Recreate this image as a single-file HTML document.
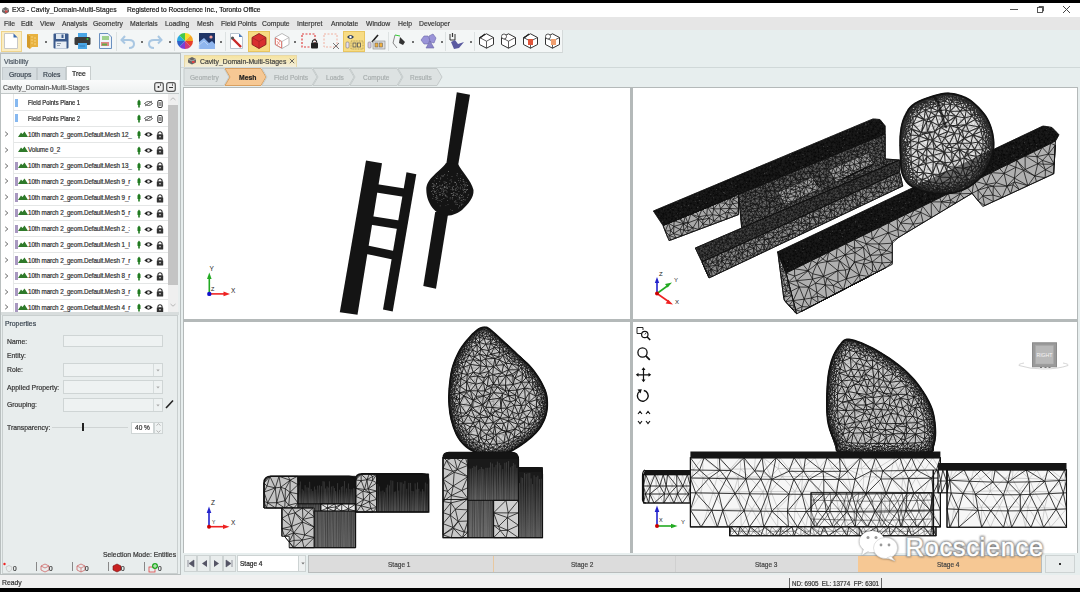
<!DOCTYPE html><html><head><meta charset="utf-8"><style>
*{box-sizing:border-box;margin:0;padding:0}
html,body{width:1080px;height:592px;overflow:hidden;background:#000;font-family:"Liberation Sans",sans-serif}
.a{position:absolute}
.t{position:absolute;white-space:pre;line-height:1;transform-origin:0 0;-webkit-text-stroke:0.2px currentColor}
svg{position:absolute;overflow:visible}
</style></head><body>
<div class="a" style="left:0px;top:0px;width:1080px;height:3px;background:#000"></div>
<div class="a" style="left:0px;top:3px;width:1080px;height:14px;background:#fff"></div>
<svg style="left:0.5px;top:5.5px" width="9" height="9" viewBox="0 0 9 9"><path d="M1 3L4.5 1 8 3 8 6 4.5 8 1 6Z" fill="#6a6a6a"/><path d="M1 3L4.5 5 8 3" stroke="#bbb" stroke-width="0.8" fill="none"/><rect x="4" y="4.5" width="2.5" height="2" fill="#d44"/></svg>
<div class="t" style="left:12px;top:7px;font-size:7.1px;color:#222;transform:scaleX(0.955);">EX3 - Cavity_Domain-Multi-Stages</div>
<div class="t" style="left:127px;top:7px;font-size:7.1px;color:#111;transform:scaleX(0.94);">Registered to Rocscience Inc., Toronto Office</div>
<div class="a" style="left:1010px;top:9px;width:8px;height:1px;background:#555"></div>
<svg style="left:1036px;top:5px" width="9" height="9" viewBox="0 0 9 9"><rect x="1.5" y="2.5" width="5" height="5" fill="none" stroke="#444" stroke-width="0.9"/><path d="M3 2.5V1.5H7.5V6H6.5" fill="none" stroke="#444" stroke-width="0.9"/></svg>
<svg style="left:1062px;top:5px" width="9" height="9" viewBox="0 0 9 9"><path d="M1 1L8 8M8 1L1 8" stroke="#444" stroke-width="1"/></svg>
<div class="a" style="left:0px;top:17px;width:1080px;height:13px;background:#e6e6e6"></div>
<div class="t" style="left:4px;top:20.5px;font-size:7.1px;color:#3a3a3a;transform:scaleX(0.96);">File</div>
<div class="t" style="left:21px;top:20.5px;font-size:7.1px;color:#3a3a3a;transform:scaleX(0.96);">Edit</div>
<div class="t" style="left:40px;top:20.5px;font-size:7.1px;color:#3a3a3a;transform:scaleX(0.96);">View</div>
<div class="t" style="left:62px;top:20.5px;font-size:7.1px;color:#3a3a3a;transform:scaleX(0.96);">Analysis</div>
<div class="t" style="left:93px;top:20.5px;font-size:7.1px;color:#3a3a3a;transform:scaleX(0.96);">Geometry</div>
<div class="t" style="left:130px;top:20.5px;font-size:7.1px;color:#3a3a3a;transform:scaleX(0.96);">Materials</div>
<div class="t" style="left:165px;top:20.5px;font-size:7.1px;color:#3a3a3a;transform:scaleX(0.96);">Loading</div>
<div class="t" style="left:197px;top:20.5px;font-size:7.1px;color:#3a3a3a;transform:scaleX(0.96);">Mesh</div>
<div class="t" style="left:221px;top:20.5px;font-size:7.1px;color:#3a3a3a;transform:scaleX(0.96);">Field Points</div>
<div class="t" style="left:262px;top:20.5px;font-size:7.1px;color:#3a3a3a;transform:scaleX(0.96);">Compute</div>
<div class="t" style="left:297px;top:20.5px;font-size:7.1px;color:#3a3a3a;transform:scaleX(0.96);">Interpret</div>
<div class="t" style="left:331px;top:20.5px;font-size:7.1px;color:#3a3a3a;transform:scaleX(0.96);">Annotate</div>
<div class="t" style="left:366px;top:20.5px;font-size:7.1px;color:#3a3a3a;transform:scaleX(0.96);">Window</div>
<div class="t" style="left:398px;top:20.5px;font-size:7.1px;color:#3a3a3a;transform:scaleX(0.96);">Help</div>
<div class="t" style="left:419px;top:20.5px;font-size:7.1px;color:#3a3a3a;transform:scaleX(0.96);">Developer</div>
<div class="a" style="left:0px;top:30px;width:1080px;height:37px;background:#e7eeee"></div>
<div class="a" style="left:0px;top:30px;width:563px;height:23px;background:#f3f6f6;border-right:1px solid #d5dada;border-bottom:1px solid #d0d6d6"></div>
<svg style="left:1072px;top:59px" width="5" height="4"><path d="M0.5 0.5H4L2.25 3Z" fill="#555"/></svg>
<div class="a" style="left:0px;top:66px;width:1080px;height:1px;background:#d8dede"></div>
<div class="a" style="left:0.5px;top:31px;width:21px;height:21px;background:#fbedc2;border:1px solid #efd48c"></div>
<div class="a" style="left:248px;top:31px;width:22px;height:21px;background:#f7dc84;border:1px solid #e8c560"></div>
<div class="a" style="left:343px;top:31px;width:22px;height:21px;background:#f7dc84;border:1px solid #e8c560"></div>
<svg style="left:4px;top:33px" width="14" height="16" viewBox="0 0 14 16"><path d="M0.5 0.5H9.5L13.5 4.5V15.5H0.5Z" fill="#fff" stroke="#c8c8c8"/><path d="M9.5 0.5L13.5 4.5H9.5Z" fill="#3d6cb0"/></svg>
<svg style="left:26px;top:33px" width="14" height="16" viewBox="0 0 14 16"><path d="M1 1H12V14H6L4 16V3Z" fill="#e8b240"/><path d="M1 1L4 3V16L1 14Z" fill="#d39a2a"/><g fill="#f7d88a"><circle cx="6" cy="4" r=".8"/><circle cx="9" cy="5" r=".8"/><circle cx="6" cy="7" r=".8"/><circle cx="9" cy="8" r=".8"/><circle cx="6" cy="10" r=".8"/><circle cx="9" cy="11" r=".8"/></g></svg>
<div class="a" style="left:45px;top:40.5px;width:2px;height:2px;background:#444;border-radius:1px"></div>
<svg style="left:53px;top:33px" width="16" height="16" viewBox="0 0 16 16"><rect x="0.5" y="0.5" width="15" height="15" rx="1" fill="#3b5a8c"/><rect x="3" y="1" width="9" height="5" fill="#dfe8f2"/><rect x="8.5" y="1.5" width="2" height="3.5" fill="#3b5a8c"/><rect x="2.5" y="8.5" width="11" height="7" fill="#e8eef5"/><path d="M4 10.5H8M4 12.5H7" stroke="#789" stroke-width=".8"/></svg>
<svg style="left:74px;top:33px" width="17" height="16" viewBox="0 0 17 16"><rect x="4" y="0" width="9" height="4" fill="#4aa6e6"/><rect x="0.5" y="4" width="16" height="8" rx="1.5" fill="#3a3a3a"/><circle cx="13.5" cy="6" r="1" fill="#3c3"/><rect x="4" y="10" width="9" height="6" fill="#4aa6e6"/><path d="M5.5 13H11" stroke="#2a70b0" stroke-width=".8"/></svg>
<svg style="left:97px;top:33px" width="16" height="16" viewBox="0 0 16 16"><path d="M2.5 0.5H11L14.5 4V15.5H2.5Z" fill="#eef4fa" stroke="#6a90c0"/><rect x="5" y="3" width="7" height="4" fill="#9ed08e"/><rect x="4" y="9" width="8" height="4" fill="#d88"/><rect x="5" y="10.5" width="5" height="2" fill="#6a4"/></svg>
<div class="a" style="left:116px;top:32px;width:1px;height:19px;background:#dde2e2"></div>
<svg style="left:120px;top:34px" width="16" height="15" viewBox="0 0 16 15"><path d="M5 2L1.5 6 5 9.5M2 6H9Q14 6 14 10Q14 14 9 14" fill="none" stroke="#a9c7e2" stroke-width="2"/></svg>
<div class="a" style="left:140.5px;top:40.5px;width:2px;height:2px;background:#444;border-radius:1px"></div>
<svg style="left:147px;top:34px" width="16" height="15" viewBox="0 0 16 15"><path d="M11 2L14.5 6 11 9.5M14 6H7Q2 6 2 10Q2 14 7 14" fill="none" stroke="#a9c7e2" stroke-width="2"/></svg>
<div class="a" style="left:168.5px;top:40.5px;width:2px;height:2px;background:#444;border-radius:1px"></div>
<div class="a" style="left:174px;top:32px;width:1px;height:19px;background:#dde2e2"></div>
<svg style="left:177px;top:33px" width="16" height="16" viewBox="0 0 16 16"><path d="M8 8L8.00 0.00A8 8 0 0 1 13.66 2.34Z" fill="#f9e02a"/><path d="M8 8L13.66 2.34A8 8 0 0 1 16.00 8.00Z" fill="#f5a623"/><path d="M8 8L16.00 8.00A8 8 0 0 1 13.66 13.66Z" fill="#e8402a"/><path d="M8 8L13.66 13.66A8 8 0 0 1 8.00 16.00Z" fill="#d23a7a"/><path d="M8 8L8.00 16.00A8 8 0 0 1 2.34 13.66Z" fill="#7b3fd6"/><path d="M8 8L2.34 13.66A8 8 0 0 1 0.00 8.00Z" fill="#2f5fc8"/><path d="M8 8L0.00 8.00A8 8 0 0 1 2.34 2.34Z" fill="#2aa8e0"/><path d="M8 8L2.34 2.34A8 8 0 0 1 8.00 0.00Z" fill="#45c84a"/></svg>
<svg style="left:199px;top:33px" width="16" height="16" viewBox="0 0 16 16"><rect width="16" height="16" fill="#1f3566"/><circle cx="12" cy="4" r="1.6" fill="#f4a0a0"/><path d="M0 16V9L5 5 10 10 13 8 16 11V16Z" fill="#8fb6ee"/><path d="M0 16V12L5 8 9 12" fill="none" stroke="#c8dcf8" stroke-width=".7"/></svg>
<div class="a" style="left:219.5px;top:40.5px;width:2px;height:2px;background:#444;border-radius:1px"></div>
<div class="a" style="left:225px;top:32px;width:1px;height:19px;background:#dde2e2"></div>
<svg style="left:229px;top:33px" width="15" height="16" viewBox="0 0 15 16"><path d="M1.5 0.5H10L13.5 4V15.5H1.5Z" fill="#fff" stroke="#b8c4d0"/><path d="M10 0.5L13.5 4H10Z" fill="#4a78b8"/><path d="M3 5L12 14" stroke="#c82828" stroke-width="2.4"/><circle cx="3.5" cy="5" r="1.6" fill="#555"/></svg>
<svg style="left:251px;top:33px" width="16" height="16" viewBox="0 0 16 16"><path d="M8 0.5L15 4.5V11.5L8 15.5 1 11.5V4.5Z" fill="#d83030" stroke="#7a1a1a" stroke-width=".8"/><path d="M1 4.5L8 8.5 15 4.5M8 8.5V15.5" stroke="#9a2020" stroke-width=".6" fill="none"/></svg>
<svg style="left:274px;top:33px" width="16" height="16" viewBox="0 0 16 16"><path d="M8 0.5L15 4.5V11.5L8 15.5 1 11.5V4.5Z" fill="#fff" stroke="#aaa" stroke-width=".8"/><path d="M1 4.5L8 8.5 15 4.5M8 8.5V15.5" stroke="#aaa" stroke-width=".7" fill="none"/><path d="M1.5 5V11.5L7.5 15V8.5Z" fill="none" stroke="#e06a60" stroke-width=".8"/><path d="M3 8L6 12M6 8L3 12" stroke="#e06a60" stroke-width=".6"/></svg>
<div class="a" style="left:294px;top:40.5px;width:2px;height:2px;background:#444;border-radius:1px"></div>
<svg style="left:301px;top:33px" width="18" height="16" viewBox="0 0 18 16"><rect x="1" y="1" width="13" height="13" fill="none" stroke="#e04040" stroke-width="1.2" stroke-dasharray="2 1.5"/><rect x="10" y="9.5" width="7" height="6" rx="1" fill="#222"/><path d="M11.5 9.5V8Q13.5 5.5 15.5 8V9.5" fill="none" stroke="#222" stroke-width="1.2"/></svg>
<svg style="left:323px;top:33px" width="17" height="16" viewBox="0 0 17 16"><rect x="1" y="1" width="13" height="13" fill="none" stroke="#f0b0a0" stroke-width="1" stroke-dasharray="2 1.5"/><path d="M10 10L16 16M16 10L10 16" stroke="#777" stroke-width="1"/></svg>
<svg style="left:345px;top:33px" width="19" height="17" viewBox="0 0 19 17"><path d="M2 4Q5.5 0 9 4Q5.5 8 2 4Z" fill="#2a3a5a"/><circle cx="5.5" cy="4" r="1.2" fill="#fff"/><rect x="1" y="9" width="3" height="6" rx="1" fill="#e8e0f0" stroke="#777" stroke-width=".6"/><rect x="6" y="8" width="12" height="8" fill="none" stroke="#8a7a40" stroke-width=".6" stroke-dasharray="1 .6"/><rect x="8" y="10" width="3" height="4" fill="none" stroke="#555" stroke-width=".8"/><rect x="12.5" y="10" width="3" height="4" fill="none" stroke="#555" stroke-width=".8"/></svg>
<svg style="left:367px;top:33px" width="18" height="17" viewBox="0 0 18 17"><path d="M5 9L11 2" stroke="#222" stroke-width="1.6"/><rect x="1" y="9" width="3" height="6" rx="1" fill="#d8c8e8" stroke="#888" stroke-width=".6"/><rect x="6" y="8" width="12" height="8" fill="#ddd" stroke="#888" stroke-width=".6"/><rect x="8" y="10" width="3" height="4" fill="#f0b040" stroke="#555" stroke-width=".5"/><rect x="12.5" y="10" width="3" height="4" fill="#f0b040" stroke="#555" stroke-width=".5"/></svg>
<div class="a" style="left:388px;top:32px;width:1px;height:19px;background:#dde2e2"></div>
<svg style="left:391px;top:33px" width="17" height="16" viewBox="0 0 17 16"><path d="M4 2L2 10 6 15" fill="none" stroke="#888" stroke-width="1"/><path d="M4 2L9 3" stroke="#3c3" stroke-width="1"/><path d="M9 4L14 9 12 12 8 10Z" fill="#333"/></svg>
<div class="a" style="left:412px;top:40.5px;width:2px;height:2px;background:#444;border-radius:1px"></div>
<svg style="left:420px;top:33px" width="17" height="16" viewBox="0 0 17 16"><path d="M1 7L4 3H8L10 7 8 11H4Z" fill="#9a94d8" stroke="#6a64a8" stroke-width=".6"/><path d="M9 3L13 1 16 5 14 10 10 9Z" fill="#9a94d8" stroke="#6a64a8" stroke-width=".6"/><path d="M10 8L14 15H6Z" fill="#8a84c8" stroke="#6a64a8" stroke-width=".6"/></svg>
<div class="a" style="left:440.5px;top:40.5px;width:2px;height:2px;background:#444;border-radius:1px"></div>
<div class="a" style="left:445px;top:32px;width:1px;height:19px;background:#dde2e2"></div>
<svg style="left:448px;top:33px" width="17" height="16" viewBox="0 0 17 16"><path d="M2 1V7H7V1" fill="none" stroke="#333" stroke-width="1"/><path d="M4.5 0V4" stroke="#333" stroke-width="1.2"/><path d="M3 9L7 7 10 11 16 9 11 15 6 16Z" fill="#5a5aa0"/></svg>
<div class="a" style="left:470px;top:40.5px;width:2px;height:2px;background:#444;border-radius:1px"></div>
<div class="a" style="left:474px;top:32px;width:1px;height:19px;background:#dde2e2"></div>
<svg style="left:478px;top:33px" width="17" height="16" viewBox="0 0 17 16"><path d="M8.5 0.8L15.5 4.5V11.5L8.5 15.2 1.5 11.5V4.5Z" fill="#fff" stroke="#333" stroke-width="1"/><path d="M1.5 4.5L8.5 8.2 15.5 4.5M8.5 8.2V15.2" stroke="#333" stroke-width=".8" fill="none"/><path d="M2 5L7 1" stroke="#222" stroke-width="1.5"/></svg>
<svg style="left:500px;top:33px" width="17" height="16" viewBox="0 0 17 16"><path d="M8.5 0.8L15.5 4.5V11.5L8.5 15.2 1.5 11.5V4.5Z" fill="#fff" stroke="#333" stroke-width="1"/><path d="M1.5 4.5L8.5 8.2 15.5 4.5M8.5 8.2V15.2" stroke="#333" stroke-width=".8" fill="none"/><circle cx="4" cy="3.5" r="2.5" fill="#fff" stroke="#333" stroke-width=".8"/></svg>
<svg style="left:522px;top:33px" width="17" height="16" viewBox="0 0 17 16"><path d="M8.5 0.8L15.5 4.5V11.5L8.5 15.2 1.5 11.5V4.5Z" fill="#fff" stroke="#333" stroke-width="1"/><path d="M1.5 4.5L8.5 8.2 15.5 4.5M8.5 8.2V15.2" stroke="#333" stroke-width=".8" fill="none"/><path d="M2 5L7 1" stroke="#222" stroke-width="1.5"/><rect x="6" y="6" width="5" height="6" fill="#e0553a"/></svg>
<svg style="left:544px;top:33px" width="17" height="16" viewBox="0 0 17 16"><path d="M8.5 0.8L15.5 4.5V11.5L8.5 15.2 1.5 11.5V4.5Z" fill="#fff" stroke="#333" stroke-width="1"/><path d="M1.5 4.5L8.5 8.2 15.5 4.5M8.5 8.2V15.2" stroke="#333" stroke-width=".8" fill="none"/><circle cx="4" cy="3.5" r="2.5" fill="#fff" stroke="#333" stroke-width=".8"/><rect x="7" y="6" width="5" height="6" fill="#f0a070"/></svg>
<div class="a" style="left:0px;top:53px;width:181px;height:522px;background:#e8eeee;border:1px solid #b9bfbf"></div>
<div class="t" style="left:4px;top:59.2px;font-size:7.1px;color:#4a5560;transform:scaleX(0.96);">Visibility</div>
<div class="a" style="left:2px;top:67px;width:35px;height:13px;background:#d5dcdf;border:1px solid #c5cccf;border-bottom:none"></div>
<div class="a" style="left:37px;top:67px;width:29px;height:13px;background:#d5dcdf;border:1px solid #c5cccf;border-bottom:none"></div>
<div class="a" style="left:66px;top:66px;width:25px;height:14px;background:#fff;border:1px solid #c8cece;border-bottom:none"></div>
<div class="t" style="left:9px;top:71.5px;font-size:7.1px;color:#3a4550;transform:scaleX(0.96);">Groups</div>
<div class="t" style="left:43px;top:71.5px;font-size:7.1px;color:#3a4550;transform:scaleX(0.96);">Roles</div>
<div class="t" style="left:72px;top:70.5px;font-size:7.1px;color:#222;transform:scaleX(0.96);">Tree</div>
<div class="a" style="left:1px;top:80px;width:178px;height:14px;background:linear-gradient(#fafbfb,#eef1f1);border-bottom:1px solid #c2c8c8"></div>
<div class="t" style="left:3px;top:84.5px;font-size:7.1px;color:#555;transform:scaleX(0.96);">Cavity_Domain-Multi-Stages</div>
<svg style="left:154px;top:82px" width="10" height="10" viewBox="0 0 10 10"><rect x=".7" y=".7" width="8.6" height="8.6" rx="2" fill="#eee" stroke="#555" stroke-width="1.2"/><circle cx="4.5" cy="5" r="1" fill="#222"/><path d="M6.5 1.5V4" stroke="#555" stroke-width=".8"/></svg>
<svg style="left:166px;top:82px" width="10" height="10" viewBox="0 0 10 10"><rect x=".7" y=".7" width="8.6" height="8.6" rx="2" fill="#eee" stroke="#555" stroke-width="1.2"/><path d="M3 5.5H7" stroke="#333" stroke-width="1"/><path d="M6.5 1.5V4" stroke="#555" stroke-width=".8"/></svg>
<div class="a" style="left:1px;top:94px;width:167px;height:218px;background:#fff"></div>
<div class="a" style="left:13px;top:94px;width:1px;height:218px;background:#e6e8e8"></div>
<div class="a" style="left:0;top:93.5px;width:181px;height:218.5px;overflow:hidden">
<div class="a" style="left:14px;top:16.50px;width:154px;height:1px;background:#e4e6e6"></div>
<div class="a" style="left:15px;top:5.00px;width:2.5px;height:8px;background:#86b8f0"></div>
<div class="t" style="left:28px;top:6.50px;font-size:6.3px;color:#2a2a2a;transform:scaleX(0.93)">Field Points Plane 1</div>
<svg style="left:137px;top:5.00px" width="4" height="9"><path d="M2 0.5L3.5 2.5V6H2.8V8.5H1.2V6H0.5V2.5Z" fill="#1f7a1f"/></svg>
<svg style="left:144px;top:6.00px" width="9" height="7"><path d="M0.5 3.5Q4.5 -0.5 8.5 3.5Q4.5 7.5 0.5 3.5Z" fill="none" stroke="#444" stroke-width=".9"/><path d="M1 6L8 1" stroke="#444" stroke-width=".8"/></svg>
<svg style="left:157px;top:5.00px" width="6" height="9"><rect x=".8" y="1.5" width="4.4" height="7" rx="1.2" fill="#fff" stroke="#333" stroke-width="1"/><path d="M2.3 3V7M3.7 3V7" stroke="#333" stroke-width=".6"/></svg>
<div class="a" style="left:14px;top:32.25px;width:154px;height:1px;background:#e4e6e6"></div>
<div class="a" style="left:15px;top:20.75px;width:2.5px;height:8px;background:#86b8f0"></div>
<div class="t" style="left:28px;top:22.25px;font-size:6.3px;color:#2a2a2a;transform:scaleX(0.93)">Field Points Plane 2</div>
<svg style="left:137px;top:20.75px" width="4" height="9"><path d="M2 0.5L3.5 2.5V6H2.8V8.5H1.2V6H0.5V2.5Z" fill="#1f7a1f"/></svg>
<svg style="left:144px;top:21.75px" width="9" height="7"><path d="M0.5 3.5Q4.5 -0.5 8.5 3.5Q4.5 7.5 0.5 3.5Z" fill="none" stroke="#444" stroke-width=".9"/><path d="M1 6L8 1" stroke="#444" stroke-width=".8"/></svg>
<svg style="left:157px;top:20.75px" width="6" height="9"><rect x=".8" y="1.5" width="4.4" height="7" rx="1.2" fill="#fff" stroke="#333" stroke-width="1"/><path d="M2.3 3V7M3.7 3V7" stroke="#333" stroke-width=".6"/></svg>
<div class="a" style="left:14px;top:48.00px;width:154px;height:1px;background:#e4e6e6"></div>
<svg style="left:4px;top:37.50px" width="5" height="6"><path d="M1.2 .8L3.8 3 1.2 5.2" fill="none" stroke="#555" stroke-width=".9"/></svg>
<svg style="left:18px;top:37.00px" width="10" height="6"><path d="M0 6L3 1.5 4.5 3 6.5 0.5 10 6Z" fill="#2f7a2a"/></svg>
<div class="t" style="left:28px;top:38.00px;font-size:6.3px;color:#333;letter-spacing:-0.1px">10th march 2_geom.Default.Mesh 12_</div>
<svg style="left:137px;top:36.50px" width="4" height="9"><path d="M2 0.5L3.5 2.5V6H2.8V8.5H1.2V6H0.5V2.5Z" fill="#1f7a1f"/></svg>
<svg style="left:144px;top:37.50px" width="9" height="7"><path d="M0.3 3.5Q4.5 -0.8 8.7 3.5Q4.5 7.8 0.3 3.5Z" fill="#222"/><circle cx="4.5" cy="3.5" r="1.3" fill="#eee"/></svg>
<svg style="left:156px;top:36.00px" width="8" height="10"><path d="M2 4.5V3Q4 0.5 6 3V4.5" fill="none" stroke="#333" stroke-width="1.2"/><rect x=".8" y="4.3" width="6.4" height="5.2" rx=".6" fill="#333"/><circle cx="4" cy="6.8" r=".8" fill="#eee"/></svg>
<div class="a" style="left:14px;top:63.75px;width:154px;height:1px;background:#e4e6e6"></div>
<svg style="left:4px;top:53.25px" width="5" height="6"><path d="M1.2 .8L3.8 3 1.2 5.2" fill="none" stroke="#555" stroke-width=".9"/></svg>
<svg style="left:18px;top:52.75px" width="10" height="6"><path d="M0 6L3 1.5 4.5 3 6.5 0.5 10 6Z" fill="#2f7a2a"/></svg>
<div class="t" style="left:28px;top:53.75px;font-size:6.3px;color:#333;letter-spacing:-0.1px">Volume 0_2</div>
<svg style="left:137px;top:52.25px" width="4" height="9"><path d="M2 0.5L3.5 2.5V6H2.8V8.5H1.2V6H0.5V2.5Z" fill="#1f7a1f"/></svg>
<svg style="left:144px;top:53.25px" width="9" height="7"><path d="M0.3 3.5Q4.5 -0.8 8.7 3.5Q4.5 7.8 0.3 3.5Z" fill="#222"/><circle cx="4.5" cy="3.5" r="1.3" fill="#eee"/></svg>
<svg style="left:156px;top:51.75px" width="8" height="10"><path d="M2 4.5V3Q4 0.5 6 3V4.5" fill="none" stroke="#333" stroke-width="1.2"/><rect x=".8" y="4.3" width="6.4" height="5.2" rx=".6" fill="#333"/><circle cx="4" cy="6.8" r=".8" fill="#eee"/></svg>
<div class="a" style="left:14px;top:79.50px;width:154px;height:1px;background:#e4e6e6"></div>
<svg style="left:4px;top:69.00px" width="5" height="6"><path d="M1.2 .8L3.8 3 1.2 5.2" fill="none" stroke="#555" stroke-width=".9"/></svg>
<div class="a" style="left:15px;top:68.00px;width:2.5px;height:8.5px;background:#a898c0"></div>
<svg style="left:18px;top:68.50px" width="10" height="6"><path d="M0 6L3 1.5 4.5 3 6.5 0.5 10 6Z" fill="#2f7a2a"/></svg>
<div class="t" style="left:28px;top:69.50px;font-size:6.3px;color:#333;letter-spacing:-0.1px">10th march 2_geom.Default.Mesh 13_</div>
<svg style="left:137px;top:68.00px" width="4" height="9"><path d="M2 0.5L3.5 2.5V6H2.8V8.5H1.2V6H0.5V2.5Z" fill="#1f7a1f"/></svg>
<svg style="left:144px;top:69.00px" width="9" height="7"><path d="M0.3 3.5Q4.5 -0.8 8.7 3.5Q4.5 7.8 0.3 3.5Z" fill="#222"/><circle cx="4.5" cy="3.5" r="1.3" fill="#eee"/></svg>
<svg style="left:156px;top:67.50px" width="8" height="10"><path d="M2 4.5V3Q4 0.5 6 3V4.5" fill="none" stroke="#333" stroke-width="1.2"/><rect x=".8" y="4.3" width="6.4" height="5.2" rx=".6" fill="#333"/><circle cx="4" cy="6.8" r=".8" fill="#eee"/></svg>
<div class="a" style="left:14px;top:95.25px;width:154px;height:1px;background:#e4e6e6"></div>
<svg style="left:4px;top:84.75px" width="5" height="6"><path d="M1.2 .8L3.8 3 1.2 5.2" fill="none" stroke="#555" stroke-width=".9"/></svg>
<div class="a" style="left:15px;top:83.75px;width:2.5px;height:8.5px;background:#a898c0"></div>
<svg style="left:18px;top:84.25px" width="10" height="6"><path d="M0 6L3 1.5 4.5 3 6.5 0.5 10 6Z" fill="#2f7a2a"/></svg>
<div class="t" style="left:28px;top:85.25px;font-size:6.3px;color:#333;letter-spacing:-0.1px">10th march 2_geom.Default.Mesh 9_r</div>
<svg style="left:137px;top:83.75px" width="4" height="9"><path d="M2 0.5L3.5 2.5V6H2.8V8.5H1.2V6H0.5V2.5Z" fill="#1f7a1f"/></svg>
<svg style="left:144px;top:84.75px" width="9" height="7"><path d="M0.3 3.5Q4.5 -0.8 8.7 3.5Q4.5 7.8 0.3 3.5Z" fill="#222"/><circle cx="4.5" cy="3.5" r="1.3" fill="#eee"/></svg>
<svg style="left:156px;top:83.25px" width="8" height="10"><path d="M2 4.5V3Q4 0.5 6 3V4.5" fill="none" stroke="#333" stroke-width="1.2"/><rect x=".8" y="4.3" width="6.4" height="5.2" rx=".6" fill="#333"/><circle cx="4" cy="6.8" r=".8" fill="#eee"/></svg>
<div class="a" style="left:14px;top:111.00px;width:154px;height:1px;background:#e4e6e6"></div>
<svg style="left:4px;top:100.50px" width="5" height="6"><path d="M1.2 .8L3.8 3 1.2 5.2" fill="none" stroke="#555" stroke-width=".9"/></svg>
<div class="a" style="left:15px;top:99.50px;width:2.5px;height:8.5px;background:#a898c0"></div>
<svg style="left:18px;top:100.00px" width="10" height="6"><path d="M0 6L3 1.5 4.5 3 6.5 0.5 10 6Z" fill="#2f7a2a"/></svg>
<div class="t" style="left:28px;top:101.00px;font-size:6.3px;color:#333;letter-spacing:-0.1px">10th march 2_geom.Default.Mesh 9_r</div>
<svg style="left:137px;top:99.50px" width="4" height="9"><path d="M2 0.5L3.5 2.5V6H2.8V8.5H1.2V6H0.5V2.5Z" fill="#1f7a1f"/></svg>
<svg style="left:144px;top:100.50px" width="9" height="7"><path d="M0.3 3.5Q4.5 -0.8 8.7 3.5Q4.5 7.8 0.3 3.5Z" fill="#222"/><circle cx="4.5" cy="3.5" r="1.3" fill="#eee"/></svg>
<svg style="left:156px;top:99.00px" width="8" height="10"><path d="M2 4.5V3Q4 0.5 6 3V4.5" fill="none" stroke="#333" stroke-width="1.2"/><rect x=".8" y="4.3" width="6.4" height="5.2" rx=".6" fill="#333"/><circle cx="4" cy="6.8" r=".8" fill="#eee"/></svg>
<div class="a" style="left:14px;top:126.75px;width:154px;height:1px;background:#e4e6e6"></div>
<svg style="left:4px;top:116.25px" width="5" height="6"><path d="M1.2 .8L3.8 3 1.2 5.2" fill="none" stroke="#555" stroke-width=".9"/></svg>
<div class="a" style="left:15px;top:115.25px;width:2.5px;height:8.5px;background:#a898c0"></div>
<svg style="left:18px;top:115.75px" width="10" height="6"><path d="M0 6L3 1.5 4.5 3 6.5 0.5 10 6Z" fill="#2f7a2a"/></svg>
<div class="t" style="left:28px;top:116.75px;font-size:6.3px;color:#333;letter-spacing:-0.1px">10th march 2_geom.Default.Mesh 5_r</div>
<svg style="left:137px;top:115.25px" width="4" height="9"><path d="M2 0.5L3.5 2.5V6H2.8V8.5H1.2V6H0.5V2.5Z" fill="#1f7a1f"/></svg>
<svg style="left:144px;top:116.25px" width="9" height="7"><path d="M0.3 3.5Q4.5 -0.8 8.7 3.5Q4.5 7.8 0.3 3.5Z" fill="#222"/><circle cx="4.5" cy="3.5" r="1.3" fill="#eee"/></svg>
<svg style="left:156px;top:114.75px" width="8" height="10"><path d="M2 4.5V3Q4 0.5 6 3V4.5" fill="none" stroke="#333" stroke-width="1.2"/><rect x=".8" y="4.3" width="6.4" height="5.2" rx=".6" fill="#333"/><circle cx="4" cy="6.8" r=".8" fill="#eee"/></svg>
<div class="a" style="left:14px;top:142.50px;width:154px;height:1px;background:#e4e6e6"></div>
<svg style="left:4px;top:132.00px" width="5" height="6"><path d="M1.2 .8L3.8 3 1.2 5.2" fill="none" stroke="#555" stroke-width=".9"/></svg>
<div class="a" style="left:15px;top:131.00px;width:2.5px;height:8.5px;background:#a898c0"></div>
<svg style="left:18px;top:131.50px" width="10" height="6"><path d="M0 6L3 1.5 4.5 3 6.5 0.5 10 6Z" fill="#2f7a2a"/></svg>
<div class="t" style="left:28px;top:132.50px;font-size:6.3px;color:#333;letter-spacing:-0.1px">10th march 2_geom.Default.Mesh 2_:</div>
<svg style="left:137px;top:131.00px" width="4" height="9"><path d="M2 0.5L3.5 2.5V6H2.8V8.5H1.2V6H0.5V2.5Z" fill="#1f7a1f"/></svg>
<svg style="left:144px;top:132.00px" width="9" height="7"><path d="M0.3 3.5Q4.5 -0.8 8.7 3.5Q4.5 7.8 0.3 3.5Z" fill="#222"/><circle cx="4.5" cy="3.5" r="1.3" fill="#eee"/></svg>
<svg style="left:156px;top:130.50px" width="8" height="10"><path d="M2 4.5V3Q4 0.5 6 3V4.5" fill="none" stroke="#333" stroke-width="1.2"/><rect x=".8" y="4.3" width="6.4" height="5.2" rx=".6" fill="#333"/><circle cx="4" cy="6.8" r=".8" fill="#eee"/></svg>
<div class="a" style="left:14px;top:158.25px;width:154px;height:1px;background:#e4e6e6"></div>
<svg style="left:4px;top:147.75px" width="5" height="6"><path d="M1.2 .8L3.8 3 1.2 5.2" fill="none" stroke="#555" stroke-width=".9"/></svg>
<div class="a" style="left:15px;top:146.75px;width:2.5px;height:8.5px;background:#a898c0"></div>
<svg style="left:18px;top:147.25px" width="10" height="6"><path d="M0 6L3 1.5 4.5 3 6.5 0.5 10 6Z" fill="#2f7a2a"/></svg>
<div class="t" style="left:28px;top:148.25px;font-size:6.3px;color:#333;letter-spacing:-0.1px">10th march 2_geom.Default.Mesh 1_I</div>
<svg style="left:137px;top:146.75px" width="4" height="9"><path d="M2 0.5L3.5 2.5V6H2.8V8.5H1.2V6H0.5V2.5Z" fill="#1f7a1f"/></svg>
<svg style="left:144px;top:147.75px" width="9" height="7"><path d="M0.3 3.5Q4.5 -0.8 8.7 3.5Q4.5 7.8 0.3 3.5Z" fill="#222"/><circle cx="4.5" cy="3.5" r="1.3" fill="#eee"/></svg>
<svg style="left:156px;top:146.25px" width="8" height="10"><path d="M2 4.5V3Q4 0.5 6 3V4.5" fill="none" stroke="#333" stroke-width="1.2"/><rect x=".8" y="4.3" width="6.4" height="5.2" rx=".6" fill="#333"/><circle cx="4" cy="6.8" r=".8" fill="#eee"/></svg>
<div class="a" style="left:14px;top:174.00px;width:154px;height:1px;background:#e4e6e6"></div>
<svg style="left:4px;top:163.50px" width="5" height="6"><path d="M1.2 .8L3.8 3 1.2 5.2" fill="none" stroke="#555" stroke-width=".9"/></svg>
<div class="a" style="left:15px;top:162.50px;width:2.5px;height:8.5px;background:#a898c0"></div>
<svg style="left:18px;top:163.00px" width="10" height="6"><path d="M0 6L3 1.5 4.5 3 6.5 0.5 10 6Z" fill="#2f7a2a"/></svg>
<div class="t" style="left:28px;top:164.00px;font-size:6.3px;color:#333;letter-spacing:-0.1px">10th march 2_geom.Default.Mesh 7_r</div>
<svg style="left:137px;top:162.50px" width="4" height="9"><path d="M2 0.5L3.5 2.5V6H2.8V8.5H1.2V6H0.5V2.5Z" fill="#1f7a1f"/></svg>
<svg style="left:144px;top:163.50px" width="9" height="7"><path d="M0.3 3.5Q4.5 -0.8 8.7 3.5Q4.5 7.8 0.3 3.5Z" fill="#222"/><circle cx="4.5" cy="3.5" r="1.3" fill="#eee"/></svg>
<svg style="left:156px;top:162.00px" width="8" height="10"><path d="M2 4.5V3Q4 0.5 6 3V4.5" fill="none" stroke="#333" stroke-width="1.2"/><rect x=".8" y="4.3" width="6.4" height="5.2" rx=".6" fill="#333"/><circle cx="4" cy="6.8" r=".8" fill="#eee"/></svg>
<div class="a" style="left:14px;top:189.75px;width:154px;height:1px;background:#e4e6e6"></div>
<svg style="left:4px;top:179.25px" width="5" height="6"><path d="M1.2 .8L3.8 3 1.2 5.2" fill="none" stroke="#555" stroke-width=".9"/></svg>
<div class="a" style="left:15px;top:178.25px;width:2.5px;height:8.5px;background:#a898c0"></div>
<svg style="left:18px;top:178.75px" width="10" height="6"><path d="M0 6L3 1.5 4.5 3 6.5 0.5 10 6Z" fill="#2f7a2a"/></svg>
<div class="t" style="left:28px;top:179.75px;font-size:6.3px;color:#333;letter-spacing:-0.1px">10th march 2_geom.Default.Mesh 8_r</div>
<svg style="left:137px;top:178.25px" width="4" height="9"><path d="M2 0.5L3.5 2.5V6H2.8V8.5H1.2V6H0.5V2.5Z" fill="#1f7a1f"/></svg>
<svg style="left:144px;top:179.25px" width="9" height="7"><path d="M0.3 3.5Q4.5 -0.8 8.7 3.5Q4.5 7.8 0.3 3.5Z" fill="#222"/><circle cx="4.5" cy="3.5" r="1.3" fill="#eee"/></svg>
<svg style="left:156px;top:177.75px" width="8" height="10"><path d="M2 4.5V3Q4 0.5 6 3V4.5" fill="none" stroke="#333" stroke-width="1.2"/><rect x=".8" y="4.3" width="6.4" height="5.2" rx=".6" fill="#333"/><circle cx="4" cy="6.8" r=".8" fill="#eee"/></svg>
<div class="a" style="left:14px;top:205.50px;width:154px;height:1px;background:#e4e6e6"></div>
<svg style="left:4px;top:195.00px" width="5" height="6"><path d="M1.2 .8L3.8 3 1.2 5.2" fill="none" stroke="#555" stroke-width=".9"/></svg>
<div class="a" style="left:15px;top:194.00px;width:2.5px;height:8.5px;background:#a898c0"></div>
<svg style="left:18px;top:194.50px" width="10" height="6"><path d="M0 6L3 1.5 4.5 3 6.5 0.5 10 6Z" fill="#2f7a2a"/></svg>
<div class="t" style="left:28px;top:195.50px;font-size:6.3px;color:#333;letter-spacing:-0.1px">10th march 2_geom.Default.Mesh 3_r</div>
<svg style="left:137px;top:194.00px" width="4" height="9"><path d="M2 0.5L3.5 2.5V6H2.8V8.5H1.2V6H0.5V2.5Z" fill="#1f7a1f"/></svg>
<svg style="left:144px;top:195.00px" width="9" height="7"><path d="M0.3 3.5Q4.5 -0.8 8.7 3.5Q4.5 7.8 0.3 3.5Z" fill="#222"/><circle cx="4.5" cy="3.5" r="1.3" fill="#eee"/></svg>
<svg style="left:156px;top:193.50px" width="8" height="10"><path d="M2 4.5V3Q4 0.5 6 3V4.5" fill="none" stroke="#333" stroke-width="1.2"/><rect x=".8" y="4.3" width="6.4" height="5.2" rx=".6" fill="#333"/><circle cx="4" cy="6.8" r=".8" fill="#eee"/></svg>
<div class="a" style="left:14px;top:221.25px;width:154px;height:1px;background:#e4e6e6"></div>
<svg style="left:4px;top:210.75px" width="5" height="6"><path d="M1.2 .8L3.8 3 1.2 5.2" fill="none" stroke="#555" stroke-width=".9"/></svg>
<div class="a" style="left:15px;top:209.75px;width:2.5px;height:8.5px;background:#a898c0"></div>
<svg style="left:18px;top:210.25px" width="10" height="6"><path d="M0 6L3 1.5 4.5 3 6.5 0.5 10 6Z" fill="#2f7a2a"/></svg>
<div class="t" style="left:28px;top:211.25px;font-size:6.3px;color:#333;letter-spacing:-0.1px">10th march 2_geom.Default.Mesh 4_r</div>
<svg style="left:137px;top:209.75px" width="4" height="9"><path d="M2 0.5L3.5 2.5V6H2.8V8.5H1.2V6H0.5V2.5Z" fill="#1f7a1f"/></svg>
<svg style="left:144px;top:210.75px" width="9" height="7"><path d="M0.3 3.5Q4.5 -0.8 8.7 3.5Q4.5 7.8 0.3 3.5Z" fill="#222"/><circle cx="4.5" cy="3.5" r="1.3" fill="#eee"/></svg>
<svg style="left:156px;top:209.25px" width="8" height="10"><path d="M2 4.5V3Q4 0.5 6 3V4.5" fill="none" stroke="#333" stroke-width="1.2"/><rect x=".8" y="4.3" width="6.4" height="5.2" rx=".6" fill="#333"/><circle cx="4" cy="6.8" r=".8" fill="#eee"/></svg>
</div>
<div class="a" style="left:168px;top:94px;width:10px;height:218px;background:#efefef"></div>
<div class="a" style="left:168px;top:105px;width:10px;height:180px;background:#c4c4c4"></div>
<svg style="left:170px;top:97px" width="6" height="4"><path d="M.5 3L3 .8 5.5 3" fill="none" stroke="#aaa" stroke-width=".8"/></svg>
<svg style="left:170px;top:303px" width="6" height="4"><path d="M.5 1L3 3.2 5.5 1" fill="none" stroke="#aaa" stroke-width=".8"/></svg>
<div class="a" style="left:1px;top:312px;width:178px;height:3px;background:#d8dddd"></div>
<div class="a" style="left:2px;top:315px;width:176px;height:259px;background:#e8eded;border:1px solid #c9cfcf"></div>
<div class="t" style="left:4.5px;top:320.5px;font-size:7.1px;color:#3a4550;transform:scaleX(0.96);">Properties</div>
<div class="t" style="left:7px;top:338.5px;font-size:7.1px;color:#333;transform:scaleX(0.96);">Name:</div>
<div class="a" style="left:62.5px;top:334.5px;width:100px;height:12px;background:#eef2f2;border:1px solid #cfd5d5"></div>
<div class="t" style="left:7px;top:352.5px;font-size:7.1px;color:#333;transform:scaleX(0.96);">Entity:</div>
<div class="t" style="left:7px;top:367px;font-size:7.1px;color:#333;transform:scaleX(0.96);">Role:</div>
<div class="a" style="left:62.5px;top:362.5px;width:100px;height:14px;background:#eef2f2;border:1px solid #cfd5d5"></div>
<div class="a" style="left:152.5px;top:363.5px;width:1px;height:12px;background:#d6dcdc"></div>
<svg style="left:155.5px;top:368.5px" width="4" height="3"><path d="M.3 .5H3.7L2 2.5Z" fill="#aaa"/></svg>
<div class="t" style="left:7px;top:385px;font-size:7.1px;color:#333;transform:scaleX(0.96);">Applied Property:</div>
<div class="a" style="left:62.5px;top:380px;width:100px;height:13.5px;background:#eef2f2;border:1px solid #cfd5d5"></div>
<div class="a" style="left:152.5px;top:381px;width:1px;height:11.5px;background:#d6dcdc"></div>
<svg style="left:155.5px;top:385.75px" width="4" height="3"><path d="M.3 .5H3.7L2 2.5Z" fill="#aaa"/></svg>
<div class="t" style="left:7px;top:402px;font-size:7.1px;color:#333;transform:scaleX(0.96);">Grouping:</div>
<div class="a" style="left:62.5px;top:397.5px;width:100px;height:14px;background:#eef2f2;border:1px solid #cfd5d5"></div>
<div class="a" style="left:152.5px;top:398.5px;width:1px;height:12px;background:#d6dcdc"></div>
<svg style="left:155.5px;top:403.5px" width="4" height="3"><path d="M.3 .5H3.7L2 2.5Z" fill="#aaa"/></svg>
<svg style="left:165px;top:399px" width="9" height="10" viewBox="0 0 9 10"><path d="M1 9L8 1.5" stroke="#222" stroke-width="1.6"/></svg>
<div class="t" style="left:7px;top:424.5px;font-size:7.1px;color:#333;transform:scaleX(0.96);">Transparency:</div>
<div class="a" style="left:52px;top:426.5px;width:76px;height:1px;background:#cfd4d4"></div>
<div class="a" style="left:81.5px;top:423px;width:2.5px;height:8px;background:#222"></div>
<div class="a" style="left:131px;top:421.5px;width:23px;height:12px;background:#fff;border:1px solid #cfd5d5"></div>
<div class="t" style="left:134.5px;top:425px;font-size:6.8px;color:#333;transform:scaleX(0.96);">40 %</div>
<div class="a" style="left:154px;top:421.5px;width:8.5px;height:12px;background:#eef2f2;border:1px solid #cfd5d5"></div>
<svg style="left:156px;top:423px" width="5" height="10"><path d="M.5 2.5L2.5 .7 4.5 2.5M.5 7.5L2.5 9.3 4.5 7.5" fill="none" stroke="#999" stroke-width=".7"/></svg>
<div class="t" style="left:103px;top:552px;font-size:7.1px;color:#333;transform:scaleX(0.96);">Selection Mode: Entities</div>
<svg style="left:3px;top:562px" width="11" height="11" viewBox="0 0 11 11"><circle cx="1.5" cy="2" r="1.2" fill="#e22"/><path d="M3 5Q6 2 9 5Q9 9 6 10Q3 9 3 5Z" fill="none" stroke="#bbb" stroke-width=".7"/></svg>
<div class="t" style="left:13px;top:566px;font-size:6.8px;color:#333;transform:scaleX(0.96);">0</div>
<svg style="left:39px;top:562px" width="11" height="11" viewBox="0 0 11 11"><path d="M2 4L6 2 10 4 10 8 6 10 2 8Z" fill="none" stroke="#c55" stroke-width=".7"/><path d="M2 4L6 6 10 4" stroke="#c55" stroke-width=".7" fill="none"/></svg>
<div class="t" style="left:49px;top:566px;font-size:6.8px;color:#333;transform:scaleX(0.96);">0</div>
<svg style="left:75px;top:562px" width="11" height="11" viewBox="0 0 11 11"><path d="M2 4L6 2 10 4 10 8 6 10 2 8Z" fill="none" stroke="#c66" stroke-width=".8"/><path d="M2 4L6 6 10 4M6 6V10" stroke="#c66" stroke-width=".7" fill="none"/></svg>
<div class="t" style="left:85px;top:566px;font-size:6.8px;color:#333;transform:scaleX(0.96);">0</div>
<svg style="left:111px;top:562px" width="11" height="11" viewBox="0 0 11 11"><path d="M2 4L6 2 10 4 10 8 6 10 2 8Z" fill="#c82020" stroke="#701010" stroke-width=".6"/></svg>
<div class="t" style="left:121px;top:566px;font-size:6.8px;color:#333;transform:scaleX(0.96);">0</div>
<svg style="left:148px;top:562px" width="11" height="11" viewBox="0 0 11 11"><rect x="1" y="5" width="6" height="5" fill="none" stroke="#d44" stroke-width=".8"/><circle cx="7" cy="4" r="3" fill="#2a2"/><path d="M5 4H9M7 2V6" stroke="#fff" stroke-width=".8"/></svg>
<div class="t" style="left:158px;top:566px;font-size:6.8px;color:#333;transform:scaleX(0.96);">0</div>
<div class="a" style="left:36px;top:562px;width:1px;height:9px;background:#888"></div>
<div class="a" style="left:72px;top:562px;width:1px;height:9px;background:#888"></div>
<div class="a" style="left:108px;top:562px;width:1px;height:9px;background:#888"></div>
<div class="a" style="left:144px;top:562px;width:1px;height:9px;background:#888"></div>
<div class="a" style="left:0px;top:575px;width:1080px;height:13px;background:#f0f0f0"></div>
<div class="t" style="left:2px;top:580px;font-size:7.1px;color:#333;transform:scaleX(0.96);">Ready</div>
<div class="a" style="left:789px;top:578px;width:1px;height:10px;background:#666"></div>
<div class="t" style="left:792px;top:581px;font-size:6.5px;color:#333;transform:scaleX(0.96);">ND: 6905  EL: 13774  FP: 6301</div>
<div class="a" style="left:881px;top:578px;width:1px;height:10px;background:#666"></div>
<div class="a" style="left:0px;top:588px;width:1080px;height:4px;background:#000"></div>
<div class="a" style="left:181px;top:53px;width:899px;height:522px;background:#e7eeee"></div>
<div class="a" style="left:184px;top:54.5px;width:113px;height:12px;background:linear-gradient(#f6e4a0,#f2eedd);border:1px solid #e8d8a8;border-bottom:none"></div>
<svg style="left:187px;top:56px" width="10" height="9" viewBox="0 0 10 9"><path d="M1 3L5 1 9 3V6.5L5 8.5 1 6.5Z" fill="#666"/><path d="M1 3L5 5 9 3" stroke="#ccc" stroke-width=".7" fill="none"/><rect x="5" y="5" width="2.6" height="2" fill="#d44"/></svg>
<div class="t" style="left:199.5px;top:58.5px;font-size:7.1px;color:#444;transform:scaleX(0.96);">Cavity_Domain-Multi-Stages</div>
<svg style="left:289px;top:57.5px" width="6" height="6" viewBox="0 0 6 6"><path d="M.8 .8L5.2 5.2M5.2 .8L.8 5.2" stroke="#555" stroke-width=".9"/></svg>
<div class="a" style="left:181px;top:66.5px;width:899px;height:1px;background:#d0d8d8"></div>
<svg style="left:0px;top:0px" width="1080" height="100" viewBox="0 0 1080 100"><path d="M184 68.5H224L229 77.0L224 85.5H184Z" fill="#dde2e2" stroke="#c5cbcb" stroke-width="1"/><path d="M225 68.5H261L266 77.0L261 85.5H225L230 77.0Z" fill="#f6c894" stroke="#d9a060" stroke-width="1"/><path d="M262 68.5H312L317 77.0L312 85.5H262L267 77.0Z" fill="#dde2e2" stroke="#c5cbcb" stroke-width="1"/><path d="M313 68.5H349L354 77.0L349 85.5H313L318 77.0Z" fill="#dde2e2" stroke="#c5cbcb" stroke-width="1"/><path d="M350 68.5H397L402 77.0L397 85.5H350L355 77.0Z" fill="#dde2e2" stroke="#c5cbcb" stroke-width="1"/><path d="M398 68.5H437L442 77.0L437 85.5H398L403 77.0Z" fill="#dde2e2" stroke="#c5cbcb" stroke-width="1"/></svg>
<div class="t" style="left:190.0px;top:74.5px;font-size:7.1px;color:#a8aeae;transform:scaleX(0.92);">Geometry</div>
<div class="t" style="left:238.5px;top:74.5px;font-size:7.1px;color:#222;transform:scaleX(0.96);"><b>Mesh</b></div>
<div class="t" style="left:274.0px;top:74.5px;font-size:7.1px;color:#a8aeae;transform:scaleX(0.92);">Field Points</div>
<div class="t" style="left:326.0px;top:74.5px;font-size:7.1px;color:#a8aeae;transform:scaleX(0.92);">Loads</div>
<div class="t" style="left:363.0px;top:74.5px;font-size:7.1px;color:#a8aeae;transform:scaleX(0.92);">Compute</div>
<div class="t" style="left:410.0px;top:74.5px;font-size:7.1px;color:#a8aeae;transform:scaleX(0.92);">Results</div>
<div class="a" style="left:183px;top:87px;width:895px;height:466px;background:#b4b9b9"></div>
<div class="a" style="left:184px;top:88px;width:445.5px;height:231px;background:#fff"></div>
<div class="a" style="left:632.5px;top:88px;width:444.5px;height:231px;background:#fff"></div>
<div class="a" style="left:184px;top:322px;width:445.5px;height:230.5px;background:#fff"></div>
<div class="a" style="left:632.5px;top:322px;width:444.5px;height:230.5px;background:#fff"></div>
<div class="a" style="left:184px;top:555px;width:12.5px;height:17px;background:#e9eded;border:1px solid #cdd3d3"></div>
<div class="a" style="left:197px;top:555px;width:12.5px;height:17px;background:#e9eded;border:1px solid #cdd3d3"></div>
<div class="a" style="left:210px;top:555px;width:12.5px;height:17px;background:#e9eded;border:1px solid #cdd3d3"></div>
<div class="a" style="left:223px;top:555px;width:12.5px;height:17px;background:#e9eded;border:1px solid #cdd3d3"></div>
<svg style="left:184px;top:555px" width="52" height="17" viewBox="0 0 52 17"><path d="M4 5V12M10 5L5 8.5 10 12Z" fill="#556" stroke="#556" stroke-width=".6"/><path d="M23 5L18 8.5 23 12Z" fill="#556"/><path d="M30 5L35 8.5 30 12Z" fill="#556"/><path d="M48 5V12M42 5L47 8.5 42 12Z" fill="#556" stroke="#556" stroke-width=".6"/></svg>
<div class="a" style="left:237px;top:555px;width:62px;height:17px;background:#fff;border:1px solid #cdd3d3"></div>
<div class="t" style="left:240px;top:561px;font-size:6.8px;color:#222;transform:scaleX(0.96);">Stage 4</div>
<div class="a" style="left:298px;top:555px;width:8px;height:17px;background:#eef1f1;border:1px solid #cdd3d3"></div>
<svg style="left:300.5px;top:562px" width="4" height="3"><path d="M.3 .5H3.7L2 2.5Z" fill="#777"/></svg>
<div class="a" style="left:308px;top:555px;width:734px;height:18px;background:#dcdcdc;border:1px solid #b8bcbc"></div>
<div class="a" style="left:858px;top:556px;width:183px;height:16px;background:#f6c894"></div>
<div class="a" style="left:492.5px;top:556px;width:1px;height:16px;background:#e8c8a0"></div>
<div class="a" style="left:675px;top:556px;width:1px;height:16px;background:#d0d0d0"></div>
<div class="t" style="left:388px;top:561.5px;font-size:6.8px;color:#444;transform:scaleX(0.96);">Stage 1</div>
<div class="t" style="left:571px;top:561.5px;font-size:6.8px;color:#444;transform:scaleX(0.96);">Stage 2</div>
<div class="t" style="left:755px;top:561.5px;font-size:6.8px;color:#444;transform:scaleX(0.96);">Stage 3</div>
<div class="t" style="left:937px;top:561.5px;font-size:6.8px;color:#444;transform:scaleX(0.96);">Stage 4</div>
<div class="a" style="left:1045px;top:555px;width:30px;height:18px;background:#e9eded;border:1px solid #cdd3d3"></div>
<div class="a" style="left:1059px;top:563px;width:2px;height:2px;background:#333"></div>
<svg style="left:0;top:0" width="1080" height="592" viewBox="0 0 1080 592"><polygon points="366,160.5 382,163.3 357.5,314.7 339.8,312.3" fill="#141414" stroke="none" stroke-width="0"/><polygon points="406.5,172.3 416.3,174.3 392.7,311.5 383,309.6" fill="#141414" stroke="none" stroke-width="0"/><polygon points="377.6,184.2 404.7,188.4 403.3,196.8 376.3,192.6" fill="#141414" stroke="none" stroke-width="0"/><polygon points="372.4,216.3 399.3,220.5 397.8,228.9 371.1,224.7" fill="#141414" stroke="none" stroke-width="0"/><polygon points="367.7,245.5 394,251 392.6,259.4 366.3,253.9" fill="#141414" stroke="none" stroke-width="0"/><polygon points="456.8,92.3 470,94.7 458,166 446,166" fill="#141414" stroke="none" stroke-width="0"/><polygon points="435.2,212 448.4,212 436,288.8 423.3,286" fill="#141414" stroke="none" stroke-width="0"/><path d="M446 163C440 172 426 178 426.3 190C426.5 204 436 214 444 215.5C452 216.5 458 213 462 210C468 204 474 198 473.5 190C471 180 462 172 458 164Z" fill="#141414"/><path d="M450.7 179.7h0.7v0.7h-0.7zM465.1 184.8h0.8v0.8h-0.8zM463.5 181.2h0.8v0.8h-0.8zM447.7 204.3h0.6v0.6h-0.6zM463.2 190.3h0.6v0.6h-0.6zM457.7 198.8h0.6v0.6h-0.6zM456.0 184.1h0.6v0.6h-0.6zM442.0 185.3h0.7v0.7h-0.7zM434.2 191.3h0.7v0.7h-0.7zM440.3 187.5h0.5v0.5h-0.5zM467.1 189.1h0.8v0.8h-0.8zM465.8 182.2h0.7v0.7h-0.7zM454.1 201.4h0.8v0.8h-0.8zM437.4 175.8h0.6v0.6h-0.6zM444.1 186.0h0.8v0.8h-0.8zM459.1 182.4h0.6v0.6h-0.6zM466.3 190.2h0.7v0.7h-0.7zM441.9 189.7h0.5v0.5h-0.5zM451.3 188.9h0.5v0.5h-0.5zM452.5 189.6h0.8v0.8h-0.8zM451.1 193.0h0.7v0.7h-0.7zM438.9 192.5h0.6v0.6h-0.6zM447.5 178.5h0.5v0.5h-0.5zM435.2 199.1h0.5v0.5h-0.5zM436.5 198.5h0.7v0.7h-0.7zM460.2 178.1h0.6v0.6h-0.6zM444.1 174.4h0.5v0.5h-0.5zM437.4 186.0h0.9v0.9h-0.9zM455.5 190.3h0.8v0.8h-0.8zM464.2 189.2h0.9v0.9h-0.9zM444.4 183.3h0.6v0.6h-0.6zM451.8 187.2h0.6v0.6h-0.6zM433.0 185.7h0.5v0.5h-0.5zM458.1 178.5h0.6v0.6h-0.6zM431.1 191.2h0.7v0.7h-0.7zM460.6 200.2h0.6v0.6h-0.6zM446.7 184.5h0.8v0.8h-0.8zM442.8 187.2h0.6v0.6h-0.6zM452.5 195.1h0.8v0.8h-0.8zM439.4 181.2h0.7v0.7h-0.7zM462.5 188.7h0.9v0.9h-0.9zM433.7 190.7h0.6v0.6h-0.6zM464.0 185.1h0.5v0.5h-0.5zM436.4 183.9h0.5v0.5h-0.5zM439.6 194.1h0.9v0.9h-0.9zM444.1 193.4h0.6v0.6h-0.6zM457.3 189.5h0.6v0.6h-0.6zM441.4 190.7h0.7v0.7h-0.7zM436.0 178.2h0.7v0.7h-0.7zM442.6 194.0h0.5v0.5h-0.5zM458.5 191.0h0.8v0.8h-0.8zM441.7 192.9h0.6v0.6h-0.6zM443.4 191.2h0.8v0.8h-0.8zM437.3 197.7h0.9v0.9h-0.9zM446.6 192.4h0.7v0.7h-0.7zM443.6 181.6h0.6v0.6h-0.6zM459.1 205.5h0.9v0.9h-0.9zM449.4 186.4h0.8v0.8h-0.8zM435.2 190.9h0.9v0.9h-0.9zM448.1 171.1h0.8v0.8h-0.8zM452.9 193.7h0.6v0.6h-0.6zM460.5 184.1h0.6v0.6h-0.6zM462.1 194.8h0.7v0.7h-0.7zM460.1 188.4h0.8v0.8h-0.8zM464.4 191.6h0.7v0.7h-0.7zM437.8 191.8h0.5v0.5h-0.5zM445.6 205.5h0.6v0.6h-0.6zM434.4 185.4h0.6v0.6h-0.6zM438.7 200.1h0.7v0.7h-0.7zM441.4 175.5h0.7v0.7h-0.7zM455.0 185.1h0.5v0.5h-0.5zM449.3 183.3h0.9v0.9h-0.9zM449.8 198.5h0.7v0.7h-0.7zM448.2 186.6h0.5v0.5h-0.5zM433.1 183.5h0.8v0.8h-0.8zM442.9 189.5h0.7v0.7h-0.7zM463.3 199.1h0.9v0.9h-0.9zM452.5 195.0h0.9v0.9h-0.9zM461.6 196.9h0.8v0.8h-0.8zM432.6 190.7h0.5v0.5h-0.5zM464.8 191.1h0.8v0.8h-0.8zM441.9 193.2h0.7v0.7h-0.7zM467.7 194.7h0.8v0.8h-0.8zM434.9 185.5h0.8v0.8h-0.8zM454.6 182.1h0.8v0.8h-0.8zM443.6 187.9h0.6v0.6h-0.6zM460.2 194.1h0.6v0.6h-0.6zM443.5 193.9h0.7v0.7h-0.7zM464.7 199.7h0.7v0.7h-0.7zM440.0 178.7h0.7v0.7h-0.7zM450.7 193.4h0.5v0.5h-0.5zM455.0 192.9h0.6v0.6h-0.6zM441.1 189.1h0.5v0.5h-0.5zM462.9 184.2h0.7v0.7h-0.7zM432.5 198.1h0.7v0.7h-0.7zM444.2 186.5h0.8v0.8h-0.8zM444.9 182.5h0.7v0.7h-0.7zM446.2 185.8h0.7v0.7h-0.7zM459.7 202.6h0.6v0.6h-0.6zM443.4 198.0h0.8v0.8h-0.8zM455.3 200.6h0.8v0.8h-0.8zM462.5 203.7h0.7v0.7h-0.7zM453.1 188.9h0.7v0.7h-0.7zM433.3 188.1h0.8v0.8h-0.8zM447.0 200.1h0.7v0.7h-0.7zM456.4 174.9h0.7v0.7h-0.7zM440.2 177.6h0.7v0.7h-0.7zM451.3 181.4h0.8v0.8h-0.8zM460.3 178.5h0.6v0.6h-0.6zM467.0 185.1h0.6v0.6h-0.6zM434.0 191.6h0.9v0.9h-0.9zM456.8 193.0h0.5v0.5h-0.5zM431.6 186.3h0.5v0.5h-0.5zM455.5 188.2h0.8v0.8h-0.8zM433.4 196.4h0.6v0.6h-0.6zM447.1 188.1h0.7v0.7h-0.7zM456.5 187.6h0.6v0.6h-0.6zM463.7 188.7h0.9v0.9h-0.9zM453.0 194.6h0.8v0.8h-0.8zM464.9 191.9h0.9v0.9h-0.9zM440.4 188.2h0.8v0.8h-0.8zM459.1 199.0h0.6v0.6h-0.6zM449.7 180.2h0.5v0.5h-0.5zM435.6 192.8h0.9v0.9h-0.9zM452.2 188.5h0.7v0.7h-0.7zM463.1 178.9h0.8v0.8h-0.8zM462.7 180.7h0.9v0.9h-0.9zM458.1 207.6h0.7v0.7h-0.7zM456.6 194.1h0.9v0.9h-0.9zM440.4 177.7h0.8v0.8h-0.8zM456.8 202.0h0.6v0.6h-0.6zM461.6 199.7h0.8v0.8h-0.8zM439.5 184.7h0.7v0.7h-0.7zM451.8 210.2h0.8v0.8h-0.8zM436.6 178.2h0.7v0.7h-0.7zM458.3 180.0h0.8v0.8h-0.8zM439.9 195.0h0.6v0.6h-0.6zM456.5 196.0h0.6v0.6h-0.6zM434.1 192.1h0.5v0.5h-0.5zM432.3 186.4h0.8v0.8h-0.8zM455.5 202.4h0.9v0.9h-0.9zM465.6 189.0h0.9v0.9h-0.9zM435.5 197.1h0.8v0.8h-0.8zM450.7 179.0h0.6v0.6h-0.6zM451.6 176.2h0.8v0.8h-0.8zM456.8 194.6h0.7v0.7h-0.7zM432.9 188.2h0.8v0.8h-0.8zM463.4 181.5h0.6v0.6h-0.6zM445.3 189.7h0.6v0.6h-0.6zM452.2 188.1h0.5v0.5h-0.5zM442.3 188.1h0.5v0.5h-0.5zM455.5 200.5h0.7v0.7h-0.7zM443.6 175.5h0.6v0.6h-0.6zM439.6 185.6h0.7v0.7h-0.7zM456.8 173.3h0.9v0.9h-0.9zM445.6 195.6h0.9v0.9h-0.9zM443.6 189.8h0.7v0.7h-0.7zM465.6 185.8h0.8v0.8h-0.8zM446.0 182.3h0.8v0.8h-0.8zM463.2 196.4h0.8v0.8h-0.8zM442.3 195.0h0.6v0.6h-0.6zM464.5 184.0h0.7v0.7h-0.7zM445.6 186.2h0.6v0.6h-0.6zM431.3 190.9h0.6v0.6h-0.6zM453.7 193.1h0.5v0.5h-0.5zM467.3 185.1h0.8v0.8h-0.8zM453.1 186.2h0.8v0.8h-0.8zM446.9 174.7h0.8v0.8h-0.8zM446.9 187.1h0.7v0.7h-0.7zM455.6 204.1h0.7v0.7h-0.7zM454.8 189.2h0.7v0.7h-0.7zM446.1 190.6h0.7v0.7h-0.7zM432.2 183.2h0.8v0.8h-0.8zM441.3 185.5h0.7v0.7h-0.7zM462.0 186.8h0.7v0.7h-0.7zM432.1 190.4h0.6v0.6h-0.6zM461.0 185.1h0.6v0.6h-0.6zM446.9 191.3h0.5v0.5h-0.5zM455.7 189.8h0.6v0.6h-0.6zM443.6 198.1h0.7v0.7h-0.7zM459.3 197.0h0.9v0.9h-0.9zM452.4 197.1h0.7v0.7h-0.7zM462.8 189.8h0.5v0.5h-0.5zM451.8 197.7h0.9v0.9h-0.9zM442.5 175.6h0.8v0.8h-0.8zM441.1 201.1h0.6v0.6h-0.6zM442.2 184.2h0.7v0.7h-0.7zM461.2 202.7h0.6v0.6h-0.6zM442.5 175.9h0.8v0.8h-0.8zM453.4 192.0h0.9v0.9h-0.9zM460.9 174.0h0.6v0.6h-0.6zM439.1 194.4h0.8v0.8h-0.8zM453.6 194.8h0.6v0.6h-0.6zM456.9 203.9h0.8v0.8h-0.8zM442.1 195.0h0.8v0.8h-0.8zM460.9 204.6h0.8v0.8h-0.8zM456.6 193.2h0.7v0.7h-0.7zM462.8 201.5h0.6v0.6h-0.6zM439.5 194.5h0.5v0.5h-0.5zM467.0 197.0h0.8v0.8h-0.8zM466.5 184.4h0.7v0.7h-0.7zM435.5 177.4h0.6v0.6h-0.6zM450.1 208.9h0.5v0.5h-0.5zM432.8 194.0h0.9v0.9h-0.9zM432.2 193.4h0.6v0.6h-0.6zM439.8 205.4h0.8v0.8h-0.8zM461.3 199.8h0.9v0.9h-0.9zM436.3 189.9h0.7v0.7h-0.7zM461.6 204.3h0.5v0.5h-0.5zM436.3 196.4h0.8v0.8h-0.8zM444.8 194.6h0.8v0.8h-0.8zM433.4 185.5h0.8v0.8h-0.8zM450.5 189.5h0.5v0.5h-0.5zM443.2 175.7h0.6v0.6h-0.6zM446.3 187.5h0.9v0.9h-0.9zM456.1 183.4h0.8v0.8h-0.8zM454.4 181.7h0.9v0.9h-0.9zM452.5 199.0h0.6v0.6h-0.6zM438.1 189.9h0.5v0.5h-0.5zM452.2 193.0h0.5v0.5h-0.5zM452.2 186.7h0.7v0.7h-0.7zM444.9 195.6h0.6v0.6h-0.6zM444.5 174.0h0.6v0.6h-0.6zM433.4 186.0h0.9v0.9h-0.9zM464.4 183.3h0.5v0.5h-0.5zM462.5 179.4h0.6v0.6h-0.6zM440.4 199.9h0.6v0.6h-0.6zM444.1 187.2h0.9v0.9h-0.9zM459.2 194.9h0.6v0.6h-0.6zM444.6 190.4h0.7v0.7h-0.7zM458.7 187.9h0.5v0.5h-0.5zM468.5 194.4h0.6v0.6h-0.6zM454.8 195.2h0.9v0.9h-0.9zM436.0 195.0h0.8v0.8h-0.8zM464.1 186.3h0.5v0.5h-0.5zM436.0 183.0h0.9v0.9h-0.9zM441.5 188.6h0.6v0.6h-0.6zM436.8 196.4h0.6v0.6h-0.6zM460.0 186.7h0.8v0.8h-0.8zM449.9 197.3h0.6v0.6h-0.6zM437.7 178.1h0.5v0.5h-0.5zM460.3 180.6h0.6v0.6h-0.6zM455.1 182.1h0.8v0.8h-0.8zM463.2 192.6h0.7v0.7h-0.7zM433.7 183.9h0.8v0.8h-0.8zM440.4 188.4h0.6v0.6h-0.6zM436.3 183.9h0.5v0.5h-0.5zM442.9 191.6h0.8v0.8h-0.8zM458.5 187.5h0.7v0.7h-0.7zM460.3 180.2h0.6v0.6h-0.6zM461.0 195.1h0.8v0.8h-0.8zM457.5 175.7h0.5v0.5h-0.5zM436.0 198.7h0.7v0.7h-0.7zM444.6 181.4h0.8v0.8h-0.8zM459.4 197.8h0.9v0.9h-0.9zM463.7 182.0h0.6v0.6h-0.6zM441.6 199.3h0.7v0.7h-0.7zM444.9 186.9h0.8v0.8h-0.8zM451.6 193.3h0.8v0.8h-0.8zM437.4 200.2h0.5v0.5h-0.5zM464.3 187.2h0.6v0.6h-0.6zM439.9 194.2h0.7v0.7h-0.7zM456.0 185.4h0.6v0.6h-0.6zM436.9 188.9h0.7v0.7h-0.7zM455.3 200.7h0.7v0.7h-0.7zM443.3 193.6h0.6v0.6h-0.6zM457.0 186.5h0.8v0.8h-0.8zM433.7 189.8h0.7v0.7h-0.7zM433.9 180.6h0.6v0.6h-0.6zM437.4 202.2h0.5v0.5h-0.5zM452.4 194.9h0.6v0.6h-0.6zM458.6 196.5h0.8v0.8h-0.8zM439.8 188.2h0.7v0.7h-0.7zM446.7 196.6h0.8v0.8h-0.8zM439.7 191.9h0.8v0.8h-0.8zM452.6 189.0h0.6v0.6h-0.6zM436.5 187.0h0.9v0.9h-0.9zM465.6 199.6h0.5v0.5h-0.5z" fill="#9a9a9a" opacity=".75"/><polygon points="653.4,211 873,118.9 880,119.5 885.2,126 885.2,134 663,225.5" fill="#1c1c1c" stroke="none" stroke-width="0"/><path d="M869.8 122l-1.9 1.5 1.2-3 .7 1.5 .6 2.2 3.7 1.1 2.5-2.4-1.4-3.8-3.1 .2-2.3 2.7 1.5 .6-.9 1.6-.4 3 1.6 3.5-2.8-1-.7 3.8 4.3 2.3-4.2 .1-4.2-1.7 3.2-2 1.6-2.5 3.1 2.6 1.1-3.4 2.9-2.1 2.2 3.8-5.1-1.7-1.4 1.8 .3 1.6 .5 3.5 1.5 .9-1.8 2.7 3-1.2 .9-3.2 2.1 1.9 .3-4.2 2.9 1.9 2.7-.1 1.2-2.4 0-3.2-.2-3.1-2-2.5-2-2.5 .7 2.8-3.9 1-1.2-1.7 1.8-3.5 2.6 1.4-1.5 1.4 2.2 1.4-1.6 4.8-.4 2.5 2.9-2.3-2.5-.2-4.2-1.6-2.5 0-3.4 .4-2.6-.8-3.5-2.3-1.2 3.1-3.1 1.1 2.9 2.7 0 3 .8 2.9 4.9-1 1.2 2.2-.2 2.5-3 1.2-2.6-1.9-.4 3.1-2.9 1.3 .9-3.4 2.4-1 3.8 .3 .1-1.5 .7-2.8 3.4 1.1 .5 2.4-2.7-1.3 2.2-1.1 .8-1.2 3.6-.8-2.1 1.7 1.2 1.5 3-1.3 2.9-1.2 .3-1.1 1.3-1.3 2.6-1.2-2.6-3.5 0 4.7-2.9-2.4-1.3 1.8-.3-2.1-2.1 3.6-3-5.3-3-1.7-1.2 2.5-4.3 .8-2 .5-2.8 2.3-4.1 2.2 3.1 1.3 1.9-1.6-.9-1.9-2.5-4.5 2.4-.5 .7-4.1 2.4 3-.2 3.8 1.5 3.2-.7 2.7-4.8 1.1-2.9-2.5-2.6 2.8-.7-3.5-3.8 .6-2.3 1.9-.2-1.6-3.7 1.2 .2-5.2-2.9 1.2-3 1.3-1.7 4.3-1.2-3.1 2.9-1.2 .9 3.9 2.6-1.2 1 .1 2.7 2.6-1.5-2.7-1.2 .1 1.5 3.8 2.2-1.1 5.1 2.1 1.5 .3-1.9 1.1 2.5 1.8-.6-2.9 3.9 1.2 2 2.2-3.4-.3 .5 1.5 2.9-1.2 3-1.2-.8-2.1-3.7-1.2-.5 2.3-1.4 1.9-1.9-.2-.6 2.9 3-1.2-2.4-1.7 3.3-1.7 4.2-1.1 1.7-1.3-2.7-2.9-1.4 1.1-4.1-.8-1.6 3.8 4.4-1.1-2.8-2.7-3.1 .1 0 3.4-.4 1.4-4.7-3.5 1.5 4.9 2.8 1.1-4.2 0 3.5 3.4-2.9 1.3-3.7-2.4 .7 3.6 3-1.2-.6-4.7-1.9-1.9-3.4 .9-.3-2.2-1.9 1.7-.5-2.6 .6-3.5-2.6 .4 0 4.1 2.5 1.6 2.2 .5 2.2 3.3-.7 1.2-1.6-2.1-2.8 0 2 2.6 .8-2.6 .1-2.4M871.3 122.6l2.8 2.7-.7 1.5-3-2.6-3 2.2 .5-2.9-1.7-1.7-2.3 2.3 4-.6 2.5 .7M871.3 122.6l3.9-3.5 3.2 .3 1.1 2.8-1.7 2.4 2.3 3.8-2 2.2 1.6 .3 1.6 3.7M871.3 122.6l.8-3.3-3 1.2-2.9 1.3-3 1.2 .7 1.1-3.6 .1-3 1.3 2.3 2.8 .1 5-3.6-1.6-1.7-2-1.7 2.2-.2-2.3-2.5 1.9 1.4-3.5 3-1.3-1.9 2.9 1.9 .1 2.8-.9-1.1 2.9-3.4 .2-2.7-.4-3.4-.1-.6 4.3-3.5-4 4.1-.3 1.9 4 1.4 3 2.4-3.6 .4-2.9 2.9 3.6 1.5 3.6 2.4 3.1-2.2 3.3M871.3 122.6l5.3 .3 2.9-.7M874.1 125.3l1.8 1.5 1.9-2.2-3.7 .7M881.7 123.6l3.3 2.2-2.4 2.8-.9-5 1.3-.3M862.7 127.2l1.8 3.3 2.7 1.7 .9 1.3 3.8-1.2 4.1 1.9 2.4-1.5 2.6 3 3-1.2-1.4-1.2M862.7 127.2l4.7-.8 1.4 3.3M867.4 126.4l-2.9 4.1-.5 3.7 4.1-.7 .1 2.4M873.4 126.8l-.4 2.1M882.6 128.6l2.6 .3M852.5 129.6l-1.1-1.6-2.9 1.2-3 1.2-3 1.3M854.4 129.7l0-3 2.9-1.2-.1 3.3-2.8-2.1M846.6 131.4l1.9-2.2 1.5 2.3 2.3 3.3 3.3 .7 .5-3.8M846.6 131.4l-1.1-1M850 131.5l-1.5 3.9-2.5 .3M859.7 133.3l2.8 .7-1.9 1.2 2.7 1.7 4.2 1.8 1.7 1.9 2.9-1.2M859.7 133.3l-1 3.5-.2 1.2 1 4.2M862.5 134l1.5 .2M876 134.2l-3.6 1.6M876 134.2l0 .8 2.4-2.3M840.1 136.9l-.8 5.6 3.7 1.3 3.3 .8 3.2-1.4-.4 2.5 2.3 2.2-3 1.2 .7-3.4 2.9-.7M840.1 136.9l2.5 3.9 1.2-1.2 2.4-2.3 3.7 1.1-5.1 1.3-1.8 4.1-1.2 4.2-2.3-.9-2.1-2.9-.7 2.9-2.7 2.3-2.4-3.1-.3 1.7-3.8 1.2 2-2.5-2.7-3.7 5.2-.4 1.3-.9-2.6-5.1-1.7 4.1-2.2 2.3-3.4 1.3-1.5-4-3 1.3-.8 1.5 3.4 1.8 1.9-.6 1.1 4.1 3 .8-.1-1.8-.6-4.4-2-3.9-2.9 1.2-.4 4.6-3.1 3.1-.1 0-2.9 4.4-1.3 4.1 1.4 .2 .5-.5 2.3-1.4 .3 2.8 3.2 2.5-.1-1.6 3.9-3 4.3-.5-.1-3.4-2.3-2.4-2.2 1.7-.8-2.5-2.2 .6-3.9-1-1.2-.8 1.1 .8-4.4 1.4-1.6-2.6 .7-2.7 2.9-1.3 .4 1 1.8-.7-.9 4.1 4.3-2.3 1 2.4 .9-3 4 3.1 2.1-.7 2.5-4.1-3-1.9-1.3-1.3 .1-1.5 2.9-1.3 3-1.2M840.1 136.9l-.5-4 1.5 4.1M840.1 136.9l-3.5-2.7M842.3 136.9l3.9 .4-1.4 2.4-1-.1M842.3 136.9l-2.7-4M858.7 136.8l4.6 .1 .3 3 3.9-1.2 1.9-.6M873.9 136.7l-2.3 .3M827.7 139.4l-2.9-.3 3-1.2 1.2 2.8 4.3 1 1.6 .9 1.8 4.5-.4 4-2.3-1.7-2.7-1.4-1.5 3.6-4.5-.7 .3 4.6-2.5-2-.8-4.5-3.8 3.1-.2-4.1M827.7 139.4l-.9 3.6M834.9 138.5l2 3.1 2.4 .9-1.8-4.4M834.9 138.5l-1.6 3.2M834.9 138.5l-4.2-1.9M849.9 138.4l1.5 3.7M857.1 139.1l-1.3 1.9M863.3 136.9l-2.1 4 2 2.1 3-1.2 1.2-1.6 1.8 .4M836.9 141.6l-2 1-2.9 0-.4 3.7 3.3-3.7M839.3 142.5l3.3-1.7 .4 3M816.3 143.8l-4 3-1.3 3.5 .6 1.4 2.3-2.3 0 3 .2 4.1-2-2.2-.9 4.7-3.6-2.8-1.5 .4-3.4 2.1-.7-3-2-2.9 1.2-3.8-3 1.3 1.8 2.5-.5 3.8-2.5 .2-1.8-3.3-.9 3.1-.8-2.1-4.2-.5-2.9 1.2-3 1.3-1.1 3.5 3.5 2.9 3.9-.3-1 1.8 1.4 .7 1.2 4.2-2.4-.5-3.4 3.9-1.5-2.5 3.5-3.4 1.2-2.4-2.9-1.5-1.7 3.9-1.8 2.6-5.4-1.8 2.2 4.5-3 .6-.7-3.9 1.5-1.2 .5-1.6 3-.6 .3-1.8 .4-3.2 1.2-.4-1.6 3.6-2.2 .9-1-5.6-2.9 1.3 .8 1.7-1.1 4.8-3.3-3 .6-2.3 3.8 .5 2 4.1 1.1-1.5 1.9 .9 3.7 1.4-3.4-3.2 5.1-.7 1.7 3.9 2.6-1.7-.4-2.5 3.8 1.8 2.2-4.4 2 2.2 2.6 .4 2.5-3.5-4.6 .2 2.1 3.3 5.8-1.4 3.4-.3 .4 2.2 3.2-3-.2 3.7 2.9-1.2-.9-2.7 1.9 .4 1.8-2.7 3.1 .9 3 .4 1.2-2.1 1.8 .9-2.1-2.2 .3 1.3-4.2 1.7-.6-3.9 4.5 .9 3.4-1.9 .9 1.4 3.7 .2-3 1.3-2.9 1.2-3 1.2-2.9 1.2-3 1.2-.2-3.7 2.5-3-2.6-2.5-3.1 .3-1.5-3 3.3-2.2-.9-3.4-3.3 .3-3 1.2-1.6 3.9-1.3-2.7 2.9-1.2 2.3 1.5 4.9 .4M818.1 143.1l-2.2-.3 3-1.2 2.6 3.3M823.4 144.3l1.4-5.2M846.3 144.6l-1.4 1.1-3.1 2.3M806.4 147.9l1.5 3.4-3.1 .4 1.6-3.8-2.3-.1-2.9 1.2 1.6 1.2 2 1.5 .3 2.2 1 2.7-4.1-.9-2.5 .9-1.6-2.7-.9 2.9-1.3 3.2-2.8 .5-3-3.5 4.4-.4 2.7 .2 1.2 2.5 4.5-.6-3.2-2.1-1.3 2.7-.5 2.9-4.2 2.2 3.2 3.6 1.4 1.9-3 1.2-.8-1.2 2.4-1.9 .3-1.1 .7-4.7 1.4 4.8 4.2-1.4 .7 1.8-3 1.3-2.9 1.2 1-2.9 1.9 1.7 2.3-3.1 1.9-1.3 2.8-2.2-1.9-.9-.9 3.1 .7 .6 4 .1-3 1.2-2.9 1.2 1.9-2.5 1 1.3M806.4 147.9l.7-1.4-3 1.3-1.3 2.4-2.8 2.6-3-.8 .9 1.9-2.7-.4-1.7 1-1.2-1.8 3-1.2 2.9-1.2-1.2 1.7-1.8 1.5 .1-2 1.7 .5M806.4 147.9l2 1.3 2.6 1.1 2.9-.9M812.3 146.8l-3.9 2.4-.5 2.1 3.7 .4 2.3 .7 1.5 0 .6 3.8-1.9 .3-1 3.6-3.6 .8-1.9-4.7-1.5 5 0-4.6-3.3 2.5-.1-.4M818.4 148l.1 4.1 4.6 1.4 2.2-2.6-3-1.9 .2-1.7 2 1.1 2.9-1M818.4 148l4.1-.7M829.5 146.7l2.1-.4 5.1 .8M829.5 146.7l1.8 1.3 1.4 3.5 3.9 2.5-.3-2.9 2.4-1.4 2.4-.5-1.6 3.6-.8-3.1M811 150.3l-3.1 1-2.8 2.6-3.1 1.8M834 149.4l-1.3 2.1 .9 3.7 3-1.2 2.9-1.2-3.2-1.7-3.6 .4-2.8 3.5-2.2 2.7M841.1 149.2l1.4 2.4-3 1.2M800 152.8l4.8-1.1-.7-3.9M800 152.8l-2.1 1.1M800 152.8l5.1 1.1 2.5 2.3 4.5-1.9-.5-2.6M807.9 151.3l4.2 3 1.8-1.9M807.9 151.3l-.3 4.9M815.4 152.4l2.9 2.4 2.8-.2 2-1.1M818.5 152.1l-.2 2.7M825.3 150.9l3.7 2.7 .8-2 2.9-.1M793.5 154.5l-3.6 2.5-.9 3.7 .7 1.9 3.1 2.2 1.5 5.1-2.2 2.4-2.9 1.2 .4-2.9 1.7-1.3 .8 3-2.5-1.7-.7-1.8-4.9 1.4-.4-1.2-1.3 .4-3.2 2.7 4.9-1.9-1.7-.8-1.9-4-3.5 2.2-2.6-.9 3.1-.7M795.2 153.5l-2.9-.8-3 1.3-1.7 2.5-1.8 1.9-3.5 1.6-1.8-2.3 2.9-1.2 2.4 1.9 3.2 2.3-3.5 .3 .3-2.6 .6-3.2 1.2 1.3 2.3 .5-.6-3M816 156.2l2.6 1.4-3.1-.9 1.3 3.6-1 2.3 3-1.3-2-1M829.9 155l.7 1.5M787.6 156.5l1.4 4.2 3.9-.2 1.4-3.9 1.4 3.4 2.5-.7M811.2 159l2.9-2.5 .8 3.4 .6-3.2M811.2 159l1.9 1.1 2.7 2.5M811.2 159l-1.7 1.9-1.5 1.2 1.9 2.9 0-1.9-1.9-1-2.1 2.8-2.6 .7-3-3 4.9 1.7M781.1 160.4l-.6-2.7-3 1.2 3.6 1.5-2.6 4.1-3.1-2.6-4.4 1.8-2.1 1.9 3.8 2.2-.4 3.1-1.4-.2-1.4 4.1 .4 1.4-3.1-.3-.2-.6-.6-4-.8-2.5 3.1 .9 1.2 5.1 2.8 1 .8-1.7 3-1.4-3.8-1.8 3.1-2.1-1.1-2.1-1.6 1.1-4.4 1.9 .6-4.1-3.2-1.7-.7 1.9 1.2 1.3 2.7-1.5-.2-2.9 2.3 1 1.7 4.1 2.7 1 3.7 3.3-1.1 1.6 2.3 1.9 2.9 .4-2.9 1.2-3 1.2 2.2-2.6-1.5-2.1-1.4 2 .7 2.7-3 1.2 1.6-4.5 2.1-1.4-1.9-1-.2 2.4-2.8-1-2.2-3.4-2.6-1-2.1-2.6-1 1.7-2.2 4 3-1.5 3.5 3.5 3.6-.7-.8-3.2M782.3 160l3.2 1 .3 1.9 3.2-2.2M792.9 160.5l.6 3.9 3.5 2.5 2.1 .1 1.2-4.4M792.9 160.5l-3.2 2.1M802.8 159.1l3.3 2.1M813.1 160.1l1.8-.2M775.4 161.9l2.1-3M793.5 164.4l-.7 .4-1.5 4.5 3 .6M809.9 163.1l3 .7-3 1.2M765 165.8l.2 3-3.2 .2-.9 4.3-1.5-.6-2.5 1.2 2.3 2.7 4.2-.8 3.2 .1 .8 3.9-3.5 0 2.7-3.9 2.7-1.1-2.9 .5-3 .5-3.7 3.8-.2 2.4 2.2-1.6 1.7 1.4-1.1 2.7-2.8-2.5-3.1-.3 2.1 2.5-3.4-.5-2.9-2.1-2.7-.6-4 1-3.1 2.5 2.4-4.2-.9-1.5 4-1.6-4.4 .1-1.6-3.5-1.1 2.7-1.9-1.4-1.3 1.7-1.6-.5-1.5 3.2 3.1-2.7 1.3 3.2-1.7 1.3-2.7-1.8-1.5-2-3 1.3 3 2.5 2.8 2.7-2.1 1.8-3.1-1.6-3.3-3-.2-1.2-3 1.3-2.9 1.2 0 3.6-3-2.4-1.8 4.4-3.3 .3-.8-2.2-2.9 1.2-3 1.3-3 1.2 .8 1.6 2.5 3.4 1.4-2.8 1 .3-2.4 2.5-3.4-1.1-3.9 .2 2.9 2.6-.5 4-2.1-1.9 2 1.9 .1 0 4.6-2.2-2-1.7-2.6 3.9 2.6 2.8 1.7 2.1 .9-2.1 1.6-3.9 3.7-1.5-1.7-1.8-2.2-.6-1.7-.7-2.3 1.8-1.1-2.9 .9-2.3-3.7-.3 2.9-1.3M765 165.8l-3 3.2-2.2-2.6-3 1.2-2.4 4 3.4 1-1-5-2.9 1.3-3 1.2-2.9 1.2 .3 4.1 2.7 2.6-2.9-.8-3.1 3.1-5.9-.3 1.9-3.5 3.1 2.3-.4-1.5 .7-2.9 3.9 1 3.7-.4 2.4-3.4 2.7 2.3 0 3.1-1.7-1.2-1-4.2-.5-2.7M765 165.8l-2.3-.7 3-1.2 .5 3.2M784.1 166.8l3.4 0 1.4 2 1.2-3.7 2.7-.3 3.9 3.2-1.6 3.1-3 1.2M784.1 166.8l-.5 2.2 3.9-2.2M799.1 167l-2.4 1M762 169l-5.2-1.4 2.8 5.1-1.8-.1-.7 1.3 3.1 1.5 .9-2.1 1.9-.5 3.6 2.5M762 169l.7-3.9-2.9 1.3M762 169l1 3.8 .6 3-1.7 4.6-2-.8-2.8-2.6-1.2 3.2-4.9-2.2 2.1 3 2.8-.8 4-.6-.5-3 .8-1.2-.6-2.7 2.4-3.7M768.3 169.7l-2.3 1.6M772.7 167.8l-1.8 2.9M754.4 171.6l-3.5-1.5 1.1 4.9 3.4 .8 .5 4.4 .7 1.5 3.3-2.1M779.1 172.1l4.1 3.9 3-1.2 3-1.3-3.7-.8 4.1-2.1M779.1 172.1l1.2 3.5 0 1.6-.8-1.4-2.9-.1-2.3 3.9-2-3.8-2.4 .4-2.3 3.6 .8 2.3 3-1.2 2.9-1.3-3.9-1 1.9-2.8 3.6-.7 .7 .6M784 170.2l-.8 5.8 2.3-3.3 .7 2.1M744.4 174.4l3.7 2.8 1.6 3.8-2.1 4.3-1-1.9-1.9 3.6 3.3 1-.4-2.7 1.1 .5 4.4-.1 3.8 0-1.6-2-2.2 2-.7-4.1-3.7 4.2 1-4.8 1.3-3 1.4 3.6 .7-.6 3.5 .7-1.3 2-2.2-2.7M744.4 174.4l.6-1.8-2.9 1.2-3 1.3-2.9 1.2-3 1.2 0 3.8 4.2 0-1.4 2.7 1.1 2.4 3.2-2.3 2.3 .4-2.1 1.1-3.4 .8-3.2-.6-1.5 2.2 1.3 2.6-4-.1 .3 2.5 3.7-2.4 2.5-2.1 1.6 3.2 3-4.3 2 3.2 1.9-3.6 0 4.9-1.9-1.3-1.6 .7-3.4 .4-1.8 .7-.2 3.1-2.9 1.2-3.4 .3 .4 1-3 1.2 2.6-2.2-3-1.3 3.5-2.7 .8 1.5 2.1 2.2-3 1.3M744.4 174.4l-2.3-.6M748.3 175.4l-.2 1.8M748.3 175.4l-3.3-2.8 3-1.3 4 3.7-1 3 4.4-2.2 1.7-1.9M760.2 175.4l3.4 .4 .5 4-2.2 .6M761.1 173.3l2.5 2.5M780.3 175.6l-.8 .2M737.8 176.8l3.2-.3 2.7 .8M757.1 177l2.3-.4M769.9 176.2l.5 2.4-2.8 1.2 3.8 1.1-1-2.3M729.5 180.6l-2 .6-3.2 2.1-2.9-.8-3 1.2-.1 5.3 3.2 2.2-3.9-1.1 .2 3.3 2.9 2.3 .7 3.3-2.7 1.6 2.3 1 .4-2.6-1.5-.6-2.1-3.1-2.8-.1-2.5 2.8 2.7 1.5 2.8 3.3-2.9 1.3-1.9-2.1 2-2.5 4.7-1.1 .8-2.7 2.2-2.1 1.1-3.5-2.5 1.1 1.4 2.4 2.4 .1-1.3-3.6 3 .2 .3-2.9 3.5-3.2-5.6-.1 .5 2.7-4.3-.7 3.8-2 2.1 3.3-1.7 .9-3.4 1.1-3.9-.4-1.7-.9-2.7 3.2-2.6-1.1 2.1 3.4 .5-2.3 2.7 3.4 1.2-1.3-3.9-2.1-.6-2.9-2.6 .5-2.4 3.2 3-1.9-2 2.2 4.1 1.2 3.2 1.1 1.2 .6 0-1.9 3.7-2.2 .7-1.8-.8-3.3-3.1 2.9-.7 1.1-1-2-1.1-3.1 2.9-1.3M729.5 180.6l.7-1.8-2.9 1.2 2.2 .6 3.7 .7 1.5-1.8 4.4 .5 5-1.2M729.5 180.6l1.3 3.6 1.6 3.8-5.1-.6-1.6-.6-.1 1.5-1.6 1.8-1.8-.7 3.5-2.6M737.4 181.3l.5 1.7 2.4 1.1 4.7-3.8 4.7 .7-3.1 2.4-4 1.1 2.1 2.5 3 3.6 2.9-1.2 3-1.2 3-1.2 2.9-1.2 3-1.3-3.8-.3 1-2.2 3.9-.2 1.9 1.5 2.9-1.2M739.1 180l1.2 4.1 .2 1.5 .3 1.8-3.3 0 3-1.8M739.1 180l-1.2 3-1.9 1M745 180.3l.7 1.7 .9 1.4M764.1 179.8l-.5 2M764.1 179.8l1.4 3.5-3 1.2M767.6 179.8l-2.1 3.5M724.3 183.3l.9 .8 2.3-2.9-3.2 .1 0 2-2.9 2.8M733.2 181.3l.7 4.5 2.3 2.7-.2 3.9 2.8 1.9-1-2.6-.3-4.3-1.3 1.1-3.8-.5-2.7 2.5-2.7-.2 3 2.7-4.7 .7 1.7-3.4-1.4-2M733.2 181.3l-2.4 2.9M737.9 183l-.8 3.4 .4 1M737.1 186.4l-.9 2.1M742.6 184.5l-1.8 2.9 3.9-.4 2.9-1.7M748.7 185.8l-.7 2.2 2.6 1.4 2.5-3.7 .5 2.5M748.7 185.8l1.9 3.6M753.1 185.7l3.5 1.3 .3-1.3 1.8-1.5 .8 1.6-2.6-.1M710.7 188.9l-1.1-1.5M710.7 188.9l.6 1.3 2-1.8 2.2-3.4-3 1.2-1.8 2.7-4.1-.2 1.7 3.4-3.9-.6 2.2-2.8M727.3 187.4l2.4 3.1M740.8 187.4l.4 3.9 .5 1.8 1.1-2.5M748 188l-.3 2.6-3 1.3-3 1.2-2.9 1.2 2.4-3M713.9 191.3l3.7-1.2M721.5 191.2l-.8 4.5-2.9-.4-2.6 4.2 3.5 1.1-.7 2.2 3-1.2 3-1.2-2.6-1.4 3.8-3.6 1.7 3.8-.4-3.5 4.3-1.2 2.9-3.9 2.3 1.8-5.2 2.1-1.3 2.5M699.6 194l-.3 3.8-2.1 2.3-4.1 0 2.4 1.6 1.7-1.6 2.7-1.4-2.2 4.1 4.7 2.2 .8 3.9 3-1.2-3.8-2.7 3.9 .5 2.9 1 2.9-1.2-.2-3.1-3.1-2.7-2.2-1.1 .6 5 3.1 1-1.1 2.1-3 1.2 .1-2.2M699.6 194l-4.8-.4-.8 4.1-2.2-2.8-2.9 1.2-3 1.3 3.5 1.3-3.1 2.9 .3 2.8-4.6-1.6-2-3-3 1.3 .7 2.7 .8 4.9 2.9-3.5 1.8 2.5-.6-2.2 3 2 1-3.1 2.6 4 1.7-4.9 2.2-3.4-.1 2.9 1.2 2 2.1 3.1 4 2.1-3 1.2-3 1.2-2.9 1.2-3 1.2-2.3-2-.3 1.5-2.7-.7-1.3 1 .7 2.7 2.9-1.2 3-1.3-2.6-.5-.4 1.8-3-1.1 .7-1.4 3-.8-2.7-2.8-3.4 1.3-1.5-2.8 4.7-1 2.4-.2 3.6 .9 2.4 0 1.9 3.1 3.8-.1-1-3.3 2.6-1.7 1.4 3.8 .4-3.1 .1-1.3-1.9 .6-1.2-3.6-2.2-1.1-2.5 1.3-2.1 .5 .7 4.9 2.6-3.4 1.3-3.3M699.6 194l1.1-2.8-3 1.2-2.9 1.2 4.5 4.2-5.3-.1-.9 2.4-3.7-1.4-3.2 .1-3.2-.2 2.9-1.2 .3 1.4 .1 2.8-4.3 1.2 1-4.2 3.3 3 1.7 1.1 1.4-4 2.4-3.8 3-1.3M699.6 194l-1.9-1.6M703.5 193.8l-1 2.8-3.2 1.2 .6 .9 2.6-2.1 2.1 .1M703.5 193.8l-2.8-2.6M706.9 194.9l-.3 3.5-2 5-2.7-2.8-4.2 2.2-.5-2.7-3.2-2.4-4.6 1-.5-2.6M709.3 192.4l-.7 3.2 .2 3.9 2-3.3-1.5-3.8M713.4 193.6l1.6 1.6 .2 4.3-.1 4.6-3 1.2 1.1-3.3-1.3 .2 .6-4.2 .7 4M713.4 193.6l-2.6 2.6 4.2-1 1.6-.5M722.9 193.6l2.3 1.8-1.2 5 2.9-1.2M725.3 193.7l-.1 1.7 1.3 .3-1.2-2M730.8 194.5l5 1 3-1.2M708.6 195.6l-2 2.8M720.7 195.7l4.5-.3M689.4 198.7l1.5 4.8-2.9-.8-1.4 1.7-4 1.1-.6-2.7-.6 2.4-3.7-1.4-4.3 1.4 1.9 1.6-3.4 .6-1.8-1.6 .4 2.7 1.4-1.1 1.5-2.2-2.3-1.6-1 2.2-1.9-1-.3 5-2.4 3.3 .9 1.7 2.5 2.7 3.1-1.1 0 2.6 1.6 2.1-3 1.3-2.9 1.2-1.2-5 2.6 3.3 2.9-2.9 1.3-2.4-1.3-.2 .3-3 4.3-.1 1.4 .8-.7 .7 2.2 3.9 3-1.2-.1-2.3-.6-.4-2.3 3.9-2.9 1.2-3 1.2 2.2-2.6 1.5-3.7-4 1.8 2.5 1.9 .8 1.4M719.9 198.4l-1.2 2.2M682 202.8l-4.3 1-3.6-1.5-3 1.3-2.9 1.2-3.1 2.7-2.8 1.2 0-1.4 2.8 .2 .1-1.5 3-1.2M697.7 202.8l-.5 2.8 1.7 .8 1.8 .7 1.7-2.1-.5-4.4M697.7 202.8l-3.5 2.2-3.3-1.5-4.3 .9M697.7 202.8l3.1 3 1.6-.8 2.2-1.6 2.6 0 2 3.1M707.2 203.4l4.7-1.2-1.6 2.2 1.8 .9M670.1 205.8l-2.2 4-2.8-2.3-.3 2.4-2.5-1.2 0 .5-3-.7-2.9 1.3 2.2 2.2-.6 4 3.1 2.2-.6 3.5 3.6 .9 .6 2.2-2.5-.4-1.7-2.7-1.8-2.7-.7-3-1.1 .3 1.8 2.7 2.4-.8 2.1 0 0-2.3 3.3 2.7-3.3-.4-2.7 3.5M670.1 205.8l3.3-.6 .7-2.9 2.9-1.2M677.7 203.8l-2.4 3 3.2 1.9-.1 1.9-5.3-.6-2.9 2.2-4.7 .9-.7-3.2-2.5-.7 1.1 4.9-2.3 2 2.1-.2 3.2-1.1 3.8-2.6-2.3-2.4 2.6-1.3 2.6 1.5 3.5 3.3-3.3 3.3-1-3.2 .8-3.4-1.2-2.6M677.7 203.8l2.3-4 3-1.2M681.4 205.2l1.2 .3M694.2 205l3 .6-.9 2.5-4.7 .3-2.1 1.7-1.1 4.9-.6-4.9-2.2-2.6-2.2 2.7-.3 3.6 2.3 2.5M662.3 208.7l-3-.2-.1 2.4-2.8-1.1-.4 1.3-2.6-.1 1.8 2.7 2.8 2.3 3.1 .1-2.5-4.1-2.6-.9-.8 2.6 3.4-1.7 .6-1.1 3.1-1.7M670.5 208.5l-.3 .9 0 2.8-1.3 5.3 3.1 1.5 3.8-.5 3.7 .2-1.5-4.6 2-2.6 3.2-3.8 .2 2.5 4.4-.1 1.4-1.7 .3 1.7 1.9 3.7 2.1-2.3 .8 1.1M675.3 206.8l-2.2 3.2-2.9-.6-2.3 .4-3.1 .1-1.4 4.2 3 .7 .1 3.8 2.4-1.1 .2 4.4-1.4 1.7-3 1.2M675.3 206.8l3.1 3.8-1.8 2.7 .7 1.5M696.3 208.1l-2.8 3.4-4-1.4-1.7 0-1.7 2.9M700.7 207.1l2.5 1.8-2.9 1.3M659.2 210.9l4.2 3.2-4.8-2.1M678.4 210.6l1.6 .9 1.8 3.3-3.8-.7 .4-3.5M680 211.5l3.1 2.3M663.4 214.1l2.1-1M663.4 214.1l-.2 1.8M670.2 212.2l2.1 1.2M670.2 212.2l1.8 4.2M661.1 216.1l0 2.1M661.1 216.1l2.1 2.1 .9 4.4 3.6 1M666.5 218.6l-2.4 4-1.9 1.8M672 219l-1.4 3.4-1.5-.5M653.4 211l3-1.2M659.3 208.5l3-1.2 2.9-1.3M765.7 163.9l3-1.2 2.9-1.3 3-1.2M860.3 124.2l2.9-1.2M656.9 216.3l-1.7-2.6" fill="none" stroke="#000" stroke-width="0.5" stroke-opacity="0.6"/><polygon points="653.4,211 873,118.9 880,119.5 885.2,126 885.2,134 663,225.5" fill="none" stroke="#111" stroke-width="0.8"/><path d="M804.5 155.9h0.7v0.7h-0.7zM703.4 193.4h0.7v0.7h-0.7zM880.6 124.0h0.7v0.7h-0.7zM863.8 135.5h0.7v0.7h-0.7zM764.0 173.2h0.7v0.7h-0.7zM794.1 162.1h0.7v0.7h-0.7zM737.4 192.4h0.7v0.7h-0.7zM724.7 193.0h0.7v0.7h-0.7zM658.7 215.9h0.7v0.7h-0.7zM764.5 182.1h0.7v0.7h-0.7zM677.4 217.9h0.7v0.7h-0.7zM844.3 143.9h0.7v0.7h-0.7zM705.9 202.3h0.7v0.7h-0.7zM672.5 208.4h0.7v0.7h-0.7zM762.6 180.0h0.7v0.7h-0.7zM840.5 136.1h0.7v0.7h-0.7zM785.1 174.1h0.7v0.7h-0.7zM662.0 220.9h0.7v0.7h-0.7zM795.9 155.4h0.7v0.7h-0.7zM800.4 166.9h0.7v0.7h-0.7zM802.4 166.2h0.7v0.7h-0.7zM867.8 123.2h0.7v0.7h-0.7zM723.2 192.3h0.7v0.7h-0.7zM870.6 126.8h0.7v0.7h-0.7zM663.5 208.7h0.7v0.7h-0.7zM790.3 154.2h0.7v0.7h-0.7zM677.4 204.5h0.7v0.7h-0.7zM731.0 182.8h0.7v0.7h-0.7zM730.4 194.8h0.7v0.7h-0.7zM802.7 154.0h0.7v0.7h-0.7zM878.8 136.1h0.7v0.7h-0.7zM787.7 169.5h0.7v0.7h-0.7zM716.3 189.1h0.7v0.7h-0.7zM880.6 132.8h0.7v0.7h-0.7zM702.6 205.2h0.7v0.7h-0.7zM816.6 158.7h0.7v0.7h-0.7zM827.5 150.0h0.7v0.7h-0.7zM831.9 152.3h0.7v0.7h-0.7zM701.3 200.4h0.7v0.7h-0.7zM866.9 129.9h0.7v0.7h-0.7zM713.0 197.6h0.7v0.7h-0.7zM771.6 178.4h0.7v0.7h-0.7zM865.1 124.5h0.7v0.7h-0.7zM779.8 171.6h0.7v0.7h-0.7zM737.7 179.4h0.7v0.7h-0.7zM788.2 157.3h0.7v0.7h-0.7zM699.2 200.0h0.7v0.7h-0.7zM725.6 187.4h0.7v0.7h-0.7zM826.9 146.2h0.7v0.7h-0.7zM865.8 124.6h0.7v0.7h-0.7zM710.3 194.4h0.7v0.7h-0.7zM697.0 207.0h0.7v0.7h-0.7zM766.4 172.5h0.7v0.7h-0.7zM860.4 124.4h0.7v0.7h-0.7zM675.7 215.8h0.7v0.7h-0.7zM694.9 201.2h0.7v0.7h-0.7zM719.9 186.7h0.7v0.7h-0.7zM680.9 206.6h0.7v0.7h-0.7zM770.0 166.3h0.7v0.7h-0.7zM741.6 190.8h0.7v0.7h-0.7zM833.6 152.9h0.7v0.7h-0.7zM857.2 132.4h0.7v0.7h-0.7zM821.9 156.3h0.7v0.7h-0.7zM823.3 146.2h0.7v0.7h-0.7zM842.0 147.1h0.7v0.7h-0.7zM847.4 133.5h0.7v0.7h-0.7zM683.8 204.8h0.7v0.7h-0.7zM732.2 186.7h0.7v0.7h-0.7zM762.0 184.3h0.7v0.7h-0.7zM734.9 194.8h0.7v0.7h-0.7zM858.5 129.4h0.7v0.7h-0.7zM826.4 157.5h0.7v0.7h-0.7zM854.8 128.8h0.7v0.7h-0.7zM697.5 192.9h0.7v0.7h-0.7zM746.2 181.9h0.7v0.7h-0.7zM677.4 201.2h0.7v0.7h-0.7zM724.2 192.5h0.7v0.7h-0.7zM697.8 206.5h0.7v0.7h-0.7zM843.2 138.3h0.7v0.7h-0.7zM702.7 209.0h0.7v0.7h-0.7zM735.6 185.3h0.7v0.7h-0.7zM697.4 196.3h0.7v0.7h-0.7zM848.3 130.5h0.7v0.7h-0.7zM838.5 152.8h0.7v0.7h-0.7zM688.1 205.1h0.7v0.7h-0.7zM680.4 212.4h0.7v0.7h-0.7zM864.9 122.9h0.7v0.7h-0.7zM782.6 159.7h0.7v0.7h-0.7zM669.9 209.4h0.7v0.7h-0.7zM677.3 213.5h0.7v0.7h-0.7z" fill="#888" opacity="0.6"/><polygon points="663,225.5 738.6,194.4 738.6,214.6 669,240.7" fill="#a8a8a8" stroke="none" stroke-width="0"/><path d="M733.1 199.4l2.3-3.7 3.2 1.2 0 6-5.5-3.5-3.3-1.4-16.7 6.9 5.6-2.3 5.5-2.3 1.3 3-4.9 5.5 4.9 3.9 4.1-4.3-9 .4-1 7 1.7 5.3 5.7-2.1 1.2-6.5 8 1 2 1.2 .4-5.7 0-6.1-6.1 .8-2.9 4.7-4.1-5.1 4.5 1.8-.2-7.1-5.6 2.3-11.1 4.6-50.1 20.6 72.4-29.8-22.3 9.2-39 16-.2 5.5 6.2 3-6.6 4.2 2.7 4.4-6.7-2.4-2.1 1.1 3.2 3.4-1.1-4.5 1.3-4.9-2.2-7.5-3.4 7.9-2.2-5.6 5.6-2.3 5.3 3.2 9.5-2.7 4.5-.8 5.1 4.9 .2 3.8 5.6-2.1 4.1-5.6-4.5-4.9-10.5 3.9-4.1-.8 1.5-5.8 5.5-2.3 7.9 2.8 8-1.4-3.9 4.2-4.4-.6-5.4 8.8-5.9-1.3 1.2 4.1-.8 3.2 5.7-2.2-4.9-1 4.7-2.8 5.8 1.7 5.6-2.1 5.7-2.1-1-7.2 4.7 2.8 1.9 2.3 5.6-2.1-7.5-.2-1.2-6.2-5.9 .7 .8-8.2 6.2 1.7 5-6.3 1.9 6.2-6.9 .1 5.9 6.9 7.4 3.2 5.6-2.2 5.6-2.1M733.1 199.4l5.5-2.5M733.1 199.4l-.6 4.3-2.5 1.4-.4 3.3 9 .6-2.4 4.5-6.6-5.1-1.4 4.1 4.4 4.3 3.6-3.3M725.5 203.3l-6.8-.7M725.5 203.3l4.3-5.3 2.7 5.7 6.1 5.3M713.7 208.9l-.6-4-22.3 9.1-2.9 8.9-.8 3.6-3.3 3.5-1.9 5.9 5.6-2.1-3.7-3.8-.4-6.3-3.7-5.1 33.4-13.7-11.1 4.6 5.5-2.3 5.1 7.5 1.1-5.8M728.2 212.5l-2.7 .2-5.9 3.1-7-1.1-3.5 3.4-6.3 1.5-4.1-2.8 3.3-7.3 4.7 5.9 2.4 2.7-6.2 5.8 7.2 1.4 5.6-2.1M698.7 216.8l-2.3-5-5.6 2.2 7.6 5 .4 10.5M698.7 216.8l-.3 2.2M719.6 215.8l-5.8 5.1-3.7 4.4M725.5 212.7l1.5 6.3M683.8 222.1l-.4 1.6 3.7 2.8M683.8 222.1l-4.1-3.5-5.6 2.3 9.3 2.8-3.3 5.7 3.7 .6 4.5 .6M687.9 222.9l-2.6-6.6 27.8-11.4-44.5 18.3 5.5-2.3M702.8 219.6l.1 4.3 1.5 3.5M673.9 226.4l-.4 7.2 8.4 2.3-1.8-6.5M673.9 226.4l-3.1 4.3-5.6 .4 2.2 5.6M670.8 230.7l2.7 2.9-4 2-4.3-4.5M679.7 218.6l5.6-2.3M696.4 211.8l5.6-2.3M696.4 211.8l16.7-6.9-5.6 2.3M729.8 198l5.6-2.3M681.9 235.9l-5.7 2.1-5.6 2.1" fill="none" stroke="#111" stroke-width="0.85" stroke-opacity="0.9"/><polygon points="663,225.5 738.6,194.4 738.6,214.6 669,240.7" fill="none" stroke="#111" stroke-width="0.9"/><polygon points="738.6,194.4 885.2,134 885.2,159 899.4,160 741.7,228" fill="#626262" stroke="none" stroke-width="0"/><path d="M878 138.3l-2.9-.1-3.3 1.3 5.2 3.9 1.5-2.3-3.4-2.9 3.3-1.4 3.4-1.4 3.3-1.4 .1 3.5 0 3.6 0 3.6-1.8-3.1-2.2-3.6 .4 4.7-3.1-1.6-.5-2.8 .4-1.5 2.8 1.2-3.2 .3M881.2 138l.6-2.6 3.4 2.1-4 .5-2.7 3.1M883.4 141.6l-1.8 1.1-3.2 3-3.8 1.7-.5 3-5.5-2 2.6 4.8 2.9-2.8 3.5-1 .1 2.1 4.2-.8 1-4.2 0 3.9 .4 1 1.9 4.1-5.3-1-3.9 2.8 0-3.9-1.9-3 3.6 1.1-1.7 1.9-4.8-.2 2.4 3-3.8-.9-3.4 .1 2-3.8 .2-3.2 .3-4.5-.5-3 3.9 2.9 4.7-.4-4 2.9 1.6 1.1 2.4-4 1.4 2.3 4.5 .8 2.3 1.8 0 3.6-1.9-.5-1.4-.7-4.3-1.3 .8-3.7M883.4 141.6l1.8-.5M883.4 141.6l1.8-4.1M865.3 144.4l-.8 .6 2.8 1.8-2-2.4 3.6-.5-1.6 2.9 1.3 1.6-3.5 1.3-.6-4.7 .6-2.7 3.3-1.4 3.4-1.4 .5 4.3 .7 2.5-4.1-2.4 3.4-.1M865.3 144.4l-.2-2.1 3.8 1.6M877 143.4l-1.9-5.2M877 143.4l4.6-.7 1.3 3.8 2.3-1.8 0 3.6-2.3 2.1-1 .3-2 3.8 3.8 3.1-.5 5.4-2.5-.1-4.6-2.4 2.7 4.9 .5 3.3-3.6-3.1 .3 4.5-3.3 1.4-4 .1-2.6 2.8-1.1-2.8-1.1 1.4-1.3-2.6 .5-1.6 1.9 2.8-2.4-1.2-4.2 4.7 5.5-2.1-1.1 2.8-3.3 1.4-3.3 1.4-2.3-.8 2.4-.8 2.1-1.9 4.4 .7 3.3-1.4 3.3-1.5 3.3-1.4-1.9-5.1 3.6-3.9-4.9 1.9 1.8-2.9-3.8-1.4 2 4.3-2.9-3.3-2.1 3.9-3.8 3.2-4.1-1.5-1.7-2 3.4-1.7-2.7-1.3-1.5-2-2.7 3-2.5-1.7-4.9 .8-1.6-1.7-1.5 .2-.3-3.5-5.4 .8 .9 5.3-1.2 4.2 2 2.7 1 2.8-1.4-2.6-2.6 3 1.7 3.9 4.2-.8-1.9 5.3 4-.3 1-2.8 5.1 .9 1.6 2.3 3.3-1.4-4.3-2.7 4.5-2.7-1.4-3.4 2.1-.5 2.8-4.1-.8 5.4-2-1.3-.7 3.9 1.2 1.3 1.5-3.9 4.9-3.9 1.9 2.2-6.8 1.7-2.7 2.6 .8 3.1-5.3-.4-1.1-.5-4.6 1.4 1.9 3.8-2.9-1-2.2 4.7-1.8-4.4-3.5 1.2-.7 4.2-.7 1.8-3.3 1.4-3.3 1.5-3.3 1.4-3.3 1.4-3.3 1.4-.6-3.3-.4-3.6-4.5 3.1-3.7 4 5.9 1.3-3.3 1.4-2.6-2.7 1.2-3.3 2.5-.7 2.2 5.3 2.7-4.8 3.9 1.9-2-3.1-2.2-2.7 4.7-3.1 2.1 5.4-2.6 3.5M881.6 142.7l3.6 2M860.4 147.8l-5.3-1.4 1.9 4.1-2.9 .7-2.3-3.4-3.3 1.3-1.3 3.2-2.1-1.8-3.3 1.4-1.2 4.9-2.1-3.5-3.4 3.2 .1 1.1-3.4-1.6-3.3 1.4 4.5 2.3-1.2-3.7 3.3-1.4 3.4-1.3 3.3-1.4 2.6 4.1 4 .2 3.4-1.8 5.3 1.7-5.3 1.6-2.9 3.3 .4 4.8 .6 2.5 1.8 3 1.3-3.8 3.6-.8 1.8-3-.1-.7 .2-2.6-1.4-4.3-3 3.6-2.3-2-3.4-1.5-2.9 2.1-3.1 1.8-1.8-3.3-5.5-.3 0-1.9M860.4 147.8l1.4-4.1-3.4 1.3 2 2.8-3.4 2.7-.1 .8 1.4-.1 3.5 2 1.6-4-5.1 2-.6 3.6-5.9-.4-.9-2.1-.2-1.9 1.1-2.6 3.3-1.4-1 4.8 2.8 .1 .8 3.5 4.1-1.6 3.3-3.5 3.3 1.9-2.6 2.3-.7-4.2-1.7-.5-3-1.4-2.1 3.4-1.3-.7M860.4 147.8l4.1-2.8-2.7-1.3 3.3-1.4M864.5 145l-1.1 4.2M867.3 146.8l-2.2 2.9M873 146.3l-4.4 2.1M873 146.3l1.1 4.1M874.6 147.4l3 2 5.3-2.9M850.7 150.4l-2.2-1.3-3.4 1.4-.7 5.5 2.8-3.7 3.7 0 3.2-1.1-2.3 3.2 0 3.3-.4 5 1.6 4.8-3.1 .8-4.3 2.5-2-1.6-.8-1.1-.5-5.2-4 .7 4.5 4.5-.5 3.3 3.5 2.2 1.7 3.3 .5 2.3 4.9 .9 1-2.3 .4-1.8 2 1-.1 1.6-3.3 1.5M850.7 150.4l-3.5 1.9 1.2 3.9 2.5-3.9M850.7 150.4l3.4 .8 3.6 3.6 2 4.9-1.4 3.3 1.8 1.8 2.1-3 4.4-.7-1.4-2.1-1-1.7-4.5 2.4 2.1-6.5 4 .7-1.6 3.4-2.4-4.1M882.9 150.4l2.3 1.5 0 3.6-1.5 2.1 1.6 1.4-.1-3.5M865.8 153.9l.6 1.5-1.2 3.6 2.3 1.1-.9 1M868.4 151.6l2.8 1.6-1.4 2.1 1.6 4.2 3.5-.7 1.2 1.7-.1-3.2-2.4-1.1-2.2 3.3-3.9 .6-1.1-4.7-2.2 1.9-2 4.5-2.5-2.1-2.6-3.6 .6-1.3M868.4 151.6l1.4 3.7-2.3 4.8M876 153.4l-2.4 2.8 1.3 2.6-.5 3.7 4.4 2.9 1.9-2.5 3 1.4 2.4 .2 .9-2.9 2.3 2.8 1.1-3.5-3.4 .7 1.9-2.3-3.6-.3 1.7 2.6-3.8 1.4 .5 1.3 2.3 1.5 3.3-1.4 3.3-1.5 3.3-1.4-3.4-2 3.6 .3-.2 1.7 3.3-1.4-3.1-.3M876 153.4l3.9 1.1 .7 3.5-4.5 2.5-1.7 2-3.1-1 .1-2 3 3 1.3 3.1-4.9 .8 5.2 3.7 3.3-1.4 3.3-1.5-1.9-4.3-.1-4.9 2.6 5 2.9 1.5-.1 1.3-3.4 1.4 1.1-2.9M877.7 151.5l2.2 3 3.4-3.1M835.1 156.5l-3.3-.5M840.6 156.8l3.8-.8 1.1 2.3-1.5 3.5-1.7 1.1 1.9 2.8-1.4 2.4-5.9 1.7-.5-4-1.5 1.3-4-2.3 .3 5.3-2.3-2.6-1.9 1-2.2 0 1.6 1.8-3.6 3.2-3.4 2.2 .4 1.3 3.4 4 .5 3.4-3.4 1-2.5 5.8 4.6-.4 .7 2.1 1.6-3.6-.3-1.2 3.4 .8 1.2-1.2 4 .9 3.4-1.4 3.3-1.4 3.3-1.5 1.8-2.2 1.5 .8 1.7-3.7 .6-1.8-.7-2.8-2.1-1-5 1.3-1 1.2 2.1 5 1.1 3.2 3.3-1.4 3.3-1.4M844.4 156l-2 4.1-.1 2.8-1.4-2.6-5.7-2.7-2.2 2.1-.4 1.6-1.7 3.5-2 2.7-3-3-1.1 4-3.2-3.1-2.4 3.6-.6-5.4-1.9 5 .5 3.4-4.6-.8-.9-4.6 1.6 .9-1.5-3.3-.1 2.4-3.2-1 .8 1.4-.8 4.3-3.3-4.3 3.3-1.4 3.3-1.4 3.4-1.3-1.9 4.6-.7 3.7 4.1-2.6-1.5-5.7 3.3-1.4 3.3-1.4 3.2 .1 2.4-1-.4 3.5 1.5 2.1-2.6-.3-4.3 .9-3-1.8-.1-2.1M848.4 156.2l.5 4.8-3.6 4.5-1.1 .2-.6 3.5 1.7-3.7 .3 5.3 6.1 .5-3.8 3.3-.4 2.3M876 157.3l4.6 .7 3.1-.4M876 157.3l-1.1 1.5M825 160.2l.2-1.5 2.2 .5 1.5 1.6-.4-3.4-1.1 1.8M825 160.2l2 2.5-1.1 1.8 1.1 4 2.5 3.8-3.5 2.4-.2 3.2-.4 2.8-2.2 .3-2.2 .2-3.7 .3 .3 2.5 2.7 1.4 2.1-1.8 1.3 .8 3.4-1.8 2.3-.3-2.4-5.6-1.2 1.2-6-.9 1.2 4.2-1.7-4.3-5.5 .5 1-1.5 4.5 1 .1-1.2-4.6 .2-1.4-2.2-3.1-.5-1.9 5.4-5.3-.1 .9 1.5 4.4-1.4-.2 2.1 .1 3.1-4-1.3-4.3 4.3-.8 4.9 .4 4.8-4.1 1.1 3.3 1.2 .8-2.3 4.7-.1 3-.5-.7 4.1 3.3-1.4M825 160.2l-1.3 2.8-1.9-2.9 3.4-1.4 3.3-1.3M833 159.7l-4.1 1.1-.4 4 2.4 0 5.2-1.9-3.5-1.6-3.7-.5-1.9 1.9-3.3 .3-2.1 2.4M833 159.7l3.1 3.2 4.8-2.6-2.6 3.3-2.2-.7 .3 2.9 6.4 2.3M845.5 158.3l3.4 2.7M854.1 159.7l4.4 .7 1.2-.7M858.5 160.4l-2.9 1.3-4.2 1-2.1 3.1 3.7 1.7 1.9-2.8-3.5-2M865.2 159l-3 2.8-3.9 1.2M823.7 163l-5.1 .6-3.4-.7M823.7 163l2.2 1.5M828.9 160.8l2 4M844 161.8l1.3 3.7 4.6 2.8M844 161.8l.2 3.9M855.6 161.7l-.7 3 3.5-1 1.7 1.1 .6 3.4 2.4 .6 3.1-.9 2.5 3.7 .5-3-3-.7-1.2 3.7 3.7 0 .7 1.3M862.2 161.8l2.3 3.2 1.7 2.9 3.3-3.5-5 .6-1.4 3.8M883.2 163l2.1-4M890.4 160.9l-1.5-1.6 3.6 .2-2.1 1.4 2.2 2-.1-3.4M811.7 166.6l-2.4 .4 3.3 4.2 .8 2.5 .4 3.7 3.5 4.1-4.8-1.3-2.1-1 1 3.2 3.4 .2 .8 5.9-3.3-1-3.2 3-.6 2.1-4.3-.5 2.7-2.1 2.4-2.4 3-.1 3.2 1.3 2.3 2.4-1.9 1.2-4.9-.5 1.3-4.4-.9-5.1-3.1 1.4 1 3.8-3.5-.8-5.8 0 1.1 5.7-1.9-.8-3.7-.7-.1-5-4.4-1.9 .1-2.4 4.3 4.3-5.1 1.6 .7-3.5-.5-.3-6 1.5-3.3 3.3-1.6-3.7 3.7-2.4-.7-3.6-4.1-1-3.3 1.4-3.3 1.4-.1 2.4-2.6 4-4-3.7-3.3 1.4-2 2.4-1.3-1-3.4 1.3 .3 3.6-3.6-2.2-1.2 3.7 4.8-.5-.1 3.5-.9 3.4 2.3 5-2.2 .4 3.4 .9 3.6 1.8 .9-5.1-3.2 2.1 2.3 3 5.2-.9 2.7-3.4 3.7-2.2-4.2 .9-.4-1.7-2.1 .5-.3-3 3.1-5.4-2.4-.2-.4-1.2 3.7-.2 2.7-4.4 .2-2.3 2.1-4.3 2 .7 2.4 4.9-1.1 2.1-3.4 .7-.6 2.6 4-3.3 1.2 4.2-4.9 .7 0 5.2-3.5 .7 .3-3 3.2-2.9 2.5 4.6 3.8-2.9 .1 1.5 2.5 4.6 4.8 1.7 2.6 2.3-1 3.4-3.3 1.5-1.6-1.1-1.7 2.5-2.4-2.2-1 3.6-3.3 1.4-.6-1.4-2.7 2.9-3.3 1.4-.9-3.2-4.1 4.2-1.6 1.8 3.3-1.4 2.4-4.6-4.3-1.7-2.6 2-5.2-2.3-2 .7-4 .5-2.7 3.6-3.2-.7-.5-3.4-4.5 1.1 .3 3.6 1.4-.5 3.3-.8 2.4-3.5-1.4-3.4 .2-1.3 4-.4 3.2-2.3 3.1 .3 1.2 1.3-.2 3.4-3.2-4.3-2.6 4.1-2.5 1.8 1-4.3-4.2 1.7-2.9-2.8-2.2 2.1 1.6 1.8-2.9-.1-.3-3.5-.3-3.6-.4-3.6 3.6 3.2 .9 3.7 3.1 1.5-1.6-4.2 3.6-2.9-3.2-.5-2-3.1-1.4-2.7-3.3 1.4 4.7 1.3-4.4 2.3-.3-3.6M818.6 163.6l3.2-3.5M828.5 164.8l.4 2.7M836.4 165.8l1.9-2.2M845.3 165.5l4 .3M860.1 164.8l-3.5 1.9M860.1 164.8l4.4 .2M869.5 164.4l1.3 2-1.6 2.2 .3-4.2M875.7 165.6l3.1-.2 3.8 1.8M886.1 164.5l3.2-.1M809.3 167l-4.1 0-3.3 1.3-1.5 3.4-1.6 2.1-3.3 .3-3.3 1.2 1.9 1-3.9-.3-5-.8-3.3 1.4 .7 2.3 1.1 .5-.4 3.1 1.2 2.8 3.4 1.3 1.5 3.3 3.7 2.2 .5 3.3-4.2-1.6-1.1 3-1.3 1 1.5 3.6-2-3.2 .8-3.4-5-.1-1.2-1.1 4.8-3.8-.7-3.2-4 2-1.5 2.6-2.4 5.3-2.4 2.5 2 3-3.2-.7-.5-.7-4.6-.8-2.4-2.5-2.4-.9-1.4-2.6-2.5 3.1-.4-3.5-4-1.3 0-1 5.9-.5-1.9 2.8 2.9 .4-1-3.2 4 1.1-2.3-3.3-3.2-1.2-4.7 .3-3.3 1.4-3.3 1.4-.6 3.3-2.5 .6-3.6-1.2 3.4-1.3 2.7 1.9 2.6 1.3-2.1 4.4 2.1 1.6 1.2-3.6-3.3 2-2.7-2.1 4.8-2.3 4.8 .7-3.6 1.7 2.7 1.7-3.9 1.9-5.7 1.3 .4-3.4-2.8 2.4-2.9 4 1.6 1.8-1.3 1.7 .4 3.6 1.7 3.1-1.1 4.1 1.6 3.5 3.5-.3 1.1 3 1.1-2.7-2.2-.3-2.2 4.4-1.3-4.1 2.2-4.1 4.2 .3 3.7-2.1-.1 3.7-2.1 3.5 3.3-1.5 3.3-1.4-1.7-4-2.7-.3 1-1.9-5.1 .1 .4 3.9-2.9 3.5-1.3-3.8 .6-4.3M813.3 167.5l3.4 1.1 2.5 .4-2 3-3.8 1.7-2.9-1.4-2-1-2.3 2-4.8 1.3-.2 2.1-1.1 2.9 3-1.1-1.7-3.9 2.5-2.4 2.3 1.1 2.2 5.3 2 .6-.1-6 3.5 4.2-1.3 2.8 2.3 2.4-2.5 4.9-4-3.7-2.5 3-1.5-4.3-3.1-.2-2.6 4.1-3.2-.4-3.9 3.1-1.2-1.5-.9 2.3-3.5-.1-4.7-1.2-2.7-1.6-5.4-3.4-1.3-.5 1.1 2.8 2.2 1.8-2-4.1 6.5 1.3 4.9 .4 3.2-5.5-4.4 2.7-3.8-2.4-2.3-.1-4.1 3.6-1.2-2.9-3.3 1.4 .6 5-3.3 1.3-.7-5 3.4-1.3 3.2 1M819.2 169l.6 1.9 3 2.6-3 3.5-.5-.1-2 4.6-2.5 1.1 2.8 1.4-2 4.5-.1 .3M819.2 169l5.6-.5-2 5 3 4.4 3.6 4.4 4-3.6-6.4-2 4.8-2.5-2.3-1.9 1.7-2.2 .6 4.1 1.6 4.5 2.2-1.8-.4 3.1-1.8-1.3-1.2 5.1-4.2 3.1-3.6 1.2-4.1-2.7 .7-4.2-3.4 2.8M824.8 168.5l-5 2.4-.4 4.8-2.2-3.7-2.4 3.9M827 168.5l-.6 1.8 3.1 2-2.5 4.4-1-2-3.2-1.2M827 168.5l4.2 1.6 5.3-.1-1.6-2.9-3.7 3 2.7 2.9 3.7 1.2 2.2 1.9 3.1 2.2-2.1-3.4-3.2-.7-2 2.7 2.3 4.5-1.5 5.8-2.7-.4-1.5-3-3.2 3.9 .7 2.3-1.9-1.1-1.4 2.6-1.7-2.2-2.3 1.5 2-2.7-.7-3.7 4.3 2.5-.2 2-3.1 .4M836.9 169.8l-.4 .2M836.9 169.8l5.4 1.6-4.4 1.2-4 .4-2.1 1.2 3.8 2.7M843.6 169.2l-1.3 2.2-1.5 3.5-2.9-2.3-.3 1.6M853 167.5l.8 3.3M869.2 168.6l3.5 2.9M800.4 171.7l3.5 .5 4.6-.9 1.8 1.9-4.1 .1-3.1 5.2-1.9-1.8-2.4-2.9-3.1 5.2-.2 .6 1.9 3.9 1.2 2.9-3.1 4.6-4-1.9-2.1 .8 0 3.9 3.7-1.7 4.1 .6-1.7 4.9-1.9-2.2-1.3 3.3 3.6 2.3 4.1 1.9 3.3-1.5 3.3-1.4-2.3-3.6-3.2-3.9-1.5 4 1.4 1.8 2.3 3.1 1-5-.1-4.3 3.1 3.8M800.4 171.7l1 2.9-2.6-.8-.3-4.1-3.3 1.4-3.3 1.4-1.7 3.5 .9 5.7-3.4-1.9-2.5-4.6 3.3-1.4 3.4-1.3 .3 2.8-2 .7-1.7-2.2M800.4 171.7l-1.9-2 3.4-1.4 2 3.9 1.3-5.2M808.5 171.3l4.1-.1-2.1 1.1-.2 .9M817.2 172l2.6-1.1M826.4 170.3l-.4 4.4M842.3 171.4l3.3-.6 2.3 3.8 5.2 .1M845.6 170.8l.2 2.8-2.9 4.7M855.8 172.1l2.6 3 1.1 2.1-3.2-.2M795.5 174.1l.2 4.9 4.4 .6 3.9 .4 .3 2.5 3.9-1.8 3.2 1.7 1.1-2.2M795.5 174.1l-1.4 2.2 1.6 2.7 3 1.9-3.2-1.3-4.4 2.1 3-5.4 1.4 3.3M795.5 174.1l-3.6-1.6M795.5 174.1l-.3-3 3.6 2.7M854.3 176l4.1-.9M863.9 173l2.2 1.4M782.6 178.9l2.6-.2-3.3-2.1-3.4 1.3-1.3 2.1M782.6 178.9l-3.1 1.2 .1 4.8M785.2 178.7l2.5 1.1 2.8 4-2.6 2.8-2 3.2-3.6 4.9 1.4 5 .6 3.9-3.1 .5-2.7-5.7-1.6 3.6-.3 2.7-2.9-3.4 .5 5.2-4.7-3.7 1.1 4.3 3.6-.6 2.4-1.8 4.6-.6-2.2 2-3.6 2.2-1.2-1.8M785.2 178.7l-1.9 3.8M785.2 178.7l-1.5 .7M785.2 178.7l0-3.5M790.2 176l-2.5 3.8M795.7 179l5.5-2.3M810.4 179.2l3.4-1.8M810.4 179.2l-2.2 1.5-4.2-.7-2.8 2.3-1.1-2.7-1.4 1.3-1.3 2.6-2 2.5M825.8 177.9l-2.6 3.1-.8 2.6-1.4-2.4M833.4 178.7l1 3.9 2 4.6M779.5 180.1l-1-2.2M791.1 181.7l-.6 2.1M791.1 181.7l6.3 1.8 3.8-1.2-1.2 4.5-1.4-.4 .6 5.3-2 1-3.6 2.7-5.3 1.4 4 1.9 3.2-1.1 .4 3.4-.7 .7-4.1 2 2.3 2 3.3-1.4-1.5-2.6-1.8 4-3.3 1.4-3.7-1.1-1.2 1.5-4.1 .3-2.1-1.7-2 4.3-.2 2.4-3.3 1.5-4.2-1.8 6.1-4.2 1.2-3.6 2.4 1.4M798.7 180.9l2.5 1.4M825.4 180.7l4 1.6-1.4 4.6-.9-4.3-1.7-1.9-1.7 3.7M829.4 182.3l2.8 1.5 2.2-1.2 .8-2.6 2.7 1.4M844.8 182.1l3.2-2.9M763.7 185.4l-1.8-.6-3.3 1.4M763.7 185.4l2.2 3-.5 3.3 1.5 0-.7 5.6-.8-5.6-3 2.1M763.7 185.4l-.6 3-1.7 2.2-1.5-3.4-4.4 3.9-4.8 1.5-2.1-2.3-3.3 1.4 .2 2.5 .3 3-2.5-1.5 2.2-1.5M763.7 185.4l1.5-2M784.5 185.3l.7 1.3 2.7 0 3.1-2.5M763.1 188.4l-1.2-3.6M763.1 188.4l2.8 0 .6 2.1 2.8 1.4 2.3 2.9-1.4-4.5-.9 1.6M769.2 187.1l3.7-1.2 1.6 4.4-4.3 0 4.6 1.6-.3-1.6 5.2 .9 1.4 2.4 .1-5M769.2 187.1l1 3.2M769.2 187.1l-2.7 3.4-1.1 1.2-1.6 4.7-2.7 1.7-1.2 1 0-2.2-5.4 2.1 5.4 .1-3.1 4.9 2.5 .1-1.3 1.2 .9 2.8 2.7-1 3.2 1.6 2.3-.8-.3-1.7-.3-5.9-5.4-2.2-1.2-1.2-4.5-1.3 4.1-2.2-4-2.3M787.9 186.6l2.4 1M800 186.8l4.3 4.6 1.5-4.6 1.1 3.2-2.6 1.4-3.2 1.1 3.1-.4 .1-.7M809.3 187.6l-.2 2.9-2.2-.5 1.6 2.6M828 186.9l1 .8 4.7-.9M785.9 189.8l3.5 4-2.1 1 1 2 .2 4.6-4.2 2.2 2.1 2.4 2.1-4.6 3.8-2.7 2.9 3M785.9 189.8l1.4 5-.3 3-.5 .4-2.8 1.5-5.2-1.3 2.7-3.3 1.1-.4 4.2 3.5M791.5 189.1l1.6 3 2.4-1.1 1.7 1.7 2.4 3.8M809.1 190.5l1.9 1.4M748 193.6l-2.2 3.6-.5 1.6M748 193.6l2.7-1-.1 2.3 1.2 2.4M750.7 192.6l4.7 3M771.6 194.8l-5.4 2.5 5.1 .5 1.9 2.8 1.7-1.6 3.6-.6-1.2-1.9-2.5 .6 .1 1.9-1.2 2.3-4.2 1.5 0 4.6-2.7-1.2-4.3-4.2 4-1.7-2.7-3.9-3.9 .5M771.6 194.8l3.2 2.3M743.3 195.7l-.8 5.5 2.4 1 6 1.1-4.4 3.1M771.3 197.8l-2.7 2M771.3 197.8l3.6 1.2M777.3 196.5l3.9-1.4M804.3 196.4l-3.3 1.9-1 4.6-3.3 1.4-.8-3.3 2.9-2.2 1.2 4.1M750.6 200.9l3.1 2.8-2.8-.4-.4 2.7 4.1-1.6-.9-.7 .8-4.7M750.6 200.9l.3 2.4M759.9 199.1l2.6 2.9-1.4-3.9M759.9 199.1l-.6 5M766.5 200.3l3 2.5-.5-1.3-2.5-1.2M783.7 199.7l-2.5 4.4 .8 .3-.9 3.4 .1-3.7-4.3-2.1M792.3 198.7l-1.2 5-4.7 2.3 .4 2.6-3.3 1.4-3.4 1.4-3.1-1-.8 1-.8-3.1-1.9 6M798.8 198.8l2.2-.5M742.5 201.2l-3.2 .4M744.9 202.2l-1.5 2.7-.6 3.9 3.5-1.1-1.5 3.5 2.9-.1 1.8-.8 1.7 1.4-3.5-.6 .8 4.2-3.8 3.6-2.7-3.5 2.8-4.2-2-2.4-2.5 3.5M784.3 203.6l-2.3 .8 3.2 3.1-.9-3.9M743.4 204.9l-3.8 .3M750.5 206l1.5 2.5 5.8 .2-2.6 2.5-1.6 4 2.9-.6 3.4 2.9 .7-1.8-4.1-1.1 .7-4.1 .6-1.8 1.1-.6 3.5 4.7-.8-5.7 3.4 3.7-.2-2.1 2-2.5M770.6 207.1l-1.1 .3-.2 5.1-2.2-4.6-2.1 2.9 .2 5.9-4.6-1 3 2.8-3.7-1 .4 2.5 3.3-1.5M770.6 207.1l-1.3 5.4M770.6 207.1l4.8 1.2 1.6 2.1 4.1-2.6M746.3 207.7l3.2 2.6M752 208.5l3.2 2.7 1.3 3.4-1.2 2.8-1.7-2.2-2.4-3.5 .8-3.2M758.9 208.1l-1.7 2.4 3.4 5.2 1.8-2.9 2.8 3.9 1.7 .4 3.3-1.4M767.1 207.9l2.4-.5M748.5 215.3l4.1 1.8-3.3 2.8 3.2 .9 1.2 2M744.7 218.9l-3.8 .6-.3-3.6M748.9 219.2l.4 .7-1.1 3.1 2.2 1.3-3.3 1.4-3.3 1.4-2.2-.4 .9-3.7-1.3 .1 .4 3.6M755.3 217.4l4.6 .1-2.9 3.9 3.3-1.4M755.3 217.4l-2.8 3.4 4.5 .6M746 222.7l3.3-2.8 1.1 4.4M855.1 146.4l3.3-1.4M816.5 195.7l-3.3 1.5M741.2 223.1l-.3-3.6" fill="none" stroke="#111" stroke-width="0.85" stroke-opacity="0.9"/><polygon points="738.6,194.4 885.2,134 885.2,159 899.4,160 741.7,228" fill="none" stroke="#111" stroke-width="0.9"/><polygon points="778,192 812,177 820,189 785,205" fill="#a0a0a0" stroke="none" stroke-width="0"/><path d="M803.9 182.9l3.3-3.8 .7 6.6 4.5 3.4-3.5 5-3.4-6.9-3.1 1.8-3.5-1.8 5.1-.7 1.5 .7-1.6 6.6-1.5-4.8-1.8 2.4-4.6 .6 2.1 4.8 2.5 1.1 4.1-1.9-.8-2.2-3.3-2.4-5-1.9 .1-3.4-1-1.5-4.2 1.9-4.2 1.8-1.9 4.9 1 3.9-3.1 2.9-2.1-4-2.2-4 4.2-1.8 2.2 3-4.2 2.8 5.2 1.1 2.2 .6-.8-4.2 4.4-4.2 4.5-3.2 3.2 1.1 0-4.4 5.1 3.7-1.6 2.5M803.9 182.9l-.9-1.9-4.1 1.8-4.2 1.8M803.9 182.9l4 2.8-2.4 1.5 6.9 1.9 .7-4.7 1-4.2-2.9 1.5 .2-4.4-4.2 1.8 4 2.6 1.9 2.7-5.2 1.3 3.3-4M803.9 182.9l-5-.1-3.2 3.3-5.2 .4 .7 2.8 4.8 2.7-6.2 1.9-2.2 3.8 4.7 4 4.1-1.9-.8-3.6-8 1.5-1.4 3.4-3.9-1.1 2.2 4 3.7-.4 4.1-1.9-6.1-.6-1.7 2.9M803.9 182.9l.1 3.6 3.9-.8M813.1 184.4l3.6-.4 .5 6.3-4.2 1.9-.6-3.1 4.3-5.1-2.6-3.8 5.1 7.6-2.5-3.8M791.2 189.3l-1.4 4.6-3-.4-2.4-.3M791.2 189.3l4.4 .2 .4 2.5-.4 4.2 2.5 .6 2.5-5.4 0 6.5 3.3-4.1 5 .3 4.1-1.9M791.2 189.3l-4.9-1-4.1 1.9-2 5.8M795.6 189.5l3.3-2.3 1.7 4.2M812.4 189.1l4.8 1.2 2-2.5M786.8 193.5l-1.4 3.6 .8 4 2 2.5M786.8 193.5l-.5-5.2M789.8 193.9l5.8 2.3-3.3 5.5M798.1 196.8l-1.7 3 4.2-1.9M803 181l4.2-1.9M811.4 177.3l2.7 2.9M808.9 194.1l-4.2 1.9" fill="none" stroke="#111" stroke-width="0.85" stroke-opacity="0.9"/><polygon points="829,170 868,153 874,164 836,182" fill="#a0a0a0" stroke="none" stroke-width="0"/><path d="M861.6 157.6l-2.9-.5 4.2-1.9 4.1 3 2.8-1.9 .2 4.7 2-.7-2.2-4-2.6-2.9-.2 4.8-1.7 3.7 2.9 2.6 1.2 1.7-25.1 11.8 29.3-13.8-5.4 .3-3 3.6-20.9 9.9 12.6-5.9 4.2-2-.8-2.4-3.2 1.8-2.7-5.2-4.2-3.5-4.2 1.8 3.5 3.2 3.6 5.2-.4 3.1-4.2 2-4.2 1.9-4.1 2-.4-3.3 .8-3.6-5.1-.1 5.5-2.5-3.5-4.2-4.3 1.9 2.3 4.8 4.3 3.7-6.1 1.3 2.3 4 4.2-2-6.5-2-2.4-4 1.9-5.8-4.2 1.8 2.3 4 4.2-1 2-6.7 4.2-1.8 4.3-1.9-2.1 2.7 4.8 4.1-5.6 2.7 4.3 .4 3.2-2-1.1-4.7-5.6-.5-.8 6.8-2.1-1.6 2.9-5.2-2.2-.8-.7 6-.4 2.6 2.5-1-.7 3.3 5-2.9 1.1 3.6-6.1-.7-2.6 1.3 4.5 1.3 8.4-3.9-5.3-1.6 1.3-3.1 1.9 1.1 2.5 .5 3.8 1.1 .2-2.6-4 1.5 1.3-6.7 0-5.4 5.1 4.4 1.3-.3 4.4 5.1 .1-6.2-4.5 1.1-.5 4.7-.8-4.4 1.7-2.6 .4-3.1 1.3-2.4 4.3-1.8M861.6 157.6l5.4 .6 3 2.8 3.6 3.2-33.4 15.8M861.6 157.6l3.7 4.3-4.1-1.2-2.5-3.6-4.3 1.8-4.2 1.9-.7 5-.8 3.6M861.2 160.7l-.4 2.3M865.3 161.9l4.7-.9-1.8 3.5M849.5 165.8l4.9-1.5 5.9 3.4 4.9 .4 4.2-1.9 4.2-2-1.6-3.9M854.4 164.3l5.1-1-.8-6.2M850.6 170.5l2.1 3.6 4.2-2M857.1 169.5l4 .6-16.8 7.9-1.9-2.6-1.8-2.3M835.5 173l-1.8 5M865.2 168.1l-4.1 2" fill="none" stroke="#111" stroke-width="0.85" stroke-opacity="0.9"/><polygon points="695.3,248 899.7,160.2 899.7,172 702,262" fill="#4a4a4a" stroke="none" stroke-width="0"/><path d="M893.5 165.6l2 2.1 1.1-3 3.1 .9 0 2.8-1-1.7-2.1-2-3.1 .9-1.7-2-2.6 1.1 .9 3.1-3.5-2-2.6 1.1 .5 3 3.7-.2 1.9-1.9 1.7-4.2 2.5-1.1 2.6-1.1 2.6-1.1 .2 2.5 0 2.8-1 1.1-3.2 1 2.2 3.3 2 .2-1.9 1.7-3.6-1.1-2.3-1 3.4-.2 .2-2.9 4.2 .7 0 2.8M893.5 165.6l.8-3.1 2.3 2.2 .3-3.3 2.8 1.4-3.1 1.9M893.5 165.6l-3.4 2.2 1.8 3-.1-2.5 3.5 2.3 2.5 2.3-2.5 1.1-1.1-2.2-1.5 3.4-1.7-2.4 .7-.1 1 2.5 2.6-1.2M893.5 165.6l-1.7 2.7-1.7-.5M891.8 168.3l3.7-.6M881 169.6l.4 2.7-1.6 3 .9 1.7 1.8 2.8-2.6 1.2-2.6-1.4-1.9 .3-3.4 1.4-.6-.2-3-1.2-2 .4-3.1-4.5-.4 4.1 2.4 1.3-2.4 1.6-.6 .5 1.6 2.5 3.2 1 2.6-1.1-.6-2-2.5-2 .5 2-4.2-.9-2.8-.8 .4 2.4-1.8 .5-2.8 2.4 3.5 3-2.5 1.2-2.6 1.2-2.6 1.1-.9-1.2-.5 .8-1.1 1.6-2-2 .5-.9 2.6 1.3 1.4 .4 .7-1.9-.2-2.6-4.2 0-3.6 .2 1.7 2.9-3.2 1.7-.8-2.3-2.7 .4 2 1 .7-1.4 4 .6 1.6-2.4-3.3-.5 .1-3.9 2.4-.4 2.1 .5 0-1 2.6 .4 2.3-2.9-.9-1.9-2.6 1.1 3.5 .8-3.9 .4 1.6 2.5-.5 2.7 1.1 1.5 3.4-.6 .3-1.4-2-3.1 2.5-2.7 2.3 3.4 1.4 1.5-.7 3.9-3.8-1.6-2.5-2.6-1.5-1 2.3-.9-.8 1.9-.9 3.2-1.4 3.3-3.1-2.6 0 2.1-1.6 .3-.7 3.1 1.2 .7 .6-3.2-1.1-.6M881 169.6l.4-1.5-2.6 1.1-1.3 3.4 .5 2.7 1.8 1.5-2.5 2.8 0 2.6-1.9-2.3-.6 3.4-2.6 1.2-3.1-.8 2.3-2.6 .3-2.5-3.3 1.3 3-2.4-.6-2.8-3 1.2 .7-2.3 1 .5 1.3 .6 2.9 1.3 0-4.6-2.6 1.1 2.6 3.5-2 2.6-.3-1.1-3.6-1.6-1.4 4.4-3.5-.4 0 2.9 1 3-2.1 1 2.7 1.2-2.5 1.2-1.9-2.8-4.2 .9-2.8-1.2-2 1.7-3.1 1.5-.3 .7M881 169.6l.9 .7 3.2 2.3 0 1.9 1.3-1 1.3 1 .1 2-.2 1-2.6 1.2-1.1-2.4 .1-2.3-4.2 1.3-1.8 0-2.1 1.1-.4-2.3-1.8-2.7 2 .6 1.8 .6-1.3-2.3-.5 1.7-.2 2.1 2.5 1.2M881 169.6l-2.2-.4 2.6 3.1 2.6 1.7 1.1 .5-1.2 1.8 3.7 1.2 2.5-1.2 2.6-1.1M881.9 170.3l-.5 2-3.9 .3-2 1.5-1.8 1.9-2.3 1.5M881.9 170.3l-.5-2.2 3.1 1.8 .6 2.7 1.3 .9 1.8-3.8-3.1 2.9-3.7-.3M881.9 170.3l2.6-.4 2.1-4.1 1.6 3.9-.5 4.8-2.6 0 2.7 2 2.3-.2 .9-3.5-2.8-3.1 3.7 1.1-.9 2-3.3 1.7 2.4 1.8M891.9 170.8l-.2 1.9 2.5-.9 1.1-1.2 2.4 .4 2-2.6M897.7 171l.1 1.9M877.5 172.6l2.3 2.7 0 1.5 .4 2.6-.3 1.6-2.6 1.2-2.5 1.1-2.8-2-.3-2.7 3.7 1.3-1.7-3.9 2.2 .4 1.4 3.2 2.9-.2 .5-2.4-.9-.2-3.9-.4-.5 3.5M885.1 172.6l-1.1 1.4M869.5 174.1l1.6-1.6-.3 2.2M869.5 174.1l-1.7 1.8 .6 4 .7 3.8-2 0-3.2 2.1 .6 2.2 2.6-1.2 0-3.1 2.6 2 2.5-1.2-.2-3.2M879.8 175.3l4.1 1-1.4 3.5 2.5-1.1M867.8 175.9l-1.9-1.2 2.6-1.1 2.6-1.1M867.8 175.9l-4.5-.1-2.6 1.1 2.2 3-2.8 2.1-3.7-.5-2.5 .7 1.7-3 2.5-1.2 2.2 1.4-.2 2.6-3.3-1.7-.4 1.2-.8-2.3 1.2 1.1 3.5-.9 2.6 .5M880.7 177l3.2-.7 3.9 .2M856.8 180.3l1.3-2.3 2.6-1.1-.4 2.5M866.4 180.3l-1.1 .9 1.8 2.5M866.4 180.3l.2 1.4-1.3-.5M868.4 179.9l-1.8 1.8M880.2 179.4l2.3 .4M850 182.6l-2.2-.1 1.2 2.2-2.1 .5 1.1 4.1-3.5-3.7-1.9-.9 .5 2-2.7 3.5-2-1.2-3.5-1-2.6 1.2-.1 4.3-2.2-1-.3-2.2 2.6-1.1-2.3 3.3-1.2-.4-1 2.4-.7-3.1-2.6 1.1-2.4 3.5-3.2 1.6 .5-2.9 2.6-1.1 2.5-1.1-.1 5 1.8 1.8 .1 1.8 2.2-1.4-2.3-.4-3.1 .9-1.2 .4-1.6-.4-4.2 1.8 1.8-4 2.4 2.2-1.4-2.6-2.1-1.8-2.2 2.9-3-.7 2.6-1.1 2.6-1.1 2.6-1.1 2.7 1.3-.1-2.4M850 182.6l.4-1.2-2.6 1.1-2.6 1.1-2.6 1.1-2.5 1.1 .3 4.4-1 2-.5 1.3-1.5-2.4-3.3 0 .1 4.1 3.2-4.1 2 1.1M850 182.6l-1 2.1M853.9 182.2l0 2 4.8 .7 1.4-2.9 2.2 1.3-.5 3.5 .2 2.4-2.6 1.1M871.4 181.1l.8 3.4M846.9 185.2l.9-2.7M846.9 185.2l-1.7-1.6-.7 2-1.4 1.1-3-.9-2.6 1.1 .9 2.1 .4-1.6 1.6 2.8-3 .9-2.5-3.1-.8 3.1-1.9 2.4-3.2 .2-1.4 2.2 4.2 .7 2.4-1.4-.9 2.2-2 2.2 0 1.2 3-1.5-3 .3-2.8 .1-.9-3.8-3.1-3.4 3.3 2-.2 1.4-1.4 3.4M851.6 185.1l-2.6 .6-1 3.6 2.8 3.3-3.1-.5M860.5 184.4l1.3 2.4-1.7-.4 .4-2 1.8-1.1M838.8 187.4l1.3-1.6M838.8 187.4l-1.3-.5-2.6 1.1M843.1 186.7l1.3 2.8-2.3 2.3-1.7-1.6 4-.7M849 185.7l2.1 2.1M838.4 189l-1 2.1M852.2 189.3l2.1 3.4-1.9-.8-1.6 .7M855.6 188.7l-1.3 4M855.6 188.7l1.3 2.8M828.8 192.1l.2 1.6 2.8 2.9 .4-3.1 2 1.7 1.3 2.2 4.5-.2 1.6-.6-.1 1.9-1.5-.3-4.5-.8 3.4-3.9-4.7 1.7M828.8 192.1l.9-1.8-2.6 1.1 1.7 .7M830 192.5l-1 1.2-1.2 .8M834.1 191.1l-1.8-1.9M838.9 193.5l2.5-.3 .2 3.4 2.5 .7-1.2-3.2-1.3 2.5-2.7-3.1 1.1 3.7 0 1-1.1 1.5-2.5 1.1-2.6 1.2 .5-2.7 2.1 1.5-1.6-.4-.5-1.1-1-1.9-1.5-.8-3.3 3.1 2.8 1.1-2.5 1.6 2.5 .8-2.6 1.1-2.6 1.2-2.5 1.2-2.6 1.1-2.5 1.2-.7-1.1-.4-1-1.7 1.3-2.4-3.3 2.2 .7 .2 2.6 .2 2-2.6 1.1-2.5 1.2-2.6 1.1-2.5 1.2-1.4-2.5 3.5 0 .4 1.3M841.4 193.2l1.5 .9 2.5 1.4-1.3 1.8 2.5-1.1 2.6-1.2 2.5-1.2M847.2 193l-1.8 2.5M847.2 193l3.1 .4M818.9 197.6l-1 .4-3.3 .7 1.5 3.3-1.9-.2-2.2-2-.8 .3-1.2 .3-1-1.3 2.2 1-.4 1-.8-.7-3.6-.1 .8 2.4 2.8-2.3 .5 2.7 3.7-1.3 .4-3.1-.4-1.8M822.1 196l2.3 1.5 3.2-1.6M822.1 196l1 4.2 2.6 4.1-1.3 .7-1.3-4.8-2.8 0-.2 1.6-1.2 3.3-1.5 1.8-1.9-1.3 1-.8-3.2 .1 .9-3.1 2.3 3 .8-.3 2.8-2.7 1.8-1.2 2.5 4.4-.8 1.7-2.3-2.3-1.2-2.6-4 .2 1.2 2.5 1.6 .6 2.1 2.7-3.2 .1 1.1-2.8 2.4-.7-.3 3.4M822.1 196l-1.8 4.2M824.4 197.5l-1.3 2.7 3.2 .9 2.5 1.3-.3-2.7M831.8 196.6l-.5 3M833.3 197.4l2.2 0-1.2 1.9M835.5 197.4l.9 3.4M835.5 197.4l3.4 2.3 2.6-1.2-1.5-1.3M811.2 200.1l.4-2.1-2.6 1.1-2.6 1.2-2.5 1.1-1.1 1.8-1.5-.7-2.6 2.4-2.6-.2 .7 2.8 2.8 1.2 1.4-1.7 1.2 2.9-2.6-1.2 .3 2.5 3.6 .9-.4 3.9-3.3 .1 1.2-2.5-1-.1-.2 2.6-1.3-1.2-.5 3.4-2.6 1.2-2.5 1.1-1.3-1.7 2.7-.5-2.4-2.5-1.5-1.5-2.3 0-1.2 .6-3.1-1.5 .3 3.3-3.8-2.3-2.7 .8 .4-2.8 2.3 2 3.5-1-.6-3.3-2 2.2-.6-1 2.6-1.2 2.6-1.1 2.6-1.1-1.5 1.9 0 5.1-.4 3.4 2.2-1.9-1.8-1.5-2.8 1.8-3.1 .7-.9-2-2.5-.2 1 3.9 2.4-1.7 .6 3-.5 3.2 1.5 1.6 2.6-1.2-4.1-.4-1.1 2.8-2.5 1.1 .1-2.5 .7-2.7-.3-2.6 .6-.6 1.5-3.7 4 1.3-2.5 3.7-3.3 1.9 2.8 1.3-3.5 1.4 2.4 1.4 2.6-1.2M812 199.8l-1.2 1.3-.3 2-3.3-.4 1.3 2.9 2.1 .8 1.9 3-3.1-1.5 1.2-1.5-.1-3.3-2 2.5-2.6 .4-.7 1.5-1-1.2-3.2 .7 1.8-3.8 .7 1.4 .4-3.2-2.6 1.1-2.6 1.1 0 1.3 .9 3.8-2 1.4-.8-2.6-3.3-1.7-1.1 4.1-1.5-1.3 .6 1.6 .9-.3 3.1-.8-1.5 2.4-.1 .8 2.3 .6-1.3 2-1-2.6-2 3.6-.3 3-2.9-2.4-.6-2.1 1-4 1.8-1.8 0-1.7-2.5 1.1 2.5 .6M812 199.8l2.6-1.1M812 199.8l-.4-1.8M817.9 198l-1.1-2.2M810.8 201.1l3.4 .7M816.1 202l.4 2.8 .9 2.1-.1-2.4M821.9 200.6l-.6 3.8 3.1 .6 1.7 .5-.4-1.2 3 0 .1-1.9-3.1 1.9 .6-3.2M831.3 200.8l0 2.4 2.5-1.2 1-1.6M831.3 200.8l2.5 1.2M798.7 204.9l2.3 2.1 2.5-2.4 2.4 1.4 3.5 1.9-1.7 2.8 .1 1.6-1.6-2.5-1-2.3-.3 2.5 1.3-.2-1.9 2.5-.8-.2-1.3-2.2-2.3 1.3 .1 2.3-1.5 1.4-3.1 2.6-3.5-1.6 3-1 .5 2.6-1.1 .9-1.4 2.2-2.6 1.2-1.4-1.1-2.5 .4 1.3 1.9 2.6-1.2 1.3-2.9-2.7 1.8-1.2 2.3-2.5 1.1-.6-3.9-3 .3-3-1.3-2.3-2.6 1.3 3-2.6 .2-2 2.5-.9 2.5-2.3-1.3-.3 1.8 2.6-.5-.5 2.4 3.3 1.6 2.6-1.2-1.8-.3-4.1-.1-1.8 3.9-1.7-2.9-2.8 1.1-2.3-1.2 1 2.8 1.3-1.6 .2 .2-1.5 1.4-1.4 .9 .4-3.7-2 3.5 1.1 3 .5-2.8-1.6-.2-3.8-1.7 3-.8 .8 2.5-2.1 1.4-2.2 1.9 2.9 .9-.7-2.8 3.2 1.6 2.6-1.1 1.2-1.7-1.9-.9 .7 2.6 2.5-1.2 2.6-1.2 2.6-1.1 2.5-1.2 .8-1.5 1.9-2.2-.8-2.5-1.8-2.8-2.6 .5 1.5-1.4-2.7-2.2-.9 1.4-4.5 2.1-2.7-.2-3.2 .2 3.1 3.3-2.4 .5 1.5 1.6 2.3-1.5 2.8-1.9-1.4 3.9-1.4-2-1.4-.6-.9 2.1-3.4-.4-2.1-.7-1.8-2-2.6 1.1 .4 2.4-3-1.3-1.6 1.8 .6 1.7 1-3.5-2.6 1.1-2.6 1.1-2.6 1.1-2.6 1.1-1.2 1.8-.8 1.2-2.6 .8-.5-1.6-2.6 1.2-2.6 1.1-2.6 1.1-2.6 1.1 1.8 4.2-3.3-1 1.5-3.2 3.3 2.8 1.7-.2 .9 .8-3.2 1.4 .6-2-.7-3.9 1.6 1.8 1-2.9 .7 .6-1.7 2.3 .8 1.9-2.3 2.2-.9-.6-2.8 2.9 1.6 .9 1.7-1.8 2.2 .1 1.4-2.9 2.3 4-3.8 .7-3.8-.1-.7 2.5-.9-3.4-.5-3.9-.6 .7-2.3 2.4 .6 2.4 .8 .3-2 3 1.2-3.3-4 0 2.3-3-2.2-2.4 0 3.3 2.2-.9 .4-3.5 1.2 1.6 1.3-2.7 .5 2.8-1.8-.1-1.6 1.9 1.1 .6-3.4 2.4 .1-2.1-2.6-2.2-.4 1.3-1.9 2.5-2.6 1.6-2.6-.3-2.2 1.7-3.2-1.2-2.3 2.2-1.7 2.5-1.2-2.5 2.6-1.1 .3 1.1 1.1 1.2-1.6 3.9 1.9 .4 2.7 1.3-.7-4.1 2.1-3.7-4.4 2.2 1.2-3.4 2.6-1.1 2.8 .6-.3-1.7 2.9 2-.3-3.2-2.6 1.2-2.5 1.1 .6 2.3 2-.6 .2-1.1M798.7 204.9l-1.9 2.6-1.3 1.6 .7 3.8 2.3 2-3.6 0M803.5 204.6l.7 1.7-2 3.6 3-2.4 4.2 .4 1.4 4.6 1.7-3.1 3.2-1.2 2.1-.3-1.9 2.3 2.6-1.2M803.5 204.6l3.7-1.9-1.3 3.3-1.7 .3M807.2 202.7l-3.3-1.3M810.5 203.1l2.8 1.8-2.7 1.5M813.3 204.9l-.8 4.5 3.4 .8M801 207l.3-4.5M808.5 205.6l.9 2.3-3.2 1.9 1.5 .9 3.1 1.8-3-.2-2.1 2.5-2.6 1.2-2.6 1.1-2.5 1.2 1.8-2.2 .7 1M792.4 209.9l1.6 1.6 2.2 1.4 1.4-2.8-2.1-1-2-3.3-2.6 1.1 1.5 3M802.2 209.9l2.7 .1-.6 2.3-1.2 3.7-2.1-2.4 2.5-1.5 1.4-2.1M812.5 209.4l.8 1.9M786.9 209.9l-1.1-.8M786.9 209.9l-3.1 3.6-2.6-1.1-.9 2.1-.2 1M786.9 209.9l1.2 4.5M786.9 209.9l2.2 .5 2.4-.2-1.1 4.2-1.3-4-.7-2.4M786.9 209.9l-3.7 .3M791.5 210.2l2.4 2.1-3.5 2.1-1.7 2.1 .2 4.2-2.4-2.3-.8 .1 .7 2.6 .1-2.7-2.4-1.6 1.6 1.7-1.1 1.7-.5-3.4M791.5 210.2l2.5 1.3M797.6 210.1l2.3 1.1-3.7 1.7 3.8 .6M799.9 211.2l1.1 2.4M781.2 212.4l-3.2 .1-2.6 1.1 2.2 1.7-1.3 1.3-3.5-1.9-1.6 2-.9-.9 2.5-1.1 1.1 4.2 2.4-2.3-1.3 3.2-1.1-.9-3.6-.8 0-2.3-2.6 1.1-2.6 1.1-2.6 1.1-2.6 1.1-2.6 1.2-.7 3.1-.3 4.4-.7 1.6 1.3 2.4 .3-3 1.7 3.1-2-.1-1.8 1 .5-3.4-2.3 .3-3.1-.4 2.3 3.3-.4 2.3-2.4 3.2 2.2 .1-2.6 1.2 .4-1.3 .4-4-2.7 2.2-1.8 1.4-1.2 1.5 2.4 1.3-2.6 1.2-2.6 1.2-2.5 1.1 .1-1 2.4-.1-2-.8 3-2.3-1.7-2-1.3-3.2-.5-3.8-1.1-1-1.3-.7-2.6 1.1 3.1 .8 1.9-.2 3.2-.9 3.1-1.4 .6 2.1-2.9 .7-.8-1.4-3.1-1.9-2.5 1.1 .5 1.9-1.1 3.9 1.5 2 2-2.3 3.5-3.3 1.7 1.6 1.4 1.7-1.5-.9-2.1 2.5-1.7 1.6-2 1.4-2.1-1.1 .8-1.2-2.3 .7-4.8 0 3.3 2.1 1.9 2.3-3.8 .1 .5 2.5 3.3-2.6 1.8-.7 2.1 .8-.4 .9-2.7 2.2-2.5 1.1-2.6 1.2-1.6-.4 1.1-1 1.5-1.5 2.5 .2 .8-2.8 .8 3.2 2.6-1.2M776.3 216.6l-.9-3-2.6 1.1M788.7 216.5l3.2-.6M770.3 218.1l2.1 2.2-2.7 1.6-2.5 .3 2.6 1.3-.1-1.6 3.3 .4 3.8 .3 1.5-.2 .3-3.2-1 .4-.8 3-1.3 2.7-2.5-3-.6-2M770.3 218.1l-2.6-1.2-1.9 3.3-.7-2.2-2 2-.1 3.5 2.8-3.3 1.4 2 2.3 3.1 2.1 1.9-3.5 1-.9 4.1-1.7-2.8 .4 2.3 1.3 .5M770.3 218.1l-.6 3.8-3.9-1.7-1.4 3.9 .2 1.6-1.6 2.4 2.8-2-1.2-.4-2.5-.1 .9 2.5-2.8 1-1.5-3.9-1.4-3.8-2.5 1.1-2.2 3.5-.5 2.3 1.2-.9 3.3-2.9-4 1.5 .7 1.4 3 1.5 2.4-3.7 1.9-1.2-.7-3.8M777.6 219.6l.4 .2-1.2 2.8M794.3 218.4l1.1 1.1 0-2 2.6 .8M763.1 220l-.6-.9M781.6 220.5l3.6 3.6 1.2-3-1.8-.9M760.6 224l-3.3-2.6M769.8 223.5l3.2-1.2M748 226.5l-1.7 1.2 .7-1.9 1 .7M762.1 225.6l-1.9 3.5-3.9-.2 .9 1-1.6 .6-2.3-3.1 0 3.4-1.2-2.5-3.5-.1-2.6 3.5-1.2 2.3-.1 .8-1.6-2.4-2 3.8-.2 2.7-3.3-.9 1.3 2.3 3.7 .6 0-3.6 3 1.5 1.2 2.8 1.2-1.7-2.4-1.1 .6-3.1 3.2-1.7-3.4-2.3 4.2-1.3-1.6-2.2-2.3-.5-1.9-.8 1 2.7-3.6-1.6 .5 3M765.8 226.1l2.3 2.1 1.4-2.9-3.7 .8-.5 3.2M772.1 224.8l3.4 .5 .2 2M775.5 225.3l-3.9 1.9 .8 2.8M775.5 225.3l2.1-.2M746.3 227.7l-.9 1.9 3.2-1.4M752.1 228.3l-2.5-3.6 2.6-1.1M752.1 228.3l-1.9 2.1-.8 3.6 3.1-.3 .8-2.9 1.8 3.1-.7 4.2 2.3-3.2-1.6-1-2.6-.2-2.4 1.5 2 .8 2.3 2.1-2.5 1.2 .2-3.3 3-2.1M768.1 228.2l-2.6 1.3M745.4 229.6l-2.3 2.8-4-.5 .1-2.8M746 231.7l.2 4-3.6 1.6 1.8 3-1.8 .6-1 3.1M734.6 232.9l-3.1-.4 2.7 2.9 .4-2.5 1.5 3.1-1.9-.6 1.1 3.3-1.5 2.1 3-1.6-1.5-.5 .8-2.7 3.5-.3-2.4-3.6M749.4 234l.7 1.2-3.9 .5 1.2 1.7 2.3 1.8-1.7 .7 1.3 .6-2.5 1.1M756.9 232.9l-.2 2 .3 2.1 2.6-1.2 2.5-1.2M762.6 231.8l2.1 1.7M727.9 236.5l-.9 2.1-1.5 1.4 .5 2 2.1 1.9 2.5 2.4 1.3-3.1-1.4-4.5-1.8-.3M727.9 236.5l2.6 2.2 3.7-3.3-4.6-1.2 1.9-1.7M729.6 234.2l.9 4.5-.9 .5M739.6 235.7l1.5 .5 3.6-1.4M741.1 236.2l1.5 1.1M722.2 239l-1.1-2.1-2.5 1.1-2.6 1.1-2.6 1.1-.4 1.2 0 .1 3 .9-1.8 3-3.1-1.4-.3-2.7 2.2 .1M747.4 237.4l.6 2.5M719.8 239.6l-.5 2.5 3.4 .8-2.8 1.6M721.6 239.7l1.1 3.2 3.3-.9 .4-1.4 1.8 1.5 3.7 1.1 1.9-2.4M736.8 239.2l.7 3.2 1.7 1.7-3.5-1 1.1-3.9M738.9 240.3l-1.4 2.1M738.9 240.3l.7 2.9M742.6 240.9l1.6 1.9 .2-2.5M713 241.5l1.2 3.9 1.7-.9 2.8 3.3-3.6 2.3 3 .9 3.1 2.3 2.5-1.2-.5-.8-2 2-3.2-1.8 .1-.5 2.6-1.8 2.9 .5-2-1.5-.9-3.4 2.9 1.5 4.5-2.4-2.4 4.8 3.1 1.1-2.5 1.1-.6-2.2-2.1-2.4 0 3.4 2.7 1.2-2.6 1.2-.1-2.4-.4 1.6-2.5-2.1 .5 4.1-2.6 1.1-2.6 1.2-1.3-2.7 3.9 1.5-.6-2.9-3.3 1.4-3.6-.3 3.1-3.7 .9 1.2-.4 2.8-1.7 1.6-1.5 1.1 2 1.2-2.6 1.1 .6-2.3-4.3-.8-2-2-.3 .5 .4 2.1 2.1 2.2-1.6 2.7-3.4 .3-1 .1-1.2-2.5 2.2 2.4 .8 .8 2.6-1.1 2.6-1.2 2.5-1.2-3.5-.3-.2-2.8 1.1-4.7-3.6-.9-1-2.2M713 241.5l-2.2-.2-2.6 1.1 2.9 1.6 .7 4.1 2.4-2.7 .9 1.1-3.3 1.6-.7 4.5-.6 .7-3.3 1.5 2.3-4.1 0-3.3 1.6-3.4M722.7 242.9l-2 1.9M728.2 242.1l-.1 1.8 1.7 4.3-1 1.6 2.6-1.2-.5-1.4 3.1 .2-1.6-1.7-1.8 .6-.8 1.9-4.1 .5-2.1 1M708.5 245.6l-2.8 .8 3.8 1-1-1.8M715.9 244.5l-.8 2 3.6 1.3 2.9 .4 2-1.9M730.6 246.3l.3 .9M734.9 245.9l1.6 .4M734.9 245.9l-.9 1.5M698.2 248l-2.9 0M705.7 246.4l2.6 3.7-3.1 2.7-3.6-2.1 3.3 2.6-2.6 1.5 3 .6 1.9-.6-2.3-1.5M705.7 246.4l-1 2.8 .5 3.6M709.5 247.4l-1.2 2.7 1.2 .6 2.3-2.6 2.4 .8 .9-2.4 0 3.6-4 2.5 1.9 1.9 .5 2.3 2.5-1.2-3-1.1-2.5-1.2-1-2.6 1.6 1.9M709.5 247.4l2.3 .7M718.7 247.8l2 1.4 .9-1M718.7 247.8l-.6 3.2M699.3 249.2l-2.8 1.3 1.2 2.6 1.2 2.5 .7-2.1 1.6 2.6 1.6 .5 3 3.7-.5-4.9-2.5 1.2-.4 4M699.3 249.2l.3 4.3 2-2.8 3.1-1.5M699.3 249.2l2.3 1.5M715.1 250.1l2.9 1.4M710.5 253.3l1 2.3-4.1 2 1 1.5M702.3 254.8l-1.1 1.3-2.3-.5 1.3 2.6 1-2.1M702.3 254.8l.5 1.8-2.6 1.6M697.9 246.9l2.6-1.1M710.8 241.3l2.6-1.1M721.1 236.9l2.6-1.1M778 212.5l2.6-1.1M793.5 205.8l2.6-1.1 2.6-1.1M853 180.3l2.6-1.1M863.3 175.8l2.6-1.1M873.7 171.4l2.5-1.1 2.6-1.1M881.4 168.1l2.6-1.2M886.6 165.8l2.6-1.1M844.1 197.3l-2.6 1.2M757 237l-2.6 1.1M703.2 261.4l-1.8-.7" fill="none" stroke="#0a0a0a" stroke-width="0.6" stroke-opacity="0.85"/><polygon points="695.3,248 899.7,160.2 899.7,172 702,262" fill="none" stroke="#111" stroke-width="0.9"/><polygon points="702,262 899.7,172 902.8,186 709,278" fill="#8a8a8a" stroke="none" stroke-width="0"/><path d="M895.9 175.9l1.1 5.2-5.5 1.6 2.3-2.9-3.9-3.4-3.8 1.8 1 3.1 1.3 5.7 2.7 .4 3.7-1.5 4 2 3.8-1.8-3.8-.1 0 1.9-3.8 1.8-3.8 1.8-2.6-2.1-4.9-1.1-2.9-.1-5-.3-4.8 .5-4.1-1.5-3.8 1.8 2.9 3.6 .7-3.9-3.6 .3-3.8 1.7-3.6 4.8-.5 4.1 2.7 1.3-2.2-5.4-3.2 .9-.1 3.9-4.3 1-3.1-.5 .8 3.5-1.5 5.4 5.8-3.5-2-4.9-2.5-1.9-.6 1.4-2 3.8-3.2 0-5.9 .1 1.4 4-4.8 1.2 3.7 .8 .5 6-2.9 1-3 .1-1.7 .5-.6 4.2 3.8-1.8-3.2-2.4-4.2 3.8-4.5 1.4-4.8-6.2-.4-5.6 5.8-.3-1.9-1.5-3.9 1.8 6.3 4.4-5.9 1.2-1.2-.3 .2 .8-3.1 .9-3.9-3.5-3.9 1.7-.3 6.6 3.1-2.3 1.4 2.9-3.7 2.7 4 3.1 3.8-1.1 1.2 1 .3-3-1.9-3.1 6.9 .9 1.9-1.1 .5 2.7-3.9 1.8-3.5-1.2 5-2.2-1.5 3.4-3.8 1.8-3.8 1.8-3.1-.4-.7 2.2-3.8 1.8-5-1.5-1.8 .2-4.2 2.4-7 1.3-3-2.5-1.6 3.9-2.1-3.8 2.8-2.9 4.9-2.4 2.4 .7 2-2.6-.8-4.1 3.8-1.8 3.8-1.7 1.8 1.7 2.1-3.5-3.9 1.8-3.1 3.3 1.8 2.2-1.3 3.5-6.2 1.2-2.9 1.8-.5 5.2-4.6 1.4-3.8-1.6 1 4.8 5-.8-2.4 4.6-5.5-1-1.6-2.5-1.1-2.8-4.1 0-.4 5.5 4.4-1.1 .1-4.4-.6-.6-1-6.5-3.8 1.8-3.9 1.7-3.8 1.8 3.1 2.8 3.1-3.4-3.5 1 1.1-2.2 2.4 1.2 1.5-2.9 .2 2.7 4.6 2-3.5 .6-2.1 4.9-6.7 .3 1.1 6.7 .9 3.5-3.8 1.8 .2-2.9-1.5 .5 1.3 2.4-2.8-1.1-3.9 .7 .1-5.6-2.6-.7 3.7-2.9 1.4-3 2.1 1.6 2.8-2.9-3-3.4-1.9 4.7-2-3 3.9-1.7 3.8-1.7 2.7 .4 .4 2.4-2.9 4.2 4.6 5.2 1.2 3.2-2.2-1.7-1.6 3.5-3.6-1.1 2.7-2.4-3.1-3.2-1.8-2.5 3.8-1-2 3.5-1.1 6.1-5.3-3.6 1.1-3.6 3.5-1.4M895.9 175.9l1.7-2.9 1.1 4.6 1.1 4.9 2.1-.4-.9-4.1-1.2 4.5-2.8-1.4 1.7-3.5-2.8-1.7-2.1-1.2-3.9 1.7 .8 4.2 .8 2.1 3.3 3.2 4 .1-1.8-4.9-3.2-1.3 2.1-3.9M890.7 180.6l-3.6 .7-2 1.1 3.3 4.6 .2 2.4 2.5-2 .1 4.1-3.8 1.8-4.7-.6-4.2-.4-1.9-.9 2.4 .2 3.7 1.1-2.9 4.2 3.8-1.8-.9-2.4-1.9-4.5-1.8 3.4-.5 .7-5 3.4-2.6-3.6 1.9 1-1.8-4.7-.1 3.7-4.9 6.5 6.1 2 3.9-1.9-2.5-3-7.5 2.9-3.5-2.2-1.4 .2 4 3.9-5.1 2.1 .7 3.4-1.2-.9-2.6 2.7-3.8 1.8-3.8 1.8-3.8 1.8-3.8 1.8-3.8 1.8-3.2-.4-.6 2.2-3.8 1.8-1.5-2.9 2.1-6.7-2.6-2.4-3.6-2.3-.2 5.6-3.9 .5 .3-4.3 3.6 3.8 3.8-3.3 2.2 1.2 1.4-5.3-3.6 4.1 .3-4 3.8-1.8 3.8-1.7 3.9-1.8 3.8-1.7-2.9 4-1.2 2.9 .7 3.5-5.2 .6 2.6 5.1-3.2 2.9-3.8-5.6 3.3-.4 1.1-2 4.5-4.1-3.6-3.4-2.3 3.5-2-.1 .5-1.7 1.5 1.8M890.7 180.6l3.1-.8 0-5.1 3.8-1.7 2.5 .9 .9 4.1-2.3-.4 1.4-3.7M890.7 180.6l-4.6-2.4-1 4.2-1.4 5.9 4.7-1.3 3.1-4.3-.4 4.7 3.9 2.3-.2-3.8 2.2-4.8M877.8 184.5l2-1.3 5.3-.8-2.8-2.5-2.5 3.3 1 5-1.8-2.7-3.2 2.4-3 5.2 .7 2.6-1.4 4.9-3.8 1.8-3.8 1.8-4.5-1.6-2.1-2-.7 5.2-4.8-5.8-4.7-4.3-2.1 3.4-1.7-1.7 3.8-1.7 3.9-1.8 .9 2.2-4.8-.4 .4 5.3-2.3 3-2.8 .3 1.3 5.1-3.8-1.6 1.2 7.2-3.8-1.5-3.7-3.1M877.8 184.5l.6-2.8-3.8 1.7-3.2 2.9 4.4 1.6-1.2-4.5-3.8 1.8-3.9 1.7-.2 1.5 4.3 0 .4-2.1-.6-1.1M877.8 184.5l1.2 1 .8-2.3 3.9 5.1-1 4.4M877.8 184.5l-2 3.4 3.2 3.7M877.8 184.5l-3.2-1.1M879.8 183.2l-1.4-1.5 3.9-1.8 3.8-1.7M887.1 181.3l4.4 1.4M899.8 182.5l-1 3.5M899.8 182.5l2.8 3.6-.7-4M871.4 186.3l-4.5 .6M875.8 187.9l.8 3.5-3.8 1.7M866.7 188.4l4.2 3.7-4.9 .2-3.5 3.2 3.5 3.1 2.3 3.8-3.2-1.9-.6 3.7-3.8 1.8-3.8 1.8-3.6-.6-.2 2.4-2.5-.6-.5-3.1-4.3-1.9M876.6 191.4l-3.1 4.3 6.3 1.2-3.8 1.8M883.7 188.3l3.7 5-3.8 1.8M888.6 189.4l-1.2 3.9M855.7 195.2l5.4 1.4-1.1 6-.5 2.5-2.3 .7-3.9 1.4-3.2-1.3 2.3-5.9 2.8-.7 2 6.5-.3 2M855.7 195.2l-.3-3 3.9-1.8 3.2 5.1 .6-6.8M855.7 195.2l-4.1-1.3 3.8-1.7M862.5 195.5l0 .9 2.6 4.1 .9-1.9 0-6.3M862.5 195.5l-1.4 1.1-3.2 4M878.5 192.3l1.3 4.6M852.5 196.1l2.7 3.2M861.1 196.6l-1.8-6.2M841 201.4l-.9-2.3M841 201.4l-4.8-.5M841 201.4l4-.9-1.1-3.1M841 201.4l2 2.9-2.5 3.5-2.6 5.7 0 3.3-3.8 1.8-2.3-1.2-.9-6.6-6.4 .9 2 4.7 .6 1.6-6.5 .5 2.4-3.2-3.5 .5-.5-4.7 1.6 1.1 2.4 3.1 3.5 1.1 2.3 1.1M852.4 200l.9 7.2-2.7 1.8-6.3 .4 1.2 3.8M860 202.6l-2.8 3.2M831.9 204.3l-3.3 .1-3.9 1.7-3.8 1.8-3.8 1.7M831.9 204.3l3.4 4.1M830.5 209.6l.4 1.2-4.4 5.6M844.3 209.4l5 2 1.3-2.4M844.3 209.4l-2.6 5.6M819 211.1l1.9-3.2M820.6 212.2l-1.1 3.6 1.1 2.7 2.3 3.3-.2 2.2 3.8-1.8-3.6-.4M824.5 211.7l-1.5 3.6 4.1 2.7M805.4 216.4l4.1 2 .1 5-.1 3.3 2-.2-1.5 2-.5-1.8-2.9-1.8-4.4 1.6-4-1.7 .8 5.4 3.3 2.1-2.5 2.6-3.8 1.8-3.8 1.8-3.4-2.5-.4 4.3 3.8-1.8 .8-4.9-.2-3-1.4-1.5-2.5 6-.1 .9-1.8 2.7-5.2-1.4 1 2.9 1.8 1.9 2.4-3.4 1.4 1.6-3.8 1.8-3.8 1.8-1.4-2.8-2.2-2.4-2.8 3.2-4.5 .3 3.5-5.1 1.7-2.2-1.9-1.9 4.7-1 .8-4.9 4.8-.2-.7 2.7-4.1-2.5-3.8 1.7 3 3.2 4.4 .1 6.6 3 3.9-4.5 2 2.8 4.2-3.2-6.2 .4-.1-5 3.1-3.8 2.4 3 .3-1.9-2.7-1.1-4.9 1.6-.7-1.6M805.4 216.4l-.9 4.5 5-2.5 2.9-1.7 .8-5.3-3.8 1.7 .1 5.3M805.4 216.4l.2-1.5 3.8-1.8 3 3.6M805.4 216.4l-3.7 .2-3.8 1.7 .6 4.6 2.9 .3 4.5 .6 3.7-.4-3 1.5-.4 4.7 1.2 1.7-3.8 1.8-1.3-.8 2-1.4-2.1-4.4-3.2 3.7 .8 4.7M813.6 217l2.9 7.3-3.9-6.8-3 5.9-5.1-2.5-2.8-4.3M813.6 217l5 .7-.2 5.5 4.3 .8-3.8 1.9-2.4-1.6M813.6 217l-1 .5M819.5 215.8l-.9 1.9 2 .8-2.2 4.7M831.8 217.4l-1.5 3M790.9 223.4l-3.7 4.3-3.7-.8 1.7 3.4 3.7 4.8 4.1-1.5 3 3.1-1.2-3.3M790.9 223.4l-4.5 .2-2.9 3.3-1-1.6-3.8 1.8M801.4 223.2l.8 3.3M801.4 223.2l-3.5-4.9M801.4 223.2l-3.2 1.6-5.5 .8 6.3 4.6 5.3 .7 1.9-1.3 3.3-2.9M805.9 223.8l.7 1.1M787.2 227.7l5.5-2.1M787.2 227.7l4.2 1.4M777.9 232l.9 2.8-3.7 .1M782.8 229.6l-.5 2.5-3.5 2.7M810 228.5l-2.6 2.8M773.2 233l1.7-4.2-3.9 1.8-3.8 1.7 6.2 4.8-4.6 2.3M773.2 233l.2 4.1-5.2 1.7M773.2 233l-2.2-2.4M773.2 233l-6-.7-3.6 4.5-1.7 .2 2.8 2.4 4 4.4-1.9 5.1-2.5 .7 1.3 1.6 1.2-2.3 2.6 .4-.7-5.5 1.2-1.6M788.9 235.1l-7.1 2.2-2.4 3.8 3.4-.9-2 3.7-3.8 1.8-3.8 1.8-3.8 1.8-3.8 1.9-3.9 1.8 2.6-3.4-1.7-5.3 1.7 .6 2.5 4M763.6 236.8l1.1 2.6-5.9 1 3.8 3.9-2.1 5.5-1 1.5-2.5 0 3.5-1.5 3.8-.2 0-4.7M787 238.7l-4.2 1.5M754.9 242.7l-4.9 1.3-5.8-1.2-1.9 6.6-3.3 .8-2.9 .1 .4-4-3.8 1.7-1.2 4.8-2.7-3 3.9-1.8 3.4 2.3-4.6 2.5 2.8 3.9-4.7 .5-2.6 2 3.3 4.2-5.5 .4-2.9-2.7 5.1-1.9 4.3 1.4 3-3.9 1.9 0 2.9 1.3 3.6 4 3.8-1.8 3.8-1.8-2.9-2.2-.9 4-3.3-1.8-2.2-3.3-2.5-2.1 .6 5 1.9-2.9 1.2-2.1 1 5.4-.5 3.6-3.8 1.8-3.8 1.8-2.8-1-2-1.2-2.8 5.8 3.8-1.8-1-4 1-2.8 1 4-1 2.8 3.8-1.8 1.6-5.7-.5-3.2 2.3-3.7 3.7 0-3.2-2.8 1.4-5.7 3.8-1.7 3.8-1.8M754.9 242.7l.8-5.1M754.9 242.7l3.9-2.3M754.9 242.7l1 1.9M774.4 241.9l2.6 3.8M774.4 241.9l-2.9 2.8-2.1 4.6M768.7 243.8l2.8 .9 1.7 2.8M739 250.2l-2.5-3.9 3.9-1.8 1.9 4.9 2.6 .5-.7-7.1 4.4 4.2 5.3 1.1 .4 5.6M739 250.2l-.5 2.8-2.4-2.7-1.8 6.4 2.4 3.2-5.4 .7-1.7-3.4-1.2-5.4 3.1 1-1.9 4.4-4.9-.8 3.7-4.6 .4-2-3.8 1.7-3.8 1.8-3.9 1.7-3.8 1.8-1.3 5.8 4.1-3 2 1.4-1.1 .9 1.1 4.1-1 5.5-1.5-6.4-4.8 3.9-1.7 6-.9-3.5 2.6-2.5 1.3 7.5 3.8-1.9 3.8-1.8-2.6-1.3-6.3-2.5 5.1 5.6 1.2-3.1 5-4.8-.8-5.4 .4-.2 .3-4-.7 4.2-3.2 4.7 0-5-1-6 4.9 2.1-1-3.8 3.5 3.1 .3-4.9 3.4 .3M742.3 249.4l-.1 3.6 2.7-3.1M753.9 248.1l-6.4 2.5 3.8 4.9 1.5-1.3M738.5 253l-4.2 3.7M742.2 253l5.2 3.2-4.2 2.2-4.1-.4-.2 5.8-2.2-3.9 2.4-1.9M742.2 253l5.3-2.4M722.2 257.1l2.5-.7 2.3 2.8-2.2 4.6-2.5 2.9 1.4 4.3 3.8-1.8-5.2-2.5-4-.7-2.5-.9-3.6-2.5-2.5-4.1-3.9 1.8 2 4.5-1.5 1.5-2.6-.4 1.7 3.8 1.7 3.9-5.1-11.6 6.8 15.4 3.5-.9-3-1.5-2.2-1.4-3.4-7.7 1.5-3.8 2.6 2.7 4.4-2.2-2.8 3.8-3.1-.1-.9 3.4 3 1.8-1.3 2.1 1.7 3.8 .5-2.4M722.2 257.1l-3.9 3.9 3.2 .3 3.3 2.5 2.7 5.4M724.7 256.4l-2.8 4.7M751.3 255.5l-1 2.9 3.8-1.8M716.3 259.6l-2.8-2.8-3.8 1.7-1.9 6.3 1.6 1.6 6.4-1.3 1.4-3.2-5 .7M716.3 259.6l.9 2.3M716.3 259.6l1-4.6M736.7 259.9l-4.4 4.7M705.2 262.1l.6-1.8-3.8 1.7 1.7 3.9M705.2 262.1l1.1 4.2M705.2 262.1l-3.2-.1M709.4 266.4l1.6 2.6M709.4 266.4l-1 5.1M709.4 266.4l-4 3.3M722.3 266.7l-2.4 6.1 3.8-1.8M782.5 225.3l3.9-1.7M761.7 253l-3.8 1.8" fill="none" stroke="#111" stroke-width="0.85" stroke-opacity="0.9"/><polygon points="702,262 899.7,172 902.8,186 709,278" fill="none" stroke="#111" stroke-width="0.9"/><polygon points="777.8,251.8 1043,126 1052,127.5 1059,134.8 1055.5,141 786,273" fill="#1c1c1c" stroke="none" stroke-width="0"/><path d="M1041.3 127.9l-2.3 3.2-2.8-1.9 .1 3 2.2 2 3.6-.1 1.5 2.3 1-1.2-2.5-1.1-3.1-3 .1-3.3 2.2 .1 1.8 3.3 2.2-1.1 5.1-.6 2.6 1.9-3 .7 .4-2.6 1-2.1-3.1-.5-3.2 3-2 1.3-1 2.9-2.7 4.3 4.2-2 2.2 1.9 3.4-3.9-.3 3.8-3.1 .1-1.4 2.5 1.6 3 1.6-4.4 4.4 1.5 2.8-1.8-.7-2.4-1.9-1.6 3.3-.2 2.8-.9-2.3-2.3-3-.3 .8-2-2.4-2-6.3-1.1-3.1 .2-.7 1.4 3.8-1.6 3.2 .6-3 3.2-.7 5.1 4.6-.8 3 .7 .8-3.7 2.5 3.5-1.4 1.8 3.8 0-2.4-1.8 .5-3.2-2.2-2.3-3.4 .1-2.1-2.6M1041.3 127.9l3.8 2 .2 .2 3.9 4.3 .8-2.3 2.2 3-3.3 3.1-1.3 1.2 3.7 3.7 2.9-1.5 .6-2.5 3.1-2.4-1.5 2.8-2.2 2.1-2.2-.7-3.1-2.7 5.2-1.5-2.1 4.2-.7 2.2-2.9 1.4-2.9 1.4-.1-1.1-1-2.4-3.7 3.4 1.9 1.5 2.8-2.5 3-.3-.8-5.1-1.8-1.1-3.9 1.2-2.5-1.1 .3 2.7 .3 1.5-4.1 .7-1.8-2.6-.3-4.7-2.4-1.2 .2 2-4.1-.2 0-3.2-2.9 1.3-2.9 1.4-2.9 1.4-2.9 1.4-2.9 1.3 .2 3.2 3.3-.6 2.4 1.3-2.8 1.2-4.5-1 1.6-.9 2.9 1.9-4.1 3.5-.4-4.5-2.1 .5-2.3-1.8-.8 2.5 3.1-.7 2.5 4 3.7 .7 1.1 .8 1-1.4 4.3-1.6 1.7 2.1 3.4-2.1 2 2.5-2.9 2.2-2.5-2.6 1.5-3.5 3.2-2.9-2.4-2.4 1.4-4-4.4 .6-4 1.5 4.5 .8-.2 3.5-3.7 .1 2.4 4.2 1 3.4-4.8 .7 .6 2.5-4.7-.7 2.6 3.9-4.9 .5 1.4 1.8 3.5-2.3 1.6-.4 1.1 1.9 2.9-1.4-4-.5 .5-2.8 2.1 .2 1.4 3.1 2.2-2.2 1.7-1.1 0-1.9-3.2-1.3 .7-1.3 .2-3.6-.6-2.8 5.1 0 1 .4 4.1-2.8 .2-4.6 4.5 1.6 1.1 .8-.9-4.2 .5-3.1-2.7 1.1-.4 1.7-1.7-1.9 2-2.8 2.9-1.4 2.9-1.3M1045.1 129.9l0-3.6M1034.2 132l-.9-1.4-2.9 1.4 1 2.8 2.8-2.8-.4 4-2.2 .8-3.3 2.4-.8-2.6-3.9 2.9-.5-2.3-1.4-1.1-2.6 2.6-2.6 4.1-2.6-1.5 1.1-.5 1.5 2-.6-3.9 3.2-.2 .6 4.4-3.2-.3-.4 2.5 1.7 3.6 .5 2.5-4.1 1.8 1.5-3.7 .4-4.2M1034.2 132l2.1 .2M1034.2 132l-3.8 0-2.9 1.4 3.9 1.4-3.9 1.8-2.9-1.9-1.5 2.5M1039 131.1l4.1 .1 1.5 4 1.2 3.1M1045.3 130.1l4.7 2M1035.9 133.9l-2.1 2.1M1035.9 133.9l2.4 3.7-4.2 3.1-.5-.1-5.3-1.4 .2 3.8 1.3 3-.3-2.6 5-1.1 1.4 1 3.8-2.2-5.6-.4 .4 1.6 .5 3 .9-2 1.8 3-.8 3.8-2.9 1.4-2.9 1.5-2.9 1.4-2.9 1.4-.7-.8 1.7-3 1.9 2.4 1-4.6 .5-.6 4.6-2.3-1.1 3.9-3.5-1.6 1.4 3.8-1.9-3.2M1035.9 133.9l2.6 .3-.2 3.4 1.4 3.5 2.2-1.6 1.7-3.1M1031.6 136.8l2 3.8 .9 1.7-2.4 3.3-2.3 .4-2.6 1.3 1.3-4.3M1013.9 141.3l-.7 2.1-2.6-.2-.5-1.6 2.9-1.4 .9 1.1M1015 140.8l.9-1.9M1015 140.8l-2-.6-2.4 3-3.4-.2-2.9 1.4-.2 2.5 2.7 4.4-4.7-.4-.7-5.1 2.9-1.4 2.1 1.1-2.3 1.4 4.6 .3 1.6 5.1-3.5-1 1.9-4.1-2.3-1.7M1019.1 138.7l-.3-1.2M1023.6 139.5l2.5 1.1 2.2-1.4 1.2 4.2 2.6 2.2 2.9-.3 2.7 1 3-.5-1.8 1.9-2 2.4 2.9-1.4-.9-1-1.2-1.4-3.4 .6 2.6 3.2-3.7 .7 .8 .7M1023.6 139.5l-3.9 3.6-.8 1-1.1 4.8 5.3 1.8 1.5 4.3-3.6-.9-2.7-2.7-1.5-1.1-2.6 2.9-1.6-.9-2.3 0-1.2 2.1-2.3-3.1-2.9 3.5-1.8-3.9-.2 3.2-3-3.6-1.2-1.6-2.1-.4 .4 1.5-2.8 1.6-.5-1.7-3 1.4 .6 2.1 2.9-1.8-3.5-.3-2.9 1.3 .5 3.3-2.9 2.8 3.8 .1-.9-2.9-3.4-1.9 .5 4.7-.7 4.4 .8 1.9 5.4 .5 .4-4.7 3.1-1.6-3.2-4 3.2 1.3 2.6 .3-1.9-3.5 1.9-3.3 2.9 .5 3.2 .4-3.6-3.8-2.9 1.4-2.9 1.4 3.3 .1 2.5 5.1-4.4-1.8-.9-1.7-.2 2.4-2.7-.6-.1 1.8-2 3.6 5.2 .4 0-2.7 2.6 1.5-2.6 1.2 .7 3.3 1.9-1.5-.2 3.2 1.9 .9 1.8-3.4 3.2 .9 2.4 3.1 2.9-1.4 2.9-1.5-.4-2.7 3.3 1.3 2.9-1.4 2.8-1.4-2.7-1.5-.1 2.9-3.4-.6 .5 2-2.9 1.4M1026.1 140.6l-2.7 2.4 1.9 2.9-1.3-.1-1.9 1.5 1.3-4.3M1041.9 139.5l2.5 1.3 3.2-1.4M1041.9 139.5l2.5 2.9 1.6 1.4 2.4 .7M1041.9 139.5l-1.9 3.1 4.4-.2 0-1.6M1054.8 139.1l1.6 .4M1010.6 143.2l1 1.1M1010.6 143.2l-1.1 1.6-.8 2.4 3.3 1.6 .6 3.5-2.1 2.6-.2-2.6 1.7-3.5M1040 142.6l.7 3.2 4.7-1 .6-1M1040 142.6l-2.3 3.7M1018.9 144.1l3.2 3.2M1025.3 145.9l1.9 1.4 2.5 1.9 .1-3.2M1032.1 145.6l2.2 1.3 .7-1.6M1032.1 145.6l-2.4 3.6M1040.7 145.8l-.9 2.9 2.8-1.4 2.9-1.4M997.7 148.9l.8-1.8 2.9-1.3 2.7 1.1-2 4M997.7 148.9l-1.7 1.1M1015.7 149.5l2.1-.6M1015.7 149.5l-3.1 2.8M1027.2 147.3l-.9 4.7M998.9 150.5l-.4-3.4M998.9 150.5l-.4 4.6 3.4-1 2 .7 5.2-.4 1.4 .5 3.7-1.7-2.3 4.4-4-.6 .4 2.2-.3 5.1 2.5-4.2 1.4-2.5-3.3-1.6-4.7-1.2-.6 2.3 1.3 1.3-2.8 .7-.6-3.5 2.7-.8 4 2.2 .7-1 1.9-1.1 1.4 2.7-3.6 1.6 2.2 .9 2.8-.7M1023.1 150.7l-2.1 3.4-2.6 2.6M1033.2 150.8l-2.1 2.2M990.3 153.4l-3 2.5 2.9-.7 2.8-1.2 1.1-.7-.7 3.2-.4-2.5M990.3 153.4l-3.5-.8-2.9 1.4-1.9 4.1-3.2 1.6-2.2 1.5-1.9 1.1-2.4-2.8 2.9-1.4 3.6 1.6 2 3.1 2.9 .3-1.7-5-3.9-1.3 2.9-1.4 1 2.7 2.4 .6 3 3.6 .8-3.5 2.1 2-2.9 1.5-2.9 2.7-.1 2-3.1-2.6 3.2 .6 2.1 3.7 5.1 1.6 .3-3.5-2.1-1.3 2.5-1.8 1.7-1.2-3.8-1.7 2.1 2.9 3.4 .5 3.7-2.5 1.8 2.5-2 2 2.9 .9-2.9 1.4 0-2.3-1.6-1.1-1.2 4.8-3.4-2.4 .5 3.8 2.9-1.4 2.8-1.4-1.6-3.4 3.6-.9 3.8 1.5 .4-4.1-3.7-2.5-2.3 2.6-3.5-.7-2.6-1.8M998.5 155.1l-2.5 1.7 3.7 2.1-3.7-.9 0 3 3.7-2.1 2.1 .2 1.5-2-2.1-1.5-2.7-.5 1.2 3.8-.2 2.8M1001.9 154.1l-.7 1.5-1.5 3.3M1003.9 154.8l.7 3.6 3.7 .8-2.8 2.4 2.5 2.7M1009.1 154.4l-.5 1.6M1018.9 153.9l-2.1 3.2M1026.3 153.9l-1 1.9-2.9 1.4M1026.3 153.9l1.9 .5M996 156.8l0 1.2M1007.9 157l-3.3 1.4 .9 3.2-2.8 1-.9-3.5M978.8 159.7l-.7-2.9-2.9 1.3-.5 4.2-4.3 1.3-3.4 .3 .9 4.4-3.6-2.4-2.1 1.6 1.5 1.3 .6-2.9 2 3.9 2.2 .7 .9 4-3.5 0 1.1-1.8-3.3-1.6 1 2.9-1.9 .2 .9-3.1-2.1-2.1 .6-1.5-3.5 1.5-.3 1.8 .1 2.7-2.9-.7-2.8 .2-2.6 3.1-1.1-5.6-2.9 1.4 4 4.2-1.8 .7-3.7-2.6-.5 .5-.3 4.1-3.4 1.3-.8-1.8 .7-3.6 1.2 2.5-1.1 2.9-3 1.9-.5-4.5 2.7 .8-2.2-2.2-.5 1.4-2.5 4.3-2 1-3 4.2 .5 .9 6-1.5 .6-.6 .7-2-2.8-2-2.9 .6-4.3 .4 2.2 1.7 0 2.5-3.7-1.8 3.7-.7 2.1-2.1 .1-3.6-2.9 1.4-2.9 1.4-2.9 1.3-.7 2.2-.8 .7 3.4 1.6 .3 3.9-2.4-.6-.7 5.7-1.5 1.7 1.5 2.9 4.3-1.8 1 1 1.6 1.6-1.8 2-2.9 1.5-2-2-.9 3.4-1.7-4.4-1.2 5.8 2.9-1.4 2.9-1.4 1.2-2.5 1.7 1 2.9-1.4 2.9-1.4 1.8-2.8-2.8 1.8 0-1.5-2.9 .7-.1 2.6 3-1.8-2.9-.8-1.7 1-1.9 2.6 .9-3.6 1.3-3.3 .2-2.4-2.7-2.2 2.5 4.6 .9-.5-.7-1.9 3.4-1.5 3.5 .7 2.4-.9 .3-2.1-1.5-3.3-3.5-3.6-2.5 5.1 .8 1.1-3.2-.2-1.8-3.6 1.5-2.4 1.5-2.6 2.8 2.2 .9 .4 4.1 3 2.2-1.6 4.1-3.3 5.3-.4 1.7-1.4 1.6 .7 3.9-1.4-1.4 3.6-2.1-.1-.4-2.1-3.3 .7-4.3-1.7-1 2.1-2.4-.8-1.7 4.1 1.8 2.8 2.1-1.8 4-1 3.6-.7-3 2.3-2.1 1.4 1.5-3 .6 1.6 2 1.8 1-4.1 4.1 3.9-1.2 3.7-1.6-2.3-1.3 3.7 2.9-1.4 2.9-1.4 2.8-1.4-1.2-1.5-1.5-4.4-.8-4 3.6 1.3 2.8-1.1 3-2.8 2.6 3.8-1.2 0 1.4 4.5 .4-4 2.5 2.5 1.4-2.9 2-2.4-.3-1.3 2.5 .1 3 2.3-2.8 1.4-.2-3.7-1-5 3.4 3.2 .4-3.5 4.5-.3 3.6 .5-2.5 3.2 .4 1.4 2.9-1.4 2.9-1.5 1-2.4-1.4 1.1 .4 1.3 2.9-1.4-1.9-1 1.4-2.8 2.7-3.3-1.7-1.7M982 158.1l-1.2 4.7-4.4 1.2 4.1-.1-.4 2.7 1.2-2.2-.8-.5 .3-1.1-4.2-1.6-1.4-3.1M974.7 162.3l1.7 1.7-1.8 4.7-.8-4.3-1.6 4 2.4 .3 4-.9 1.5-1.2 4.3 .4 2.2 1.7 3.3-3.2 1.8 4.8M974.7 162.3l-.9 2.1-3.4-.8-1-2.7-2.9 1.4 .5 1.6-3.4-.2 .7 2.2-3.6-.9 1.5 2.5M976.6 161.2l-.2 2.8 3.7 2.6 3.3 3.9-1.5 1.5-3-1.2-3.8 .3-.5-2.4-.4 2.9-.9 2.8-.7-1.1-3.2 1.2-2.4-1.8-.7-2.9-2.6-1-2.1 .2-2.9 0-.9-2.6-2.9 1.4-2.9 1.4 1 1.6-3.9-.3 3.7 2.5 .7 4.3 2.1-4.5 2.8-2 4.4 3.4-4.3-.7-.6 1.4-2.3-2.1-.7-5-1.9 3-.2 2.2M980.8 162.8l.5 1.6 2.4-1.3 3.7-.8 2.5 3.2M1002.7 162.6l-1.4 1.6 .9 2.9 2.9-1.4M964.3 165.9l2.7-2 2.4-3 2.9-1.4-1.9 4.1-2.5 4.7 4.3 .1-1.8-4.8M973.8 164.4l2.6-.4 2.2 3.8 .3 3-4.3-2.1M992.4 163.7l-.4 3.1 1.1 .7 4.6-2.4M992.4 163.7l.7 3.8M958.7 169l-3.8-1.2 3.5 3 3.2-1.8M958.7 169l2-4 2.9-1.3 2.9-1.4M963.7 168.8l0 2.3 2.6-1.3 1.6-1.5 .6 2.2 3.7-2.1 2 3.2 1.9 4.5 2.4-1.8 .6 4.1 2.9-1.4 2.5-2.8-1.1-3.7 1-3.5M972.2 168.4l.4 4.9-4.1-2.8-1.5 2.2-2.3 1.3 .1 1.8-2-1.6-3 .7-.8 4.8 2.4 .8 .4-1.9 1.9 3.5 .9 1.5-3.4-.5-1.5-.3-.9 3.9-1.1 .1 2-4 1.7-2.3 2.3 1.6 2.5-2.5 1.8 .5 3.9-.4-4.5-.1 .6 .5M980.1 166.6l-1.2 4.2M986.6 168.7l-3.2 1.8M986.6 168.7l3.7 2.7-3.3-.4 .8 3.2-3.3 0-2.6-2.2-3.4 2.3 3.5 2.7-.1-5M986.6 168.7l.4 2.3M953 170.8l2.6 2M958.4 170.8l5.3 .3M974.2 171.6l.9-.5M974.2 171.6l-1.6 1.7M990.3 171.4l-2.5 2.8M944.7 174.2l1.3 4-1.8-3.5-.9-1.4 1.4 .9 1.5-2.3-2.9 1.4-2.9 1.4 3.8 0-2.6 2.5 2.3 1.6 2.1-.6 2.4-1.4 1.5 2.3 3.6-1.8 4.4-2.4 1.9 0 2 3.7 1-4.4M958.5 173.5l1.3 1.4M964.7 174l1.2 .5 1.5 5.1 2-5.1 3.9-.1 2.8 1.7-2.2 1.2-.5 3.9 2.9-1.4-2.4-2.5M973.3 174.4l.3 1.6-4.2-1.5 2.5 5.2 1.5 1.5-2.9 1.4-2.9 1.5-3-.5 .1 1.9-3.5-2.4-2.4 3.6 3 .2-.6-3.8 .2-2.6M941.6 177.2l-1.9 1.1-2.2 3.7-.2 1.8 1.5 .4-1.3-2.2-3-.2-2.8-3 2.9-1.4 2.9-1.3 2.9-1.4M948.4 176.8l-2.2-4.9M948.4 176.8l-.2 3.7-1.5 3.7-3.8-3.3-.2 4.3-3.9-1M950.2 176.1l3.3 1.2-2 2.5 2.5 2.2 2.2 .4 2.8-2.7 .7 3.1-3.5-.4-1 .6-.8 4.4 1.7 2.3 1.6-2.9-3.3 .6-3.4-4.6 .9-.9M950.2 176.1l-.3 3M953.5 177.3l1.9 1.1 2.5-3.5 1.1 4.8M964.8 175.8l1.1-1.3M964.8 175.8l1.4 3.8-4.4-1M973.6 176l-1.7 3.7M937 177.5l-2.4-.1-.1 4.4 2.1 4 4 1.2-1.4 1.6 2.3 4.7 3.9-1.4 0-2 3.9-2.3-4.1-.4 .2 2.7-2.6 0-2.2-2.9 4.6 .2-2.4 2.7-3.6-1.3-2 3.2 4.3 1.5 3.7 .6 .2-2 2 2 1.4-3.5 1.5 2.1-2.9 1.4-2.2 0-.7 1.5-2.9 1.4-2.9 1.4-3.7-3.2-.2-2.3-.4-3.6-3.1 2.9 1.5 2.3 2-1.6M946 178.2l2.2 2.3 2.8 2.3-.7 .7 1.3 5.3-2.8 1.6-3.4 1.5-2.6-2-1.3 3.4-1.1 3-5.4-1.3 2.2-3.2-2.8-2.7 1.6-2.7 3.2 2.2-1.7 1.1-3.1-.6-3.6-.1 .5 3-2.7 3.4 4.2-1.1 2.2 .7-.2 3.2 1.1 1.4 2.8-1.4-3.9 0-2-3.9-.8 4.2-3.4-3.1 .5 3.8-1.4-3.3-5.6 .5 0 4.6-.6 .7-2.1-3.6-2.7-.8 .5 3.5-4.3-2 2.1 3.1-3.6-.9-4.6-1 .4-1.5 4.2 2.5-.4 2.7 1.8 1.8-2.2 .7-2 .6-.4-2.1-2.6 3.6-.4-4.3 1.6-4-2.7 2.1-2-3.6 1.6-2.3 1.9-5 1.4 5.5-3.3-.5-2.5 .4-1.5-2.6-.7 3.3-.8 3.1-4 .3-.3-4-2.9 1.4 1.5 3.8 1.7-1.2 3.1 2.3 3.1-1.1 3.7 .2 1.1 1.9 3 .7-.2 3.1 1.9 4.5-2.7 .2-.2 1.2-3.2-2.9 3.4 1.7 .8-4.7 4.8 3.1 2.9-1.4-1.5-.4-1.4 1.8-2.9 1.4-2.9 1.4-2.9 1.4-2.5 .1-1.7-2.4-2.7 1.3-2.3-2.3 1.3-1.3 1 1.5 2.7 .8 .4 3-3.1-1.7 0-2.1 2.6-3.4 3.8-3.5-2.3-1.2-.9-2-2.2-1.5-4.3-3.7 2.9-1.4 2.2 2 3.1 1.2-.9-1.9 1.4-4-2.9 1.4-2.9 1.3M951.5 179.8l-.5 3 3-.8 1.2 1 2.5 3.8M966.2 179.6l-1.6 4M927.3 182.8l-1.4-1.2-.1 3.6-2.8-2.3-2.9 1.4-2.9 1.4-1.2 2.4 2.8-.7 1.9 1.4 .8-3-1.4-1.5-1.3 3.1-2.8 1.8 1.7 4-2.9-1.9 1.7 2.9 2.5 .8-1.3-1.8-1.2 1-3.4 2.1-.9-5.1-1.6 3.2 1.1-3.4-3.2-1.2 .8 2.9 2.4-1.7-.3-2.6-2.9 1.4-2.9 1.4-3 1.4 1.1 3.6 3.5 2.3-5.1 0-1.7 3.4-1.9 2.5-1.2-1.4 .9-2.6 3.9-1.9 4.7 1.5 1.4 4.7 3.2-3.7-1.4-3.8 .6-2.8-1.3-1.7-2.3 4 3.6-2.3 2.5 1.9 1.7-5-.7-2.8 1.9-.4 0 1.1-1.9-.7-1.9 2.7 2.6 .1 1.2-2.1 4.7-.4 4.2-1.4-2.6-2.3-2.2-.8M948.2 180.5l2.1 3M963.7 182.1l-2.5 1M922.3 185.1l3.5 .1-.9 2.2-2.1 3.3-2.1-1.9-3 4.4 3.9-2.1-2.6 3.9-2.3 2.3-.2-3.1M929.5 184.5l3-1.7M942.7 185.2l2.5 2M951 182.8l4.2 .2M916 188.1l-1.7-1 2.9-1.4 1.6 1.7 2.7-1.6M924.9 187.4l2.7 1.4 1.9-1.8M930 187.9l-2.4 .9 .3 4.7M930 187.9l4.4 1.2M936.6 185.8l2.6 2.8M949.3 187.6l2.3 1.2 2.8-1.4M949.3 187.6l-.5 2.8-3.4-.5M958.8 186.7l.1 1.6 2.9-1.4 2.9-1.4 2.9-1.4M911.7 191l2.4-2.5 .2-1.4-2.9 1.3 2.7 .1M911.7 191l.5 .2M920.7 188.8l.9 2.3 .5 5.3 3.1-5.1 2.4-2.5 3.7 3.2M922.8 190.7l-1.2 .4M909.3 192.7l-3.7-1.5M937.2 191.8l3.2 4.5 1.2 .5-.1-3.5 3 2.1 2.9-1.5M901.2 196.6l-2.2 .7-5.1-.6M907 196.7l3 .5 3.1-.9-.2 2.5-2.9-1.6-2.8 1.3-.2-1.8M913.1 196.3l3.6 1-3.8 1.5-1.5 2.2M919 195l3.1 1.4 4.3 2.8 2.7 0M919 195l.4 3.1 .3 4.2 1.8-.6-.9-3.6-1.6-3.1M940.4 196.3l-1.7 1.9M919.4 198.1l1.2 0M919.4 198.1l-2.2 2.7-2.2 1.1-4 1.8-2.8 1 2.4 1.5-2.6 1.6-2.4 .5-2-3.2-3.8 1.2-3.3-1 3.3 3.3 0-2.3-1.3-1.9 2.8-.5 2.8-1.8-.5 3-2.4 4.8 2.6 .9 .3 4.3-2.9 1.5-2.9 1.4-2.8 1.4-4-.5 1.4-3.2-3.8 1.6-.4-1.8-2.5-2.2-.4-2.2-3.5-3-1-2-1.9-2.5-2.9 1.4 1.1 5.1 3.3-.8 .4-3.2 1-3.9 2.9-1.4 0 3.8 .9 .4-.9-4.2 4.7 3.6-1.8-4.9 4.4 2.4-2.6 2.5 1.9 3.4 2.3-.7-2.2-1.4-.1 2.1-4-2.4-1.8 3.7-3.7-1 2.9-3.5-2.9-2.4-2.9 1.4M932 198.5l2.8-.3M892.5 201.9l.2 1.9 1.5-3.1-3.2-2.6-2.9 1.4-2.9 1.3 2.6 4.6 .9 4.5 4 .9 .2 4.9 2 1.3 .6 2.4-2.9 1.4-2.9 1.4-2.1-.7-.8 2.1-3.1-1.3 .2 2.7-3.2-.5-3.4-2.1-2.3-.1 1 2.6-4.2-1.2-.2 2.7 0 2.1-3-.5 1.3 2.1 2.5 .6-2.9 1.4-3.1-2.1 3.5 .1-.4 2-2.9 1.4-.2-3.5 0-4.7 5.2 1.1 3.1 .2 1.3-1.7 1.3-2.5 3.9-.3-.5 2.4-4.7 .4 2.1 3 2.9-1.4-.3-2-2.6 3.4-3.4-1.3-2.9-2.9-4.2-.7 3.3-2 1.6-.2-2.7-3.2-1.8 2.3-3.6-.3-1.5-2.3 1.3-2.3 3.6-1.4 1.7-1.3-1.7-3.2 3.3 .7-.4-2.1 2.9 1.3-2.5 .8-1.6 2.5-2.4-.1-2.2-1.7-2.9 1.4 1.8 .9 3.3-.6 .7 1.4 3.4 1 .3-3 3.4 2.8 .7-.7 1.8-1.4 1.5 3.5 3.2-3.9 4.1 1.4 3.3-.4-.8-3-2.7-.8-.8-4.5-3.9 1.5-4.8-1.1-2.9 4 0-2.6-2.9 1.3-2.9 1.4-.7 3.1-2.9 2.8-2.1 .3-.1-3.4-2.9 1.3-2.9 1.4 4.4 3.5-2.5 3.4-3.8 .1-2 .3 2.7 4.9 1.7-.1 4.6-2.1 3.8-.2 1.3 .9-1.3 4.6-2.7 .2-3.4 .9-1.8 2.4-.8 3.4-1.3 2.4-2.9-.7 3-1.9-2.1-1.3 1.3-2.6-.6-4-2.9 1.5-1.9-1.6 1-2.2 2.3-4.5-1.4 .3-3.8 2.2 1-3-4 .2 .5-1.5 2.9-1.4 .6 2.7 2.8 .8 .5-2.4 2.9 1.8-.6-3.7-.4-1.9-2.3 2.4 2.7-.5 1.5-.6 2.9 4.2 4.1-2.1-1.6-1.3-1.5-4.9 3 2.1-1.5 2.8-5.4-.8 1-2.7-2.9 1.4-2.9 1.4-2.9 1.3 3.5-.3-.6-1M915 201.9l-.3 2.4 1.1 3.1-3-1.9 1.9-1.2 2.5-3.5 2.5 1.5 2.6 1-.2-2.3 3.4 1.8 3.5-1 1.1 .6 1.9-2.4 1 1 2.9-1.4M921.5 201.7l.8 1.6 3.2-.5M889.9 204.4l2.8-.6 4.6-.8-.8 2.3-.3 5.2-2.1-3.4-1.4 3.7-.9-3-3.1 2.1-2.9 1.2 .2-2 .1-4.1 1.7 .4 2.1-1 2 1.3 .8-1.9 1.4 3.3 2.4-1.8 2-.9M892.7 203.8l3.8 1.5M901.3 203.9l-1.5 2.4M905.2 204l-1.6 1.1M911 203.7l3.7 .6 5-2-3.9 5.1-1.6 1.7-3.6-2.9 2.2 4.7M911 203.7l-.4 2.5M881.3 206.1l-3.7 4-2.6 .8 2.4 1.4 .2-2.2-4-1.1 1.4 1.9 .6 2.8 3.3 2.1 4.5-.5 2.8-2M908.6 206.8l-.6 1M912.8 205.5l1.4 3.6M915.8 207.4l-.1 2.1 2.8-1.4-2.7-.7M871.1 209.8l.4 1.8-2 .7 1.7 2.3 3.7-.2 4 1.4-4.4 .4 3.9 2.2-2.4 2.2-1 1.7-3.2 1.4-.9-2.7-2.9-1.1-2.4-3.7-1.2 3.4-1.7 2.6 3.3-.3 1.6 1.1-2.5 1.4-2.4-2.2-3.9 .4 2.5 2 .5 3.8 3.3 1.5 1.3 .1-1.5 .5-2.5-.4-3.5-.2-2.2-3.2 2.1-4.1-2.2 .1-2.3-1.1 .9-4.3-1.9-1.3M873.6 209l-2.1 2.6 3.5-.7-.1 3.5-.4 1.8-2 4.6-1-4.2-1.7 1-2-4-2.2 2.6-1.4-1.2-.4-2.2 1.1-2.3 2.9-1.4M880.9 209.3l1.4-1.2-.2 3.8 1.3 3.4 5.3 .2 4.2 .2-3.4-2.8-.8 2.6-5.1 3.2 1.1 1.4 3.9-1 1.1 3.1 1.8-3.3 3.4-1.9 3.4 1-1.1-3.9-4.3 1.6 2-3.9-2.2-1 3.5-.3 3.6-1.9 1.4 1.3 4.4-1.6 1.6 4.2M880.9 209.3l-3.5 3 4.7-.4 3.7-.8 3.7 1.8 3.2-2.1M880.9 209.3l1.2 2.6M899.8 208.6l.1 4.2 3.9-2-2.2 4.4-.4 1.4-.9-.8 1.3-.6M901.2 209.9l-1.3 2.9M905.6 208.3l-1.8 2.5M863.8 212.8l-1.7 2.5 .8 2 2.7-1.1 4.2 1.4 1.4-3 3.3 1.6 1.5 4.4-3.5 .2 2.5 1.5M894.9 211.8l2.3 .2M871.2 214.6l.3 2 3-.4M878.9 215.8l-.5 2.6 2 1.5 3.2-1.2 5 .4-1 2.4-2.9-1.4-3.5 2 2.4-3.4-.2-3.4-3 2.6 0 2 .8 2.2 2.5 .2 3.9-.8M878.9 215.8l1.5 2.1-2 .5-1.1 4-1.3-1.8M897.2 214.1l-2.3 2.9M900.3 215.8l-2 2.2M851 218.4l.4 1.4 .9 2.1M853.7 217.9l-2.3 1.9-3.9-1.1M860.6 218.1l2.3-.8-.7 2.1 2.2 .2 1.6 2.3 2-2-.4 3.1 4 3.4-3 1.6-2.2 2M869.8 217.6l1.1 3.4M880.4 217.9l3.2 .8 5.5-1.4-.5 1.8 2.9-.2 1.1 1.9M889.1 217.3l2.4 1.6M844.1 221.6l1.4 4.4-4.6-.4 1.2 3.5-1.9-.8-.6-2.4-.8-3 1 1 2.7-.8 1.6-1.5 3 2.8 .1 .9 2.8 1.1 3.8 2.3 1.2-1.9 1.6 1.1 2.3 2 2.9-1.5-5.1-1.7-.1 1.2-2.2 4.8 .8 3.9 2-3.2-2.8-.7 4.6-1.7 1.3 2 3.4 1.9-2.9 1.5-.5-3.4 2.1-2.9 1.3 4.8 1.2-4.4 1.7 3-2.9 1.4M844.1 221.6l-2.4-.1-1.9 2.4 1.1 1.7-.7 2.7 1.8 2-3.6-1.1-4 .3-1.4-3.9-2.9 1.4-2.9 1.4-2.9 1.4 3.7-.3 2.1-.2 4.3 .2-1.9 2.9 1.6 1.5-2.7-.2-1.5-1.1-1.2 2.6 3.4 .3-3 1.8 .5 1.7 3.2 .4-.7-3.9-2.5 3.5-2 0-3.2-2 4.7 .3-1.5 1.7 2 2.3 .2 3.3 2.1-1.1 3 1.4-.5-3.5 2.1 3.5 1.5-3.1 1.1 3.6 3.9-3.9 1.4 1.3-.9 2 2.9-1.4 2.9-1.4-2.7-1.6-3.2-1.7-.2-3.5 3.5-1.6-.4-1.7-3.1 3.3 2.2 1 1.2 4.2-.2 3-2-.6 2.2-2.4 1.9-1.2 3.7 1.4 2.9-1.4 2.8-1.4 2.9-1.4-3.6-3 .7 4.4-1.5-1-1.2-.2-3.4 0-3.3 2.6 .8 2.8 2.9-1.4 0-2.1-3.7 .7-1.1-3.7 1.7-1.9 1.8-3.4-2.6 1.2-3.1-3.3-3.2 2.2-1.3 3.7-3.7-.5-.7-1.1 1.1 0 3.3 1.6 2.5 1.2-1.2-4.9 .1-1.2 3.1-1 .3-2.1-3.4 3.1M848.1 221.4l-3.5-1.3-2.9 1.4 .8 1.6-1.6 2.5-1.3 .3-1.2 3.3 1.8-.9M848.1 221.4l3.3-1.6M854.3 221.6l.7 5.2-5-.4-2.9-2-1.6 1.6 1.7-.7-2 2.8 3.8 .5-1.8-3.3M858.1 221.5l.7 1.1 3.4-3.2 .5 2.8-1.4 2.4M858.1 221.5l-1.5 1.2 .1 4M872.5 220.8l-.7 2.9M880.4 219.9l-3.1 2.5M884.7 220.1l-1 2.2-3 2.2M839.8 223.9l-.2 2-3.7-1.6-2.9 1.3-2.9 3.7 2.4 3.1-1.1 1.3-2.7 1.5-2-3 3.2 .4 2.6-.2 3.8 0-1.9-2.9 1.5-5.2 2.9-1.4 2.9-1.4M842.5 223.1l3 2.9M850.9 222.2l-.9 4.2 .9 3.8 3.5 2.5-5.3 .9-2.4 0 1.6-2.2 .8 2.2 4 1.7-1.3 1.3 .4 1.9M856.6 222.7l-1.6 4.1M866 221.9l-.9 2.5-3.3 4 4.6-3.1 2.2 2.7M867.6 223l-1.2 2.3M874.7 226.6l-3.1 1.9 3.7 .8-.6-2.7M828 229.5l-.8-1.1M828 229.5l-1.3 2.7-3.5 2.7-1-1.7-.8-2.1-3 1.4-2.9 1.4-2.9 1.4-2.9 1.4-2.9 1.3-2.9 1.4-2.9 1.4-2.9 1.4-2.9 1.3-2.9 1.4 3.5 1.7 2.6-.8 3.3 .5 1.6-4.3 1.8 4.3 2.5-1 4.6-1.5 1.7 2.2 3.4 3.4-2 1.9-3.5-3.8-1.3 3.6-2 .4-.9-4.4-2.4 2.6-2.3 .1-3.5-1 2.3-2.5-.7-5.5 2.3 1.2 .6-2.6 2.3 .3 2.1-1 3.3 .5 1.5-1.2 .5 1.8 4.4-1.5-2.4-.5-2 2-2.8 1.8-3.7-.1 1.2-2.8-1.5-.7-.6 1.7-2.9 2.3 3.8-.5-2 4.8-.3 3 2.8-2.2 3.2 .2 1 .2 .4-3.7 1.6-1.2 .1 3.4 1.4 5.3-1.2 .9-2.3-4.7 2.1-1.5 3.6 .8-.2 2.6 .8-.7 4 2.1-4.8-1.4 0 4.7-.5 1.9 3.6 .1-3.1-2-2-2.8M828 229.5l2.1-2.5 0 2.3-.2 3.3-1.9-3.1M838.4 229.2l-1 3.2-.4 1.1-.2 2-4 3.9 3.7 .6 3.2-1.5 3.3 3 .4-2.8-2.1-1.1-1.6 .9-1.1-.5-2.1 2 .3-4.5-4.7 0-.7-1.8M838.4 229.2l-2.5-4.9M838.4 229.2l-2.1 3.2-2.2 1.5 2.9-.4M845.2 228.1l1.1 3.8 2-.5 .7-2.8M853.8 228.7l2.8-.8M858.9 229.9l-4.5 2.8M858.9 229.9l.1 1.1M861.8 228.4l.6 1.7M865.1 229.9l-.2 .6M871.6 228.5l-1.7 1.6M871.6 228.5l.8 2.2 2.9-1.4 2.8-1.4M826.7 232.2l-4.5 1 .2 4.3 .7 2 4.5-.5-.4 3.4-.4 2.6 3-.4-2.6-2.2-3.9 3.2-.9-4.5 4.8 1.3-4.1-2.9-.7 1.6-1.5-.5-2.7-2.7-.2 .4 2.9 2.3-.9 2.9 1.1 1.4-2.9-.4-2.2-1.1-2.4-3.6-2-.6-.8 2.4-2.5-2.9 1.4-2 3.4 1.3-.5-2.7 3 2.5 2.6 .1 4-4.7-3.8-.7-.2 5.4-2.7-4 .1 3.9-2.5 .2M826.7 232.2l-2.4-2.4-2.1 3.4M826.7 232.2l-2.3 4.8-1.2-2.1-.8 2.6-1.5 3.1-4.9 2.8 2-5.1M837.4 232.4l4.6-2.1 4.3 1.6M828.7 235.2l-4.3 1.8-2 .5-4.2 .4M828.7 235.2l.4 2.1M834.1 233.9l2.7 1.6 3.9-1.5 .6 3.6 1.9-2.4M834.1 233.9l-2 1.6M840.7 234l-2.1 4-1.8-2.5M846.7 233.6l-1.3 2.6-2 2.5M846.7 233.6l.7 1.9 4.4 1.1-2.7-3M857.2 233.4l3.1-.4M824.4 237l-1.3 2.5-2.2 1.1M838.6 238l2.7-.4 1.7 3.9 .5 3.3-4.4 .6-1.4 2.3-2.9 1.4 .9-2-4 1.6-2.6 3.2 2.9-1.4 2.8-1.4-3.1-.4 3.2-3.8 1.6 0 2.6 .5 1.5 .8 2.9-1.4M845.4 236.2l3.1 3M845.4 236.2l2-.7M855.2 236.6l-.1 2.6M806.2 239.7l.9 1.8 .5 3.8 0 1.8-2.5-.8-3.4 0 3.1 3-1.9 .5-.8 3.3 4.2-1 2.2-.6-3.3-1.8 1.1 2.4 3.6 1.4 4.9 1.8-.2 3.7 2.2-3 .7 1.6-2.9 1.4-2.8 1.4-2.9 1.4-2.9 1.4-3.5 0 2.3-2.5-.7-2.5-2.7-.6-3 2.8-2.9 2 1.5 1.1 2.5-1.5-1.1-1.6-4-1.8-1.8 2.3-.7 4.8-1 .7 3.5 2.5-2.5-3.2 2.3-1.3 1.3-2-2.9-1.5-4.6 1.2-.1 3.8 .2 .1-.1-3.9 2.6-2.8-.5-3.2-1.4 3.3-5.2-1.7-1.2 0-1.7-2.9-1.6 0 1.1 3 .5-3 2-3.1 1-2.7-2.9 1.4-.1 4.4 2.6-1.3 3.5-.4 3.9 1.2 2.8-3.3-4.3 0 1.1-2.3-.8-2.4-2.9 1.4 .6 1.6-.4 3.8-.8 3.2-2.4 1.4-.3-4.2-.9 4.2 1.3 3.6-2.3-.5 1.1 3 1.7-.7-.5-1.8 1 1.4-.5 .4 2 3.3 1.5 2.9-1.7 3.5-1.1-3 2.8-.5 1.1 2.4 2.9-1.4-.7-3.9-2.9-4.3-4.4-.8-.1-3.6M811.6 239.2l-1.9-2.5M813.6 239.8l.2 2.8-3-1 1.4 2.2-1.4 3.5-2.3 4.2 1.4 2 .6-2.4 3.6 1.1 3.2 1.9 3.1 .6 0 1.4 2.9-1.4 2.9-1.4-2.9-3.5 4.4 1.5-1.2-4.4 2.2 1-1 3.4-1.5 2-3.6-.8 .7-2.7-.9-2.3-.3 3.3 1.2-1 3.2-2.9 .3-1.9-3.5 .6-2.2-.7-3 3.8-.6-1.9 .7-2.3 1.8-1-4-.1 1.5 3.4 3.6-1.9 1.3 2.6-4.3 1.2M829.6 239l0 2.3 2.3 2.2 .9-4.1-3.2 1.9-2.4 1.1M832.8 239.4l1.6 2 2.1-1.4 1.5 1.8 5-.3 3.6-1.1M839.7 238.5l-1.7 3.3-3.6-.4-2.5 2.1-.2 5.2-1.9-4.1-1.1 3.3 .4 4-1.4-.6M810.8 241.6l-3.2 3.7 3.2 2-.3 3.8M813.8 242.6l2.2 .8-2.1 2.6M820 243.5l2.4-2.4-1.3 3.8M798.4 245.8l-.3-3.6 3.6 4.1 1.2 3.5-2.4 2.3-4.1 2.1-1.4-3.1 3.8-.1 .6-2.2-3.6-2.2-.6-3.1 3.2 2.3 1 3 1.1 3.3 1.6 1-1.1 2.8 .4 1.7-3.9-1.2-1.1-2.2 2.4-3.2-4-2.8-1.4 2.8 1.7 3-1.1 2 2.4-1.8-1.3-.2-.1-2.9-.2-2.9-2.5-3.3-2.1 3.8 4.6-.5 1-1.6M823.3 245.6l3.2 1.3-4.1 .6 .9-1.9M826.8 245l1.9 2.9 3 .8 .3 1.8M834.9 244.9l.8 2.2 .8-2.2 1.2 2.8-2-.6M790.2 248.7l-3.1 .6 2 1.7-2.4 2.1-4.1-1.4-1.9-1.3-2.9 1.4 1.2 3M790.2 248.7l3.2 2.3-.2 4.4-3.1 .7-3.4-3-3.1-4.1 2.9-1.3M794.8 248.2l4.6 .6M804.8 249.3l.4 .4M782.6 251.7l.6 1.8 2.7 2.8 2.8 3.1 1.9-.1 2.6-3.9-2.6-1.1-1.5-3.3M787.1 249.3l-3.5-.3M787.1 249.3l2.3-3 2.9-1.4M793.4 251l1.6 .1M798.8 251l1.7 1.1-3 4.3-3.1 2.2-1.2-3.2 1.9-1.4M802.9 249.8l3.4 2.3-.6 5.5-.9 3.1 1.2 2.5-2.9 1.4-3.4-.1 .5 1.5 2.9-1.4-.6-1.4-3-1.2 .2 2.5-2.4 2.9-.3-3.9 2.7 1 2.8-1.3-1.1-5.6-1.9 4.4M822.1 250.8l-1.7 3.9 2.9 0-.7-2.2-2.2 2.2M822.1 250.8l-4.8 3.3-2.5 1.2-2.2 2.1-3.3-1.8 2.5 4.8-3.8 .3-3.2 0 1.9-3.1-1 0-3.6-4.5 2 5.1 1.6-.6M822.1 250.8l.5 1.7M780.6 254.8l-2.8-3M790.6 254.3l-.5 1.8-4.2 .2M800.5 252.1l.5 3.8-3.5 .5 .9 4-1.4 3.1-2.8 .9 .2 4.5 2.9-1.5-3.1-3-1.6-3.5-2-1.6 3.8-.7-.4-2.6-.8-.6M806.3 252.1l.4 5.5 2.6-2-3-3.5M809.9 253.5l4.2-1.3 .7 3.1 2 .7M809.9 253.5l2.7 3.9-.8 3M809.9 253.5l-.6 2.1-1.3 5.1-2 2.5M782.3 257.7l-2.2 .1 1.2 3 1-3.1M794 256l3.5 .4M801 255.9l3.1 2.3M812.6 257.4l2 1.6M788.7 259.4l-5.1 1.9-1.2 2.5 1.2 3 .5-3.7M788.7 259.4l-.7 2.7-3.4 .6 3.3 3.2-1.8 .5-1.5-3.7M794.4 258.6l1.1 3.8M801.4 257.6l3.4 3.1M806.7 257.6l1.3 3.1 .9 1.1M788 262.1l3.9 3.6M786.1 266.4l-2.5 .4 1.2 3 1.3-3.4 2-.4-.5 3.3 3.3-2.9-2.8-.4M787.6 269.3l4 1 2.8-1.4M821.4 231.1l2.9-1.3M873.6 206.4l2.9-1.4M949.1 170.5l2.9-1.3M957.8 166.4l2.9-1.4M981 155.4l2.9-1.4M1007.2 143l2.9-1.4M1033.3 130.6l2.9-1.4M1058.3 134l-.4 2.7M984.9 175.6l-2.9 1.4M889.7 222.2l-2.9 1.4-2.9 1.4-2.9 1.5M840.6 246.2l-2.9 1.5M829.1 251.9l-2.9 1.4M820.4 256.1l-2.9 1.5M800.2 266l-2.9 1.4M788.7 271.7l-2.8 1.1" fill="none" stroke="#000" stroke-width="0.5" stroke-opacity="0.6"/><polygon points="777.8,251.8 1043,126 1052,127.5 1059,134.8 1055.5,141 786,273" fill="none" stroke="#111" stroke-width="0.8"/><path d="M1037.1 149.9h0.7v0.7h-0.7zM1036.2 147.5h0.7v0.7h-0.7zM925.3 198.6h0.7v0.7h-0.7zM1006.6 164.8h0.7v0.7h-0.7zM876.0 219.2h0.7v0.7h-0.7zM964.2 167.6h0.7v0.7h-0.7zM967.8 169.4h0.7v0.7h-0.7zM801.2 260.9h0.7v0.7h-0.7zM886.6 206.5h0.7v0.7h-0.7zM912.5 192.7h0.7v0.7h-0.7zM870.8 213.1h0.7v0.7h-0.7zM955.8 174.1h0.7v0.7h-0.7zM945.6 181.2h0.7v0.7h-0.7zM985.4 165.1h0.7v0.7h-0.7zM909.3 202.4h0.7v0.7h-0.7zM795.4 250.1h0.7v0.7h-0.7zM849.1 229.4h0.7v0.7h-0.7zM1024.1 142.0h0.7v0.7h-0.7zM863.8 213.3h0.7v0.7h-0.7zM858.0 225.7h0.7v0.7h-0.7zM927.8 181.4h0.7v0.7h-0.7zM979.7 162.7h0.7v0.7h-0.7zM1050.5 140.7h0.7v0.7h-0.7zM825.8 251.4h0.7v0.7h-0.7zM820.3 251.3h0.7v0.7h-0.7zM918.0 207.7h0.7v0.7h-0.7zM998.1 157.7h0.7v0.7h-0.7zM931.8 183.4h0.7v0.7h-0.7zM1049.4 127.3h0.7v0.7h-0.7zM904.9 208.6h0.7v0.7h-0.7zM794.0 266.9h0.7v0.7h-0.7zM1012.8 154.8h0.7v0.7h-0.7zM1027.4 148.2h0.7v0.7h-0.7zM900.8 208.4h0.7v0.7h-0.7zM787.1 261.0h0.7v0.7h-0.7zM941.3 177.5h0.7v0.7h-0.7zM924.0 194.4h0.7v0.7h-0.7zM834.7 248.6h0.7v0.7h-0.7zM985.6 155.8h0.7v0.7h-0.7zM986.6 153.8h0.7v0.7h-0.7zM1052.6 129.8h0.7v0.7h-0.7zM846.9 242.8h0.7v0.7h-0.7zM843.9 229.7h0.7v0.7h-0.7zM853.1 216.5h0.7v0.7h-0.7zM856.7 221.6h0.7v0.7h-0.7zM1045.8 129.1h0.7v0.7h-0.7zM905.3 203.0h0.7v0.7h-0.7zM1013.7 141.1h0.7v0.7h-0.7zM891.6 211.4h0.7v0.7h-0.7zM931.4 200.1h0.7v0.7h-0.7zM956.8 167.6h0.7v0.7h-0.7zM870.6 223.9h0.7v0.7h-0.7zM802.4 250.9h0.7v0.7h-0.7zM842.3 236.3h0.7v0.7h-0.7zM1013.0 147.1h0.7v0.7h-0.7zM816.8 237.5h0.7v0.7h-0.7zM819.0 237.7h0.7v0.7h-0.7zM958.7 166.4h0.7v0.7h-0.7zM901.8 196.8h0.7v0.7h-0.7zM890.9 218.1h0.7v0.7h-0.7zM965.4 178.9h0.7v0.7h-0.7zM860.7 226.6h0.7v0.7h-0.7zM802.7 242.2h0.7v0.7h-0.7zM1005.1 162.2h0.7v0.7h-0.7zM1011.3 156.6h0.7v0.7h-0.7zM836.4 225.3h0.7v0.7h-0.7zM891.8 207.3h0.7v0.7h-0.7zM841.7 233.0h0.7v0.7h-0.7zM925.1 192.9h0.7v0.7h-0.7zM944.4 191.6h0.7v0.7h-0.7zM854.8 221.1h0.7v0.7h-0.7zM855.0 221.7h0.7v0.7h-0.7zM859.7 225.4h0.7v0.7h-0.7zM856.3 237.0h0.7v0.7h-0.7zM945.1 180.4h0.7v0.7h-0.7zM1015.6 158.2h0.7v0.7h-0.7zM803.0 248.0h0.7v0.7h-0.7zM871.4 208.2h0.7v0.7h-0.7zM963.7 176.3h0.7v0.7h-0.7zM951.9 189.5h0.7v0.7h-0.7zM839.9 230.3h0.7v0.7h-0.7zM882.3 214.8h0.7v0.7h-0.7zM902.5 207.2h0.7v0.7h-0.7zM926.1 188.4h0.7v0.7h-0.7zM1021.3 154.0h0.7v0.7h-0.7zM937.9 192.7h0.7v0.7h-0.7zM895.5 208.7h0.7v0.7h-0.7zM1018.6 146.7h0.7v0.7h-0.7zM848.1 241.4h0.7v0.7h-0.7zM899.7 197.6h0.7v0.7h-0.7zM914.9 197.1h0.7v0.7h-0.7zM787.0 267.2h0.7v0.7h-0.7zM1022.7 136.9h0.7v0.7h-0.7zM1036.2 144.0h0.7v0.7h-0.7zM1030.7 144.4h0.7v0.7h-0.7zM878.7 204.2h0.7v0.7h-0.7zM820.6 238.0h0.7v0.7h-0.7zM801.5 265.3h0.7v0.7h-0.7zM829.5 247.5h0.7v0.7h-0.7zM891.1 209.2h0.7v0.7h-0.7zM794.4 263.4h0.7v0.7h-0.7zM810.2 260.0h0.7v0.7h-0.7zM910.7 211.9h0.7v0.7h-0.7zM832.0 231.1h0.7v0.7h-0.7zM993.7 166.0h0.7v0.7h-0.7zM983.5 172.7h0.7v0.7h-0.7zM899.4 201.0h0.7v0.7h-0.7zM991.1 170.7h0.7v0.7h-0.7zM955.2 182.5h0.7v0.7h-0.7zM830.1 233.5h0.7v0.7h-0.7z" fill="#888" opacity="0.6"/><polygon points="786,273 1055.5,141 1053.7,173.8 982.8,206.5 972,193.3 892.3,241.2 892.3,264.3 796.6,313.9" fill="#b0b0b0" stroke="none" stroke-width="0"/><path d="M1037 156.7l.8 7 4.7-3.3 11.7 3.8-.5 9.5-8.5 4-8.7 4-8.6 4-4.4-15.4-9.1 7.8 1.4-10.8 7.7 3 11.3 5.7 10.6-6.3-7.6-6 5.4 .5 2.2 5.5-.2 8-10.4-1.7-9.6-6.4 12.6-5.9-3 12.3-6.9 9.7-13.4-3.8-1.4 2.9-2.5 8.9 8.7-4-4.8-7.8-7.5 4.3-2.9-12.7 3.9-9.3 7.8 3.1 .8-7.2 8.5-4.2 8.6-4.2 3.3 5-11.9-.8 .1 13.7-1.7 .7-6.9-10.2 8.6 9.5M1037 156.7l11.4-2.6 2.3-10.8-8.5 4.2-8.5 4.2M1037 156.7l5.2-9.2 6.2 6.6 5.8 10.1 1.1-19-1.6 28.5-8.3-4 8.8-5.5 .5-9.5 .6-9.5-4.6-1.9M1037 156.7l5.5 3.7 5.9-6.3 6.3 .6M1042.5 160.4l.7 3.8 11 0M1048.4 154.1l6.9-8.9M1015.8 167.3l-11.7 6.2-4.6-5.1-8.5 4.2-8.6 4.2-8.5 4.2-8.6 4.2-8.5 4.1 3.4 4.5-9.9 6.3 5.5 2.9-5.4-.2-2.7 5.1-8.2 4.9-8.1 4.9-10.7-5.4 1.9-6.2 8.8 11.6-.2-15.8-8.6 4.2-8.5 4.2-4 7.1 3.1 6.7-12.5-1 4.9-8.7 4.5 3-9.4 5.7-3.7-4.5 .8 11-9.7 3.2 4.2 10.4 6.5-5.9 8.1-4.9 6.3-8.3 1.9 3.4 8.1-4.9 8.2-4.9M1037.8 163.7l-12.7-7.8M1004.1 173.5l-13.1-.9-4.7 11.9 7 1.7 8.7 11.5-8.7 3.9-8.6 4-2-9.7-4.6 4.9-6-7.4 1.8-12.4 4.2 9.2 4.6 5.7 10.3-.8-4.7-8.1 5-.8 3-3.5 10.7 3.5-5 11.5 8.6-4-3.6-7.5-13.7 0-.3 8.9 .3 6.5-10.6-5.7 5.6-8.9-10.2 3.2-6 3.2-11.9 .4 5.1-8.6 6.8 8.2-8.1 4.7-3.8-4.3-4.4 9.2-8.1 4.9-6.4-6 9-1.8 .1 2.7-9.1-.9-1.8 10.9-8.3-10.9 10.1 0 7-8.4-8.6 4.2-8.5 4.2M1004.1 173.5l-7.8 9.2-10 1.8-3.9-7.7M1004.1 173.5l10.3 4.6-7.4 8.1 6.1-1.4 6.2 4.9 8.6-4-13.5-7.6 .1 3.8M1034.8 176l1.7 5.7M986.3 184.5l-12.4-3.5M986.3 184.5l2 2.5M986.3 184.5l-8.2 5.7 0 10.6 6.6 4.8M996.3 182.7l-5.3-10.1M960.2 193.8l-11.9-.3 8.5-4.2M941.3 201.9l-1.6-4.2M950.3 200.1l-2-6.6M993 195.1l9 2.6M910.1 217.4l10.6-5.1-6.6-2-8.5 4.1-8.6 4.2-8.5 4.2-8.6 4.2-8.5 4.2-8.5 4.2-8.6 4.1 12 4.3 3.9 11.6 2 6.5 9.1-7.2-2.3-5.3-8.8 6-5.2 3.7-10.5 2.9-4.7 6.7 .2-.1 9.4 6.5-13.1 3.8-8.3 3.3-11.1-3.9-3.3-2 3.3-14.7-9.9 1.9-4.3 10.3-4.6-3-13.4 5.3-8.7-3.1 2.4 9.2 8.2-1.5 12.1 6.5 6.8-4 8.1-6.9-11 2.8-16 1.6 2.7 6.3-10.9-4.8 2.4 9.2 2.4 9.2 2.3 9.2 5.8 1.7 .8-4.9 7.6 .5-5.5-7.9 7.3-1.2 5.4-5.4 9.7 5.7 42.2-21.8-5.3-12.4 9.1 7.1-3.8 5.3-33.7 17.5-1.9-8.6-8-.5-9.7-1.7-2.9-4.1-4.5-8.3 8.9-7.3 3.2-7.2-8.6 4.2-8.5 4.1-8.6 4.2 13.6 2-5-6.2M920.7 212.3l-7.5 11.8 10-1.5-2.5-10.3M900.7 223.1l-2.9 6.5 1 7.7-10.7-4.5 .4-10 9.3 6.8 9.1 2.8 8.2-4.9M900.7 223.1l6.2 9.3M888.1 232.8l-8.2-5.8-7.5 11.9-9.5-3.5 3.4 8.4 12.6 .2 7.9 6.7-5.5 4 .7 8.2-4.7 9.2 8.4-4.4-3.7-4.8 10.3-.7 0-9.5 0-9.5-5.5 7.5 5.5 2-11 2-11.1 .7-6.8-8.2-8.7 .8 .4 4.7 9.9 6.4-1.6-11.9-8.3 5.5-10 2.2-9 3.1 3.4 2.7-12.6 .9 1.8-9.5-8.5 4.2 2.6 2.8 4.1 2.5 9.2-3.6 1.1-10.1 7.9 7 .7-11.2 5.3 6 3.6-1.7-.4-8.5 9.1 7.7 2.9-3.4 12.7 5.6-.1-5.4 13.4-.8M888.1 232.8l-9.2 11.2-6.5-5.1-6.1 4.9M888.1 232.8l-15.7 6.1-1-7.7M851.1 249.7l4 3-.6 9.3 4.9 13.1-7.4 10.1 8.4-4.4 8.4-4.3 16.9-8.8 6.6-5.5-11-7.5M851.1 249.7l-6 5.2 9.4 7.1 9 2.1 8.7-2.2 9.8 1M854.7 248l-8.9-4.3-8.6 4.2-8.5 4.2-5.9 7-5.8 4.4-5.4-3-3.5 10.3-11.5 9.9-1.9-4.6-6.3 6.1M879 249.4l7.8 1.3M836.1 258l-7.4-5.9M845.1 254.9l4.7 13.8-10.3-8 5.9 9.3 .9 8.9 3.7-10.3 4.5-6.6M845.1 254.9l-5.6 5.8-1.7 9.9 .2 11.6-4.8 3.2 10.3 4.2-8.4 4.4-8.5 4.3-9.1-2-6 1.7-1.8 9.1-8.4 4.4 67.5-35-25.3 13.1 8.5-4.4 16.8-8.7-59.1 30.6 8.5-4.4-6.7-4.7-2.8-10.8-9.4-.2 4.9 12.2-11 1.4 8.9 6-6.6 3.2M865 259.1l7.2 2.8 .4 9.3 4.7 .9-8.5 4.4-50.6 26.2 8.4-4.4-1.4-13.4-1.6-8.6-10.9-2.5-.1 5.3-3.9 8.1 8.2 5.4 8.3-7.7 9.9 9.1M865 259.1l-1.5 5-4.1 11 1 5.7M817 263.5l6.6 12.8 14.2-5.7-10.9 7.7 6.3 7.1M826.9 261.6l10.9 9 7.6-.6 4.4-1.3-3.5 10.2-2.8 10.7-5.5-7.4M872.2 261.9l5.1 10.2M794.7 276.1l-.2-7.3-8.5 4.2M837.8 270.6l8.5 8.3 5.7 6.3M859.4 275.1l9.4 1.4M815.5 283.2l1.4 9.4 .6 3.7 .7 6.4M826.9 278.3l-1.7 6.6M799.3 287l-8.5 4.4M799.3 287l-6.1 13.6M808.7 287.2l-4.5 12-2.1 7.4M845.8 243.7l8.5-4.2M999.5 168.4l8.5-4.2 8.6-4.1M964 198.1l-8.2 4.9M885.7 267.7l-84.4 43.8" fill="none" stroke="#111" stroke-width="0.85" stroke-opacity="0.9"/><polygon points="786,273 1055.5,141 1053.7,173.8 982.8,206.5 972,193.3 892.3,241.2 892.3,264.3 796.6,313.9" fill="none" stroke="#111" stroke-width="0.9"/><polygon points="777.8,251.8 786,273 796.6,313.9 784,300" fill="#aaa" stroke="none" stroke-width="0"/><path d="M782.1 269l-1.7 3 2.9-.6 1.8-.6-5.5-14.3-1.8-4.7 .6 5 .7 5.1 .6 5 1.8-5.6-1.9-4.8-.5 5.4 2.4-.6 1.8 4.7-1.2 3-2.4-2.1 .7 5.1 .6 5 1.6-.9 4.1-.5-3.2 4.3-1.8 2.2 .6 5 4.1 3.9-1.6-5.3-2.5 1.4 .7 5.1 .6 5 1.9 4.5 3.5 3.8 4.1-5.2 1.2 4.9 1.3 4.9-3.2-.9-3.4-3.7 5.3-.3-1.9 4 3.4 3.8-.2-2.9M782.1 269l1.2 2.4-.7 4.7 .9 3.8 4.5 .7 1.2 4.9 1.3 4.9 1.3 4.9-2.8-2.3 1.5-2.6-3-4.8 .5-5-1.3-5-1.6-4.8-7.3-19M782.1 269l3 1.8-1.8-4.8-3.6 .9M783.3 271.4l3.4 4.2M782.6 276.1l-2.2-4.1M783.5 279.9l1.3 5.8-3.1-3.6-.7-5.1 2.5 2.9M784.8 285.7l2.7-.1-1.1 5.4-3.4 1.2M784.8 285.7l3.2-5.1M787.5 285.6l1.7-.1M786.4 291l2.6 2-5.4 4.2 8.2-1.9 1.3 5-7.6 1.4 10.3 11.3-6.8-7.5M786.4 291l4.1-.6M786.4 291l-2.8 6.2M779.6 256.5l3.7 9.5M779.6 256.5l-1.2 .3M791.8 295.3l-6.3 6.4" fill="none" stroke="#111" stroke-width="0.85" stroke-opacity="0.9"/><polygon points="777.8,251.8 786,273 796.6,313.9 784,300" fill="none" stroke="#111" stroke-width="0.9"/><polygon points="941.9,94 945.3,93.5 948.2,93.4 950.9,93.6 953.4,94 955.9,94.5 958.4,95.2 960.9,95.9 963.4,96.8 965.7,97.8 968.1,99.1 970.4,100.6 972.8,102.4 975.3,104.6 977.9,107.1 980.5,109.8 983,112.8 985.3,115.8 987.2,118.9 988.8,122.1 990.2,125.5 991.3,129.1 992.3,132.6 992.9,136.1 993.4,139.5 993.6,142.7 993.6,145.8 993.4,148.9 992.9,151.9 992.2,154.9 991.3,158 990.2,161.2 988.8,164.4 987.2,167.7 985.3,170.9 983.3,173.9 981,176.7 978.5,179.3 975.7,181.9 972.7,184.3 969.4,186.5 966,188.4 962.5,190 958.7,191.3 954.7,192.3 950.5,193 946.2,193.5 941.9,193.7 937.7,193.6 933.4,193.2 928.9,192.4 924.4,191.3 920.2,190 916.3,188.6 913,187 910.4,185.3 908.2,183.5 906.4,181.5 905,179.4 903.8,177.1 902.7,174.6 901.9,171.9 901.3,169 901,165.9 900.8,162.7 900.7,159.4 900.6,156 900.4,152.4 900.3,148.5 900.2,144.6 900.2,140.6 900.3,136.9 900.6,133.4 901,130.3 901.4,127.3 902,124.6 902.7,121.9 903.6,119.4 904.7,116.9 905.9,114.4 907.1,112.1 908.4,109.8 910.1,107.6 912.3,105.5 915,103.5 918.6,101.6 923.1,99.6 928.1,97.8 933.1,96.2 937.8,94.9" fill="#c8c8c8" fill-opacity="0.5"/><path d="M941.9 94l-2.2 .5 1.1 .7 2.1 .7-1.9 1.8-3.6 .9-1.6 2.3-1.2 2.7 2.6 2.4 2.2-3.7 5.8-1.2 2.4-2.5-1.8-3.1 2.5-.1 2.3 .1 2.2-.7-2.2-.4-2.4-.1 .1 1.1 .7 1.4 2.9 4.5 .2-4.1-3.1-.4-1.4 1.8-3.1 .3-4.3 .8-.8 2.6 4.6 2 1.2-3.2-.7-2.2 0-1.8 3.1 1.5 3.2 5.6-6.8 .1-6.8 1.7-5.9 1.8-6 2.3-1.3 9.4-2.7 13 2.2 1.4 4.9 5.5-9.3-3.5 4.4-2 6.1-.8 2.9 7.2 5.6-4.8 6.6 2.3-3 5.3 2.7 9.2 .8 10.4 2.1 3.9 4.7-4.7 2.7-7.8-3-2 7.4-2.8-7.4-1.9-2.4-3.5 5.1-10.4 3.1 9.7 4.2-.3-2.6 6.4 5.2 8.2 3.2-2.9 4.8 7 3.9-5.2-8.7-1.8 .9-5.3 6.2 .2 3.7-7.4 4.8 2.2-.5-6.2 3.5 4.7-.5-5 3.6-3-2.2-1.5-2.8-1.7-1.9-5.6 3.7 3.6-1.4-3.9 1.7-.7-1.8-3.8 .1 4.5-2.3 .3-1.9-3.8 2.4-4 .1 3.6 1.6-.6 2.7 2.4 1.2-.2-.1-2.3-1-1.9-.8 .3-1.1-1.7-.4-2.4 1.2 1.9 .3 2.2-1.9-1 1.3 2.3 .6-1.3 1 2 .8-.4 .9 2-.8 .3-.9-1.9-.3 2.1-.9 1.4 3.1 1.1 .6 1.9-.6 1.8 1.2 .1-.7 1.5 1.4 1.1 .3 1.6-1 .3 .7-1.9-2.7-.3-1.6 1.1-1.4 4.5 2.4 .4 1.2-3.4-.6-2.6-2.6-2.6 1.4-1.5 2.6-.1-1.5-1.2-1.1 1.3-2.8-2.4-1.7-3.9-2.5 .4-3.2-4.6 3 .1 2.6 .5-1.6-2.2 1.7-1.9-1.5-.2 .4-1.2 1.9 .9-1.4-1.7-1.4-1.7-.7 .6-.8-2.2-1.1 1.8 .1-1.5-.6-1.9-.5 .7-1.7-.1 .3-1.2 1.9 .6 1.6 1.6-1 .3-1.5 2-2.3 3.6-.3-3.7-4.3-.9 2-1.3-.7-3 2.7 .5-1.7-1.5 .4-1.1 1.9 .5 1.6 1.5 1.6 1.5M941.9 94l-1.1 1.2-1.4 .3-1.8-.5-.8 1.1-1.3-.5-.9 1.2-1.3-.6-2.1 .6 1.8 .4-1 2.9-.6-1.2-.6-1-2 .7-1.8 .6 .3 2.6 3.7 .5-1.9-2.7 1.7-1.7 2.2-.7 .3-1 2.2-.6 2.1-.6 2.1-.5-.3 1 .8 .9-3.1 .8-2.4 .7-.1-1.1 2.5 .4 2.3-1.7-2.6 .6-2.2 .7-1.6 .4-1.6 1.7-2.3 .7 2.9 .5 3.1-.9 2.3-.6 2 3.7-4.8 1.3-3.3 4.2-5-1.3-1 3.6-6.6 3.8-1.5-2.7 4.7-2.9 3.4 1.8 5.6 2.3 4.8 3.1-4.5 6.1-3.8 10.4 7.4-.4 5.7-4.2 9.7-1.9 4.2 8 3.8-5.6 2 6.1-2.7 9.2 6.5-4.7 7 4.7 1.8-8.3 6.6-8 1.7 4.7 1.5 6.5-4.3 4-5.5-7.2-4-3.2-6.7-1.1 4-6-9.1 1 7.9-7.6-4.8-7-4.2-5.6 4.7-1.6 4-.7 .4-1.8-3.2-1.4 3.4 0 2.3 1.2-2.5 .2 3.1 1.8 1.1-2.2 .2-1-1.9-1.1-.8 .6-1.2-1.6-.3 2.1-.5-1.5-2.9 1.5 .6-2.5-1-1.3-2.1-.6-.5 .8-.3 2.5 3-.5-2-.7-.7-1.3-2.2 .5 1.9 2 1-1.2 1.1-.8 .8-.7 2.1 .8 2 .9-.8 .6-1.2-1.5-1.1 .5 2.3 1M941.9 94l1 1.9 .8-1.2 .4-1 1.1 .7-1.5 .3 2.1 .8 .5-2 1.9 .8 .3-.9 2.1 1 .1-.9 2.2 .4 1.3 1.2 2.1 .5 .9-.7-2.2-.6-.8 .8-.4 1-1-1.3-.7 2.4 3.1 .7 1.1-2.3-1.3-1.3-2.1-.4-2.3 .5-2.3 1M941.9 94l2.2-.3 2.2-.2-1.1 .9 .6 1.1 3.2 1.3 1.6-1.3 1.5 1.7 1.7-1.1 1.4 1.8-2.1 1.3-1.2 2.1 4.7-1.2 .8 2.6-1.5 2.7 6.9 2.8 3.4 2.4-6.1 .4-4.1 5.3-7.9 5.2 .1-6.4-2.3-5.3-1.1 6.7-6.6-5.6 7.7-1.1 4.1 1.6 6 4.9-5.8 9.2-2.1-4-7.6 5.9 7.4 4.2 2.3-6.1 8 2.4 3.9 2.7 1.9 7.9-2.3 4.4 9.3 .3 3.6 6.3 1.6 6.9 1.8 6 3.2-7.4 1.4-5.2 2.5 2.6 1.5 3.2-3.1 1.9 3.7 1.7 1-2.9 1-3.4-2.6 2.7 1.6 .7 2.7-.1-1.6 1.4 1.1 .4 .3 1.8 .7-2.1-.5-1.5-.7-1.6 1.2-.3-.4-3-1.1-1.9 2.5 .2-.3 1.8 .9-.1-.4 2.1-.6 2.2-.6-1.3-2.2-1.4 1.8-1.6 1.1 .1 .5 2-1.6-2.1-3.4 .3-1.6-4.6 2.3-.3 3.1 1.7 1 1.2 1-.5-.4 2.2-.6-1.7-1.4 1.7M941.9 94l1.8 .7 .8 2.4-1.6-1.2-2.7 .5 .6-1.2M946.3 93.5l2.2-.1 2.2 .1M952.9 93.9l-.1 .9 1.4 .3M957.2 94.9l-.6 1.9 0 3.3-1.4-2.2 1.4-1.1-.3-1.2-2.5 .5M957.2 94.9l1.6 1.4 1.8 .5 .9 1.5 .3 1.6 2.8 3.2 1.8 3.8 2.1-1.3 2.8 0 1-1 2.1 .4 .2-1-1.7-1.5-2.3-.6 .6-.7-1.8-1.3-1.9 1.2 .6 2-1.7 3.8 3.6 3 1.9 6.1 3.1 3.6 4.4 7.3-10.6 4.8-2.7-7.1 8.9-5 5.4 2.6-1 4.7-13.3-2.3-1.2-6.6 7-2-5.7-5.4 .2-3.7-3.6 1.3 1.8-5.1 3.5 0 .4 2.5 1.4-2.9-.7-1.8-1.7 .2-.8-1.7-1.5 .5-.2 1.4M957.2 94.9l2.1 .6 1.3 1.3 1.8 .6-.9 .9M965.5 97.8l2 1 0 2.3M971.2 101.2l1.7 1.3-.2 1-2.8-.8 1.4 2.9-1.3 4.3-1.5-4.3M971.2 101.2l-2-.3 1.4 1-.7 .8 2.4 1.9M976.2 105.5l-.3 .9 1.4 1.3 1.1 1.2M976.2 105.5l-1.8-.5-.4 1.1 1.9 .3-1.5-1.4-1.7-1.5-2.1-1.6M979.4 108.6l1.5 1.6M982.3 111.9l-2.1-1.1-.5 1.2 2.1 .7 1.1 1.4 .4 2.5-.5 1.6 1.8 .3 .8-.7 .8-.5 1.1 1.9 .2 2.3-1.6-.7-1.4 .4 .1-2.7-1.3-1.9 2.1 1.2-1.2-2 .8-.4-1.3-1.8 .5 2.2-1.3-1.7 .8-.5M982.3 111.9l-.5 .8-1.6-1.9-1.9-.4-1.4 .5 .6 3.4-.3 3.3-2.6-3.1 2.9-.2 3.7 1.7-2.1-2.6 2.3 .5-.2 2.1-1 1.7-2.7-3.4 1.6-.9 .6-1.4-2.8-1.1-2.6-.1 1.3-3.2 1.3 3.3 2.2 2.5M989.2 123.1l.8 2.1 .8 2.1 .6 2.1-.8 .5 1.4 1.6-.7 1 1.2 1.2-.9 .4 .4 1.8 .9 0 .3 2.2-1.2-2.2 .3 2.5-1.2-1.3 .9-1.2-1.4-1.5 .5 2.7-1.9-2.3 1.4-.4-2-2.2 1.3-.8 2.1 .1-.6-2.1-1.4-1.4 .8-.7-1.4-1.2-1-2.7 1.6 1.8-.6 .9-.9 .7-2.2-1.8 1.1 3.1 2 1.7-.8 2.4M992 131.5l.5 2.2 .4 2.2-1.3-1.8M993.2 138.1l.3 2.1-1.2-1.8-2.4 .7 .3 3.8-1.8 0-.1 3.8-2.2-3.9 2.3 .1 1.5-3.8 1.5 .8-1.2 3 0 2.2-1.8-2.2-.4-4.7 1.9 .9 1.2-2-3.1 1.1-1.9 4.6-.1 4.2 3.9 2.4-2.3 2.2-1 4 .6 3.6-2.1 .6-3.7 2.6 0 4.8 2.2-4 .5 3 2.5-1.9 1.5-.5-.7-1.3-.8 1.8 .3 1.8 1.2-.2 .9-2-.9-.1 .7-1.7 .7-1.9 1.2-.4-2-.5-1.5-.1-1.2 3.2-2.4 .8-2.2-.8-3.4 0-2.2 3.8-4.5 .1-7-8.8-1.3 10.8-2.6-8.8-8.4 2.4 2.7 5.3 5.8 7.8 .9 3.9 4-2.4 4.4 3.4-1.8 3.4-2.1-.8 1-3.3 2.9 .7 3-5.5 3.5-.4 0 2.7 2-.1 0-2 2.3-.6 0 1.7 1.6-.5 0-1.4 .3-2.2 1.3 0 0-2 2-1.4-.7-.9-1.3 2.3 2.2 .2-1.2 1.8-1.2 1.9-1.1-1.9 1.3-2-1.6-.2-3 1.2 1.7 .8-.3 2.6-1.4-3.4-2.9 3.4-.5-2.8-3.9-.2-3.9-1.6-2.6 7.1 6.5-5.5-.6-4.7 1-4.7 5.7 .8 .9 4.6 .3 3.6 2.2-3.4 2.7-1 2.8-.1-1.8 1.2 2 .5 1-1.9-1.5-1.6-.6-1.9-.9-2.6-1.5 3.4 3 1.1M993.2 138.1l-.9 .3-.9 1.5 1.2 .9-2.4 2.1 1.4 .2 2-.6-1-1.7-1 2.3 1.1 2.4 .8 1.4-.9 0 .1-1.4-1.1 .5 0-2.9 1.1 .4 .9 1.2-.9 .8 0-2 .9-1-.1-2.3-.9 .6M993.5 140.2l-2.1-.3M993.6 142.5l0 2.2-.1 2.2-.1 2.2-.8-2.2-1.2 1.5 2 .7M992.6 153.4l-1.2 .9-.5 1.9 1.1-.6-.6 2.1-1 .3-1.7 1.3 .8 .9 .4 1.6-.9 2.1-.2-1.8 1.1-.3 .8-2M988.1 165.9l0-2.1M987.1 167.8l-1.1 2-.2-1.6 1.3-.4-.2-1.7M986 169.8l-1.4 .6 .2 1.2-1 0 .8-1.2-.8-.8 .3-3.4 1 1.1M983.6 173.5l-1.4 .3-1.3-2.4 1.6 .2-.3-2.2-.8-2.2 2.4 2.4M983.6 173.5l-1.4 1.7-1.4 1.7-1.4 .2-1.1-.5-1.6 1.6-2.6 2.4-1.1-.9 .4-2.8-3.6 3 .6 1.8-1 2.4 1.5 .3 .8-1.9 .9 1.8 1.8-1.4-.3-2.3 .9 .7 1.4-1.3 .3-1.8 1 .6 .6-2.2 2.3-.9 .2 1.2-1.5 1.6-1.6 1.5-1.6 1.5-1.1-.2-.6 1.6 1.7-1.4 .3-1.5-2.3 .6-2.4 1.9 1.4 .3 1-2.2M983.6 173.5l.2-1.9M982.2 175.2l-1.6-1.2 1.6-.2M979.3 178.5l-1-1.9M979.3 178.5l.1-1.4 1.2-1.4-2.3-1.1-2-.6-2.9 2.9 2.9-.2 .4 1.5-3.7 1.5-1.3 2.8-1.3-.8 .5 2.7 1.7-.1 .5-1.5 1.3 .1M979.3 178.5l-1.6 .3-1.3 1.2 1.3 0 0-1.2M972.6 184.3l-1.8 1.3-1.7 0-.1 1.2-1.4-.3 .2-1.4-2.3 1.3-2.1 2.2-.4 1.2-1.9-.3 .8-1.4-.5-1.3-.3-1.9-2.7-1.4-5.1 1.4 4.4 1.2 3.7 .7 4.1-.4-.4-1.4 2.7 .1 .2-1.8 1.4 .8-.3 1.5-1.3-.5-1.9-2.6-.8 2.5-4-.1 1.8-3.3 2.2 3.4-3.7 1.8-2.1 2.2-.1 1.2-2.3 .6-.2 1-2-.4-2.1 .3 2.4-1.5 1.6-.4 1.3-1.8 1.4 1 1.8 .5-1.9 .7 1.8 .3 2-.7-1.1-1.7 1.5 .5 2.5-1.2-.4-1 2.1 .1 1.5-.9M970.8 185.6l-1.8 1.2-2 1-1.9 1-2.1 1M970.8 185.6l-1.4-1.5-1.6 1M970.8 185.6l.1-1.2M967 187.8l-1.1-.4 1.7-.9-.6 1.3M965.1 188.8l.8-1.4M965.1 188.8l-1.7-.2-2-1.8-3.5 1.2-3.7 .9-.5-1.7-2.3 2.2-2.6 1.8-1.5-1.2 1.2-2 4.8-3.1 .4 2.3 4.2 .8-.2-1.9-4 1.1-5.2 .8 2.9 1.4-.2 1.5-.4 1.2-2 .2-2.4-.8-1.8 1.2 1.9-.1 1.5 .7 .8-1 0-1.1 2 .9 1.8-.4 1.6-2.8 2.4 .9 .3 1-2.2 .6-.1 .9 2.1-.5 2.2-.6-2-.4-1.9-.6-.3 1.2M961 190.5l.1-1M961 190.5l-2.1 .7 .3-1-2.6-.4 2.7-.8 2.6-.9M954.6 192.3l-2.2 .4-1.6-.6-.6 1-1.4-.8-2.3 .3-.7 .9-1.2-.8-.7-1.1-2.1 1.2-.4 .9-2.2-.1-2.2-.1-2.1-1.1-.1 .9-2.2-.3-.1-2 1.4-1.2 3.3-1.5-.8 1.7 1.7 1.6 1.5 1.1-1.8 0-.8 .8-2.2-.2-1.6-1.1 1.7-.9-1-1.5-1.2-4.4-3.5-3.8 3.4-7.7-8.9-1.2-5.3-6.6 5.3-4-1-7.9 4.2 2.2 6.4 5.4 2.9 1.8 8 .6-4.5 10.3 7.1-3.3-7.1 5.8 11.6 .5 6.3-.9-4.5-6.6 1.6-2.8 5.7-7.7-1.3-10.2 6.9 3.9-1.7 4.3 8 4.1 3.5 4.6 0 5 3.4-.6-.9 4-2 2.1M954.6 192.3l-2-.6-1.2-2.3 2.8-.5 .8 1.3M952.4 192.7l.2-1-1.4-.8-2.4 .3-.3-3.2-3.3 .4-2.1 1.8 .8 1.4-.3 2-2.2 .1-1.8-1 2.2 .1 1.8 .8 1-.9M952.4 192.7l-2.2 .4-2.2 .2-2.2 .2-2.2 .1M939.2 193.6l.4-.9 .8-1 2.7-1.5-.7-4 4.7-.3-4.8-2.7-2.6-6.2-7.1-3.1 3.3 9-3.2 2.5 5.1 .7 2.6 2.4-.3 1.8-2.9-2 3.2 .2 2.7 1.7-1.3 2.6-1.4-1.1-.3-1.4-2 1.3-.9-3.3 .6-2.2 4.6 .1-.1-3-4.5 2.9-1.9-3.2 3.8-5.9 0-2.5-3.5-10.9 4-2.6 4.2-8.7-11.5 3.2-6 .9-.3-8 1.8-9 1.2-6.3-2.2-1.1-6.1 .5-8.2-8.4 10.9-4.6-5.3-5.6-2 2.5-4.3-3.2-2 3.7-1.6 3.6 1.8 1.6 2.5 2-4 3.1-.7 3.8 3.4-2-.8 6.1-3.2 2-.1 5.4-2.3 .3 2.3 3 3.1 1.8-5.2 2.8-1.9-3.3 1.7-1.3 .2 4.6 .2 4.7-3.2 1.7 1.5 1.5 .1 2.6-1.4-.3 0 1.9 3.3 1.9 .4 3.8-1.9-.3 .7 3.5 2.4 1.6 2-1 2.2-3.3 5.3 3.6-.2 4.8-.6 3.2-3.9 0-4.3-2.2-.8 1.3-1.3 0-1.7-1.2 .5-.8 1.2 2 1.3 1.9 1.5 1.7 2.1 .3 2.6 .1 1.1-1.5 2 3.1 2.3-1 3.4-4.4 6.8 2-7.1 1.1 1 2.8-3.7 .6-1.1 1.1-1.6-2.2-1.3 .9-1 .8 1.2 1.6-2-1 .8-.6-2.3-1.3 1.5 1.9-1.9-1.1-1.8-1.2-1.7-1.5-1.5-1.6-1.2-1.8 1.9 1.2 .8 2.2 .7-.5 1.8 1.5 2.3 .2 .6-1.3-2.7-2-2.4-.5-.3-2.8 .9-2.1-3 1.1-2-1.6-.7 .7 1.5 1.2-.8-1.9-.9-2.2 1.7 1.3 1.4-.3-.2 2.8-1.2-2.5 .4-3.2-1.5 .1-.4-2.4 1.2-1.2-.2-3.1-1.4 .6-1.2-.9 0-1.3-.9 .1-.5-11.1 .4 8.9 1 2.1-.1-2.5-.1-1.9 1-2 1.3-2.3-1.4-.5-1.2-2.1-.1-2.5-.9 .6 1 1.9-.9 .3 .1 2.3 .9-.2 .1 1.3 2.4-1.1 1.9 .6 2.1-2.7 2.9-4.8 6.1 2.6-5.8 5.8-3.2-3.6-2.3-2-1.9-.4-1.4-.8 .1 2.8-1.1-.1 .1 2.4-1-2.1-.1-2.2 0-2.2-.1-2.2 0-2.2 .9 1.2 0-1.9-.9 .7 0-2.2 .9-.9 0 2.4-.9-1.5 .1-2.2 0-2.2 1-.4-.8-1.8 1-.6-.8-1.6 .3-2.2 1.8 1.3 1.4 .6-2.7 1.9 1 1.2-2-.6 .2-2.2 1-.4-.7-1.8 .3-2.2 .4-2.2 .6-2.1 1.1-1-.5-1.2 .7-2 1.2-.5 .5 1.7 .7-1.7 1.2 .7 1.5-3.2 1.7 .4-1.5-4-.3-1.6 1.6-.5 .7 1.4 1.2-1.7 .3 2.7 3.3-3.8-2-2.5 1.9 .4 .9-2.3-1.6-1.4-.6 1.5-1.4 1-1.5 .2 .1 1.2-1.6 .3-.1 1.7-1.3 .1-1.1 1.9 1.2-.2-.1-1.7 1.7 1.2 1.4-1.9-1.7-1.1 1.5-1.5 1.7-1.5 1.8-1.2 2-1.1 1.8 0 2-.8-1.9-.2 2-.9 1.9 .2 .2-1 1.6 .3-1.8 .7-2 .9-.1 1.2 0 1.5 1.3 3.9-3.5-2.7 .5-1.9-2.1-.1 1.9-1.1 1.9 .4 2.4 2.5 1.3-2.6 1.6-2-1.4-.7 .5-1.1 .9 1.8-2.4 .9-2.9 1.2-1.7 .8 1.7 .7 2.4 1-1.1 2.9-3.6-.6 .1-2.1-2.8 1.7 .1 2.1-3.6 1.1-.5-1.6-.1-1.4 2.2-.6 .6-1.8 2.2-.1 .3-1.4-1.9 0M939.2 193.6l-1.4-.9-2.9-.3 0-1.1 1.5-1.3-2.5-.2-2.6-2.3-3-3-6.2-1.8 .3-3.1 1.3-6.9-6.7 4.4-3.4-3.9-4.5 2.8-1.4-3-1.2-4.8-1.2 3.2-1.9-2.3-1.4-2.2 .3 2.4 .4 2.4 1.1-.2-.6 1.8-.5-1.6-.8 .4 .7 2.1 .8 2 1 2 1.1 1.9 .6-.7 0-2.3 1.3 2.3 1.1 1.5-1.1 .4-.7 .6M932.6 193l-2.2-.4-2.1-.4-2.2-.5 .2-.9-1.9-.5 2.1-.6 2.3 1.7 2.2 .4-.6 .8-1.6-1.2 .5-1 3.2 .6 2.4 .3 3.2 .3 2.3 .1M932.6 193l-1.6-1.2 1.5-.8-1.2-3.5-2.2 1.4-1.5-2.2-1 1.6-2.2 .9-2.3 .5 1.9 1.5 2.1 .5-1.7-1.4 0-1.1-1.4-1.9 .1-1.8 4.5 1.2 3.7 .8-2 2.9-2.8-.7 .1-1.4 2.5 .6-2.6 .8-2.1-.5M932.6 193l.6-.8-.7-1.2M928.3 192.2l-2-1.4 2.5 .6-.5 .8M924 191.2l-2.1-.7-2.1-.6-2.1-.8-2.1-.8 .3-.9 1.8 1.7 .8-.7 1.3 1.5 .6-.8 1.5 1.4 .2-.8-1.7-.6-1-3 3.6 1.2-1.5 1-2.1-2.2-2.7-1.1-3.1-1.6 1.8 2.5-2.4-1.2-2-1.4-.3 1.2 1 1.7 .4-.8-1.4-.9-.8 .5-1-2-.4-2.1M924 191.2l.4-.9-2.3-.6 .9-2.4 3.6 1-3.5-2.8-4.1-1.5 3.1-1.3M917.7 189.1l.6-1.9 2.1 1.9 1.1-.8 .6 1.4M902.6 174.2l1.5 1.3 .8-.9M902.6 174.2l.6-.9 2.1-1.9 1 2.9 1.4-1.3 1.1-4.9-.5-5.5-.1-4.3-4.1 0 1.7-3.2 2.4 3.2 3.1 4 7.1 3.8-1.2 6.2 6.5 .4 2.2-9.1 7.4-1.8 6.9-.8 4 3.2 2.6 7 4.5 6.3 1.8-7.5-5.8-3.4-.5 4.6 6.3-1.2 7.4 5 4.9 1.5-2.4-8.2-2.5 6.7-2.9 1.6-2.9 4.9-1.4 3.4-3.6-2.4-2.6 3.4-1.9 2.5 2.1 1.6-.9 1.5-2.5 .1 1.3-3.2 1.2 3.1 2.4-.3M901.9 172.1l-.4-2.2 1.2 1.8 .7-2.6-1.1 .2-1.1-1.6 .8-.8-1-1.4 2-.1-1 1.5 2.6 1 1.5-3.5-1.9-3.5-1.4 1.6-1.1-1.8-1-1.8-.2-4.4 .1 2.2 2 .1-1.1-1.2 1-1.6-1.1 .3M901.9 172.1l1.3 1.2M901.5 169.9l-.3-2.2-.2-2.2 .8-1-.9-1.2-.1-2.2-.1-2.2-.1-2.2 .9-1.1-1-1.1 .3 6.6 .9-.4 1.1-.1-1.2-1.8 2.5-.5-1.3 2.3M901.5 169.9l.8-.6M901 165.5l-.1-2.2M900.7 158.9l.9-.1-1-2.1M900.3 147.8l.9-.7-1-1.5 2 .2-1.1-1.2 1.1-.8 1.4-.5-1.4 2.5-1 1.3 1.1 2.1-1.1 .2 0-2.3 2.5 0 0 2.9-1.3 2 .1 2M900.3 147.8l.9 1.6 1.2 2.6 3.2-1.6-1.7 4.1-1.5-2.5M900.2 145.6l.9-1M900.3 139l.9-.8-.9-1.4 .2-2.2M900.3 139l.8 1.3 1.1-.3 .1-2.4 1.3 3.3 4.1 1.6 0 3.3 3-5.1-2.9-3.6-1.8-4.7-.5 4.5-1.7-.5-1.5 1.2 3.2-.7 2.3 .2M901 130.2l1-.6-.7-1.6 1-.6 .9 1.3 1.4 .2-.9-2.4-.9-1.5 1.6-1.5 1.5-.4-.7 2.8 3.9 1.3 2.7 1.8 1.3-4.9 3.6-7.7 .5-5.2-4.8 2 .7 3.6-2.5 5.3-3.2 2.4-1.5-1.4 1.3-3.4-1.9 1-1.3 .2-1.1 .6-.6 2.2 2.1-.2-.4-2.6-.6 1.8 1 .8 .9-2.8 .6 2.4 2.9-2.6-1.4 4 1.7 2.7-2.7 1.8-.4 3.4 2.4-1.4 2.6 4.1-.3 5.6-3 1.8-2.2-5.6-1.9 4 1.8 1.9 0 3-3.2 0 1.5 1.3-1.4 2.1M901.3 128l1.9 .7-1.2 .9 .8 1.9 1.8-2.6 .6-3 2.2-1.4M901.7 125.8l1.1-.8-.5-1.3M901.7 125.8l2 .7-1.4 .9-.6-1.6M903.6 119.5l.4 1.4 .8-1.9 1.2 0-.2-2.3 1.8-1.2-1.2-2.1 0 2.1 1.2 0 1.3-2.6 1.3-2.1-.4-1.3 1.8-.6 2.1-2-.8-.8-1.4 1.4M903.6 119.5l.9-2.1 .9-2 1-2 1-1.9 .1 1.8 1.4-.4-.2 3.6-2.7 2.5-1.5-1.6 .3 1.6M904.5 117.4l1.3-.7 .6-1.2-1-.1 .4 1.3 2.9-.2 .1 4-1.6-.8M906.4 113.4l1.1-.1 .1 2.2 1.1 1M907.4 111.5l1.5 1.4 3.5 .3-1.5-1-2 .7M908.5 109.6l1.4-1.8M913.1 104.8l-.2 1.3M913.1 104.8l1.2 .3 1.3 2.2 2.7 .4-1.1 3.5-1.5-1.8 2.6-1.7M916.9 102.5l-.1 1.1 1.6 2 2.2-1.2M916.9 102.5l1.9-1-.1 1 .2 1.2M920.8 100.6l-.1 1.1 2.8 0 1-1.6M920.8 100.6l2.1-.8 2.1-.8 2-.8 2.1-.7-.3 1.1-1.8-.4 0 1-1.1 1.6 1.4 1-3 1 2 3.7 1.2-2.9 2.1 1.7 1.7 2.5-.4 4.6 7.3-1.5 5.8-6.6 1.9 5.5 4.9-5.6-.8 7.2-1.8 3.7-3.4 1.4-6 9.2 1.7 1.7-2.4 8.1 9.8-3.9-3.2 6.2 4.6 6.1-7.6-.8 4.8 4.2-2.1 5 7.6 9.6-6.8 .8-1 1.5 3.1 2.4 7.4 .6 8.3 1.1 5 1.1 3.3-3.1-8.3 2M925 99l2 .2 2.1 .4-.3-1M929.1 97.5l1.7 .4 .4-1.1-2.1 .7M936.8 96.1l.3 1.1 .3 1.4 2.8 1.1 5 1.4 5.6 3.1 1.1-2.9 5.5 1.4 3.2 1.1-.4-2.6 1.6-1.3-3.3-1.1 1.7 2.4 4.4 1.9M933 97.2l1.7 .7 .4 1.3 .7 1.7 3.6 1.4M922.7 100.8l.8 .9 .8 1.1 3.2 .8-.2-1.8 1.8-2.2M902.8 125l2.4 .9-1.5 .6-.5 2.2-.4 2.8-1.1 .5-.2 2 1.3-2.5M901.3 136.4l1 1.2-1.1 .6 .1-1.8 1.2-1.2 1.7-3.1 1.8 .3 5 2.7 8.1 .8-7.3-6.9 9.5 3.5 5.1-10.9 2-2.9 7.3-3.2 3.1 10.2-4 5.9-3.6-10 7.6 4.1 9.3-4.2-3.3-5-9.1-1 2.5-4.6-6.9-3.1M901.2 138.2l1 1.8 1.4 .9 0 2.4 1.8-.5M901.2 138.2l-.1 2.1M901.1 142.7l1.1 1.1 0 2M901.1 142.7l2.5 .6 1.8 2.5 2.3 0-2.1 4.6M901.1 142.7l1.1-2.7M901.1 142.7l2.5-1.8M901.8 163.2l1-.7 1.6 2.3 1.7-.4-.1-4.2 2.3 2.4 3-.3-2.5 5.8 .9 3.9 3.9 1.2-1.1 3.8-4.3 1.1 2.7 3.3 1.6-1.1 1.1 3.1M901.8 164.5l1-2M901.8 164.5l2.6 .3M904.9 177.4l1.2-.3 2.1 1M907.4 181.3l0-1.9M908.9 183l2-1.6 .1 1.9M912.1 185.4l.9-.7 1.4 2 1.5 .7 .8-2.4-.3-4.7 6-.7-5.4-2.5-4.5-.1 3.9 3.3-1.7 1.6-2.2-1.6 0-3.3-3.4-1-2.8-1.7M915.9 187.4l-.5-1.5M915.9 187.4l2.4-.2 .2 1.2 1.9 .7M926.3 190.8l.2-1.1M931 191.8l-1.7-1.4-.2-1.5M933.2 192.2l1.7 .2 3.2-.8-.3 1.1M946.5 192.6l-.1-1.1M988.8 162.1l-1.4 .4-.2-3.3 2.1-1.6-.6 1.7 .1 2.8-1.6-2.9M990.4 158l.5-1.8M992.6 146.9l-1-.9-1.4-.9-1.9 1.6 1.6 2.7 1.5-1 .2-2.4-3.3 .7M990.6 129.9l-.6-1.9M989.4 126.1l-2.2-2.5-1.3-2.8M984.2 115.8l-.9 .8-2.1-.6M977.3 107.7l-.4 3.2M950.6 94.4l0 1.1M948.2 94.3l-2.4 1.2-1.3 1.6-3.5 .6 3.5 1.2M940.2 96.4l.8 1.3-.8 2M940.2 96.4l-2.8 2.2-2.7-.7-2.7 2.2 2.6 3.5-3.6-1.3 1-2.2 3.8 .8M920.6 102.9l3.7-.1M916.5 105l1.9 .6M911.6 108.9l4.1 .5M910.2 110.8l1.9-.3M904.4 123.5l.8 2.4 1.2 3.1-1.8-.1-.4 3.2-.4 4.3 2.2-4-1.4-3.5M902.5 135.2l-.2 2.4M902.5 135.2l1.3 1.2M903 165.4l1.6 2.5M976.7 178.2l-3.3-1.3-.6-2.5-.9-3.4 3.9-4.8 3.1 .8-3.1 4.2-3 3.2-7.4 2.1 1.5 2.7 1.1 4.1 2.4-1.6 2.6-2-3.2 .2M987.4 162.5l-1.4-.1M989.3 157.6l-1.1-1.3 2-1.7-1-1.7-1.6-1.3-2.5 .8-3.9 2.6 .2 7.4 2.1-4.9-2.3-2.5-6.6-5.5-7.1 5.1-1.5-1.4 2.4-3.9-6.7-6.4M991.6 143.1l-1.4 2M989.9 131.4l-.5-1.6-3.4-.2 1 3.7M981.4 113.9l-1.7-1.9-1.4-1.6M975.6 107.6l-1.6-1.5-2 2.5 2.3 2.2-.4-2.8-1.9 .6M975.6 107.6l-1.7 .4 .1-1.9M969.9 102.7l-1.8 .4M904.1 158.3l1.9 1.9-1.8 .7M919.4 186.1l-.4-2.1-2.6-3.7M940.1 190.3l3-.1M980.9 171.4l1.3-2M984.5 121.2l-1.7-3M958.5 98.8l-1.9 1.3-3.5-.9-1-2M931 102.3l-1.4 3 5-1.7M931 102.3l-3.5 1.3M923 105.4l3.3 1.1-4.4 1.8-3.2 5.6M910.4 116.9l2.7-.1 3.6-.4 7.3 3.1 2.4 2.1 1 10.4-3.9 1.9M910.4 116.9l.2 5.2-1.5 5.1M906.4 129l2 2M905.8 155.1l5.3 .9-.3-8.4 7.6-5.2-1.5 7.8 2.4 7.7 4.4 4.2 2.2 1.5-7.5 2.5-6.5 2.6-.6-6.4 8-4.4-8.2-1.9 .2 6.3M906 160.2l2.2-1.9 2.9-2.3M906.1 164.4l2.7 3.7 3.1 .6 1.7 4.5 3.6-.9M906.1 164.4l2.2-1.8M906.5 168.2l2.3-.1M909.1 176l.6-4M923.1 185.5l5.2-1 4.4 .9 4.5 2.9M927.6 186.7l.7-2.2 .9-2.9-1.5-4 4.9-3.7-6.7-10.3 1-7.2-3.2 5.7M931.3 187.5l1.4-2.1M940.4 188.5l2-2.3 2.8 2.2M948.5 188l-1.4-2.1M948.5 188l1.2-5.5 1.6-5 3.4 4 3.7 2-.8-6.9 3.8 2.3 5.5 .3-4 2.4-1.5-2.7-3 4.6 4.5-1.9 3 .9M957.7 186.1l.7-2.6M957.7 186.1l3.4-1.2M981.4 167.2l-2.5-.2 2.5-4.6M985.1 159.8l-1.6-2.3 1.6-5.1 .9-5.4-2.9-2.7 3-1.5M986 129.6l-1.8 2-3.1 0 1.2-5.6 .6-4.2M980.2 117.7l.2 4.5M974.3 110.8l-2.4 5.2-5.8 8.6-7.9 3.3-1.2-2.3-1-9.3-7.8-1.2M960.2 101.2l-2.8 1.5M960.2 101.2l-3.6-1.1M947.6 98.6l4.3 2.7 4 4.1-5.1-1.2M929.6 105.3l-3.3 1.2M913.1 116.8l0 7.3M986 147l-3.4 2.8-4.3-7.7-7.3 1.1-2.6 6.1-9.3 0-4.4 4.8 5.7 5.4 3.9-2M985.6 137.8l-3 .3-9.8-3.2-8.8 3.6-3.8-4.5-5.8-.5-9.7 4.3M985.6 137.8l-1.4-6.2-1.6 6.5M982.3 126l-2.9 .9M977.2 117.6l-2.2 2-.4-5.1-2.7 1.5M970 109.9l-3.8 .7-1.3 7.4-8.9-1.7M960.6 103.8l2.2 4.4-2.7 2.8-10.1 .4 5.9-6M937.2 106l1 4.9M925.3 110.1l3.1 8.6-4.4 .8M910.7 140.7l7.7 1.7 8.2 6 5.9-8.1 3.9 6.8 5.3-4-9.2-2.8 1.7 8.9-1.3 6.3-6.3-7.1-3.9 5.8-5.8-4 9.7-1.8 7.6 .8 2.2-2.1 8 5.2 7.3-.2-5.2-4.8 2.8-3.4 8.2-.7-5.8 4.2 0 4.7 .3 9.8M910.7 140.7l8.4-4.8-.7 6.5 10-3 4.1 .9 2.3-8.7-5.2 1.5M910.7 140.7l.1 6.9M922.4 179.6l5.3-2-4-4.9M929.2 181.6l6.7 1.3 6.4 .3 9-5.7M942.3 183.2l7.4-.7 5-1M981.2 155l-5 1.4M982.6 149.8l-8-.3M982.6 149.8l.5-5.5M981.1 131.6l-8.3 3.3M930.9 112.4l-2.5 6.3 2.8 2.9-4.8 0M950.2 125.5l6.8 .1M921.3 132.5l-2.2 3.4M934.8 131.6l3.3 3.9 3.6 7.6M947.9 131.6l6.5 1.9M962.1 130.6l-1.9 3.4M968.8 131.7l-4.8 6.8M957.5 143.2l1.6 6.1M934.2 149.2l10.2 3.1M946.5 147.3l5.2 .1M922.7 154.2l-3.4 3.7-.9 8.2M932.9 155.5l.4 6.3-.7 12.1 3.6-10.3M932.9 155.5l7.3 5.5 5 1.7M932.6 173.9l7.1 .6" fill="none" stroke="#111" stroke-width="1.05" stroke-opacity=".9"/><path d="M950.2 95.4l3.1 5.4 .5-6.8-3.6 1.4-4.4 1.6 2.1-3.6-6 .6 3.9 3-5.6 3.5-4.1-5.1-5.8 1.7-3.5 3.4-2.1-1.4-5.6 2.3-.1 7.4 8.3-2 4.9 4.5 4 1.5-3.2 7.3-3.8-2.7 7-4.6 5.1-1.1-1.5-1-3.6 2.1 1.6-7.9-8.7 .3 3.7-4.9 7.4 .2 1.5 1.5 7.9 .7-3.8-5.7-4.1 5-3.9 2.9 2.4-4.4 1.7-6.5-5.8 1.4-3.3 4.9-2.5-3.2-5.6 2M950.2 95.4l-2.3-2 5.9 .6 5.8 1.6 5.6 2 5.2 3-2.5 10 7.2-6.2-4.7-3.8-6 3.4 3.5 6.6-4.1-3.9-6.7 4.4-4.3 4.9-.3 5.8-3 6.7 .4 6.3-5.3 4.6 .6 5.4 6.5 6.3-9.5-2.3-5.5 1.9-2.7 6 4.8 5.5 .6-7.7 3.9 8.5-4.5-.8-5.7-1.5-5.4 0 .3 2.4 8.5 2.6-3.4-5 .9-4 5.4-2.2 10.9 2.4 1.4-5.8 7.5 1.9-4.1-5.3 5.4-.4 7.1-1.9-.1 5 8.6 3.2 3.7-5.6 3.1 6.8-6.8-1.2-.1 6.7-5.6-.7 1.3 4.9-5.3-.5-5.3-6.2-3.3 5.9-3.5 6.6 6.8 3.6 1.7 4.7 1.5 10.6 5.3-2.8-4.6-8.6 6-3.2 6.1 0-6.4 5 3.8 3.3-4.9 3.5-6.8-7.8 2.2-.8-3.2-7.1 8-.3-3.4-6.4 4-4.4-3.3-3.6 4.4 1.4-4-7 8.1-2.2 2.5-2.8 1.7 2.6 4.4-2.3-3.9-6.5-3.8 1-7 2.4 1.8-6.6-4.7-3.8 9.4-2.7-2.2-2.8-6.1-9 7.9 4 4.2 .9-6 4.1-7.1 .1 1-9.1-.1-1.2 .3-5.9 6.8-.8 4.6-1.2-1.3 2.8-2.4 10.3 7.6-4.1 3.5 .4-1 2 3.6 3.4 2 5.6 1.4 5.9-6.1-6.6-3.6 4.9 9.7 1.7 .8 5.9-4.9 2.5-4.7-5 7.1-1.1 2.5 3.6 0 6-9.3 2.1 5 8.6-.3 6.6-4.5-.6-7.8 1.5-4.9-.5 4.3-4.2 2.1 2.5 4.8-8 6.3 2.7 1.9 1 1.6-5.8-8.5-3.8 0-3.2-.3-7.4-3.6 .9-2.2 6.2 6.1 .3 4.4-2.4 2.4-6.1 1.7-2.3M950.2 95.4l-.6 7.3 3.7-1.9-.6 5.5-2.5 .3 2.6 9.4 4.1 3.5 2.7-4.5 8.3-4.4 3.2 1.4 6.9-.6-3.3-1.6-3.6 2.2 4.5 9.7-1.8 5-7.2 5.5-.4 6.9 3.3 3.5-1.9 2.8-6.8 3.1-5.7-.8-3.4 3.4 .9 5.9 8.5 .8-7.7 2.1-3.1-3 2.3 .1 6.6-4 1.6-4.5 6.7 1.9-.4 5.6-7.9-3 1.9 4.8-5.8 4.3-2.3 3.5-.1 3.4-8.3 2.6 1.6-7.6-4.7 .3-5 1.4 4.3 7.3-4.6 2.1-3.7-1.3-4.4-4.6-4.2-2.7-1.9-7.6-3.9 4.9-4.8 2.7 4.4-3.7-8-5.6-.2-7.4-7-3.6 .8 5.9-3-3.7-.1-6 2.6-2.7 2-5.7 3.8-4.8 0 8 4.7-2.3 2.3-.4 3.5 4.5 4.6 10 2.8-2.6 3.8-2.2-1 3.2 1.7 .1 2.7-2.7 7.1-6.2-6.7 1.2-5.2-1.8 .5-6.7 2.6 1.4 2.1 7.1 3.5-5.6 6.1-6.9-1.4-4.4-2.7-3.6-6.6 .8-4.2 5.6 5.5 1.2 3.3 7.3 3.2 4.4 3.8 .8-2.2 6.3-8.7-.9 3 5.9-4.9 5.7-6.1-1.3-2-6.1-8 1.9 .5-4-6.7 2.9 6.2 1.1 2.8 3.2-8.8 3.1-5.2 .3 5.9 3.7 7.3 1.6 .8-8.7 3.5 4.8 5.7 1.8-2-5.6-7.2-1 5.2-5.1 5.6-1.6 2.5 9-.8-8.9 5.7 3.2 5.7-5-.2 3.1-2.8 5.7-2.7-3.8M926.8 100.5l2.3 4.7 3.1 6.1-4.5 .6-8.7-3.1-5.1-4.5 1.6 9.3 8 8.1 1.9-7.3 3.8 3 3-6.1 5.6-6.4 7 1.8 2.8 8.9-3.9 4.1 4.5 4.8-5.9-1.6-8 4 7 0 1-4 1.4-3.2 4.7-2 4.4-1.7-5.2-.4-6.3-3.9 3.5-5-5 4-2-5.8-5-4.6-6 .2-7.7 .9-2 3.1-3.2-.2-4.4 4 .3 6.6 3 4.9 2.7-6.2-6-5.3-3.1 5.1-2.5 5.4 5.7-.7 2.9 4.5-7.6 .6-2.9 1.3 1.9-5.7 1 4.4 3.7 6-3.8 2.2-2.8-6.9 6.6 4.7 3.9-6.6 0 5.7 6.2 3.6 7.3 .2-1.7-7.5 4.5 1.1-2.8 6.4 2.9 5.9 1.4 6.2 3.4 .6 .4-5-3.8 4.4 .7 3.3M926.8 100.5l.5 6.3-8.2-5.4-5.2 2.9M953.3 100.8l7.4 .4 3.7 2.8 .8-6.4-4.5 3.6-1.7 3.9 4.8 1.6 .6-2.7-5.4 1.1-1.9 6 2.5 3.9 1 5.2-3 5.9-3.9 7.6 2.6 5.9 6-5 1.2-5.7-4.8 2.7-1.1-5.5-8.1 2.4-5.6 7.8-6.3-2.1-5.3-2.3-2.9-.6-.6-5.6-5.3-4 .8 2.9-5.6 7.3-3.1 2.6-1.4 4.2-.8 3.6-4.8-5.1-5.8 2.5 1.3 5.3 5.4 4.8 3.9-7.5-9.3 2.7 4.5-7.8 5.6 1.5 4.9 .3 6.9-6.9 3.4-.8 4.9-4.4 5.3-7.6 4.1 .4-2.4-8-1.7 7.6-3.4-6.5M953.3 100.8l5.7 4.3-6.3 1.2-3.1-3.6 .6 3.9-2.6 9 .8 2.1 4.1 4.1-4.3 2.7 1.3 4-5.8-1.2 4.5-2.8 .2-6.8M953.3 100.8l6.3-5.2 1.1 5.6M917.1 104.5l1.9 4.3 6.4 5.6-9.9-.8-5.7 1.3-.2 3.2 3.2 1.7 4.2 7.1-4.5 1.4 .8 6.6 .9 3.8M929.1 105.2l-1.8 1.6 .4 5.1 1.5 5.5-5.7 4.3-6.5 5.2 1.7 5 .4 7.1 7.4 7.4 2.8 1-3.6 7.7-3.7 3.8-4.3 3.9 .4 1 5.8 2.7-2 4.7 .5 6.9 2 2 8.1-6.3 .9 7.7-2.6 6.8 4.2 5 .2-6.8 4-6.9 2.2 7.8-.4 6.3 5.9-.3-5.5-6 5.2-5.6 3.2 3.2 3.2 1.1 4.7 1 6.6 2.1-5.6 2.1-5.8 1.3 .1-6.5-1.3-7.6-5.1 3.3-1.4-5.1-6 2.9 .2-3.8 5.8 .9-4.4-3.7 3.8-1.4 7.1 6.9 2.7-1.1-.1-7.1 7.5 .4-.7 3.2-2.2 5.1-1.2 8.1-4.8 5.5-6 .8 2.9-8.4 1.9-6.5 1.2-9.5-6.7-5 4.1-7.1-7 6.1 2.9 1 6.8 1.6 4.8-1.9-2.5-1.6-1.9-2.2-.8-2.9M941.7 102l3.1 4.7 5.4-.1M949.6 102.7l-4.8 4M952.7 106.3l.1 9.7 6.8-1 8 1.5-7 3.7 2.9 8.7 3.2-2.1-.4 3-2.8-.9 3.1 3.3-4.3 2.4 3.9 4.5 5.1-3.1 5.2 4.2 1.6 5.2-8.6-2.8 6.1 5.6-8-2.8-6.6-3-7.4 3.1-.9-7.4 1-4.4-3.8 1.1 2.8 3.3-8.1 1.3-.7-3.1-.2-9-2.4-.4-3.7 7.3-5.6-1.5-3.1 5.3-9.8 1-2.9 7.9 7.5 2.1M952.7 106.3l4.4 4.8M919 108.8l-3.5 4.8M963.8 106.7l-4.2 8.3M974.7 109.8l.4-5.4 4.2 4.2 4 4.5-.1 4.5 2.5 2.4-2.6 6.5 6.2-3.1-2.7 4.9 4.7 .7M909.8 114.9l-3.4-1.5 3.2 4.7-4.7 5.1M925.4 114.4l2.3-2.5M967.6 116.5l3.5-4.5-3.4 5.7-7.1 2.5 6.1 6.6M978 111.4l5.3 1.7 3.4 4.9 2.6 5.4M978 111.4l5.2 6.2-3.4 5 3.3 3.9 3.5 1.8-4.8 3.5-5.8-2.3 2.9 7.4 5 1.4-.9-5.1-1.2-1.4 1.3-5.3-7.1 3-4.7 6.5 7.6 .9 1.4 2.3M912.8 119.8l10.7 1.9M912.8 119.8l-.3 2.8 4.5 4.3 7.3-2.3M929.2 117.4l-.4 8.3M933 120.1l1.3 6.8-2 5-.3 .8M956.9 119.5l.7 6.6 5.9 2.8M956.9 119.5l3.7 .7M956.9 119.5l-4.4 2.3 5.1 4.3M985.7 120l-5.9 2.6-3.8 6.9M973.8 126.7l-7.5 3.1 .3 2.4M904.8 131.4l-3.8-1-.6 6 4.4-2.4 3.8 3.2M904.8 131.4l0 2.6-3.8-3.6 1-5.9M908.6 129.2l4.7 5.7M908.6 129.2l3.9-.9 3.1 6.2M949.5 128.5l4.2 5.2 5-2.1-2.4 8-3.6-1.5-7.5 6.7-3 4 8.1 8.1M958.7 131.6l3.6 3-1.3 7.8-5.9 5.3-1.5-2.2-8.4-.7-2.8 .9-1.6-7.1 3.1-2.3 6-1.5M981.8 131.8l-2.9 5.1-2.4 3.3M978.9 136.9l4.1-3.7 8 4M902.8 139.7l-2.4-3.3-.2 6 2.3 3.8 1.6-1.2-3.9-2.6M919.1 139l-5.7 3.3 2.8 4.6M928.9 138l-2.4 8.4M956.3 139.6l-2.7 5.9-1.9 5.6M956.3 139.6l4.7 2.8-.5 4.9 .3 1.2M961 142.4l5.2-3.3 1.4 6.3M902.5 146.2l-2.2 2.2 .2 6 .3 6 .2 5.9 7.7-1.6-4.2-7.2-4-3.1 2.8-2.3 6.4 5.1 6-6.3M988.6 143.3l4.9 3.5-.8 5.9-3.5 4.8-4.8 6-1.5-8.7 1.3-5.9-4.4-.9-4.2 .2 .5 5.4-4.6 3.8 4.5 2.9 .6 4.7 4.2 6.9-3.7 2.7 1.8 4.3-8.2 .7-5.7-1.8 4.8-7.4 1.2 4.2-.3 5-1.1 6.8M988.6 143.3l-4.4 5.6M903.3 152.1l1.2 5.4-3.7 2.9 7.9 4.3 4.1 3.4 2.6 10.1 5.2 3.3 5.8 5.7-1.9 2.2-1.2 1.5 5.8 1.5-4.6-3-6.9-.4 5.7 1.9M903.3 152.1l6.2-2.3M967.5 150.4l-8.3 2.6M909.7 157.2l.7 4 2.9 5.3 8.6 4.7-6.5 7-.5 2.3-6.2-.1-1.2 2.4 5.7 1-1 2.7 5.4 2.5 .8-4.5 8 2.7 7-5.7 1.8 5-4.4 1.8-4.4-1.1 2.7 5.2 5.9 .9 6 .4M931.8 156.4l1.3 4.3-5.1 2.4 .1 6.1-5.7 8.9-1.8 3.4 3.8-1.4 9 1.4 2.8-6.4 3.2 .7 1.4-2.8 .7-8.7-2.7-2.1-2.3 3.5-4.3 6 4 3.4 3 4.5 7.4 2.2M931.8 156.4l2.2 .3M931.8 156.4l-4.1 4.3M967.1 156l-.7 8-4.6 6.7-4-7 8.6 .3M967.1 156l-6 1.8M971.5 157.4l-1.1 2.2M982.9 154.8l-6.9 5.5M910.4 161.2l-1.7 3.5 4.6 1.8-.5 1.6-2.6 5.8-1.9-1.6-7.3-6 1 6 6.3 0-4.1 5.5 3.3 5 4.7 3.7 6.2-2 2.2-3-5.7-1 3.5 4 6.1 4.9M922 158.9l6 4.2-4.1 3.4M943.3 163l-1.8 1.3 3.1 7.3 .6 5.1 6.5 1.8 2.6-8.2-1.4-1.3M953.4 159.9l-.4 5.7 1.3 4.7M953.4 159.9l-7.2 4.1M978.1 162.8l6.3 .7 1.8 5.9 2.7-5.3 2.2-5.6M978.1 162.8l-1.5 2.2-1.6 8.4 5.8-1.5 2.1 2.5-4 4.5-4.4 4M908.7 164.7l-.4 7.6 4.5-4.2 9.1 3.1-3.8-7.4M936.5 165.7l-.3 9.4M936.5 165.7l-8.4 3.5-6.2 2M971.7 164.5l-1.9 5.9 6.8-5.4M984.4 163.5l-3.6 8.4 5.4-2.5-3.3 5-5.8 .2-2.1-1.2-4 1.2M928.1 169.2l4.1 2.5 .3 2.1-10.1 4.3-7 .1-6.7 2.2 4.5 3.4 1.7-3.3M969.8 170.4l5.2 3M910.2 173.9l-1.5 6.5-4.5-2.6 6-3.9 5.2 4.3M954.4 177.4l6.7-3.5 3.9 3.9M954.4 177.4l-1.4 8.7 5.9-7.1 3.9-.4-5.1 8.5 1 4.2M954.4 177.4l4.5 1.6M924.4 180.1l2 7.1M933.4 181.5l5.8-1.9M913.2 183.8l5.2 .7M930.8 188.3l-1.7 4.1M935.2 186.5l6.2 .9 8.4-2.4 3.1 7.6M941.4 187.4l-6.4 5.9M904.2 177.8l-2.2-5.5" fill="none" stroke="#555" stroke-width=".45" stroke-opacity=".5"/><polygon points="941.9,94 945.3,93.5 948.2,93.4 950.9,93.6 953.4,94 955.9,94.5 958.4,95.2 960.9,95.9 963.4,96.8 965.7,97.8 968.1,99.1 970.4,100.6 972.8,102.4 975.3,104.6 977.9,107.1 980.5,109.8 983,112.8 985.3,115.8 987.2,118.9 988.8,122.1 990.2,125.5 991.3,129.1 992.3,132.6 992.9,136.1 993.4,139.5 993.6,142.7 993.6,145.8 993.4,148.9 992.9,151.9 992.2,154.9 991.3,158 990.2,161.2 988.8,164.4 987.2,167.7 985.3,170.9 983.3,173.9 981,176.7 978.5,179.3 975.7,181.9 972.7,184.3 969.4,186.5 966,188.4 962.5,190 958.7,191.3 954.7,192.3 950.5,193 946.2,193.5 941.9,193.7 937.7,193.6 933.4,193.2 928.9,192.4 924.4,191.3 920.2,190 916.3,188.6 913,187 910.4,185.3 908.2,183.5 906.4,181.5 905,179.4 903.8,177.1 902.7,174.6 901.9,171.9 901.3,169 901,165.9 900.8,162.7 900.7,159.4 900.6,156 900.4,152.4 900.3,148.5 900.2,144.6 900.2,140.6 900.3,136.9 900.6,133.4 901,130.3 901.4,127.3 902,124.6 902.7,121.9 903.6,119.4 904.7,116.9 905.9,114.4 907.1,112.1 908.4,109.8 910.1,107.6 912.3,105.5 915,103.5 918.6,101.6 923.1,99.6 928.1,97.8 933.1,96.2 937.8,94.9" fill="none" stroke="#111" stroke-width="1.8"/><path d="M934 97Q938 100 941 112Q943 121 946 127" fill="none" stroke="#111" stroke-width="2.6" stroke-linecap="round" opacity=".75"/><polygon points="484.5,327.4 485.5,327.4 486.3,327.3 487.1,327.6 488.2,328.2 490,329.5 492.6,331.6 495.7,334.5 499.2,337.7 502.8,341 506,344 509,346.7 511.9,349.4 514.7,352 517.4,354.6 520,357 522.5,359.3 524.8,361.4 527.1,363.5 529.3,365.6 531.4,368 533.5,370.6 535.6,373.4 537.5,376.3 539.4,379.2 541,382 542.5,384.8 543.8,387.5 545,390.3 545.9,393.1 546.6,396 547,399.1 547.2,402.4 547.2,405.6 547,408.9 546.5,412 545.8,415 544.9,417.9 543.8,420.7 542.4,423.4 541,426 539.4,428.4 537.6,430.7 535.7,432.8 533.6,434.9 531.4,437 528.9,439.1 526.2,441.3 523.4,443.3 520.7,445.3 518,447 515.5,448.5 513.1,449.9 510.8,451.1 508.4,452.1 506,453 503.5,453.7 501,454.2 498.5,454.5 496,454.7 493.4,454.8 490.7,454.8 488,454.7 485.3,454.5 482.6,454.1 480,453.5 477.5,452.8 475,451.9 472.6,450.8 470.2,449.5 468,448 465.8,446.2 463.7,444.3 461.7,442.1 459.7,439.7 458,437 456.4,434 455,430.7 453.6,427.2 452.5,423.6 451.5,420 450.7,416.3 450,412.5 449.6,408.7 449.2,404.8 449,401 448.9,397.2 449.1,393.3 449.3,389.4 449.6,385.6 450,382 450.4,378.6 450.9,375.4 451.4,372.3 452.1,369.2 453,366 454.1,362.7 455.4,359.4 456.9,356.1 458.4,352.9 460,350 461.7,347.3 463.5,344.7 465.3,342.4 467.2,340.1 469,338 470.8,336 472.7,334 474.6,332.3 476.4,330.7 478,329.5 479.5,328.6 480.8,328 482.1,327.6 483.3,327.4" fill="#cccccc" fill-opacity="1"/><path d="M484.5 327.4l.5 2 1.1-1.2 2 1 2 1.5 1.2 1 2 1.8 .8 2.2 0 1.9 1.3-.7 .9-.7 .7-.6-1.6-1.5-.5 .9 1.4 1.2 2.3 .9 1.6 1.5 8.1 7.5-3.3-3 1.7 1.5 1.6 1.5-.7 .6-1.9-.3 .8 2.7 2.3 2.1-1-2.9 2.1-.7-2.3-.9-1.1 2.4-.6 1.9-2.4 .9-1.5-4.5 .1-2.4 1.7-.4 2.5 .9-.6 .9-1.9 .2-1.7-1.6-.7-2.6-1.5 3 2.2-.4 1.2-2.3-1.9-.3-2.2-.1-2.9-.2 1.1-3.3-1.4 .5 .3 2.8-5.9 1.7-4.5 .6-5 4.8-1.6-6.8 .6-4.8-.6-2.5 2.8 .7 .7-3 4 .8-.1 2.9 3.1-.4-1.8-3.8 1.1-1 1.9 1.6-1.2 3.2 3.3 3.1-1.4-3.7 2.4 .2 .8-.7-1.6-1.5-1.2-2.3-.8 .5-2.2-.4-1.5-1.1 .5-1-1.4-1.7-.6 .7-.1 2.7 1.6-.7 .4 2.1-1.2 1.3-.8-2.7-1-1.5-3 .3-.2 1.6 1 1.5-3.7 .1-2.3 .1-2-1-.4 1.7 2.4-.7-.1 2-1.9-.2 .8 3.8 3.7 3.8 4.9-4 2.5-1.9-4.6-.7-2.2 1.8 4.3 .8-2.1-2.6 4.7-2.2 3 2.5 1 4 2.3-.9-2.7 4.6-1.7 6.8 5.5-3.2 5.4 5-.9 4.6 4.1-1.7 3.3 8-6.5-3.4-.9-2.9-3.8 1.5 1.1 6.9 5.8 7.5-4.1 4.1 8.3-1.4 2.5-5.8-4.8-5.1-7.7 .7-2.6 1.3-7.8-7.8 9.3-.4-1.5 8.2-.7 8 .8 9.6-2.1 2.9-4.2-1-3.7-3.8-7.8 1.8-9-2.5 .6-7.1-5.4-1.2-1.7-5.2 3.5-.9-1.7-4.1 1.7-3.9 5.4-4.1-3-.7 2.8-4.4 .2 5.1-3.1 6.1 7.1-1.7 7.8 1.4-.2 4.9-.9 7.7-6.6-1.3-3.6 4.7 8-1 2.2-2.4 4.4 4.2 4.5-2 4-1.1-3.9-3.3-2.1-4.6-6.9 6.8 9-2.2-4.6 6.4-.7 4.6 5.2-6.6-1.5 10.4 6.3-1.9 5.8 .8 6.3 5.9-.1-5.7-6.2-.2-1.7 1.9 5.2 6.5-.9 5.9-1.8-1.3 .9 10.2-5.8 2.8-3-3.7-3.4-7.7 11.3-1.6-7.9 9.3-6.3 0-3.3-2.3 4.5-6.6 3.3-4.7-1.6 5.9-1.7-1.2-3.8-2.6 1.5-5 5.6 2.9 1-6.6 2.2 5.4 4-5.6 8 4-2.8 2.5-2.7 4.6-6.5-5.5-3.2 1.2-7.1 2.1-5.6-5-2-6.7 1.9-8.2 5.9 6.4-5.8 8.5-7.3-.2-3.9-.1-6.4-4.3-2.7-2.6-2.5 1.8-.3 3.3-1.9 .7-1.2-2.1 .2-2.9 1.4 0-1.6 2.9 3.4-1.9 1.9 4 2.8 3.5-3.1 3.1 0 3.1 3.2 4.8 4.3-8.2-4.4-2.8 6.9-2.4-.1 2.1 4-2 2.8 9.6-.6 7.3-1.6-2.1 .2 3.7 1.4-1.6 7.1 6.4 2.9-8.9 1.8 4.5 1.5-2.2 4.4 6.7-2.1 3.2-7.5 .2-1.4 3-4.2 5.7-1.9-2.9-2.8 3.6-3.9 3.6 2 3.4-2.7 1.4 .7-4.8-5.5-5 2.4-2.2-5.3 .9 1.4 3.8-.7 3-1.3-3.3-1.3 .7 2.6 2.6-3.1-.7 1.9 1.4-1 .6-.9-2-1.1-.5-.8-2.1-.7-2.1 .4-1.6-.7-2.5-.5-2.2 .7-1.8-.4-1.6 .9-3.4 1.5-1.9-.4-4.2 2.2-.4 2.9-2-2.2 7.5-.7-5.5-1.8 4.6-1.9-.9-2.3 1.4 .9-1.7-1.2-.7-.7 1.9-.3-2.2-.2-2.2 2.1 .9-1.2-1.3 2.6 .7 1.5-3.3 .3 3.2-1.8 .1-1.6-2.8 1.3-1-2.6-1 .2 2.1-.9 .2-.2-2.2 .9-2.1 1.1-1.6 0 2.5 1.4-1.6 1.8-1.2 0-4 2.6-4.3-2.2-.7-3.1-1.4-1-1.4-.7-1.7 1.1-2.1-.9-.1-.2 2.2-.3 2.2 .8 1.7 .9 2.6-1.1 .3 1 1.6-2 .3 .1-2.2 .2-2.2 .7 2.5-.1 1.4-.9 .5 1.9 2.1 1.5-2.4 2.1-3.9-.4 5 5.4-.8 6.8-.3-2.4 3.1 7 9.7-4.9 7.7-5.3-.3-2.6 2.8 3.3 1.1-.7-3.9-3.3-1.4-1.8 3.5-3.1 .9-1.2-.8-.9-.1-.4-2.2 .7-1.7 .2 1.9-.9-.2-.3-2.2 1.9-1.2-.3-2.3 1.4-.6 .3 3.2-1.4-.3M484.5 327.4l1.6 .8 1.5 2M484.5 327.4l2.2 .1 1.9 1 1.8 1.3-.3 .9 2 .5 1.6 1.5-.4 .8-2.3-.6-3-.6-2-1.4-3.2 1.9 2.2-3.4-1.5-1.1-1.2-.7-.2 1-.1 1.1-2.2 1-1.5-1.4 1.9-1-.1 1 1.9 .4 1.5-1.4-1.4 .3-2 .7-.3 1.4 2 .6-2.7 1.6 .2 2.2-2.6-.1-1.1 3.6-1.8-.8-.7-1.2 1.7-1.8 2-1.8-.4-1.1-1.6 .1-1.6 1.6 .1 1.2-.2 1.8-1.4-1.5-1.5 1.6 .9 .3 2.7 .8-2.7 .9 .8 1.2 .5 2.1-3.1 .8-1.9 .1-.6 3-1.5-.3-1 1.4 .4 1.9-1.7 2.8-2 3.6-.1-2.7 2.1-.9 1.7 .5 0-3.3 1.9 .4 .2-3.4-.9-2.9 1.1-1.3-1.2 0-1.3 1.7-1.4 1.8 0 1.6 1.6 2.1-2.8-.2 1.2-1.9 1.2 .2 2.5-1.1 2.6-.3 1.9 1.2 1.4 3.2 1.5 7 5.5-2.9-2.4-1.7-3.1 4.6-5.1-1.8 4 4.4 1.1-2.6 6.7 4 4.7-2.1 1.3-2.9 4.1-1.8 7.7 2.8M484.5 327.4l-2.2 .2-2.1 .7 1.9 .3M484.5 327.4l-1 .9M488.6 328.5l-.5 .7 1 2.1 1-.6M490.4 329.8l1.7 1.4M490.4 329.8l-2.3-.6M493.7 332.7l1.7 1.4-2.1-.6-1.6 2-.7-2.6 .3-1.2M497 335.6l-2.1-.6 .5 1.9-1.3-1.2M497 335.6l1.6 1.5 12.9 12-1.6 1.2 2.1 1.9-.7-2.1 .2-1 1.6 1.5 13 11.9 1.6 1.5-2-.6 .6 2.1-1.1 .9 1.7 1.7-.6-2.6 2 2.1 .9-.7 0-1.3-2.2-.9 .7-.7 1.5 1.6 1.5 1.6 1.4 1.7-1.7-.7 1.2 1.5 1.2 1.5 .7-.6-1.4-1.7-.5 .8 .4 2.3-1.5-2-2.6 2-1.9 6.1-.9-5.9-2.2 2.1-4.4-4.5-6.6 4.4 1 1.8 5.6-6.2-3.7 8.3 6.9 4.1-8.6 2.3 3.9 5.6 4.7-7.9 2.8 5.9 4.4-5.9 3.4-4.3 4 2.8-.7 2.3 1.8-.4 1.6 2.8 2.3 1.6-3.8-.6-2.5 .2 2.2 4.6 1.4 3.7 2.2-.8 2.5 2.6 1-1.9 .5-2.3 .6-.9-.7-2.1-1.5-1.2-.7-1.4-.9-1.8 .2-1.5-2 .3 .3-1.7-.6-1.1 1.3 .5-1.1-1.9-1.4 1.6-1-1.7 1-.5 .2-1.3-1.3-.4 1.1 1.7 0 2.2-2-.6-2.5-3.8 1.4-.6-1.5-2.1 .1 2.7-1.5 1-1.6-2.3-.8-4.1 2.4 3.2 1.5 2.2 3.5 2.7-.1-2.2 .2-1.4-1.4-.4 1.2 1.8-2-1.1-.5-2.6 1.3 1.9 .1-1.4-1.3-1.8-2.8-.4 1.7 2.2-1.4 .5 0 3.2 .2 4.4-3.6-.1 .2-4.9 1.6-1.7-2.8-3.6 2-.5 2.1 .5 .3 2.7-1.6 .9M498.6 337.1l27.5 25.4-2.3-.8-1.4-1.3-2.5-.7-.4-1.9 1.7 .3-.1 1.2 1.3 1.1-3.2 .5 3.6 1.4-4 .6-5.1-1.5 1.1-2.2 1.6-2.8 1.1 2.9 2.4 .4-.7 1.2-1.7-1.6 1.3 3.6 2.6 2.4 3.8 1.1 .3 2.8-4.2-.9 3.8 3.9 2.8-.2-2.4-2.8-.4 3M498.6 337.1l11.3 10.5-1.6-1.5-2-.6-2.1-1.9 .8-.5-3.2-3 1.6 1.5-1.9-.5-2-.4-.1-1.6-1.2-1.1-1.9-1.8 1.1 2.6 2 .3 .8-.5 9.7 9 1.6 1.5-1.8-.5-1.9-.3 2.1 2-.2-1.7 .2-1M498.6 337.1l-.4 .9-.8 .8 2.1 1.9 .7-2.1 1.6 1.5 6.5 6M500.2 338.6l-2-.6M501.8 340.1l-.3 1-.1 1.3 2-.8-.1 1.1 1.7 .4 1.3 2.4 .4-.9M501.8 340.1l-2.3 .6 1.9 1.7M503.4 341.6l1.6 1.5M511.5 349.1l14.6 13.4-.4 .9 1.3 1.3-.7 .8-1.5-1.4-2-1.8 1-.6 1 2.4-1.9 .1 2.3 2.2-3.9 1.9-3.1-2.8-6.3-1.7 1.8-2.4-5.2-.7-2.6-6.6 2.4-.9 2 5 1.8-1.5 .2-2.3 2.2 2.1 .3 2.7-4.5-1 3.4 3.2 4.5 4.1 .3 4.3-6.6-6-5.8-.5 2.4-2.6 1.8-2.5-4.4-4.1-2.4-2.2 .3-5.3 2.7 2.5-3 2.8-4-3.7 2.5-.8-2.1-2-.7-3.1-3.5 2.4-1.5 2.7-3.8-3.6 5.3 .9 3.8 3.5 .1 4.2 3.9-.5-.7 3.4-3.2 4.6-3.6 5.5M513.1 350.6l1.7 1.5 1.6 1.5-.2 1 1.1 1.1 2.3 .9-1.2 1.6-2-1.8-1.9 .1 1.7-1.9 1.8 .5-.7 .6 1.1 2.5 1.5 1.5 1.3-1.6-1.6-1.5-1.6-1.5-1.6-1.5-1.8-.4 .2-1.1-2-.6 .3-.9-1.8-.5 1.5 1.4 1 2.5-1.8-1.8-3.2-1-2.9-.2 2.4 2.2 4 1.2 1.5-.4 2.4 .6-1.6-1.4-1.8-1.7-.8 .7-3.7 1 3.8 3.5 2.7 2.5 2.7 .1-3.8 2.1M514.8 352.1l9.6 9-1.6-1.5-1.6-1.5-3.2-3 6.4 6 1.7 1.4-11.3-10.4M516.4 353.6l8 7.5-.6 .6 1.9 1.7-.9 .7 .4 2.3M519.6 356.6l-.1 1.2-1.1 .4-.9 1.1M521.2 358.1l3.2 3-2-.7 .4-.8-1.7-.3-1.2 .4M529.2 365.6l-.9 2 2.2 2.4-3.6-1.9 1 3.9 1.2 5.3-3.1 .8 2.9 4.1-7.2 0 4.3-4.1-3.1-3.8-1.6-6-2.8 1.5-10 0-2.4-6.5-2.4 1.4-4.1-4.8-4.7-1.4-8-2.5-6-6.8-1.2 4.9 7.2 1.9 1.8-5.4-2.8-6.2-1.7-6 6.6 1.7-.4 3.7M529.2 365.6l-2.9-.1M530.7 367.2l-1.5-.3 1.2 1.3-2.1-.6-1.4 .5-1.4 1.1M530.7 367.2l-.3 1 .1 1.8 1.1-.3 1.9 .9 1.3 1.8-.1 1.3 1.4 .5 1.3 1.8 1.1 1.8 1.2 1.9-1.4-.6M534.8 372.4l-2-1.2-.8 .8M534.8 372.4l-1.1 1.8 1-.5M539.7 379.7l-.2 1.4-1.2 .2 1.8 .9 1.7 1.4 1 1.9-.3 1.4-.5 1.5 1.2 2.8-.9 1.7-3.3-3.3 2.3-2.6-.4 2.3 2.3 1.9 1.5-1.7-.5 1.4 1.2 .7 .7 2.1-1.8 1.1 1.5 2.2 1.1 1-.3-2.1-1.2-1 .7-1.2-1.3-1.2-2.5 .4-1.5 1.2 .9 4.7-5.2 .9 0 7.8 5.3 .5 1.6 1.7 .3-3.4 1.5-.3 1.1-2.7 .9 1.3-.9 1.7 .8 .5-.9 .8-1.3 1.4-.3 2.4 2-.2 .3-2.2 .2-2.2 .1-2.2 0-2.2-.1-2.2-2 .2 .1 2.2 2-.2-.9 .9-1.1-.7 1.1-1.5 .8-.9-1-1.2 .8-1 .2 2.2M540.8 381.6l1 2M540.8 381.6l-.7 .6-2.7 .4 .1 3.8 1.5 3.2 1.8 4.5-3.6-2.9-1.4 4.8-7 6.3 3.2 7.3 1.6 8.1 3.9-1.4-2.5 5 1.4 2.2-2.5 3.5-3 3.2 1 1.6-1.9 1.8 .4 3-1.3 1.2-.7-.9-1.3 2.6 .8 .5-1.9 .3 .1 1.1-1.6-1.4 1.5-1.1 1.1 .6-1.1 .8-1.5-.3-.9 2.1-1 1.8-.6-.7-1.6 1.2-2.7 .4 2.4-1.6-2-2.5-5.3 .7 1.4-4.4 6.3-.8 .7-4.3-6-2.9 2.4-4.7 .5 1.9 6.2-4.1-6.7 2.2 1.9-4.7 7.4-3.1-2.6 5.6 4.5 2.6 3.8 .2-3.2 3.7 1.5 1.6-3.6 3.5 2.7-.1 2.7-.6 1.7 1.1-.3-.9-1.4-.2-.7 2.2-1-.6 1.7-1.6 2-2.1 1.3 1.6-1.6 1.6-1.6 1.6-1.6 1.5-.8-.6 1.6-1.4 .8 .5M542.8 385.5l-1.2-.4-1.8-1.2-.8 1.5 2.6-.3-.3 1.9 .7 1.4 1.2-.1 .6-.8 .9 2M542.8 385.5l1 2-1.3-.6-1.2 .1M546.1 393.7l.5 2.2-.8 1.1-2.5-.3-1.6 2.1 .3 3.9-2.4-1.4 .1 3.5-3.2 2.7-7.7-5.2-3.4-3.2-4 6.5-6.9-.4-4.1-3.4 5.5-1.8-1.4 5.2 3.9 9.1-4.5 4.1-4.8-.9-8.9 .8 2.2-5.2-1.4-4.8-8.8-.9-1.9 6.7 2.1 .9 7.8 3.3 8.2 2.6 .7-3.4-2.4-9.4 5.6 3.7 2.2-6.6-7.8 2.9-5.7 .2 .9-8.9 6.7-3.7-.1-5.1-3-5.3 .5-9.7 5.9-1.4-3.4-4.4 3.4-6-3.4-3.1-5.7-5.4 3.1-1.2 0-3.1M547.2 402.4l-.9-1.3-1.2-.7 1-1.4-1.3-1.3 1-.7-.4-2.1-1.1-.1-2-1.9-1.4-3.6 1.1-.9M547.2 404.6l-2 1.4 1 1.6 .1-1.3-1.1-.3-1.4-2.8 2.5 .1M546.9 409l-2 0-1.5 .7-2.3 2.5 3.1 1.1 1.2-.5 1.2-1.6-.4 2.1-.5 2.2-.9-.5-1.6 1.6 1 .4-.8 2.1 1.6-1.5 .7-2.1-1.5 1.5 .8 .6-.8 2-.9 2-1.4 .9-.7-1.1-2.4 1.6 1.4-2.8-1.2-1.6 1-2.6 1.9 .2-2.9 2.4 3 1.1-1.8 .5 1 1.2 1.4-.5 .7 .7-1 2-1 1.9-1.2 1.9-1.6 .7 .3 1.1-1.9 .9-1.1 1.3-1.1-.5 2.2-.8-.1-1.6 2 .7-1.4 1.7-1.6 .5 .2 1.1 1.4-1.6-.5-.8-2.9-.5 2.8-1.1 1.2-1.6 1.8-.7 .9-1.6-.7-.9-3 2.1 2.8 .4 .2-2.5 2.3-.1-.4-1.1-1.9 1.2 1.2-2.3 .8-1.7 1.4-.6-.8 1.8-.7 1.6M546.9 409l-.7-1.4-2.5-1.3-4-1.5-3.2-5.1 3.1 1.6 2.1-2.5-3.1-3.9-2.8 1.1-2.8-6.6-.5-7.1 2.5 4.3 .6-3.6 1.9 3.4-.3 4.8-4.2-1.8-8.5-1.3 .9 11 .9 5.6 2.5-2.4 7.7-2.6 2.1-4.8M546.9 409l-1 .9-1-.9-1.2-2.7 .1-3.1 1.4-.6M546.6 411.2l-.7-1.3-1.3 1.5-3.5 .8 .7-4.2 1.9-1.7-1.7-3.6 1.6-3.7 1.2-1.3-1.5-1 .3 2.3 1.5 1.4-3.1 2.3-2.3 2.1 2.1 3.2-2.9 3.8-3.3 .8 1.9 3.7 1.5 2.3-4 2.7-6.2 3.4-3.9 4-3.7 3.2 3.8 .7-.1-3.9 4.5-.1 4.5-1.6-1.3-2.1 2.4-3.6 3.8 1.7-1.8 2.8-.2 2.7 1.7-.4-.5-1.2 2.1 .5-1.3 1.8M546.2 413.3l-1.4 1.7-.6 2M546.2 413.3l-.8-.5-.8-1.4-1.2-1.7M544.2 419.6l-.8-.5-.2-2.5-1.3-.4 .7-2.2-2.6 2 1.1-3.8-2.2-.4-2.4-4.3-4.5 2.1 3.6 3-2 5.1-4.8 7-1.9-8.2 6.7 1.2 1.4 3.6M544.2 419.6l-1.6 1.3-.6-1.2 1.2-3.1-.6-2.6-1.5-1.8M542.3 423.6l-1.6 1 .6 .9-1.5 .7 .3 1.2M536 432.5l-1.9 .7 .6-2.3-.7-1.3-3.1 .6-.9 3.4-2.7 2.5-1.3 2.8 2.4-2-1.1-.8 0-2.4-2.3-1.1-.7 3.6-2.4 1.8-.1 2.3 1.9-1.4 2.3 0 0 1.4M534.4 434.1l-2.4 1.1-.8 2-1.6 1.4 .8-2-2 .3 1.6-3.3 1 1-.6 2M529.6 438.6l-.5-.8-1.2 2.2-1.8 1.4-1.7 1.3 .1-2.7-2.7 .3-4.2-2-3.4-1.3-3.2-4.6-5.3-.6-3.8-1.8-5.9 4.6-2.7 3.5-6.9 2.1-5.8-2.2 5.9-3.6 2.9-4.3-4.3-6.4 8.2-1.2-3.9 7.6 3.8 3.6 1.5-7.4 1.3 8.3 .9 9.5 .1 5.3-4-2.1-2.9-3 6.8-.2 2.2 2.8 4.9-4.3 .1 3.1 2.7 1.5-1.5 2.4 1.6 2.1 1.7-.6-1.4-.7-.4-3.2 3.5-1.7 1.9 2.6-2.5 1.3-2.5 1-.3 1.3-2.8-.2-1.9 .4-2.2 1.5-1.3-.9-2.1 .1-.5 1.2 1.5-.1 1.1 .8 1.3-1.1 .9 .8 2.1-.4 2.2-.6-1-.6-.1-1.1 1.2-1.9-2.9 .8-3.6 .6-3.1 .3-3.1 .1-3.5-.1 .7 2.6 .1 .9-2.2-.1 2.1-.8 1.6-1.1 .7 2 2.2 0 2.2-.1 2.2-.2 2.2-.3 1.2-1.2 .1-1.1 2 .7-1.2 1.2-.9-.8-2.1 .4-1.2-2.4 3.5-2.4 1.8-2.9-5 1.2-.3 4.1-.1 1.5-1.1 1.2-1-1.1-.9-1.3-1.5 1.5-.1 1.1-2.7-1.1 1.2-1.4 1.6 1.4-2.8 0-.2 1.1-1.3 .9 2.2 0 2-.9 .2 .9 1.8-1 .4 .9 1.1-1M529.6 438.6l-1.7 1.4M524.4 442.7l-1.8 1.2-1.8 1.3-.4-.8-1.7 1.1-2 1.2 1-1.9 1 .7 2.1-.3-1.9 1.2-2.2 .3-1.4-.4-1.7-2.7 1.8 1 2.9-1.9 1.8 .5 .3 1.2 2.2-.5M524.4 442.7l-.8-.6-1.6 1.1-1.9 0 2-1.4-.3-1.5-3.7 .4-.5-2.4 4.3-.3 1.8 .9 .8 1.1M518.9 446.4l-.2-.9M518.9 446.4l-1.8 1.2-1.9 1.1-1.9 1.1-2 1-.3-.8-1.7 1.7-2 .8-2.1 .7 1.7-1.5 .4 .8 1.3-1.4 1.1-1.7 1.3 .6 1.2-1.9 2.8-.3 .2 .9M517.1 447.6l-2.1 .2-1.7 2-1-.5-.1-1.2 .2-1.7 2.9-.1-.3 1.5-2.6-1.4-2.1-.9-1.4 2.7 .8 1.2-.4 2.3-.7-.6M517.1 447.6l-.4-.9-1.3-2.1 2.3 .2 .6-2.1-.2-2-2.7 3.9-.1 1.7M513.3 449.8l-1.1-1.7-3.3 .1-2.1-1 1.6-3.3-4.4-1.3-8-8 9.7-2.8 2.7 8.7 2.6-8.1 4.2-3.4-6.8-8.1-1.6 10.3-3.1-7.8-1.8 6.6-6.4-6.6-.8 2.9-1.4-3.8 2.2 .9 8.2 0 4.7-2.5 9.2 3.4-3.7-5.9-1.6-6.6-3.2 5.7-6.7-4.4 4.3-5-4.8-8.7 8.5 2.4-1.8-6.1-3-4.7 2.9-.4 6.7 4.4 3.1 1.8 3.1 8.8-3 8.7-6.1-2.5M511.3 450.8l-2 .9M511.3 450.8l1-1.5-1.3 .7M505.2 453.2l-1.1-1.7-1.7-1.1-.1-1.8-3.2-1.7-2.1 2.5 1.8 1.6 3.4 .9 .2-1.5M498.7 454.5l0-2M492.1 454.8l-.9-.9-1.4 0-1.4-1.2-.9 1.1-2 .7-2.2-.3 1.9-.7 .5-1 2.9-3-.2-2.3-4.4-3.6-5.2-1.6-2.4 2.3 1 2.9 2.2 .7 .7 3.6-.2 1.1 2.6-.6-1.5 1.8 2.1 .4-.7-1 .1-1.2-.5-1.5 2.1 .4 1.4 1.6 1.8 1.3-2.3-.3-.9-2.6 .7-1.7-1-5.6 6.1 .7-3.7-4.1 .1-5.8-5.6-4.4-1.6-9.5-6.1 2.8-5-8.1-6.7 1.6-2.3 3-1.1 4.4-2.5 2.6-1.6-1.4-.2 2.3 .9-.2-.7-2.1 2-2-.8-2.9-1.3 .7-1.6-1.9-.4 2.1-.6-2.1 .5-1.9-.9-.3-.4-2.1 .5-2 .4 2.1-.5 2 1.7-1.2 1.7 .9-1.3 .7 2.2 3-2.9-1.2-1 0-.4-2.2M487.7 454.7l-2.2-.2-.3-1-2.6-.3-1.4 .6-2.2-.6-2.1-.6-2-.8 1.5-1.6 .4 1.3-1.9 .3 0-2.2-2.7 0-1.3 .3-1.8-1.2 .9-1.8 .5 1.7-1.4 .1-1.8-1.3-.5-1.5 .4-1.1 1.5 2.6 1.3-.5-.5-2-2.3-.1 2-2.5 .4-2.7 3.9-.6-5-5.1 9.9 2-4.9 3.1-.5 3.3-3.8 0-2.7-2.6 3.1-.1-3.8-4.3-2.4-4.2 3.1-.6-3.1-7.2 7 3.6-1.9 7 1.1 5.7 3.4 2.7 5.8-.3 2.5 4.1 .9 4.4-1.9 1-1.5 .7-.9-2.9 2.4 2.2 2.4 .5 1.6-1.1M487.7 454.7l-.2-.9 2.3 .1M481.2 453.8l-1.1-1.2-1.3-.4-2-.7 .1 1.1 1.9-.4 .2 1 1.1-.6M474.9 451.8l-.8-1.3-1.2 .4-.7-1.3-1.7-1 1.8-.2 1.2-3 2 3-3.2 0-.1 1.2 1.9 .9 .8-.9 .6-1.2 1.9-1.2 3.9-1.1 2.7-2.5 2.4-3.4M474.9 451.8l-2-.9-2-1-.4-1.3 .9-2.4 .9 2.2 2.6 1.2 1.5 .6-.9-1.8 .9-4.1 4.9 1.8-1.7 1.8 2.6 2.6 2.8-1.3 3.4-2 4.6 .1 3.9-3.2 7.1-1.5 1.7-10.8 1.1-.6 4.2 1.2M469.1 448.7l-.4-1.3-1.9-1.5-1.6-1.5 2 .4-1.1-2.9-2.4-.5-1.9-.5 2.2-1.4-2.9 .4-1.5-.4 1.4 1.8 .8-.4 .6 2 1.3-1.5 .2 1.8 1.3-.2 0 1.4-1.3-1.2-1.5-.3-1.4-1.6 .1-1.4 .3-1.4 .3-2.1-2 1.5-1.3-.2 1.4-1.6 1.6-3.7-2.6-1.4-1.2 .7 .9 2-1.2 2.1 0-2 1.2-.1 0 2.4 1.3 0 3.1-1.1 .5-3.9-2.4-5.6-2.9-1.3-2.1-.8-2.1-2.2 .7 2.5 1.4-.3 3.2-3.6-1-4.1-2.5-.7 .9 4.1 1.6-3.4-.7-4.2-2.5-.9M467.3 447.4l-1.7-1.4-1.6-1.5 1.2-.1 .4 1.6 1.2-.1M467.3 447.4l1.4 0 .8-2.5-.3-2.6-3.1-.4-.9 1.1-1.5-1.6 .3-1.9-2.6-1-1.7-.6-.1 1.6-1.2-1.8-1.1-1.9-1-2 .3-1.5 .7 1.5-1 0-.9-2 1.2 .5M464 444.5l-.1-1.3M464 444.5l-1.6-1.6M459.6 439.5l1.8-1M458.4 437.7l.1-1.6-1.2-.3M455.4 431.8l.3-1.5 .5-1.9-1.6 1.4 .1-2.3 1.5 .9-.6-1.6 1.9 .9 2 .3 1.5-2.5M455.4 431.8l-.8-2M453.1 425.6l-.6-2.1 .3-2 1.1-.3-.4 2.8 1.1-.3-.6 1.7-.5-1.4-1-.5-.6-2.1 .9 .1M453.1 425.6l.9-.2M449.8 410.6l1 .5 1.3 1.9 .5 2.9-.8 1.5 1.2 .1M449.5 408.4l1 .3 .9-1.6 1.7 2.6 1.5-3.3M449.5 408.4l1.9-1.3M449.3 406.2l-.1-2.2 1 1.8-.9 .4M449 401.8l0-2.2 .9 .1 1.1 .9 1.5 2.1-.1-3.7-1.4-.9 1.4-1.6-1.4-1.4 .1-2.4 .1-1.9 1.5-1.3-2.4-1.3 .2-2.2 1.2-1.5 .4-2.8-1-1.6 2.5 .7-.5 3.7-1-2.8-1.2 .5-.3 2.3-.1 1.5-1 .5-.1 2.1 .9-.4 1.2-.8M449 401.8l.9-.1 1.3 2-1.1 .1-1.1-2M449 399.6l-.1-2.2 .9-.4-.8-1.8 .9 .5 1.1-.6-2 .1-.1 2.2 1 2.3 0 2 1.1-1.1M448.9 397.4l2.1 .7-1.2-1.1 1.2-1.9 3.2-1.3 2.3 2.3 3 3.7 .2 4.2-5.4-.8 2.2-4-2.3-1.4 2.3-1.7M449 395.2l.1-2.2M449.2 390.8l.9 .3M449.2 390.8l.8 1.7 1.1 .2 1.4 0-1.3-1.9-1.8-2.2M449.8 384.3l.8 .2 1.1 0-.8-2.3 .2-2.1-.6-2.4 .3-2.2 1-.2 2.6-.5-1.7 2 1.2 1.4-1.5 .9 1.2 1.7 1.9-.7 .5-4.2 1.9 3.6 3.1-.6-3.6 4.8 .5-4.2-2.4 .6-1.6-1.9 .5-3.4-2.3-1.2 .5-2.4-.9 0 1.3-1.8-.9-.4 .6-2.1 .3 2.5-.4 1.8 .7 1.8 2-2.6 1.7 .9 .9-3.5 2.3 .4-1.3-3.4-1.8-.2-.8-2 1.8-.8 1.4-3.3-.9-1.4 2.4-1.8-1.1-.8 1-1.9-1.3-1.9 1.1-.1 2.3 1.1-.5 4.7 1.2 2.9 2.3 2-2.3 6-4.8-2.5 3.1-1.6-1-3.6-1.5-1.1-1.9 1 .5 2.3 2.9-2.2 2.7-.3 2.4-4.8-3.6 1.9-3 2.1 1.5-3.2 1.5 1.1-1.5 3.2M450 382.1l.3-2.2 .2-2.2 1.9 1.4-.9-1.8 .3-2-.6-1.9 .9 .2-.3 1.7 .9 1.5-1.2 .5-1 .4M450 382.1l1.1-2 1.3-1 .3-2.3M450.3 379.9l.8 .2M450.8 375.5l.4-2.1 .5-2.2 .4 2.4 1.2-.6 3.7-1.7 1.6 3.3-2.6 1.3-1.6-1.1 2.6-3.5 4.9 2.1-3.3 1.2-4.2 .2-1.1-1.8 .6-2.7 .8-2.9-2-.5 1.1-.6-.4-1.5 1.6-1.7 .7-2.1 1-2.3-1 0 0 2.3 1.9-1.5 1-2.4-2-.5 1-1.9 1.2-.4-1 1.9-1.2 .4 .1 2.1 .9 .8M450.8 375.5l.7 1.8M451.7 371.2l.4-2.2M452.7 366.9l.7-2.1 .7-2.1 .8-2 .8 .3 .6 1.6-1.3 .5-.7 2-.5 1.2 1.6-1.3 1.7-.4-.9 2.8 1.7 .4-.8-3.2 1-2.8 .8 3-1 3-2.6 2.6 .9-3-.8-2.4-.4-1.9-.9-.4M453.4 364.8l.9 .3 1.1-.1 .9-2.4M454.9 360.7l.1 2.4M454.9 360.7l.8-2 .9-2.1M457.6 354.7l1-2 .2 1.6 1.1 .2-2.1 1.7-.2-1.5M458.6 352.7l1-2-.2 2.3 .5 1.5-1.3 2.6-.8-.9M458.6 352.7l.8 .3 1.5-.4-.2-2 0-1.8-1.1 1.9M460.7 348.8l1.6 1.3 .7 1.6M460.7 348.8l1.2-.1 0-1.7 1.2-1.8 1.2 1.8 2.3 2.3 2.3 .8 2.4-3.3 1.1-4.8-2.8-1.6 .1-1.8-.8 .9-.2-1.2-1.4 1.7-1.5 1.7 .1 1.3-1.4 .4 0 1.5-1.4 .3M460.7 348.8l1.2-1.8 1.2-.2M467.3 340l-.3 1.7 2.3 1.1 .1 2.8-.5 4.5 3.8-.1 4.3-5.2 .3 7.6-4.6-2.4-3.6 5.2M467.3 340l2.3 .4-.7-.9-1.6 .5M468.7 338.3l1.5-1.6-.5 1.9 1.4-1.6 .6-1.9 1.5-1.5 1.2 .1 .4 1.1-1.5 0-1.6 .3M468.7 338.3l1 .3 1.4 .1-1.5 1.7-2.6 1.3 .4 1.2-1.5 .1-1.4 1.9-.2 2.1M474.8 332l1.7-1.4 1.6 0 1 2.3 .7-2.2-1.7-.1-1.3 2.4M476.5 330.6l-.1 1.3 1.7-1.3 .2-1.3-1.8 1.3M478.3 329.3l1.8 0M474.4 333.7l-1.1 1.1M471.1 337l2-.4M471.1 337l0 1.7M465.9 343l-.6 2.6-.8-.7M461.9 348.7l.4 1.4 2.4-1.2M460.7 350.6l1.6-.5M459.4 353l-.6 1.3M456.7 358.7l1.9-1.6M455.7 361l2.4 .8 3.9 1.4 4-1.9 4.5 3.1 10.2 1.5 6 .9-1.1-7.9-5.9-4.8 1.2 6.9 5.8 5.8 6.7-.1-4.6 4.7-.1 4.4 4.8 8.5 4.1 2.7-6.2 .2-6.6 3.7-7.1 0-1.8 5.4-5.5-5.6-3.7-9-6.6 4.6-5.2-.8-1.8-1 4.3-.8-1.9-3.6M453.8 366.3l.9 1.1 .7-2.4M453 369.4l.9 .9-1.3 .9M453 369.4l1.7-2 .6 3-1.4-.1M449.9 395.7l-.1 1.3 2.6-.5 0 2.5 1.9 4.2-1.8-.5 .3 3.8M450.1 403.8l.1 2 1-2.1M450.8 411.1l2.7 1.4-1.4 .5-1.1 0M451.4 415.1l.7-2.1M451.8 417.4l.5 1.9M454.7 427.5l.9-.7 .4-3.4M457.3 433.8l.3-2.1 2 1.1-1.1 .9 1.3 2.4 1.9 .3 1.2-1.4 1.1 4.5 2.5 .2-.7-4.4-2.9-.3-1.5-2.6-1.8 .4 .2 3.3-.1 1.8M461.1 439.9l.7 1M476.8 451.5l1.1-2.2 1.7-1.4M485.2 453.5l-2.5-1.5M494.1 453.9l2-.1-1.9-1 2.4-.2 2.2-1.6M502.1 453l2.1-.4M515 447.8l1.7-1.1M522 443.2l.1-1.4 1.5 .3-1.8-1.8-1.7 2.9M527.1 439.5l2-1.7M544.8 415l-.6-1.7 .4-1.9M544.8 415l.6-2.2M544.8 415l-2.2-1 1.6-.7M546.1 399l-2.5 0-1.9-.2M546.1 399l-.3-2M544.8 392.5l-1.6-1.3 1-.3 .6 1.6M543.2 388.3l0 2.9M537.2 377.4l-3.4-.5M536 375.6l-.8 .7M522.4 360.4l.4 1.9-1.4 3-.1 3M517.3 355.7l-.9 .7-.2-1.8M514.6 353.2l-.8 .8 .7 2.5-2.4 .2M511.3 350.1l-1.4 .2-1.1 .9-.5 2M507.6 346.7l.2 1.6-1.3 .8M507.6 346.7l-1.3-1.2M504.2 343.6l-.4 1 1.9 1.8M504.2 343.6l-.9-.9 .5 1.9 0 2-1.8 .8M485 329.4l-3.2 1.9M474.8 334.8l-1 3-1.9 2.1 3.7-1.3-.2 3.5-3-.1 4.6 2.8 3.9 4.4-3.6 3.2M469.6 340.4l-.3 2.4M469.6 340.4l2.3-.5 3.5 2.2 1.6 2.7 2.3-2.4 6.6 2 4.9-4.3-4.1-3.6M467.4 342.9l2 2.7 3-3.6M454.7 367.4l1.5 0M452.1 381.7l1.5-.9 .3-2.6 2.1-2.3M465.2 443l2 1.8M470 446.9l1.4-.7 2.1-.8 2.9-1.1-3.4-2-3.5 2.6 1.9 1.3 1.6-3.9 .5 3.1M476.4 450.2l1.5-.9-.5-2.1M485.7 452.5l3.4-1.2 2.3 1.5M485.7 452.5l-.7-3.3 3.6 .3 4.4-2.2-.4 4.1 1.3-1.8 1.8 1.7 1.3-1.9-3.1 .2-.9-2.3M485.7 452.5l2.7 .2 .7-1.4-.5-1.8 4 1.9M507.2 450.4l-1.9-.8-1.2-3.9 4.3-1.8 0-3.4 5.8-3.5 1-8 2.9-2.8 3.1 5.7-7 5.1M507.2 450.4l1.7-2.2M526 438.9l-1.7-2.7-3.8 0 1.4 1.8M532.7 433l-.8-1.2 2.8-.9M536.8 428.5l-2.9-1.5 .1 2.6-2.1 2.2M538 426.9l-1-1.1-.6-2.3 2.4-.5 1.2 .7M542 419.7l-.1-3.5M545.1 400.4l-1.3 2.8-1.8-.5M544.3 394.8l-3.5-.7M539.8 383.9l-2.4-1.3-1.1-1.9 1-1.1M538.3 381.3l-.9 1.3M530.5 370l-.6 1.5M522.8 362.3l.1 1.9-1.5 1.1-3.2 .2 .6-2.6 .4-2M512 352.2l.3 2.2M499.5 340.7l-.3 1.6M499.5 340.7l-3.2 1.4-3.2-2.9 2.9 .1-1.9-1.7-1 1.6M497.4 338.8l-2-1.9 .6 2.4M479.1 332.9l-2.4 2.1 3.2 2.6-4.3 1M466.8 345.9l2.1 4.2-4.2 2.1 1.4 2.3M453.6 380.8l3.8 2.9M452.7 389.5l-.2 3.2 1.7 1.1-1.8 2.7 1.8 1.3M452.4 399l4.1 .2 3 .6 4.5-4 9.2 4.5 3.8-1.9 6.3-2.5-7.4 .4-2.7 4-2.2 5.2-11.3-1.5 1.1 8.9M453.1 409.7l.4 2.8 2.2 2.5-1.4 1.8 2.3 2.3-1.4 1.4-.9-3.7M453.5 412.5l4-1M455.2 420.5l4-.7 4.2 3.5 9.8 0 1.9-5.3 5.6-.5-1-3.5-4.6 4-6.9-2.8-2.1-2-4.6 3.6 1.9 6.5 4.8-8.1 3-6 3.9 8.8 4.2 2.5 5.8 3.2 3.1-6.4-8.5-3.3 4.7-4.4 3.8 7.7 5.1 5.2 6.9-4.2 3.5 5.1M457.5 427.7l.6-3.5M458.8 431l.8 1.8M461.7 436.4l2.3 3.1 1.8-4.2M464 439.5l2.1 2.4 .4-2.2M475.5 448.4l2.4 .9M505.3 449.6l-3-1M512.4 446.4l1.2-2.8-.8-2.2-4.4-.9-4.4 2.1M523.7 438.9l.6-2.7 3-2.5 2.1-5.1-.6-3.9M527.3 436.1l-3 .1-3.1-4.3M537 425.8l-3.1 1.2M538.8 423l.2-4.4M540.9 389.3l-1.9 .3-1.8 1.6M539 385.4l-1.5 1M536.3 380.7l-3.8 1.6 3.1 .7M494.1 337.6l-2.4-2.1-1.9 .6M482.8 332.8l-3.5 2.3M466.6 349.3l-1.9 2.9-2.2 4.2M457 371.3l3.2-3.1M454.3 403.2l2.5 2.8M456.6 419.1l2.6 .7M459.5 428l1.9 4.4 2-1.3-3.9-3.1M485 449.2l-3.7-3.1M510.3 445.5l2.5-4.1-4.4 2.5 1.9 1.6 3.3-1.9 4.5-2.9M536.4 423.5l-3.8 1.4M540 416l-2.5 .3 1.4-4.5 1.1 4.2M532.3 377.9l-3.2-.6M499.9 345.4l-4.2-.7 .6-2.6M499.9 345.4l-.4 2.8-5.3-.8-3.2 6.8-2.3-3.6-7.8-1.4M475.4 342.1l3.9 .3M471.3 346.8l5.7-2M458.6 374.6l-.7 4.9M458.6 374.6l2.4 4.3 6.3-4.3 2.3 2.4 6.1 7.2-5.3 6.5M456.8 389.5l3.3-3.2-.5 6.7-.1 6.8M488.4 447.2l1.7-2.9 3.2-6.2-6.8-3.7 6.7-.7 .1 4.4 3.6 6M512.8 441.4l4.8-3.1 2.9-2.1M525 432.6l4.4-4M535 386.6l-2 2.8-4.1-7.2M463.7 367.3l3.6 7.3 3.2-10.2 2.6-4.8 7.6 6.3-7.5 6.4 4.4 3.7 6.6 1.8M463.7 367.3l6.8-2.9 2.7 7.9-5.9 2.3M463.7 367.3l-1.8 6.1-.9 5.5 5.7 2.8-.2 8.9M461 378.9l-.9 7.4M459.7 404l6.4 9.2 5.1-4 8.5 4.8M468.5 433.9l6.6-7.7 3.3 9.7 2.5-5.9-5.8-3.8-4.7 .7M473.5 439l5.3 3 1.8-4-2.2-2.1 .4 6.1M484 443.6l-3.4-5.6 .3-8 8.5 .1 5.3-3.8 7.2 3.7 4.9 1.2 8.4-2.2M524.9 428.7l-6.8-2.5M524.9 428.7l-.6-6.6-4.8-2.5 3.1-7.6-1.2-6.4-5.5-5.6 2.4-3.2 7.1 2.3 3.9-6.3-4.8-4.7-7.5 2-8.5 .5 4.6-6.1-7.6 .8M535.6 412.6l.9-5.1M536.5 399.7l-.7-3.7-6.5-3.2 3.7-3.4M522.9 374.3l-1.2 7.9M522.9 374.3l-8.1 3.8-1.7 6.4-7.1-8.9-4.2-2.7-9.1 1.8 5 2.3 1.6 8.1 6.7-9.5 6.9 .4 .2 8.5M502.8 355.3l-3.2-2.9-8.6 1.8 3.9 4.3M493.4 366.7l8.4 6.2 1.9-8.2M501.8 372.9l6.7-3.1M469.6 377l-2.9 4.7M497.7 377l-4.2 7.3M512.9 376l1.9 2.1M483.5 382.4l1.3 8.5 2.4-4.7M517 390.1l-1.8 4.9-6.6 .7 7.3 4.3-.7-5M517 390.1l1.3 6.7 6.2-8.7M466.4 392.7l6.8 7.6 9.4 4.8-10 2.5M475.9 396.3l1.1 2.1 5.6 6.7 .7-9.2M493.6 392.6l-4.8 7.1-2.9 7.7M493.6 392.6l9.2 .9 5.8 2.2M529.3 392.8l-.5 9.5M488.8 399.7l-6.2 5.4M510.4 401.8l-3.7 6.3M521.4 405.6l4.9-.9-3.7 7.3 4.3 4.5 5.1-6.9-9.4 2.4-4.2 2.3 1.1 5.3-5.6-1.2-5.5 2.5M526.3 404.7l5.7 4.9M484.4 409.6l5.9 4.5 4.9-3-2.8 3.9 .9 7.5M495.2 411.1l5 7.2-4.7 5.1M495.2 411.1l7.2 2M480.7 417.5l4.4 6.2-4.2 6.3M488.2 417.3l4.2-2.3M493.2 433.7l2.8 .9" fill="none" stroke="#111" stroke-width="1.0" stroke-opacity=".9"/><path d="M481.4 331.5l-.7 3.4 5.5-2.9-1.7-4.6 5 1.8 0 3.5 4.3 0-4.3-3.5-3.3 2.8 3.3 .7 2.7 5.5-.8 2.1-.4 7.8-2.6 4.3-1.4 5-4.6 3.9-3.6 .6-4.1-7.6 3.3-3.2-8.7-2-4.1 4.5-1.5 2.9 6.4 3.9-2.8 6.8 4.5 1 3.1-2.9-2.7-4.1-1.6 2.5-3.3 3.5-7.3-2.1 1.9-6.1-6.3 0-2 5.2 2.1 2.3 1.3-3.6 4.9-3.9 1.8-2.5-5.8-2.5 2.6-4.9 3.1-4.6 2.2 2.4 3.5 .5 9-1.3 2-1.1 1-4.5 1.8-.5-2.4-5.1-5.9-2.8 3 4.4-5.9 1.5-1.1-2-3.7 4.2 3.3 1.8 2.6-.2-1.1-3.8-4.8 2.2-1.3 6.7 3.5 2.2 4.5 4.5 4.2-2.5 4.8 .5 5.3-7.3-.3-5.6-7.1-3.8-2.9 1.6 3.5 4-8.3 1.3-3.7 5.6 0 1.7 3.9 5.7-1 6.4-2.1-.8-4.9-6.8 .6-6.7-5.3 2.2 4.7 4.5-7.3 .4 4 5 8.2 1.4 3.1-5.6 .6-1.2 .9 .7-2.5 6.9 6.6 .7 1.4 4.7 4.2 2.7-2.8-.4-.1 4.6 1.8 7-1.3 2.4 .6 7.8 6.2-2.1-1.6 4.3 5.5 1.2-.2 7.4 1.3 3 2.4 .5-1.6 4.2 6.2-2.2 5.3 1 5.1 .3-1.2-4.6-3.9 4.3-2.2-2.5 6.1-1.8 6.6-4.1-.2 6 2.1 3.2-4.1 5 7.9 1.7 1.8-2.7 1.6 5.1-1.6 5.3-5.8 1.3 4.1 1.3 3.9 7.1 6.4 2.9 3.9-4 3.4-4.3-4.7-2.9 6.1-6.4 1.4 4.5 2.2-5.1-3.6 .6-4.9-5.7 3-6 5.8-1.1-8.6-5.3 10.5 1.1-.1 5.5-.7 5.5-1.1-6.8 1.8 1.3M481.4 331.5l-2.2-2.7 5.3-1.4-3.1 4.1-6.6 .6-4 3.9M481.4 331.5l4.8 .5 1.6 6.7 1.7-6M471.9 338l-1.5 4-1.1 5.4M471.9 338l2.9-5.9 4.4-3.3M477.8 336.5l-4.8 5.3 7.3 3.2 2.8-5 5 4.3 2.9 3.8 6.5-5.3 .4-6.3 12.2 11.3-4.1-3.8-4-3.7 2.1 5.2 2.7 4.6-4.4 1.4-8-2.4 4.5 6.9 .7 2.8 3.1 6.1-5 4.6-9.5-4 2.5-2 6.8-1.5-7-.2-8.1-.5 5.8 4.2 .9 7.3-4.7-3.5-2.9 4.2 7.8 3.3 3.5 2.3 2 6.6 6-2.9 3.3 2.1-2.8-4.6-1.5-5.5 1.8-2.1-3.9-3.2-8.6 3.3 4.8 1.8-4.6 2.2-6 3.7-5-2.9-3.6 2.8-4.5-1.2 4.4-4 .1 5.2 .3 2.7-3.7 1.4 4 4.3-7.6 3 2.6 3.2 3.9 6.1 4.6-4.3 2 1.9-6.2 3 4.8 5.7 1.8 8.1 4.3-9.1-3-.9 4.2-4.6 .9 2.6 .9 3.2 3.5 4.7-1.9 6.4 7.3-5.2-2.5 7.4 5.4 2.4 2.8-4.2 3-1.5 5.8 3.7 3 .7-3.6 7-.1 5.1-8.1 1.4 3.7 3.1-1.3 2.1-2.2-4.6-3.8-.9-3.5 4.8-6.2-4.1 4.7 4.9-5.7 4.3 4.7 4 6.9 1-2.6 2.8-4.1 2.8-1-5.2-2.6-1.5-1.3-3.9-6.2-6.3 4.6 7.6-7.5-1.2 2.9-6.4-2.8-2.9-3.6 4.8 3.5 4.5 1.1 4.6-3.6 3.8 5.4 1.4-1.8-5.2-7.9-1.6 2.5-7.6 1.6-9 1.5-3.6 5.7 6.6 6.6-2.4-1.2-4.9-3.5-.6-7.6 1.3 5.2-3.8 2.7-.4-.3 2.9-1.9 7.9-7.2-3 2.8 4.3-4.4 4.7-4.4-7.6 4.7-3.1 .2-6.4-3.9-5-1.4 2.7-6.3-1.9 3.7-3.4 4 2.6 .3-4.4 .9-6.7-.8-3.9-1.8 3.9-7.6 .3-7.2 5.7-2.6 4.1-3-2.9 1.1 5.5 1.9-2.6 5.1 .6-5.5 7.3 8.9-.8 5 6.1-2.6-8.4-5.8-4.2 2.4-1.4-4.9-3.3-6.3-4.3 2.5-1.9 2.9-2.1 5.4 1.5 7.2-3.1 4.9 0-5.8-5.2-.1-5.5-5.1-4.3 9.9-3.1-3.6 7.3-1.2 .1-1.7 5.6 2.7 5.1 3.1 3.9 2.6 0 6.2 .9-3.4 7.8-.1 7.4 3.5-5.1 4.3 5.8-.1-6.3 3.5-1.2 4.9-4.4 5.4 1.2 9-.3-.3 4.4 4.4-5.7 .7-2.7 7.3 .5 4.3-6.3 3.2 .6 4.7 3.8 4.6-2.1-.6 5.7 1.8 2-1.1 3.3-3.5-1.9-2.7 3.3 3 6.8-8.1-.8-5.5-3.9-.3 5.2 .5 4.8 3.7 3-8.8 1.4 2.7 4.7-3.3 1.2-1.9 4.6-3.6 .5-5.7 4.8 8.3-.2 4.6-.4 .5-5.8 1.1-4.7 6.6-2.5-4.1 6.8 .6 3.3 4.6-3.2 4.4-3.3 4.2-3.7 .5-4.5-2-3.3-8.8-2.2-3.6 3.5-5.1 4.4-.6 5.9-6.3-1.9 4.4-4.5 1.9 6.4 2.2 3.5-2.8 1.4-2.3 4.8 1-5.1-4.4-6.5-3.5-2.5-.2-.6-4-6.2-4.4-4.6 .7 4.6 3.7 0 1.2-6-5.6 1.4-4.6-6-3-2-1.6-9.4 3 .3 5.3-2.2 .8 4.7 2.8 3.4 5.7 5.6 3.3-5.9-5.6-5.3-4.6-2-2.5-3.5 3.4-8.4-4.4 1-6 6.8-5.9-2.2 1.7 6.8-3.1 1.9-7.1 5.8 3.7 2 3.4 2.3 4.2-.5 2.8 5.9 .7-7.1 1.4-9.1 6.1 2.5-2.6 2.2M480.7 334.9l.6 5.6M487.8 338.7l3.6 1.6-3.3 4-7.8 .7 2.5 6.6-4.5-5.5-.3 5 5.2 6.1 3.8 .2 7.3-2.9 .1-5.4 6.3-1.1 1.7 3.5 2.8 5.3 1.9 2.4-4.4 5.7 8.7 2.6-3.3 4.6-6.5 .6 3.9 4.1-5.7-2-5.9-.2 1 3.3 5.9 4.9 1.9 5.6-.2 4.3-.8 4.8 2.2 8-3.1 1.5 .9-9.5-4.6-4.4 5.6-4.7-8.8-.7-6.7-1.2 5.6-7.4 1.1-4.5 3.8-5.1-7-6 7.1 2.2 4.9-.8-5.2-2.9 2.1-3.2 5.6-2 5.9-.1 4 1 3.5 .6 3.7 .9 .8 4.2 2.3 2 5 1.4 3.5 4.3 3.2 4.5 1.8 6.4-3 6.5 0-5.4-2.1 3.3-4.1 5.7-1.5 8.7 2.7 1.1 4.4 2.9 1.4-4.7 2.8 6.4-4.2-1.7M487.8 338.7l4.4-.5 5.7-1.7 28.6 26.4-12.3-11.3 .9 6.1 2.7 5 4.2 5.6-3.7 .3-4.8-4.9-.5-4.3-1.9-2.7-4 2.5-7.5-.4-5.3-4.3 4.6 1.5 3.5-4.5 1.7-6-6.6-2.7 4.5-2.5 8.1 7.5-3.3 2.3 4.9 2.7 2.5-1.2-4.1-3.8 1.6 5 3.4 4.9-2.1 1.7-5.9-.2 6.4 4.5-1.2 5 4.6 7 1.4-7.1 3.3 8.1-.3 2.3 3.4 5 5.3-5.8-3.2-3.2-5.2 1.7-1.2 2.9-5.2 4.4 3.5 6.4-5.5-1.9-3.2-4.4-3.5 4.2 .8 5.2 6.1 3.5-7.2 4.6 1.1-8.1-4.8-.8-5.4 .4-3.2-5.4-1.2 6.4-3.9-5.5-1.6-2.1-5.2-3.6-2.9 8.2-3.8-2.3-5 6.2 8.8-3.9 3.5-.4 4.6 2.2-.5 8-4.9-4.8-3 .7-8.5-1.8-3.7 2.4-1.8 .1-4.5 8.2-3.1-4.3-2.3 2.8 .3 3-5.7 1 .7 5.5 5.6-1.2 4.5-6.8 2.7 1.1 5 8.2 2.6 5.3-6.5 1.1 7.6 2.6-.7 8.1-.9 6.9-6.8 4.9 4.1 3.6 4.7 3 .8-3.2-5.5 .2 2.7-8.5 1.3 .8-4 7.7M487.8 338.7l-4.7 1.3M492.2 338.2l1.6-5.5 4.1 3.8 4.1 3.8M492.2 338.2l5.3 4.6 3.2 5.2 3.4-2.5 1.9-1.5 .8 6.1-1.6 6.7-6.3-.8M470.4 342l-4.6 4.9M473 341.8l5.3 4.3-9 3M491.4 340.3l6.1 2.5-3.1 6.3-6 3.3-5.2 4.8-.8 4.1-2.2 5.3 1.4 2.3-7 6.3-5 1.5-3.6-3.9-6.2 2 4.3 3.5-.9 4-1.8 1.1-7.8 .3 1.7 8.6 2.9 2 8.3-2.4 4.8-7.4-8.1-2.2 7-3.1 1.1 5.3 3.4-4.1M488.1 344.3l.3 8.1-5.6-.8 .4 5.6-4.4 4.7-3.9 3.4-4.3-1.6 1.2 4.5 8.4-1.6 8-1.1-3.8 3.8M491 348.1l3.4 1M465.2 353.6l8 1.2 1.5-.5 8.5 2.9M488.4 352.4l5.9 2.1 3.2 7.5 .3 3.7-.1 3.8 2.1 5.3-4.9 3.1-.1 7.8 7.9 2.7 3.8-.1-4 4.4M511.7 352.8l-.6 3.9M511.7 352.8l-6.5 4M487 357.4l3.5 4.4 .2 1.7M494.3 354.5l-3.8 7.3-2.3 3.7M515.1 357.7l3.2-2.3 8.2 7.5-3.4 .5-1.1 4.9 4.8 6.7 2.9 .5 7.4 .1-7.1 2.6-8.7 .8-.9 .6 4.3 4.4 2.5 3.5-4-2.5 1.7 6.9-5.7 3.7 6.5 .9 4-4.4 9 2.6-.7 2.2 4.5-2.6 2.5-4 1.5 5.3-4-1.3-1.3-4.7-2.5 5.1 3.8-.4 4.7 6.9-9.2-4.3-8.3-4.8 6.2-3.6 6.8-3.3-3.8-3.2-3 1.1-2.7-1 .6 4.3 2.1 2.1 5.3 1.1 3.8 .7-2.3-5.1-1.5 4.4M518.6 358.3l-.3-2.9 4 3.8-4.5 3.5 5.3 .7M518.6 358.3l-.8 4.4 .5 5.9-6 .1-.9 5.5-2.4 4.7 2.7 .5 3.5 4.6-2 4.5 .4 4.5-.2 4 3.2 2.6 5.3 1.9 .9 1-1.2 8.5 2.5 1.8 7.8 1.1-1.2-7-6.6 5.9 5.1 4.4-3.5 .7-7.1 1.4-4.2-5.5 .5 7.3 3.7-1.8 3.7-3.8-.7-4.5-7.2 2.8-3.9-2.8-4.1 1.3-.3-4.3 4.4 3M457 362.9l3 2.2-4.3 1.4-3.7 3.1-1.1 5.4-.7 5.5 3.4 3.2 5.3-3.4 2.5 3.1 0 4.2-2.4 2.7-3.7 2-4.2 0 2-.6-3.5-5.7-.4 5.6 3.9 .1 .5-8 7.8 3.9 1.8-5.3-4.3-2-8.7 .2 6.6-6.1 2.1 5.9 5.2-2 1.9-5.5-2.4-4.1-5 .7-2.9-2.9M457 362.9l-1.4-3.9 2.3-5M457 362.9l-3.4 1.3-1.6 5.4 4.8 4.8 3 .4-1.2-5.4-6.6 .2M461.9 359l5.4 8.2 .4 2.9-4.1-1.4-3.6-3.6-1.4 4.3-1.8 5-5.9 .6M470.1 360.4l.5 3.3M507.1 359.2l4.3 8.3 2.1-3.8 4.3-1-4.8-3.3M467.3 367.2l-3.7 1.5-3.8 6.1-.9 5.5M474.9 365.3l5.3 1.3M502.7 364.9l5.4 7.2 4.2-3.4-.9-1.2M502.7 364.9l-1.1 7.8M525.4 365.4l1.4 9.6 3.6-8.2-.7 8.7 4.2-4.4M525.4 365.4l-3.4 2.9-.4 8.4-4.7-1-1.7 8.3-5.2 .1-5.9 .8 4.9-6 1 5.2 1.7-4.7-.3-5.2-5.9 2.6 3.5 2.1-7.7 1.4-.5 2.5M525.4 365.4l1.1-2.5-16.4-15.1M467.7 370.1l6.9 5.1-2.8-7 9.8 .7M467.7 370.1l4.1-1.9M467.7 370.1l1.9 6.6 .6 2.5-6.1-.9 5.5-1.6M467.7 370.1l-1.7 2.7M489.1 372.8l.2 4-2.1 9.7-3.9-6M489.1 372.8l-7.6 .7-3.2 4.1 3.7 5.3-6.7 5.9-.3-5.7 7-.2M508.1 372.1l3.3 2.1 5.5 1.5 3.5 3.9 2.8 5.4-4.5 5.4 6.2 1.5 2.3-4.4 2.5 4.6 1.2 9.8-.2 5 4 3.6-2.8 3.4 4.6-1.4 9.9-.3-1.4 5.4M508.1 372.1l-2.6 4.7-4.2 3.5-6.4-2.4-2.1 1.2M474.6 375.2l3.7 2.4-3.3 5.5M474.6 375.2l6.9-1.7M516.9 375.7l-5.2 3.7M526.8 375l-5.5 4M529.7 375.5l.3 2.7 3.2 3.9 3.9-6.5 3 4.8 2.6 4.8M533.2 382.1l-8.5 1.9-1.5 1-8-1M533.2 382.1l-6 5.4 6.6-1.1M538.9 382l1.2-1.6M453.6 383.7l5.4 6.6 7.5 1.6M453.6 383.7l-4 2.3 .6-5.5M487.2 386.5l-4.6 4.2-.8 5.4-2.7-5-.3 5.7-4.2 4.9-1.4 4.8M487.2 386.5l7.6-.8-.9 2-5.1 .9M504.1 384.9l2.4 3.4 6.7 .2-5.9 5-5.6 4-5.5 7.5M504.1 384.9l-1.4 3.5M535.9 383.1l1.2-7.5M453.1 391.7l2.2 .6-6.4 4.8 .2 5.6 .4 5.5M459 390.3l-.8 4-9.3 2.8 8.3 4.3-8.1 1.3 2.9 3.6 3.2 .9 .6 5.3 2.5 4.7 3.4 6.5 .8 5.5 4.2 2.5-3.6 5.9-3-5.4-3.2 2.7 6.2 2.7 .9 2.2-4.3-.2 3.6 4.3 .7-4.1 6.1-.8-7-1.4-3.4 2-2.8-4.7-2.3-5.1 7.1-6.1 2.4-2.3 .2-3-6-1.2-7 2 1.5 5.3 1.8 5.3 5.5 2.4 6.6-.5 0-1.9-4.2-.6-2.4 3M467.7 391.8l-1.1 5.6 .9 5.2-4.5 4.2-2.3 9 7.3-.8 4.3-1.8-1.7-6.7-2.6 8.5M518.7 390.4l.5 5.2 2.7 5.9-5.5 4.1-5.2 2.7 3.2 5.5-2.5 6.6-1.1 .9-8.7 1.8 5.4 5.6-8.4-.3 3-5.3-1.8-.7M518.7 390.4l-5.1 2.6 5.6 2.6-2.6 4M524.9 391.9l4.8 .2 7 8-5.8 1.8-4.9 1.2 2.2-2.3-5.4 1.7 2.9-6 2.5 4.3M524.9 391.9l.8 4.6-3.8 5M535.9 388.5l2.8 6.2M451.1 392.3l-1.9-.7-.3 5.5 2.2-4.8M458.2 394.3l6.6 3.2-7.6 3.9 1-7.1M470.3 395l2.1 7.6 2.2-.9-.4-.6-1.8 1.5M481.8 396.1l-1 2.6M481.8 396.1l5.4-3.2M492.7 394.1l1 7.4-1.2 0-4.9 2-2.1 2.9-6.1 1M507.3 393.5l6.3-.5M519.2 395.6l-5.8 1.4-3.4 6.7-3.8-2.1-4.5-4.1-8 4 .1 3-6.2-1-5.1 2-7.9-3.8M486.7 400.9l5.8 .6M506.2 401.6l-2.3 3.9M536.7 400.1l1.3-3.2M454.9 404.2l-5.8-1.5M460.3 405.7l-5.1 1.5M510 403.7l6.4 1.9 6.4-3.1M526 403.1l-4.4 7.9-3.1-2.2M526 403.1l-1.9 9.7M545.3 405.4l1.9-4.2-.7-5.6M500.8 407l-3.4 5.6M534.7 410.5l4.8-4 6.9 5.7-5 6-6-2.4-.1 8.8-3.1-.6 1.6 4-2.6 0 1-4 3.2-8.2-6.2 1.4-5.1 6 7.1 4.8-4.9 4.9-3.8-.6-.1-6.5 1.7-2.6M460.7 415.8l3.6 2.6M476 415.2l-4 2.4M476 415.2l5.2 .3 2.4 1.5M481.2 415.5l-1.8 2M481.2 415.5l5.9 .3M514.4 413.8l-8.3 2.9 4.7 4.6-7.7-3.1-8.2 1.8-.2 3.8-5.1 2.6 5.8 2 4.1 5.9-9.7 .7 1-3.7 4.6-2.9M522.3 415.5l3.4 2.4M470.6 420.3l5.3 2.3 7.8 .7 2.4 2.5 4.7 5.5 8.7 3-.2 7.3 2.6 7.9 2.8 3.9 5.2-1.9 .3-2.2-5.5 4.1-5.5 1-5.5 .4-5.6-.1-3.6-5 2.7-4.2-6.4 3.4 3.7 .8 5 1.8-1.4 3.2-5.5-.6 1.9-4.4 5.6-1.6-.6 3.4 4.2 3.3M470.6 420.3l1.1 3.7 4 5 1.3 1.7-6 1.4 .4 7.7 4-.1 .8 .1 6.4-1.9 5.9-.2 6 2.2 4.8 1.7 8.3 3.1-2.1-4.9-6.2 1.8-3.3-2.5-1.5 .8-1 8.3 4.3 3.8 1.4 2.4 1.2-5.2-1.1-7.6 4-6.4M490.1 417.8l-3.7 5.1 3.2 3.5M490.1 417.8l4.8 2.2M503.1 418.2l-1 4.9M471.7 424l4.2-1.4 2.6 4.5-2.8 1.9M471.7 424l-5 5.8 4.3 2.3-4.3-.4 3.4 7.3M486.4 422.9l8.3 .9M510.8 421.3l.5 6.8 7-3.6-3.4-3.4-4.1 .2-3.3 7.4 3.7 4.5 2.5 .5-2.4-5.6-3.8 .6-4.4 5.9-3.6-.3-.4-5.9M535.3 424.6l-1.5 3.4 2.8 3.8-3.4-.5-6.9 1.6 2.2 6.6-5.5-3.6 1.1 6.9-5.2-.1-2.5-4.3 6.1-6.1 .5 3.6 3.3-3M535.3 424.6l7.5-1.9-2.8 4.8-6.2 .5-.6 3.3M462.5 429.2l-7.9 .6M511.3 428.1l7.5 1.2M484.2 433.7l4.3 4 .3 6.5-1.6 1.3 2.9 2.6 3.4 .1 5.8-6.6M484.2 433.7l5.6 1.3-1.3 2.7M484.2 433.7l-1.6 4.2M484.2 433.7l-4.4 1.3M513.1 439.6l-.6 4.9-1.3-.3-5.7-4.4M471.4 439.8l1.5 7.5 6.8-3-4.3-4.6M515.3 443.1l4.2 2.9-4.7 2.9-4.9 2.6M515.3 443.1l3.6-.4M472.9 447.3l4.3 5.4-5.1-2.2M493.5 448.2l-.8 1.4 5.1 2.4M500.4 449.2l1.5 .3-2.7 4.9M507.6 444.7l2.6 4.6M512.5 444.5l2.3 4.4M489.5 451.5l3.2-1.9M514.2 351.6l4.1 3.8M522.3 359.2l4.2 3.7 3.9 3.9M463.6 344.5l3.5-4.3" fill="none" stroke="#555" stroke-width=".45" stroke-opacity=".5"/><polygon points="484.5,327.4 485.5,327.4 486.3,327.3 487.1,327.6 488.2,328.2 490,329.5 492.6,331.6 495.7,334.5 499.2,337.7 502.8,341 506,344 509,346.7 511.9,349.4 514.7,352 517.4,354.6 520,357 522.5,359.3 524.8,361.4 527.1,363.5 529.3,365.6 531.4,368 533.5,370.6 535.6,373.4 537.5,376.3 539.4,379.2 541,382 542.5,384.8 543.8,387.5 545,390.3 545.9,393.1 546.6,396 547,399.1 547.2,402.4 547.2,405.6 547,408.9 546.5,412 545.8,415 544.9,417.9 543.8,420.7 542.4,423.4 541,426 539.4,428.4 537.6,430.7 535.7,432.8 533.6,434.9 531.4,437 528.9,439.1 526.2,441.3 523.4,443.3 520.7,445.3 518,447 515.5,448.5 513.1,449.9 510.8,451.1 508.4,452.1 506,453 503.5,453.7 501,454.2 498.5,454.5 496,454.7 493.4,454.8 490.7,454.8 488,454.7 485.3,454.5 482.6,454.1 480,453.5 477.5,452.8 475,451.9 472.6,450.8 470.2,449.5 468,448 465.8,446.2 463.7,444.3 461.7,442.1 459.7,439.7 458,437 456.4,434 455,430.7 453.6,427.2 452.5,423.6 451.5,420 450.7,416.3 450,412.5 449.6,408.7 449.2,404.8 449,401 448.9,397.2 449.1,393.3 449.3,389.4 449.6,385.6 450,382 450.4,378.6 450.9,375.4 451.4,372.3 452.1,369.2 453,366 454.1,362.7 455.4,359.4 456.9,356.1 458.4,352.9 460,350 461.7,347.3 463.5,344.7 465.3,342.4 467.2,340.1 469,338 470.8,336 472.7,334 474.6,332.3 476.4,330.7 478,329.5 479.5,328.6 480.8,328 482.1,327.6 483.3,327.4" fill="none" stroke="#111" stroke-width="1.8"/><polygon points="443,457 467.9,457 467.9,537.7 443,537.7" fill="#c8c8c8" stroke="none" stroke-width="0"/><path d="M446.6 460.5l-3.6-3.5 11.1 0 6.7 4.4 7.1 4-2.7-8.4-11.1 0 3.3 12.6 10.5-4.2 0 11.2-6.1 13.9 6.1 8.3-12.6 10.4-4.4-6.3 .4-7.3 16.6 3.2 0 11.1-9.7 11.5 6 10.8-10.8-3.9 8.9 9.4 5.6-5.6-3.7 .1 3.7-11.2 0-11.1-12.6-.7-5 6-7.3 8.5 9.9 3.7 5.3-6-4.8 6.9-10.4 6.5 9.9-7.4 .5 .9-2.2 9.4 11.1 0 1.9-5.5M446.6 460.5l6 10.8 1.6 1 13.7 4.3 0 11.1 0 11.1-17 4.1-7.9 9.7 0-11.1 8.3-5.9 10.5-5.1-8.6-4.5-5.6 5.3-4.6-1 0 11.2 4.6-10.2-4.6-12.1 9.6-7.9-9.6-3.2 3.6-7.6 7.5-3.5M446.6 460.5l10.8 9.1 3.4-8.2 4.4-4.4M452.6 471.3l4.8-1.7-3.2 2.7-11.2 6.9 0 11.1M457.4 469.6l10.5 7-14.7 9.4 1-13.7M453.2 486l-10.2-6.8 0-11.1 0-11.1M453.2 486l-1.9 9.6-3.7-4.3M461.8 490.5l6.1-2.8M450.9 502.9l-.6 12.3 7.9 6.2-2.9-12.2M450.9 502.9l-7.9-1.4M450.3 515.2l2.6 12.2M450.3 515.2l-7.3-2.6 0 11.1 0 11.1 8.2 2.9M458.2 521.4l9.7-.4 0 11.1" fill="none" stroke="#111" stroke-width="0.85" stroke-opacity="0.9"/><polygon points="443,457 467.9,457 467.9,537.7 443,537.7" fill="none" stroke="#111" stroke-width="0.9"/><path d="M443 499.5H467.9" stroke="#111" stroke-width=".9"/><defs><linearGradient id="hg1" x1="0" y1="0" x2="0" y2="1"><stop offset="0" stop-color="#1a1a1a"/><stop offset="0.3" stop-color="#1a1a1a"/><stop offset="1" stop-color="#4a4a4a"/></linearGradient></defs><polygon points="467.9,457 518.5,457 518.5,500.4 467.9,500.4" fill="url(#hg1)" stroke="none" stroke-width="0"/><path d="M468.9 468.5L468.7 500.4M470.7 468.7L470.9 500.4M472.4 467.9L472.7 500.4M473.9 466.1L474.3 500.4M475.1 466.8L475.5 500.4M476.6 465.5L476.1 500.4M478.3 469.8L478.0 500.4M479.9 469.0L480.0 500.4M481.4 467.0L480.7 500.4M482.7 468.8L482.1 500.4M483.8 469.3L484.2 500.4M485.9 467.8L486.6 500.4M487.3 467.8L486.8 500.4M489.2 467.6L488.8 500.4M490.5 462.4L491.0 500.4M492.3 463.5L492.5 500.4M494.1 467.2L494.9 500.4M496.0 464.8L495.3 500.4M497.4 461.6L497.8 500.4M499.2 462.9L500.0 500.4M500.7 465.2L500.8 500.4M502.8 469.1L502.2 500.4M504.8 462.8L505.2 500.4M506.5 462.3L505.8 500.4M508.6 461.0L508.0 500.4M510.6 467.3L510.7 500.4M512.2 466.1L512.1 500.4M513.4 463.0L513.1 500.4M515.0 464.5L515.3 500.4M516.9 467.9L516.8 500.4" stroke="#bbb" stroke-width=".45" opacity="0.45"/><polygon points="467.9,457 518.5,457 518.5,500.4 467.9,500.4" fill="none" stroke="#111" stroke-width="0.9"/><defs><linearGradient id="hg2" x1="0" y1="0" x2="0" y2="1"><stop offset="0" stop-color="#3a3a3a"/><stop offset="0.0" stop-color="#3a3a3a"/><stop offset="1" stop-color="#555"/></linearGradient></defs><polygon points="467.9,500.4 493.6,500.4 493.6,537.7 467.9,537.7" fill="url(#hg2)" stroke="none" stroke-width="0"/><path d="M468.9 500.4L469.4 537.7M470.3 500.4L470.5 537.7M471.6 500.4L471.3 537.7M473.1 500.4L473.6 537.7M475.1 500.4L475.8 537.7M476.2 500.4L476.0 537.7M477.5 500.4L478.3 537.7M479.0 500.4L478.9 537.7M481.0 500.4L481.5 537.7M482.5 500.4L482.1 537.7M484.4 500.4L484.7 537.7M485.6 500.4L485.3 537.7M486.8 500.4L486.4 537.7M488.0 500.4L487.9 537.7M489.5 500.4L488.8 537.7M491.2 500.4L490.5 537.7" stroke="#bbb" stroke-width=".45" opacity="0.55"/><polygon points="467.9,500.4 493.6,500.4 493.6,537.7 467.9,537.7" fill="none" stroke="#111" stroke-width="0.9"/><polygon points="493.6,500.4 518.5,500.4 518.5,537.7 493.6,537.7" fill="#cfcfcf" stroke="none" stroke-width="0"/><path d="M508.2 512.9l-.8 4.7 11.1-4.8 0 12.5-10.8 5-7.4 .3-6.7-5.3 0 12.4 6.7-7.1-1.7-4.2 8.8-8.8-13.8-4.8 14.6 .1 10.3-.1 0-12.4-10.3 12.5-2.2-12.5-12.4 12.4 0 12.5 5 1.1-5-13.6 0-12.4 12.4 0 12.5 0M498.6 526.4l9.1 3.9-1.6 7.4 12.4 0 0-12.4-11.1-7.7 .3 12.7 10.8 7.4M500.3 530.6l5.8 7.1-12.5 0" fill="none" stroke="#111" stroke-width="0.85" stroke-opacity="0.9"/><polygon points="493.6,500.4 518.5,500.4 518.5,537.7 493.6,537.7" fill="none" stroke="#111" stroke-width="0.9"/><defs><linearGradient id="hg3" x1="0" y1="0" x2="0" y2="1"><stop offset="0" stop-color="#1a1a1a"/><stop offset="0.25" stop-color="#1a1a1a"/><stop offset="1" stop-color="#505050"/></linearGradient></defs><polygon points="518.5,467.5 542.5,467.5 542.5,537.7 518.5,537.7" fill="url(#hg3)" stroke="none" stroke-width="0"/><path d="M519.5 483.1L519.0 537.7M521.2 477.3L520.7 537.7M522.6 478.0L522.8 537.7M524.5 473.0L524.1 537.7M526.2 473.8L527.0 537.7M528.1 473.2L528.2 537.7M529.8 472.9L529.3 537.7M531.1 478.4L531.2 537.7M532.6 484.1L533.1 537.7M534.1 475.3L533.9 537.7M536.1 477.1L536.9 537.7M537.8 475.7L538.0 537.7M539.5 479.1L539.2 537.7M541.3 478.7L541.5 537.7" stroke="#bbb" stroke-width=".45" opacity="0.45"/><polygon points="518.5,467.5 542.5,467.5 542.5,537.7 518.5,537.7" fill="none" stroke="#111" stroke-width="0.9"/><path d="M443 537.7V458Q443 452.3 449 452.3H512Q518 452.3 518.5 459V467.5H536Q542.5 467.5 542.5 474V537.7Z" fill="none" stroke="#111" stroke-width="1.2"/><path d="M443 459V458Q443 452.3 449 452.3H512Q518.5 452.3 518.5 459Z" fill="#141414"/><path d="M518.5 472V467.5H536Q542.5 467.5 542.5 472Z" fill="#141414"/><polygon points="264,483 266,479 270,476.3 298,476.3 298,508 264,508" fill="#c4c4c4" stroke="none" stroke-width="0"/><path d="M267 486l2.9-9.6-5.9 6.6 3 3-3 6.1 0 9.2 2.4 6.7 1.2-5.2 8 5.2 1.1-5.3-1.4-14.8 5.5-.7-1.8-10.9 9.1 0 9.2 0-7.2 3.9-.1 12.1 8 1.6 0 9.1-9.3 2.2-3.6-4.5 .3-11.8 4.6 3.4-1.3 12.9-4 2.8-8-5.3-9.1 .1-3.6-10.7 0-9.1M267 486l8.3 1.9-7.7 14.9-3.6-1.5M280.8 487.2l9.3-7-4.7 8.7-4.6-1.7 4.3 13.5 4.9-8.4 8-7.6-.7-8.4M280.8 487.2l-4.1 15.5 8.4-2-.4 7.3 9.2 0 4.1-5-8-10.7M290.1 480.2l-2-3.9M290.1 480.2l-11.1-3.9-3.7 11.6-5.4-11.5 9.1-.1M290.1 480.2l7.9 4.5 0 9.2M275.3 487.9l-11.3 4.2M288.7 505.2l5.2 2.8M284.7 508l-9.1 0-9.2 0" fill="none" stroke="#111" stroke-width="0.85" stroke-opacity="0.9"/><polygon points="264,483 266,479 270,476.3 298,476.3 298,508 264,508" fill="none" stroke="#111" stroke-width="0.9"/><defs><linearGradient id="hg4" x1="0" y1="0" x2="0" y2="1"><stop offset="0" stop-color="#141414"/><stop offset="0.55" stop-color="#141414"/><stop offset="1" stop-color="#3a3a3a"/></linearGradient></defs><polygon points="298,476.3 355.6,476.3 355.6,503.9 298,503.9" fill="url(#hg4)" stroke="none" stroke-width="0"/><path d="M299.0 485.3L299.7 503.9M300.4 481.5L300.1 503.9M302.2 489.2L302.3 503.9M303.6 490.6L304.3 503.9M305.1 485.2L305.3 503.9M307.0 487.4L306.8 503.9M308.5 487.7L309.2 503.9M309.6 481.8L310.1 503.9M311.2 489.1L311.3 503.9M312.8 491.0L312.6 503.9M314.5 486.6L313.9 503.9M315.8 489.5L315.8 503.9M317.6 485.7L318.1 503.9M319.5 485.4L318.9 503.9M321.4 486.2L321.5 503.9M323.0 481.2L323.1 503.9M324.2 481.5L324.8 503.9M325.5 488.5L325.4 503.9M327.1 486.3L326.6 503.9M328.3 487.6L327.6 503.9M329.4 481.3L329.6 503.9M331.5 486.6L330.7 503.9M333.1 485.9L333.4 503.9M334.4 488.0L335.1 503.9M335.7 491.0L335.8 503.9M337.6 483.1L337.4 503.9M339.6 489.7L339.7 503.9M341.4 486.9L341.4 503.9M342.8 486.1L342.9 503.9M344.4 481.0L345.2 503.9M346.5 488.4L346.0 503.9M348.5 483.5L347.8 503.9M349.8 489.2L350.4 503.9M351.8 489.4L351.5 503.9M353.5 488.3L352.8 503.9M354.7 488.4L354.4 503.9" stroke="#bbb" stroke-width=".45" opacity="0.45"/><polygon points="298,476.3 355.6,476.3 355.6,503.9 298,503.9" fill="none" stroke="#111" stroke-width="0.9"/><defs><linearGradient id="hg5" x1="0" y1="0" x2="0" y2="1"><stop offset="0" stop-color="#333"/><stop offset="0" stop-color="#333"/><stop offset="1" stop-color="#444"/></linearGradient></defs><polygon points="298,503.9 320.8,503.9 320.8,511.2 298,511.2" fill="url(#hg5)" stroke="none" stroke-width="0"/><path d="M299.0 503.9L298.3 511.2M300.8 503.9L301.1 511.2M301.9 503.9L301.4 511.2M304.0 503.9L304.1 511.2M306.1 503.9L305.6 511.2M307.6 503.9L307.3 511.2M309.0 503.9L309.5 511.2M311.0 503.9L311.2 511.2M312.7 503.9L313.5 511.2M314.4 503.9L314.7 511.2M316.2 503.9L316.4 511.2M317.6 503.9L317.5 511.2M319.3 503.9L319.6 511.2" stroke="#bbb" stroke-width=".45" opacity="0.45"/><polygon points="298,503.9 320.8,503.9 320.8,511.2 298,511.2" fill="none" stroke="#111" stroke-width="0.9"/><polygon points="320.8,503.9 355.6,503.9 355.6,511.2 320.8,511.2" fill="#e6e6e6" stroke="none" stroke-width="0"/><path d="M335.6 506.9l.9 1.1 5.3-4.1 6.4 5.1 7.4 2.2 0-7-6.7-.3-.7 5.1 7.4-4.8M335.6 506.9l-8.2 1.2 7.4-4.2-7 0-7 0 0 7 6.6-2.8 .4-4.2M335.6 506.9l6.2-3-7 0 .8 3-1 4.3 7 0 6.6-2.2 .4 2.2 7 0M327.4 508.1l.1 3.1 7.1 0 1.9-3.2 5.1 3.2 .2-7.3 7.1 0M327.4 508.1l-6.6-4.2M327.4 508.1l7.2 3.1M348.6 511.2l-7 0M327.5 511.2l-6.7-.3" fill="none" stroke="#111" stroke-width="0.85" stroke-opacity="0.9"/><polygon points="320.8,503.9 355.6,503.9 355.6,511.2 320.8,511.2" fill="none" stroke="#111" stroke-width="0.9"/><polygon points="281.9,508 314.3,508 314.3,547.7 289.2,547.7 289.2,536.3 281.9,536.3" fill="#c4c4c4" stroke="none" stroke-width="0"/><path d="M308.3 512.4l4.5-4.4-10.3 0-10.3 0-4 6.6-6.3 3.7 9.7 8.1-.9 3.8-8.8-1.6 2.6 7.7 4.7 5.6 4.5-9 8.7-10.9 11.9 5.1-11.4-7.7-.4-11.4 5.8 4.4-5.4 7 11.4-2.6-1.5-8.8M308.3 512.4l6 4.4 0 10.3-9.6 7.9 9.6 2.4 0 10.3-10.3 0-10.3 0 .4-7.3 8.1-.3-8.5-7.2-9.2 3.4 9.2 11.4 8.5-7.6 12.1-2.7-10.3 10.3-1.8-7.6 2.5-5.1-2.3-13-7.3-9.2-3.5 13.6 10.8-4.4 .5-2.6-7.8-6.6-6.9 1.8-6.3-6.6 10.3 0 2.9 4.8 7.4-4.8M288.2 514.6l3.4 11.8-9.7 2.2 0-10.3 0-10.3M291.6 526.4l2.1 6.5 .4 7.5-4.9 1.5 4.5 5.8M290.7 530.2l3 2.7 11 2.1M290.7 530.2l-6.2 6.1M314.3 527.1l0 10.3" fill="none" stroke="#111" stroke-width="0.85" stroke-opacity="0.9"/><polygon points="281.9,508 314.3,508 314.3,547.7 289.2,547.7 289.2,536.3 281.9,536.3" fill="none" stroke="#111" stroke-width="0.9"/><defs><linearGradient id="hg6" x1="0" y1="0" x2="0" y2="1"><stop offset="0" stop-color="#3a3a3a"/><stop offset="0" stop-color="#3a3a3a"/><stop offset="1" stop-color="#4d4d4d"/></linearGradient></defs><polygon points="314.3,511.2 355.6,511.2 355.6,547.7 314.3,547.7" fill="url(#hg6)" stroke="none" stroke-width="0"/><path d="M315.3 511.2L314.8 547.7M316.5 511.2L316.4 547.7M318.6 511.2L319.1 547.7M319.7 511.2L319.9 547.7M320.9 511.2L320.6 547.7M322.2 511.2L322.1 547.7M323.4 511.2L324.1 547.7M324.9 511.2L324.2 547.7M326.5 511.2L326.4 547.7M328.4 511.2L328.9 547.7M330.1 511.2L330.0 547.7M331.3 511.2L331.9 547.7M333.1 511.2L332.5 547.7M334.4 511.2L334.7 547.7M335.6 511.2L335.9 547.7M337.4 511.2L337.6 547.7M339.0 511.2L339.3 547.7M340.8 511.2L341.5 547.7M342.4 511.2L343.1 547.7M343.9 511.2L344.0 547.7M345.5 511.2L345.0 547.7M346.7 511.2L346.9 547.7M348.5 511.2L348.2 547.7M350.1 511.2L349.6 547.7M352.2 511.2L352.5 547.7M354.0 511.2L354.5 547.7" stroke="#bbb" stroke-width=".45" opacity="0.55"/><polygon points="314.3,511.2 355.6,511.2 355.6,547.7 314.3,547.7" fill="none" stroke="#111" stroke-width="0.9"/><polygon points="355.6,480 358,476 362,473.9 376.7,473.9 376.7,512 355.6,512" fill="#c8c8c8" stroke="none" stroke-width="0"/><path d="M372.7 476.4l-5.7 3.3 1.1 9.2 1.9 4 6.7-1.8 0-8.2-4.2-2.4 4.2-5.8-7.4-.8 3.4 2.5-.2 4.1-4.4 8.4 8.6-6 0-8.2-4 1.7M361.2 480.6l-5.6-.6 5.5-5.7 8.2-.4-2.3 5.8-2.5 9.8-1.7 1.7-7.2 5.2 8 3.3 5.6 1.9 1.8 6.8 1.9 3.6 3.8-4.4 0-8.3 0-8.2-8.6-2.2-3.6 .6 5.5 3.4-.8 8.7-8.3 4.2 3.8 6.2-8.2 0-.9-7.3 0-8.3 0-8.2 0-8.2M361.2 480.6l5.8-.9-5.9-5.4 .1 6.3 3.3 8.9-8.9-1.3 7.2 3 .8 8.5-8 5 5.3 1.1 10.1 2.6 5.7-.8-7.5-6 7.5-2.3-6.7-6.4-7.2-1.7M361.2 480.6l-5.6 7.6M367 479.7l5.5 .8M370 492.9l-6.4 6.8-2.7 6.1-4.4 6.2M371 508.4l-6.3 3.6 8.2 0" fill="none" stroke="#111" stroke-width="0.85" stroke-opacity="0.9"/><polygon points="355.6,480 358,476 362,473.9 376.7,473.9 376.7,512 355.6,512" fill="none" stroke="#111" stroke-width="0.9"/><defs><linearGradient id="hg7" x1="0" y1="0" x2="0" y2="1"><stop offset="0" stop-color="#141414"/><stop offset="0.5" stop-color="#141414"/><stop offset="1" stop-color="#3a3a3a"/></linearGradient></defs><polygon points="376.7,473.9 428.6,473.9 428.6,512 376.7,512" fill="url(#hg7)" stroke="none" stroke-width="0"/><path d="M377.7 484.0L377.5 512M379.4 486.4L379.5 512M381.0 491.3L380.4 512M382.9 490.6L383.2 512M384.4 492.2L383.6 512M386.3 487.6L385.6 512M387.7 484.7L387.2 512M389.5 485.5L389.8 512M390.9 480.3L391.3 512M392.8 480.7L392.7 512M394.3 491.8L394.5 512M395.7 491.4L395.5 512M397.6 482.1L397.1 512M398.8 490.6L398.3 512M400.2 482.3L400.7 512M401.8 482.4L402.4 512M403.7 483.8L403.4 512M404.9 480.9L405.2 512M406.8 488.8L406.4 512M408.8 482.9L408.4 512M410.5 482.9L411.0 512M412.0 491.0L412.5 512M413.7 491.3L413.9 512M415.1 483.4L415.5 512M416.3 489.4L416.4 512M417.5 482.4L417.5 512M418.8 488.8L419.2 512M420.9 491.5L421.1 512M422.6 489.1L422.0 512M423.8 491.4L424.4 512M425.4 482.6L424.7 512M427.2 483.8L427.4 512" stroke="#bbb" stroke-width=".45" opacity="0.45"/><polygon points="376.7,473.9 428.6,473.9 428.6,512 376.7,512" fill="none" stroke="#111" stroke-width="0.9"/><path d="M264 508V483Q264 476.3 271 476.3H349Q355.6 476.3 355.6 483M355.6 512V480Q355.6 473.9 362 473.9H422Q428.6 473.9 428.6 480V512Z" fill="none" stroke="#111" stroke-width="1.6"/><path d="M289.2 547.7H355.6V511.2M281.9 536.3V508H264" fill="none" stroke="#111" stroke-width="1"/><polygon points="849,339.5 851.6,339.9 854.7,340.7 858,341.8 861.6,343.2 865.3,344.8 869,346.5 872.8,348.4 876.7,350.5 880.8,352.9 884.8,355.4 888.8,358 892.7,360.7 896.4,363.5 900.2,366.4 903.8,369.4 907.3,372.6 910.7,376 914,379.6 917.2,383.5 920.3,387.8 923.3,392.3 926.1,396.8 928.6,401.3 930.6,405.6 932.2,409.8 933.3,413.9 934.1,418 934.7,422 935.1,425.8 935.3,429.3 935.4,432.6 935.3,435.7 935,438.6 934.6,441.3 933.9,443.7 933,445.8 932.6,447.6 932.9,449.2 933,450.4 932,451.5 929.1,452.3 923.5,453 913.7,453.5 900,453.9 884.5,454 869,454 855.3,453.6 845.5,453 839.9,452.1 837.2,451.1 836.4,449.7 836.5,448.1 836.7,446 836,443.5 834.5,440.5 832.8,437.2 831.3,433.4 829.8,429.3 828.6,424.7 827.7,419.8 827.2,414.2 826.9,407.7 826.9,400.9 827,394.1 827.3,387.6 827.7,382 828.2,377.1 828.8,372.7 829.6,368.7 830.5,365 831.4,361.6 832.5,358.4 833.7,355.4 835,352.6 836.4,350.1 837.8,347.9 839.3,345.9 840.7,344.2 841.9,342.7 843,341.5 844.1,340.5 845.4,339.8 846.9,339.5" fill="#cccccc" fill-opacity="1"/><path d="M849 339.5l-2.2 0-.1 1 2.4-.1-1.3 1.1-2.6 .8 .7 1.2-2.7-.9-1.7 .6 1.4 1.5 .7 1.3-2.2 .5-1.7 .4-1.2 1.6 1.5-.2-1.4 2 2.3-.9 .5-2.9 2.4 2.1 3.2-3.7-3.4 1.1 .2 2.6 1.6 1.7-.1 5.4-2.6 5.5-2.8-1.1-5 1.9-2 1.7-1.3 .6 2.4 .8-.7 2.7 1.7 .6 1.8 2.4 2.6 2.3 .9-4.1-2-4-2.2-.7-1.2-2.3-.3-3.6-.8 2.6-1-.6-.5 1.4 2.6 .2 3.1-3.4 1.9 1.5-3.8 4.2-2.1 .8-1.1-1.4-1.7-1.2-.6 2.1 .4 1.9-.5 2.4 .9 1 .7-2.9 1.2 .8-1.9 2.1 3.6-1.5-.8 4.1 1.8 2.9-2.8 4.3 2.1 1.2-4.2 1.5 .3-3.6 1.8 .9-2.1 2.7-.2 2.3-.3 4.8-2.5 .6 1 1.6-1.9-.9-.1 2.2-.1 2.2-.1 4.4 .9 0 1.2-2.1-2-.1 .9-.6-.9-1.6 0 2.2 .8 2.2 2.5-1.1 .1-3.1-1.4-1.1-1.1 .5-.8-1.8 .9-.5-.1 2.3 2.5 .6 4.1 .8 2.9 4.1 .2-6.7 4.3-7.4 6 1.6-6.1-6.7 6.3-4.8 5.6 .2-1.5 3.3 6.1 2.3-4.6-5.6-2.5-7.2-5.6 2.3-6.2 1.5-3.4 2.3 2.5 3.9 3.3 1.8 .1 5.1-3.9-.9-.4 8.3-2.9-2.6-2.3-1.1 2.7-5.7 2.9 1.1 3.8-4.2-2.4-8 8.7 3.2 4.1 3.5 2.1 4.7 2.6 8.7 4-8.4-6.6-.3 4-2.4 3.3-4.9 2.8 2.1 5.1 .5 4.4 5.8 3 4.9-3.7 7.1-.6-4.6-5.2-6.1 6.5-1.3-1.3 7.4 4.3-2.5 5.8 5.4-7.4 8.6-2.1-1.5-.2 6-2.1 5.8-4.2-5.1-.8-4.7-.7-8-8.3-3.8 6.1 4.9-10.9 1.8-3.5 1.9-6.3 .5 3.9 8.4-2.6 5.4-4.5 7.1 2.3 7.2-2.6 1.7-3.7-3.5 1.6 4.4-1.9 .2-2.4 .6 .7-1.1 .9-1.9-1.2-3.7 1.2-2.4 3.1 2.6 1.7 4.8 4.3 2.2-5.3 1.2 2.2 4.4 1.3-2.5 2 4.4-3.8 1.5-.8 2.3 2.9-1.5 4 1.3 5.4 .4 5.7 .4 5.4 .1 3.7 .1 2.5 2.4-1.5 1.7-2.7-1.9-2 1.8-1.3 1.4 1 1.1 1.4-1.1-2.4 0-2.8-.1-.6 1.1 1.1 .9 4.4 .1 .3-2 2.9 .1 .7 1.1-2.1 0 1.4-1.1 .7-1.4 0 2.5 2.3-1-.4-1.4-.4-1.8 2.1-5.3 1.2-5-6.1 4.9 4.9 .1 2 3 5.9 0 3.4 0 2.4-3 1.1 5.3-3.3 0 1.7 1.8 .9 2.5 .5 .9 1.4-.9 1.3-2.5 1.1 1.4 .7-3.2-1.7-2.3 6.3-.1-4.6 2.4 1.5 1.8 3.5-1.9 3.4 1.8-3.7 0-3 1.5 1.6 1.1 2-.1-.2-1.1-.4-1.4-3.2 .1-2.2 1.4-.3 1.1-2.1 0-1.9 0-1.8 .9-.7-.9-1.7 0-2 .9 1.2-2 .9-1.4 3.2 0-1.1 1.4-2.1-1.4-2.1-4.1-.1-3 8.1-5.8-.2-2.8 6.9-1.2 11.3 0-3.3 5.3-4.4 4.4-8.3 .1 4.7-9.8-6.7 4-2.2 5.8 3.7 3 .5-3-4.2 0-5.9 0-6.6-5 9.4-4.9-7.7-1.7 4.1-2.8 2.8-6.2 5.1 6.9 1.3-6.1-3.7-7.3 5-6.3-3.7-7.1 5.1 2.4-1.4 4.7 5.5-.5 3.1-3.1 1.1 7.8 5.1 9.3 3.2-6.7-8.3-2.6-4.2-4.7-4.1-4.2 7.2 1.1 6.1 1.5 5-3.7 2 8 1.7-5.6 6.4-3.4 2.1 4 2.6 6.7 4.3 5.2 1.8-2.9 1.2-2.5 2 2.5-1 2.1 2.3-1.4 .7-1.2 .4 2.2-.7 1.6 .2 1.4 .8-.9 .3 2.2-2 .3-1.4-.6-1.6 2.2 1.8-.1-1.5 3.4 1.9 1.3 1.5 2.5-1.4 .1 1.4 2.9-.1 1.8-1.4 0 1.5-1.8 0-3 1.1 .9 0 2 .8 1.3-2 .6-.3 2.6-1.5 .4-1.6-1.6-5.6 1.5-2 3.5-3.3 3.2-2.4 2.5-2.3 1.9-2.9-1.7 2.7-2.4-3.8 .1 4.9-3.2 7.1-.4-1.3 5.4 4.2-2.7-2.9-2.7-6.7-8.5-8.9-.5-1.6 6.1 2.7 3.6-5 .1-3.3 5.4 3.6-.1 3.8-.1-2.9 1.9-.9-1.8-1.8 1.9 .1 2.4-1 1-2.2 0-.8-.9-.3-1.1-1.1 2-2.2 0-2.2 .1-2.2 0-2.2 0-.8-.9-.8-1.1-1.1 1.1-2-1.1-.5 1.1-1.5 .9-4.4 0 2.2 0 2.2 0-8.8 0-.8-.9-1.4 .9-.3-.9-1.9 .8-11-.2-.7-1-1.5 .9-2.2-.2-2.2-.1-.8-2.1-2.5-.1-2.2-.3-2 .8-.2-2.6 3.1 .5-1.8-2.1-1.7-3.3 1.7-2.3 2.3 3.6-2.3 2 3 .4 4.7-2 .4-2.9-4.9-.9-3.4-7.7 1.6-6.2-5.6-4.9-3.6-2.2 2.7-2-3.3-2.5-.3-4.5 2.9-1.9-3.1-4.2 3 .5 .1 3.7-2.6 6.4-1.9 3.7-2.7 2.8 .8-3.4-2.2 2 .8-1.9-2-.3 .3 2.2 .4 2.1 .5-2.1 .5 2.3 1.6 2-1.2-.1-.3 2.2 .8-.2 .7-1.9 1.8 1.2-.8-2.6-2.6-.6 .9-.9-1.4-1.4-.9 0M849 339.5l2.2 .3 .1 1-1.2 .9-1-1.3 2.1-.6 2.1 .6 1.6 1.3-1.6 .7 1.5 3.8-1.1 2.1-2.6-3.2-1.6 2.1 0 3-4.1 .1-3.9 1.5 .3 4-2.4-4-2.9-.1-.2-1.4-1.1 1.9-1 2 1 0 2.3 1 1.4 1.2 2.9-.6-1.9 4.3-1.6 4.9 4.4-3.8 7.7-3.2 9.4 .7-3.7 4.7 2.2 6.5 6.2 .8 .9 3.5 4.1 5.6 4.3-2.3 4.6-7.3 4.7 6.1-.2-9.7-6.2-3.9 .8-3.1 5.3 3.4 3.9 2.7-1.5-3.9-2.4 1.2 .4-2.5-2.2-3.5-2-1.3-3.5 .1 3 1.8-1 2 5.7 .9 .6-3.4-1.2-2.1-1.1 .6-.2-1.3 1.3 .7 2.2 1.4 1.1 2.1 2.2 1.4 .5-1 1.5 1.1 1.9 1.3 1.3 2.3-2.4-1.7-.8-1.9-2.3 1.4 1.5 3.2 2.8 2.2 .1-2.2 2.6 .2 2.9 .8 .4 1.7 1.6 1.3-.9-2.1 2.3 .7-.1 1.1 1 2.2-2.3-1.9 1.4-1.4-1.7-1.4-1.8-1.4-2.4-.7-.4 1.1 2.8-.4-1.7-1.3-1.8-1.3-.1 1-2-1.5-1.1 .6-1 1 2.3 1.7-2.9 0-2.6 1.1 4.3 3.1 4.6 .6 2.6-.2 1.9 3.9-3.8 3.7 3.7-.7 2.4-.9 4.2 1.4-.9 1.7 .6 4-5.4-1.3-10.8 1.3 6.2-5.5 4.6 4.2 4.6 4.9 4.2-3.3-1.4-4.3 2.9 3.2 .1 3-1.6-1.9-3.4-.3-2.7-2.9 2.1-1.1 2.6 0-.2-2.1-.6-2.2-1.7-.1-1.4-1.3-.5-1.8-1.1-1 0-1.2 1.7 1.4 1.6 1.5-.3 1 1.9 .5-.2 1 1.8 .5-.1 1.2 1.7 .4-.1 1.3-1.6-1.7 .6 2.2 2.1 .7 1.2 1.4-1.9 1.5 1.5 1.9 2.9 3.7-.8 2 2.4 .2-.2 2.9-3.3-.7 .3 5.7-2.7 9.5 4.1 1.1-2.5 8.4 4.4 6.5-10.9 .3 0 3.8-3.7-3.2-6.1 2.3-1-2.4-9 .2-6.4-.8-5.4 1.4 2.6 4.8 7.9 .7 .8 5.1-5.1-1.3-2.8 9.9 3.5 3 3.5 2.3 .4 3.2-2-1.4 1.6-1.8 2.6-2.3-.1 4.1 1.8-1.8 5-.1 3.3-2.3 5-3.1-6.2 .1-3.6-9.7 8 5.3 4.1 .6 10.5-5.6-5.4-4.6-3.8-6.4-3.7 .6-7.1-.1-1.5 5.9-7.5-5.7 4.3-10.3-3-3.3-6.4-.5-8.5-.6-6.3 .7-2.4 3.7-1-3.7 3.4 0M849 339.5l.1 .9 2.2 .4 .7 2.7 .9-2.3-1.6-.4 2-.4 2.1 .6 2 1.6 .1-.9 1.5 1.4-.8 .9-.8-1.4-.7 .9 1.5 .5 1.2 2-.4-2.9 .6-.7-2.1-.7-2.1-.7-.5 .7 1.8 1.8-1.9 2.7 4.3 1.6-3.3 4.4-2.1-3.9-4.2 1.9 .9 7.8 5.7 5.4 7.3 2.2 3.2-4.5 5.9 6.8 1.3 9.6 .1 8.1 5.3 1.5 8.2-.2 3.9 7.1-1 2.4 7.3-2-3.8 6.4 6.6-2.7 6.3-3.7 7.3 2.8 5-2-.3 3.9-4.7-1.9 3.7 6.1 1-4.2 2.9 5.1-.3-5.3 3.1 1.9-.4 3.1 .1 5.6 1.4 4.4 1.8-2.1 1.7-.5 .7 2.5 1.5 .1 .7-1.5 .7-.9-1.2-.9-.8-2.5-1.1 .3-1.4 .2-2.1-.6 .2-3.7 1.4-.3-1.2-2.4 .7-1.2 1.5 .9-1.1-1.9-1.1-2-1.3-.6 .2-1.3-1.1-1.9-1.4-.4 .2-1.4-1.2-1.8-1.3-1.9-1.6-.7 1.1 1.5 1.1 1.7-1 .4-.4 2-.7 2.2-3.3-.9-1.7 2.9-4.5-6.3-4-5 5.8-1.4 4.3 2.6 1.1-.8 .5 3 2 .4 .9 1.3-.1-2.1 .5-.8-1.3-1.8-1.4-.4 .1-1.3-2-1.2-.2 1.5-3-1.5 .6-1.5 1.7 .4 1.6 .5-.7 .6-.9-1.1 .2-1.2-2.1-1.1 .7-.6-1.5-1.7-1.5-.3-1 .5-1.7-1.7-1.5 .4 1.7 1.7 3.2 1.5-.3 1.7-1.5 1.1M853.3 340.4l-.4 .8 2 .5 2.5 .9 1.6 .5 2.7 .1 2 .9-.8 .6-1.1 .7-.1-1.2 0-1-2.1-.8M863.7 344.1l0 2.2 1.5-.6 1.9 2.1-.8 1.2 .7 2.3-4 .7-3.1-1.4 .4 3.4-.5 4.7 5.2-2.4 3.5-1.7 2.1-1.5 .9-3.1-.4-1.4 .6-.8-2-1 1.4 1.8 2.5 .3 2 1-1.2 1.6 1.2-.6 0-1 1.9 1.1 1.9 1.1 1.9 1.1 1.9 1.1 1.9 1.2-.3 .9 2.1 .3-1.8-1.2-2.5-.5 .6-.7-1.9 0-2.6-.3 .1-1.2-1.7-1-1.1 .6-1.6-.9-.9-1.7 .1-.9-1.9-1.1M863.7 344.1l1.5 1.6 2.4 1.1-.5 1 2.2-.1-.2 1.1 2-.2-1.8-.9-1.7-.9 .1-.9-2-.9-.5 .7 1.1 3.3-2.8 .7-.5 2.3 2 4.3 1.6 4.8 1.9-6.5 4.8 2.6 2.2-1.4 2 3.8 3.5-2.6-2.5 .6 .5-1.9 2.3-1.4 0-1.1-2.6 .8-1.6-2.2-1.5-.9 1.9 .1-.4 .8M863.7 344.1l-2 .1-2.3 1.8-.3 1.8 .8 2.8 2.2-3.5 1.4 2.6 3.5 1.6 1.5 3.3 4.1 5.7-.1 7.6 4.2-5.2 1.7 7.5-5.9-2.3-7.1 6.3-1 5.1 3 7.6-6.5-2.1 5.8 9.7 6.5 3.1 0 5.4-7.3 2-10.8 .1-.5 4.8 .4 8.3-.4 4-9.8 2.4 4.5-8.5-3.1-5.4-8.8-4.3 0-6.1 4.9 2 3.2-8.6 2 7.1-5.2 1.5-4.9 4.1-3-5.1-2.3-2.6-3.2 1.8-1.1 1.3 0 2.3 2.5 1.7 0-2.5-2.5 .8 1.1 2-1.1-.6 0-1.4 1.1-1.2-1.1-1.1-.9 0 0 4.4 2-.1 .1 3-1.1 1-.9 .5 1 2.1-.9 .1 1 1.6 1.1 .1 3.2-.1 2.2-2.4-2.4-1.7 2.2-4.4-2.3-2.6-3.2-2.8 0 2.4 1.4 .4 1.8 0 2.3-2 0 4.6-2.3 .1-1.7 3.4-1.3 2.6-1.2-1.9-1-1.7 0-2.2 .9-.7-.9-1.5 0-2.2 .9-2.2 0 2.2-.9 2.2 0 2.2 .9 1.6-.9 .6 .2 4.4-.1-2.2 2.1 1.4 .1 2.5 .3 2.6-1 1.6-.1-1.2-.9-.3-.3-2.2 1.2 2.5 1.1-.4 1.4 .5 4-1.1 .6 4.5-2.5-.8-1 4.3 2 .2 1.5-3.7M863.7 344.1l2 .9M867.7 345.9l-2.5-.2M867.7 345.9l2 .9-2.1 0M869.7 346.8l-.4 .9M873.6 348.9l-2.1 1.1-2.6 .2-1.9 1.1 3.6 1.8 1.8-1 2.2 1.1 .9 2.6 .5-3.4 2.7 1.6-3.2 1.8M875.6 349.9l-2.1-.1-2 .2-2.4-1.2-2-1M877.5 351l1.3 1.8 2.5 .4M879.4 352.1l-.6 .7M886.9 356.7l-.3 .9 2.2 .3-.2 1-2.7-.4 .7-.9 2 1.3 2 .3 1.8 1.3 1.7 1.3-2.1-.5 .4-.8-2.3-.5-.2 2.9-.6 1.7 1.7 4.2-3 1.5 5.2 4-3.1 8-6.5-1.7-.5-4.3 10.1-2 1.6-2.6 5.3 1.4-.1 3 3.6 3.3-2.7 1.6-8.3 8-5.2-2.1-3.8 6.1 6.7 3.4-6.1 6.6-8.9 1.5-2.1-6.9 9.5-1.7 .9-2.9-6.7-2.5 2.3-3.4-.4-7.9-5-1.7-8.4-3.3-3.8 3-7.9-.7 4.6-6.6-7.1-.6-8.5-8.1 2.9 10.4-5.3-2.6-5.3-.6 1.1-4.1M886.9 356.7l1.9 1.2 1.8 1.3-.5 .8-2-.1-.3 1.5-3-2 .4 2.4 2.6-.4-1.1 4.3-3.8 .9 5.1 3.7-1.3-4.6M895.9 363.1l-1.9-.3 1.2 .9-1.9-.1 1.5 1.2-2.7 2-1.1 2 2.2 5.5 3.1 2.5-1.5-5.1 3.4-2.5-2.2-1.8 2.1-.1 .7-.8-1.1-.9 1.7 .2-.6 .7M895.9 363.1l-.7 .6M897.6 364.4l.1 1.2-1.7 1.8-3.9-.6 3.5 2.6 .4-2-1.2-2.6M901.1 367.2l1.7 1.4-1.8-.3 1.8 1.5 1.7 .2-.6 .8-1.9-.3-.9 1.1-1.4-3-1.5 .6-.1-1.9M906.1 371.5l-2.2-.7M906.1 371.5l-1.7 1.1-.9 1.1-3.4-.6 2.3 2.1 1.1-1.5-2.4-2.1 3.3 1 1.4-.1 0 1.4-2.3-.2M906.1 371.5l1.6 1.5 1.6 1.5-1.2 1.7 1.1-.5M907.7 373l-1.9 .9 .8 2.7 .9-2.6M909.3 374.5l1.6 1.6 1.4 1.6-.4 .9 1.9 .8 1.4 1.7 1.4 1.7 1.3 1.8-1.2 1.7-1-1.4-.1 2.2-4.6 .7 3.8 1.3 2.2 3.1 2.7 .8 2.2 .7 1.1-1.9-1.9-1.2 .8 3.1-.7 1.6 .1 3.6 2.2 .3 1.4-.5 1.2 .1 .3-1.4-1.5 1.3-.5 2.1-2.8 3.4 2.4-.3 2.2 .4 .2-2.7 2.2-.3 .9 2-.5 1-.5 1.5-.4 2.8-.8 3.2-3.2-2.3-2.5-5.3-1.8 3.1 4.3 2.2-1.7 4.5-5 4.2-.1 4.5 6.6-2.3-1.5-6.4 3.1-.1 1.2 5.3 3 5 .3 3.3 .2 4.2-2.3 2.6-3.6 4.7 .6-6.5-7.5-4.7-.1-5.1 7.2 3.5 .4 6.3-9.3 1.5-.4 8.9-7.4 .3-.9 5.3 .7 1.8-2.1 1.4-1.5-1.3-1.3 1.4-1.4-1.3-1.4 1.4-.7 1.1 1.2 .9 2.2-.1 2.2 0 2.2-.1 2.2-.1-.5-1.9-1.1-1.4-1.3 2.5-1.9 .1 1.1-1.2 .8 1.1 1.9 0 .5-1.1 2.2 1 .5 .9 1.5-1 .7 .9 2.2-.1-.9-.8-1.3 .9-2.2 .1-2.2 0 1.7-.9-.1-1.1 1.6-1.4 1.1 1.3 .8-1.4-1.9 .1-1-1.8-3.8 1.9 .6 2.5-1.2 .9-.7-.9-1.5 1 4.4-.2-6.6 .2-1.2-.9-1.5-1-2.8 0 2.1 1.1-1 .9-2.2 0-6.6 .1 1.7-.9 1.7 0 1.8-1.2 2.5 0-2.9-1.4-1.4 2.6-1.2 .9-.5-.9-2.3-1.1 .6 2 4.4-.1-1-.8M915.2 381.1l-1.9 .8-2.1-.4M917.9 384.6l-2.2 .3M917.9 384.6l1.3 1.7-.3 1.1-1.1-1.5-1.1 .4 2.2 1.1-1.7 1.9-1.6-2.2M920.5 388.1l2.5 3.7 1.2 1.8-.3 1.4-2-1.3 .9-.5 1.1 1.8 1.4 .5-1.7 1.1-.1 2.6 .9 1.6 2 .8 1.9 1.2 .7 1.5 .8 1.7 .6-.7 .8 2 .8 2.1-1.4-1.3-.8-2.1 1.4 1.3-.6 .8M921.8 390l-1.8-1.1-.8 .8-2.2 2.5 3.1-1.2M921.8 390l-.7 .6-1.4 2.4 1.5 2.3 2.4 1.3-2.3 2.3-2.3-3.7-2-3-1.3 2.1-2-2.8-4.2-.6 1.5-3.1 .3-3.3 1.4-1.1 3.2 0M925.3 395.5l1.1 1.9M927.5 399.4l-.4 1-1-1.6 1.4 .6M928.6 401.3l-.3 1.5-.7 1.2 .9 1.8 1 2.6-.5 2.9 1.5-.1-1-2.8 .3-2.4-1.3-.2-2.3-1.5M929.5 403.3l.9 2-1.4-1-1.4-.3M929.5 403.3l-1.2-.5M932 409.4l.6 2.1 .6 2.1-1.3-1.2 .6 2 .7-.8 .5 2.2-2 .5-.5-2.4 1.3 .5-.8 1.9 1.3 .7-.7 2.5-1 2.5-2.2-2.5-.6-3.2 3.2 0M932 409.4l-.6 1.2 .5 1.8-1.4-1.2 .9-.6-1.9-2.2M933.7 415.8l-1.2-1.4M934.1 418l-1.8 1.5-1.6-1.1-2.2-2.1-3-2.4 4.2-.1-2.4-2-1.3-3.8-2-4.1 2.4-2.3M934.1 418l.3 2.1-1-.5-1.1-.1 1.3 1.5 1.1 1.3 .2 2.2-1.9 .7 .9-1.6 1 .9-.7 1.5 .9 .7-.8 1 1 1.2-.9 1.4-.1-2.6-.1-1.7-1 1.8-1.3 1 .1 2.6-1.8 .3-2.4-1.1-3.3-4.4-7.1 1.6-1.8 6.2 8.7 5 2.4 2.4 1 4.2 1.8 .3 2.6-.1 1.6-1.6 .6-2.1-.7-.9 1.2-1.3-1.9 10.6-.9-.7-.9 1.9-.5-.7 0-1.2 0-2-2 1.1-3.1-1.4-4.5 .4 1.4 1.8 3.1-2.2 2.2-1.9 1.5-4.6 2.2 3.5-1.9 1.4-.3-4.9 1.7 .6 1.2 .9 .8 1.1-1.5 .9 .7-2 1.5-1.3-2.7 .4 .6-2.5-2.3 1.9 .7-3.5-2-3.2 4 1.8 1.1 2.6 1.3-1.9 1-1.3-.2 2.2-1.1 1.4 .8 .8 .3-2.2-.8-.9-1-.7 1.2-1.9 .9-.9 0-2.2-.9 1.1-1.1 2.1-3.2-2.6 1.7-2.9 2.5 1.5-1.2-2.5-.2-2.6-1.5-1.1 1.2-1.5 .9-1.6-2.3 1 .2 2.1 2.4-.5 .8-1.3M934.1 418l-1.1-1M934.9 424.5l.2 2.2 .2 2.2 .1 2.2-1-.8 .1 1.9 .9 1.1-.1 2.2M934.8 439.9l-.5 2.2-1.4 8.4-1.8 1.2-2.1 .6-2.2 .3-2.2 .3-2.2 .2 1.1-1 .8-1.2 1.7-1.6 2.6-.4 2 .9-2.3 .6-.2 1.1 .9 .8-.7-1.9-2.3-1.1-3.6 .4-2.4 1.5-2.1-1.3 1.1-4.2 2 2.2-1 3.3-.1 1.1-2.7 .1-1.4 1 2.2-.1 2.2-.1-.3-.9 1.7-.1 1.9-.1-2-1 .9-1.4 1.1 2.4 1.1 .8-.3-2 2.4 .8 .1 .9 1.3-1.1-1.4 .2-2.1 1.2M934.3 442.1l-1.4 1.5-.8 2.2-.3 1.3-1.2 .7-1.1-1.9-.9 3-.3 1.5 2.3 .6-1.6 1.3M934.3 442.1l-2.2 .4M933.7 444.2l-.8 2-1.1 .9 1 1.3 .1-2.2-.8-.4-.7-1.3-.5-2.9M933.7 444.2l-.8 6.3-.1-2.1-2.2-.6 1.4 2-1.4 0M933.7 444.2l-.8-.6M933.7 444.2l-.9 4.2-.8 1.4-1.4 1.2M922.4 453.1l-.8-.9-1.6-1-2.8 1.2 .8 .9 1.9-1M922.4 453.1l-2.2 .1 1.4-1-.1-1.1-1.5 .1M915.8 453.4l.8-2 0-3.2-2.5-2.2 4.9-.3-3.8-2.8-1.1 3.1 .2 4.1 2.3 1.3-1.7 1.2-1.4-1.1-.6 1.1-2.1-1 .6-3.2-4.5 .1 3.4-2.4-2.5-2.9-3.3 3.1-1.7-3 2.3-3.7-.8-5.9-7.7-7.8-2.5 3.5-8.8 .4-4.3 3.8 5.3 4.1 2 5.8 5.8 2.9 3.7 0-1.2-3-2.5 3 .4 2.3-.3 1.8M913.6 453.5l-4.4 .1-8.8 .3-.5-2-.4-3.2 1.8 1.8 2.7-.1 .4 2.5-1.7-1.1-.1 2 1.8-.9 .4 .9M913.6 453.5l-13.2 .4M909.2 453.6l-1-.8M898.2 453.9l-8.8 .1-.9-.9-1.3 .9-2.2 0-2.3 0-13.2 0-2.2-.1-2.2 0-2.2-.1 1.8-.8-1.5-1.2 .9-3.2-2-2.3-4-3.1-6.7-.3 5.3 3.3 1.4-3 4.9-10.4 1.3-3.6-3.7-7.5-6 .5 1.6 4.6-3 6.4-3.5-1.4-6.6 2.5-1.8 3.1 5.2 4.6 6.7-8.8 4.9 10 7.4 .2-2.5-10.6-6.8-6-7.7 1.3 1.2 3.7-5-3.7-3.3 2.3 1.7 3.9M898.2 453.9l-13.2 .1 4.4 0M896 453.9l1.4-.9 1.8 0M896 453.9l-1.2-.9 2.3-1.1 .8-1.4 1.6-1.8-1.7-2.3 .1 4.1 2 1.4M893.8 453.9l1-.9M882.7 454l-.2-2-2.2 1.1-.8-1.1-1.7 1.1-1.9 0 1.2-2.5-2.3 1.4-2.2-1.4-.5 1.4 .7 1.1 2-1.1-2.7 0-1.2 1.1-1.8-1.1 .1 1.1-2.4-.1-1.7 .9-.4-.9M882.7 454l-2.2 0-6.6 0 2-.9 1.8-1.1 .1 1.1 .5 .9M880.5 454l-11 0 2.2 0 2.2 0-1.1-.9-1.1 .9M880.5 454l-.2-.9 .1-2.5-3.2-1.8-.1 1.8-3.4-1.8-1.3-2.3 5.8-3-7.8 0-4.6 2.9-.3-3-3.4 2.9 0 4.1-3.2-.1 .3-1.8 2.9 1.9 1.1 1.4M876.1 454l-.2-.9-1.1-1.1-1.1-3.2 4.6-2.3-1.1 2.3-3.5 0-1.1 1.8-4.3-1.8-4.2-.2 1.7-2.2M876.1 454l1.7-.9M876.1 454l-2.2 0 .9-2M867.3 453.9l-4.4-.1-1.1-.9-1.7 0-1.6 .8 2.2 .1-.6-.9 .7-1.1-1.9-1.5-.9 1.4 2.1 1.2M867.3 453.9l-.5-.9M862.9 453.8l-2.2 0 1.1-.9M862.9 453.8l-6.6-.1 1.1-.9-1.5-2.6-.3 2.5-.8-1.1 .2-3.2-3.2-.2-2.7 1.6 2.7 .2 1 2.6 1.3 1-6.6-.5-.4-.9-.7-1.1-2.1 .8-1.2 .7-.9-1-1.6-1.4-2-.7-1.6 1.1-6.9-20.5 .7 2.1 6.2 18.4 .4-1.9 2.7-1.9-2.5-.8 .6-2-1.1 .1 .5 1.9 1.1-.4-.5-1.6-1.7-1.4-1.1-.3-1.1-2-.9-2 1.7 1.5 .5-1.5 2.6 2.1-1.3 .4-1.5 1.5 1.1 6.3 .2-2.2-.5-2.1-.8-2-.3-2.5 1.8 1-.4 1.8 3 .7 .5-3.4 3.3 1.9 3.2 .2 3.2-10.2 6.5-5 8.1 2.4 4.7-9.4 2.1 6.9-6.8 2.5 5 3.2 2.3 6.1 1.7-6.6-2.2-5.2 3.7-2.4-5.8-4.5 7.3-1.9-3.3-8.9-7.1-4-2.6 4.7-8.7 .2-5.3 6.2-5.7 0 1.2 8.5-5.7-1.4-.9-4.2-.7-8.9 8.7 .6 8.4-.8 9.7 3.5-9.3 4.8 5.6 3.5-4.4 5.1M858.5 453.7l-2.2 0-2.2-.1 .7-2-2 1-.9 .8-1.1-1-1.9-1.2 2.7 .2-.8 1 2 .2-1.2-1.2-2.5-1.6-2.7 1.3-1.1 1.9-2.2-.4-2.2-.3-2.1-.6-1.8-1.1-.5-2 .9 .1 1.2 .8 1.1 1.6 .9-.9 .3 2.1-1.2-1.2-1.2-.5 .1-1.1 1.5-2.7 3.2 .6-1.3 1.6 2.2 1.8 .1 1.1-2.1-.3-1.3 .7M858.5 453.7l-.5-2-2.1-1.5 3.3-1.7 2.9-2.2M854.1 453.6l-4.4-.3 1.1-.9M849.7 453.3l-1.2-1 .4-1.1-1.8 1 1.4 .1-1 .8 2.2 .2M847.5 453.1l-2.2-.1-1-1.1M845.3 453l1.8-.8M838.8 451.7l.9-.6M838.8 451.7l-.3-1.1-1.5 0M836.5 448.6l-.3-4.3 .3-1.7 .6 1.5-.9 .2 1.4 1.7-.9 .4 .7 2.3 .2-2.7M834.3 440.3l.8-.5-1-2 2.2-1.3-1.5-3.3-.3 2.7-2.1-2.1 1 2.4-.9 .1 .9 2 .7-.5-.7-1.6 1.1-.3 1.8 .6 .4-3.5 2.1-.9-1 3.4 3.5 1.9M833.4 438.3l0-2.1M832.5 436.3l-.9-2 .8-.5-.7-1.9-.6-1.5 .3-2.8-1.1 .2-.5-2-.9 .1 .5-2-1-.2 .5 2.2 .6 2.1 .6 2.1 .2-2.3 .8 2.6 1.4 .5-.8 1 1.4 .8 1.7 .5-.8-2.4 2.7 2.2 1.1 2.5-1.5 1 1.9 3.9-1.7 2.2M832.5 436.3l-.1-2.5-1.6-1.6 .9-.3M831.6 434.3l-.8-2.1 .3-1.8-1-.3M827.7 419.4l1.2 2.2M827.7 419.4l-.2-2.2 1 1.5-.8 .7M827.2 415l.9-.6-.1-1.7 1.2 1.8-2 .5-.1-2.2M827.2 415l2.3 2.1 .2 2.6 1.2-2.1 .2 2 1.9 .6 1 4.5 1.1 3.9-2.3-1.5-.3 3.8 1.5-.1 1.1-2.2 2-1.3 4.3 3.1M827 410.6l-.1-2.2 2.1 .7 1.3-3.3 1.8-2.5 0-4.6 2.4-2.5 3.1-2.6 7.9 .1 6.6 6.2 4.8-6.7-8.7-1.7-2.7 2.2 2.4-5.9 .3 3.7 3.9 8.4 3 5.2 7.9-7 2.9 6.9M826.9 404l.9 .1M826.9 401.8l0-2.2 .1-2.2M827 395.2l.9-.4 0 2 2.5-1.4 1.8-1.2-3.2 .1 .1-2.6 1.4 .2 .1-2.4 1.8 .4-1.5-5.2-2.4-.8-.8-1.9 .2-2.2 .7 2-.1 2.1-.2 2.4 1.1 0-.1 2.4-1.1-.3-.1 1.7 1.2-1.4 1.3 .8-1.5 2.2-1.1 .8-.8-1.7 .9-.7-.8-1.5 .1-2.2 .9-.1-.7-2.1 .1-2.2 .9-.2 1.2-.7-1-1.4-.7-2.1 1-.7 1 1 3.6-2.4-2.3 3.3-1.3-.9-1.3 1.8 2.6-.9-1.6 2.3-.2 2 1.3 1.6 1.9-.4 2.5-3.4-.2 3.3-2.3 .1-1.7-1.9-1.5 .7-1-1.3 .2-2.1-.9 .1 .2-2.2 .3-2.2 .4-2.2 .3-2.2 .5-2.1 .9 0-.4-2.2 .5-2.1 1-.3-.6 2.2 1.1 .5 1.9-1.9 1 3.3-2.5 3.4-.5 2.8-1-2.6-.8-1.5 1.2-.6-.4 2.1-.5 2.8-.4 3.1 1.9-3.3 2.2-2.1 2.6-1.7-.8 4.6-2.3 .1 .5-3-1.7-.7-1.5 .2-1.9-1 1.1-.5-.6-1.6 .5-2.2 .9-.2M827.2 390.8l.1-2.2 .9-.2-.8-2 .2-2.2 .9-.3 .9 2.4 1.5-1.6M828.1 377.6l2 .3M828.4 375.4l1-.4 .3-2.2-.6-1.8M828.4 375.4l.7 1.5 .3-1.9-.6-1.8 .9-.4 .8 2 1.5-.2 1.7 .9-.5 4.2M831.2 362.5l.7-2.1 .7-2.1 1.1-.5 .6-1.4 2.1 1.3-1.8 .7-2-.1 .2 2.1-.9 0 .4 1.4 1.5-.8 1.1 1-.9 3.1M831.2 362.5l.4 1.8 .5 2.7-1.6 1.9-.3 1.6M831.2 362.5l1.1-.7 .6 1.9M832.6 358.3l.8-2.1 .9 .2-.1-2.2-.8 2 .3 1.6 .9 .6-.3-2 1.4-.7 1.8-.5-.4-2.3 2.3-1.1 2.1 0-.6-2.4 2.9-.8-2.3 3.2 3.8 3.9 5.1 2.3 .8 11.3 4.9-5.9M834.2 354.2l1.5 1.5 .7 2 1.6 .9 .9-2.2-2.5 1.3 1.1-2.5 1.9-3.4-.8-1.5-2.1 1.4 1.2-2-1.4 .6 1.2-1.9 1.3-1.8 .9 .3 .4-2-1.3 1.7-.3 1.9 .1 1.8-.9-.6 .8-1.2-1-.1 .2 1.3M835.2 352.2l0 2 1.9-1.3-1.9-.7 1.3-.5 .6 1.2M840.1 344.9l1.6-.4-.2-1.3 1.5-1.7 1.5-.1 .2-1.2 2.1-.7 2.3 .9M840.1 344.9l1.3 1.6-1.4 1.8 .9 1.1-1.5 2.4-.5 4.6 1 3.7M840.1 344.9l1.4-1.7M843 341.5l.2 1.1-.3 2.1 3-1.2 1.1 1.4 2.6-1.9 1.5 2.1 3.7 1.1 2-1.2 2.3 2.8-5.4 .5-4.2-1.1-4.1 3.1 1.6-5.4 4.1 .2 .9-1.6 2.8 2.7M843 341.5l1.7-1.3 2 .3 1.1 1-.8 3.4 2.5 2.3M846.7 340.5l-2.2 .9 .7 .9-2 .3 1.3-1.2M846.7 340.5l-1.5 1.8M841.7 344.5l1.2 .2-1.5 1.8 .3-2M839.7 346.9l.3 1.4M835.2 354.2l.5 1.5M832.8 360.4l1.8-2 3.4 .2M829.7 372.8l1.3-.8M829.4 375l1.1-.2-1.4 2.1M828.5 383.9l1.1-.8M828.3 386.3l-.1 2.1 1.2-2.1 1.2 3.2M828 392.5l1 1.8 1.5-2.4 1.9-2-.2 4.3 2.5-3.2-.2 5.2-2.3-2-1.7-2.3M827.9 396.8l1.1 .7 1.4-2.1 1.7 3.3-1.8-.2-1.4 2 1.4 2.8M827.8 399.6l1.1 .9M827.8 407.8l1.1-1.7 1.4-.3 .1 3.6 1.8 .9-1.7 3.1-1.4-1.4-1.1 .7M827.8 407.8l1.2 1.3 .1 2.9 3.1-1.7-.1-4.3-1.8-.2M828.5 418.7l1.2 1 1.4-.1M829.4 423.9l.4 1.9M834.1 437.8l1.5 .5 1.3 2.5M834.1 437.8l.4-1.9M855.6 452.7l1.8 .1M869.2 453.1l1.7 0 1.9 0M886.4 453.1l2.4-1.1 2.4 0-.1 1.1M901.4 452.9l1.3-1.1M910.9 452.7l2-.1 2 0-.6-2.5M917.2 452.4l-.6-1 1.3-1.5 3.1-2M917.2 452.4l.7-2.5-1.3-1.7M926.7 451.7l1.6-1.3M926.7 451.7l-.7-2.4-.5-1.8-.3-2.3 1.5-3.8 2.5-.4M931.8 447.1l-2.3-1.2M933.6 441.2l-.6-2.5 1 .4-.4 2.1-2.1-2.1 .4-3-1.7-4.4M934 439.1l.3-2.3M934.5 434.2l-1.1 .1M934.4 430.3l-1 1M934.3 427.7l-1.1 .1-3.2-.3 3-2.3 1.2 .8M933.9 423.6l-1.2-1M931.9 412.4l-2.2 1.4 .8-2.6M927.1 400.4l-2.7 .4 1.7-2M925.1 396.8l-.2 1.9-1.3-2.1 1.5 .2M923.9 395l-2.7 .3-2.2-.1M923.9 395l-.3 1.6M918.9 387.4l.3 2.3M915 382.3l-2.3 1.1M913.1 380l-1.6-.2 .4-1.2-1.1-1.2M913.1 380l.2 1.9M902.8 369.8l-.8 .7 2.4 2.1M901 368.3l-1.3 .3M894 362.8l-.7 .8-1.1 1-1.3-2.7M886.6 357.6l-1.8-1.2-1 .7 1 2.3-1.6 1.1 2 1.3M875.6 350.9l.4 1.5-1.4 .8-1.3 4 4.2 2.4-4.9 .7 4.1 2.4 6.1 .3 .1 3.6-4.5 3.6 .4 9 4.3-2.9 7 6-2.7 4.6-3.8-6.3-4.4 6.5 4.4 5.9 7.7 1 6.3 .4 9.1 0 1.7 5.4 2.9 6.9-3.7-2.4-7.2-6.2 2.2 9.9-5 6.3-2 9.2-4.7-10.1 2.5-3.8M873.5 349.8l-1.1 2.3-.9-2.1M862.9 344.7l.8 1.6-.2 3.4-3.6 .9-4.1 1.6-6.3-2-4.2 5.5-3.5 .1 .9 5.4-2.4 7.8-3.5 1.8M862.9 344.7l-1.2-.5-2.7-1.1M852.9 341.2l.4 1.2-1.3 1.1-1.9-1.8-2.3-.2 1.8 1.5 2.4 .5M847.8 341.5l-1.9 2-2.3 2.5M831.4 369.9l1.1 1.9M829.8 381.1l1.3 1.3M829 397.5l1.3 1M829 409.1l1.4 .3M829.2 414.5l1.7 3.1 2.1 2.6M829.2 414.5l1.3-1.1 1.9 1 2.5 2.1M830.3 423l1.7 1.5-1 1.4 .4 1.7 1.4-.5M831.4 427.6l1.1 3.3 .6 1.8M835.6 438.3l.7-1.8M838.2 444l1.3-.7-1.3-2.9 1.8-.5M838.7 445.6l1.4 1.2 1.9 2.2-1.4 1.2-.5-3.4 1.5-2.7-2.1-.8M844.2 450.8l.9-1.3 1.2-1.7 2.8 2-.2 1.4M846.4 451.1l-1.3-1.6M846.4 451.1l-.1-3.3-.7-2.4 .9-3.4 4.5 3.8 .8 2.4 0 1.8 3.2-1.6-4-2.6-1.9 4M851.6 451.4l.2-1.4 3 1.6 1.1-1.4 3 .1M866.1 451.9l-2-3.3M869.1 452l3 0-3.4-1.4 3.9 0-.2-4.1-4.1 2.3M869.1 452l-2.3-1.5 1.9 .1M877.7 452l1.8 0-2.4-1.4 .6 1.4M885.6 452l2.1-1.4-2.5-1.8M891.2 452l-.2-1.4M905.5 451.7l1.4-3.2-2.4-2.2-1.4 2.3-.3-5.3-1.8-4.3M908.7 451.7l2.7-3.3-1.1-2.3M908.7 451.7l2.1-.1 2.7-.1M924.3 450.9l-1.9-1.2M932.3 419.5l-3.2 0 .6 4.7-2.2 1.3-3.6-5.1 .6 5.8 3-.7-.8-6.3 2.4 .3 1.6-1.1M928.5 405.8l-2.5 2.2-1.9 1.5M911.5 379.8l-1.7-1.9-1.5 .4-2 4-.8 3.6-7.9 8.5 2.8 3.7 8 1.7 5.6-2.6M905.8 373.9l-3.4 1.3 1.2 4.2M888.1 359.9l-3.3-.5 1.1-.9-2.1-1.4-2.3-1.5-.5 1.4 2.8 .1M881.5 355.6l-2.5 .1-.3-1.7M874.4 351.5l.2 1.7-4-.1-1.7-2.9 .2-1.4-2.8 .2-2.6-2.7-1.9-.9 .3 1.7-3 .7M874.4 351.5l-2 .6M863.7 346.3l-1.6 .8-2.7-1.1-2.6-1 1.4-1M861.8 345.4l-2.4 .6M856.7 343.5l-3.4-1.1M856.7 343.5l.1 1.5M850.1 341.7l-.5 1.3M855.9 450.2l-.9-1.8 1.7-2.2 2.5 2.3-4.2-.1M877.1 450.6l3.3 0 1.5-1.8-.2-2.3M928.6 448.9l-.9-3.3-2.5-.4M931.9 436.1l-2 1.4-3.2 3.9-4.4 1.1M929 411.3l-.9-2.7M901.1 371.6l-2.9-2.4M901.1 371.6l-1 1.5M889.9 362.9l-2.1-1.5M868.9 350.2l-2.6-1.2M830.9 417.6l1.5-3.2-.2-4.1 5.3-.2 6.1 6-5.4 2.9M838.2 440.4l-.4-4.9M881.9 448.8l-3.6-2.3M930 427.5l-2.5-2 .3 5.1 .1 3.7-3-1.8 2.9-1.9 2.2-3.1M921.3 398.9l-2.6 .2M914.8 389.1l-1.1 2.4-2.7-3.7-5.5-1.9 1.2 8.5 2.8-3.5M905.7 378.3l-3.3-3.1M895.6 369.4l-.8 2.3-3.8-2.9M870.6 353.1l2.7 4.1-.7 3.1-6 .8-6.8-2.4-4-6.5-5.4 5.8M867 351.3l-2 5-4.7-2.3 2.7-2M835 368.4l3.3-3.4M832.8 384.3l-.4 5.6M832.1 403.3l0 2.7M834 424.7l5.1-1.5-2 4.1M926.7 419.2l-2.8 1.2-6.5-2.2-4.5-2-7 .7 .5 6.1 6.5-6.8-3.3-3.9-7-4.3 3.3 8.9 3.7-4.6 5.8-4.5 4.4-.5M921.6 404.2l-3.9-.9-2.3 4.5 2 10.4M900 376.1l.9 4.9M836 375.4l-.7 5.5 2.7 4.4-3.3 5.7 .4-6.8M835.3 380.9l3.2-1.6 .9-6.2M834.5 396.2l-.1 5.1 3-1 8.1-6.6-3.6-7.5M851.4 442.9l1.8-9.7 9.8-.4 8.6 5.7M907.8 443.2l7.8-9.2M922.4 414l-7-6.2M905.5 385.9l-12.9 3.1-1.3 5M888 370.3l-4.9 6M860.3 354l-4.5-1.8M838.5 379.3l-.5 6M859.8 358.7l3.6 6.9 1.1 5.1 8-2.8-9.1-2.3-5.1 4.3 3.3 7.3 2.9-6.5M845.6 371.6l2.5 4.7 3.1-7M841.8 381.1l10.4-1.3-4.3 8 6.4-3.3-6.1 7M858.3 382.1l2.6 2.7 3.5-5.5-6.1 2.8M869.5 379.8l-2.1 7.1-.7 7.6-9.8-1.3M878.8 379.2l-4.9 6.4M878.8 379.2l4.8 1.4M890.1 382.3l2.5 6.7 5 5.4M866.7 394.5l-1.5 2.5 8 6M866.7 394.5l5.9-1.5M847.5 400.8l1.1 1-2.4 8.9M847.5 400.8l4.6-.9M863 398.1l2.2-1.1 8 .6M882.7 395.9l1.5 7.1-2.7 6.6-5.2 8.3 3.9 5 2.7-6.5-1.4-6.8-6.2-5.1-2.3 4.5M882.7 395.9l7.6 .5-1 9 4.5-4.6 2.7 5.7 3.9-8.4M890.3 396.4l3.5 4.4M908.4 399.8l-.8 4.5M848.6 401.8l6 8.1M848.6 401.8l6.5 3.3 8.2 4.6M849.3 416.1l5.3 6.1-6.1 5.9-3.8 0 .1-3.5 3.7 3.5M849.3 416.1l5.7 2.1M864.3 413.4l4.7 6.4-8.4 1.9 3.7-8.3 6.6 1.4-1.9 5M870.9 414.8l5.4 3.1-1.5 6.4M876.3 417.9l6.6-1.5 8-3 6.7 .9M917.3 422.7l-7.1 6.7-3.5 4.1-.3-6.7-2.1 6.9-10.2-4.3-1.1 4.3-7.7-3.9M871.1 426.7l-1.8 5.7 4-.5M871.1 426.7l6.3 2.4 3.6 4.5M896.6 425.9l9.8 .9 3.8 2.6 7.2-1.6M863 432.8l6.3-.4M904.3 433.7l2.4-.2" fill="none" stroke="#111" stroke-width="1.0" stroke-opacity=".9"/><path d="M846.4 341.8l-2.8-.8 3.3 5-4.2 4.6 6.5 2.5 6.7-5.1-1.1 7.4 2.4 5.8-2.4 3.6 .9 2.2 5.4 1.8 4.7 3.3 4.8-3-5.9-3.7-2.4-7.8 2.7-.1 5.5 1.9 10 1.7 .5-8.1-5.3 .2-3.2 .9-7.6-.4 .1-6.5-5 .2 .4 8.7 1.9 1.5-4.2 5.7-3.3 1.5-4.5 4.7-5.2-4.8-.6 6.9 4.5 3.5 1.3-5.6 2.5 4.5 2.9-7 2.4-3.7 3 5.5 2.7 6.9 6.7 1.3 6.3 2.1-3.3 1.6 4.1 1.9-6.7 1.5-5.3-3.1-2.9-2.3-2.9-3.2-4.4 3.4-1.5 5.5 3 4.9 1.6 7 5.1 2.8-6 1.4-3.2-6.3-4.8 7.5-3.7-5.2 3.5-8 4.5-4.1 6-1.4 4.1 8.7 1.8 3 2.1 2.5-3.8 8.7-.1 6.3-5.9 .7-1.5-1.3-4.1 1.4 .9 4.5 10 1.5-5.3-6.1 1.8-4.3-1.7-5.1-8.7 2.7-3.2 1.2-10.1 1.8-7.4-4.4 3.5-3.5 3.9 7.9 7.1-4-4.2-6.5-1 6.8 5.2-.3-.3-7.1 2.9-1.6-2.8-4.5-4 6.7-.2-7.7-5.9-4.8 9 3.2 4.6-2.9-1.3-8.3 2.7-1-4.2-1.2 .7-4.4-5.5 .3 1.2 5.6-8.7 0-3.4 .3-.5 5.8-.4 5.9 4.2-.4-3.8-5.5 3.5-1.5-3-4.3 .8-5.7 6.1-5.4-3.3-5.9-1.6 5.6 4.9 .3-4.2 7.7 5.7 .6 3.7 2.5 3.6 6.3-10.8 2.4-1.9-4.1 .4-4.6-.7-3.1-1.9-2.3 1.2-5.7M846.4 341.8l2.6-2.3 5.2 4.3 5.5 2.1 .5-3.3 5.4 2.3-.6 2.3 5.8 .2-5.2-2.5-5.9 1 5.3 1.3M846.4 341.8l7.8 2 1.7 4.2 4.1-.6-.3-1.5-3.8 2.1-6-.3-7.2 2.9-3.3 .2 .9 3.8-2.2 5.1 7 5 .3-4.9 3.8-6.7-8.9 1.5-6.6 .7 4.4 4.4 7.3 .1 6.7 2.3 2.7-6.7-5.6-2.3 .7-5.4 4.3-3.9 6-1.2-5.5-1.9-5.7-1.2-5.4 1.5-3.9 4.4-3.3 4.7 3.9 4.5 5.1 5.2M846.4 341.8l.5 4.2-7.2-.6-.3 5.4-3-.7-2.7 5.2-2 5.5 6.4-1.1 4.7 7.4 1.7 4.5 5.8-2.1 5.4-2.5 4.1 8.5 1.3-6.7 3.6-3.4 1.1 6.7 7.9 .1 4.1-1.5 7.8-2.3-5.1-7.3 4.2-2.4 1.3-2.6 4.8 3.2 .1 3.9 7.1 4.2 6.5 2.7-4.4-3.8-4.6-3.5-4.7-3.5-1 4.8-.4 6.1 4.8 1.9 1.1 7.7 5.5 1.5 7.2-3-2.6-4.6 3.4 .4-.8 4.2 3.1 4.8 .6 4.1 4.5 5.4-1.8 7.8-3.7 4.4-6.2 1.6 3.1-5.3-7.9 1.6-1.6 4.5-5.7 2.5 3.3 8.8-4.4-1.7-1.8 1.4-3.4-1.5 6.3-7-6.9-3.7-1 3.8-5.2 1.4 3.7-7.4-3-5.6-2.2 4.3-7.2 4.1-6.5-.7 2.5 2.2 4.8 4.9 4.5 .8 4.9 1.4 1.6 6.9 8.5 3 .3 2.5-.4 8 5 3.8 6.8-.7-4.9-6.1 .8-6.9-7.3 1.9-1.3-.9 1-1.6 7.6 .6 4.2-.1 7.4-3.7-.8-9.1-2.8 .8-2-7.2 5.2 2.1-.4 4.3 6-.6 7.8 2.4 .8 5.4-2.2-1.9-7.4 3.2 1.6 2.8 8.3 2.8 4.2-2.5 2.1-3.6-1.8-5 5.6 3.1 .7 5.8 .3 5.8 0 5.9-2.5-7.1 2.5 1.2M846.9 346l7.3-2.2 .5-3.1M846.9 346l3 1.7M842.7 350.6l-2.4 4M842.7 350.6l-3-5.2M855.9 348l4.5 8.1-3.2 5.1-5.1 .9-1.8 7.4M860 347.4l4.9 6.3 .1 3.8-.3 7.9-6.6-2.1-.9-2.1 5.1-3.6 2.6-3.9 5.9-6.3 5.2 2.7-.3 3.1 4.8 7.9-.9 3.6 6 3.7 4.2-4.3 4.4 8-3.8 6.1 2.7 7.3 2.2-5.7 5.6-3.2-.1 4.7-1 2.1 .6 5.9-3.9 2.4 5 .9 1.6 5.7 6.4-1.2 6.7-4.5 4.5 2.2 5.6 2.4 2.8 5.1-3.1 1.5 5.4 3.9-2.3-5.4-3.9-2.9 .8 4.4 .1 7.3-4.9-5.1-4.4-6.4-.7 7.1-5.4-1.9 1.7 3.8 2.9 3.6 6.4 5.9 1.4-3.5-1.9-8.6 4.8-2.2M849.2 353.1l2.9 9 2.7 2.7M854.8 355.4l5.6 .7 4.5-2.4M872.5 354.1l-2 5.3 3.5 6.2-.3 6.6-3.2 4.8 .4 7.1 9.1 3.5 4.7-.2 5.4 2.6-.9 4.6 .3 3.5-7.3-.2 7-3.3-7.5-.6-8-1-2.3 3.5 1.8 1.6-2.6 8.5 4.9 4.6 .4 2.6 3.9 7.1-6.6 .4 2.3 2.6-3.6 3.9 .2-5.2-6.7-.5-2.5 .6 1.3 4.4-7.8 1 5.7 5.5 10.3 1.2-.5-7-3.9 .2-3.8-.9-2.1 6.5 4 4.9 1.6 5.7-5.4 .6 4.3 9.1 2.7-5.9 5.4-5.4 .9-1.7-9.5-2.4-4.5 1.5-5.5-2.5-6.3 3.2 1.4-5.5-3-3.4-.7 5-1.1 1.5-7.2-2.6-.7 2.7-6.4-3 5.6 15.8-3.2-10.6 4-2.2 4.4 4.8-3.3 4.1 3.7 5.4 5.8 .5 5.8 .4 4.7-2.6-6.2-1.3-2.6-4.4-3.2-1.1-1.2-5.9-3.5 4.9 4.7 1 4.1 7-2.6 2-1.5-9-8 3.1-2.9-1.3 1 5.2 5.6 1.5 4.3-8.5 2.2-3.5 1 4.6 .9 5.9 3.2 2.4 5.8 .2 5.9 .1 5.8 .1 1.2-4.6 4.6 4.6 5.8 0-5.6-4.2-3.7-7.2-1.1 6.8-4.3-1.4 3.1 6 5.8 0 .2-4.2 1.8-6.9 5.6 6 4 5.1 5.9-.1-.6-4.1-5.3 4.2-.8-5.2-2.6-6.4 5.8-2.9 3.6-.1 1.9-6.8-2.4-2.4-4.5 5.4 1.4 3.9 2.3 4.2 .6 6.1 4.8 .8 5.2-4.3 6.8-2.1-2.4 4.9-2.2 4.6 5.8-.2 5.9-.3-6.3-1.4 5.8-4.8-6.6-2.8-6.7-4.7-.1 6.8-3.6 7.5 5.8-.1-2.2-7.4-8-3.3 5.5-4.3 2.6 .8 1.4-3.3 1.8-.5 4.1-6.1 2.9 6.6 2.1-7.4-5-3.5 0 4.3-6.7-1.4-1.3 .7-1.8-3.3-1.5-9.2 3.2 .6 2.1-3.4-4.4-3-9.7-.9-7.9 .1-1.5-6 2.5 2.2 4-7.9 6.2-.4-.4-3.3 1.2-2.7-3.4-6.2 6.7-2.1 5.8 2.9 1.9 3.8 8.7 2.5 7.1-.4-3.3-4.8-3.5-4.6-5.4 .3-5.5 3.2 2.4-8 4.8 0-1.7 4.8M872.5 354.1l3.5-4 5 2.9 3.7 5.7 .9 9.7-4.2 4.9 6.7-.1-1.1 5.9-10.2 0-3.1-6.9-3.1-3.1-.8-3.3-5.1-.4 5.8-6-.7 6.4 4.2-.2 3.8 5.1 3.6 2.6 5.6 5.8-1.3 5.3-1 3-.8-2.1 1.8-.9 4.7-6.2-2.3-5 1.3-3-3.8-1.8 2.5 4.8 6.1-1.1 3.8-4.7 2.9 9.2 7.1 1.7M872.5 354.1l-7.5 3.4M872.5 354.1l-1.7-6.7M875.7 353.2l-5.2 6.2M838.1 359.7l-3.1 7 4 5.2 3.8-4.8-7.8-.4 1.5 8.3-5 2.5M852.1 362.1l-7 2.6-2.3 2.4M880.5 361.1l-6.5 4.5 5.6-.9-1.8 6-1 8.4 4.6-5.8M884.7 358.7l5.1 5.4 1.1-.9 4.6-.4 2.5 4.6 2.1-1.1M884.7 358.7l6.1 .6M874 365.6l-3.4 3.5M889.8 364.1l8.2 3.3M839 371.9l4.8 4.1 5.2-.9 6.4 3.8-7.4-1.7 1-2.1 3.8-1.1 7 1.5 4 .2 1.8 5.3 1 3.9-6.7-1.9 2.8-4.3 1.1-3 2-3.6 4.7 4.9 3 3.7-2.6 3.4 .2 6.7-4.5-5.9-.5 6.2-.3 3.6-7.3 1.6-.9 4.2 .6 3-1.6 8.1-7.6-3.9-.1 4.3 3.6 1-1.2 4.7-7.9 3.9-2.7-5.4 1.2 6.3-4.4-2.6-4.7-1.3 2.1 6.3 1.5 2.9 0 4.8 2.8 3.1-7.1-.3 4.3-2.8-2.4-4.5-4 1.8-1.5-5.6-.9-5.8-.5-5.8 7.5 2.5-1.8 3.4-5.7-5.9-.2-5.8 7.2 3.4-5.3-5.5-1.9-3.7 5.4 .2 6.8-2.6-4.9-4.2-3.1-1.1 1.2 7.9 5.8 4.2-1.9 3.7 4.5 7-3.2 3.7-2.6 5-.9 3.2 2.4-.3 6.5 .4-1-5.7 1.5-.9 4.4 4.1 3.8 .1 4.9-1.9 6.4-1.2 .5-3.7 .6-6.8 7.4 .8 1.8 8.3-1.1 1.3-4.1 5.4-2.6-5.9-1.2 5-7.7-3.2-3.1-6.4-2.1 .2 .3 8.1 4.8 2.3 .8 6.9 4.4 5-2.1 5.5 .1 5.5 1.1 2.8M839 371.9l-2.5 3.1M830.8 374.4l-2.7 3.4M843.8 376l1.5 2.2-5.1-.7 3.6-1.5M852.8 374l2.6 4.9 4.5 4.1-3 6.3-2.5 4.9-8.5 2.3M870.5 377l-4.9 4-5.7 2M894.2 372.1l6.7 4.5 4.5-2.9-.9-3.6 4.3 4 4 4.2 3.7 4.5-4.8 4.4-4.2 2.9 2 7 4.9 3.3 2.4-.8-.6-7 3.8-5.2-8.3-.2-6.1-.9-5.2 3 1.1 3.3-5.8 5.1 7.4 .6 4.5 2.8 6.8-.7 1.7 6.3 5.1-.7 4-6.6 1.1-2.2-3-5-2.6 2.6 4.5 4.6-8.4 .2 3.9-4.8M900.9 376.6l3.6-6.5M840.2 377.5l-7.2 8.7-1.6 2.9 2.8 5.4-1.9 6.8-5.3-6 4.1-1.9-3.9-3.9-.2 5.8-.1 5.8 0 5.8 1.9-2.1M840.2 377.5l-9.1 4.6M845.3 378.2l-1.5 5.6-1.8 5.6 1.1 2.6 6.3-3.5 7.5 .8 7.1 2.4 2.6-6.8 4.3-.8M848 377.2l5.9 7.2-7.3 2.1 1.4-9.3M855.4 378.9l7.3-.2M876.8 379.1l.8 3.5 2.4 5 1.7 6.4 .5 3.9 .8 5.9-5.2-1.3 1.5 8.7 1.5 4-1 5.7 2.6 1.2 7.1-3.9 6.2 .3 5.5-2.1 .9-5.8-4-3.4 6.4-.8-2.4 4.2M887 379.1l3.4-.9 4.9 1.6 4.5 3.6M887 379.1l-3.1 6.2-6.3-2.7 9.4-3.5M900.8 381.3l4.8 5M833 386.2l-5.4-2.6M843.8 383.8l2.8 2.7-3.5 5.5-4.2-1-7.5-1.9-.3 4.3M846.6 386.5l2.8 2 5 5.7 4.1 2.1 5.5-4.6 2.1-.6 5-.3 2.6 2.2 6.3 5.2-6.8-.1-5.3-.9-4.3 1.9 .5 6.8-4.2 2.7 4.1 3.6 2.6-4.1 4-1.5-2.7-9.4 3.5-.7-.3-5.7 8.9-3.2 3.9-2.3M885.7 384.4l4.4 5.6 3-4.5 7.3 3.8 7.1 .8-3.7 4.1-2.3-1.6-6.2 1.8-6.1 .2-4.5-7.2-3 6.6-1.7 4.2 2.2-.3M885.7 384.4l7.4 1.1M838.9 391l-4.7 3.5M838.9 391l3.1-1.6M871.1 390.8l-5.3 3.9-2.2 4.4-5.4 4.4-7.2-.3-1.4-1.5-.1 4.5 1.5-3 6.6-2.7-8 1.2-6.3 3.5 3 2.2 2.7 .3 .5-1.5 7.1 5.4 3.3-3M880 387.6l-6.3 5.4-.5 5.1 4.6 4.4-2.3 8.7-4.1 1.8-6 9.1 7.8-.8 2.7-7.5 3.4-2.6-3.8 0M890.1 390l6.4 1.7M890.1 390l5.2 4.4-5.8 3.7 5.9 7.6-3 4 8.8 6.7-2.7 9.3 6 3.2 3.9 6.8 3.5 8.5 1.8-6.8 1.7-1.2 5.4-1 4.2 4.3 5.3 6.5 1.9-4.6-4.2-7-7.2 .8-1.7 6.8 4.4 1.1 1.3 9.7-5.8 .4 .5-2.5-1-3.7 5-3.9 6.8 2.9 4-3.9-2.1-.7 3.1-5-7.3-2-1.6-6.8-5.6 7.6 3.4-8.3 2.2 .7 2-3.2 4.4 4.9 2.2-4.6-4.5-3.9-6.6-.8 4.8-4.2 4.4-2.6-1.7-5.5-5.3 3.4 2.6 4.7-5.6-1.2-5.5-6.3-5.2 .3-3.1 4.2 5 8.5-4.2 .6 2.4 3.4 1.8-4 1-9.1 2.3-3.9 3.6-2.3M907.5 390.1l-6 2.5M843.1 392l-.1 6.1-3.9 .6M865.8 394.7l5.6 1.8M903.8 394.2l-.7 4.1-3.4 4.4-4.3 3-9.9 .3M903.8 394.2l5.7 2.9-1.9 4 3.1 3.7-1 3.7-3.2 5.1 3.6 8.3-4.3 6.3 6.7-2.9 3.4-1.2 1.6 4.7-5 .8 1.2 7.8 5.4 4.6-.6 5M843 398.1l6.6 3.6-3.3 5.7 2.6 4.6-8.2 4.2-6.1-1-.5-4.9 2.1-1.1-1.6 6 2.9 4.7M889.5 398.1l-6.5 5.7M895.7 397.7l4 5 4.8 3.7M895.7 397.7l-.3 8 2.7 1.5M858.2 403.5l5.9 2.4M870.6 406.6l.8 6.4-8 6 2 3.1M916.1 406.7l1.5 1.6M916.1 406.7l-3.7 1.9-2.7-.1M834.1 410.3l-7 2.4M846.3 407.4l-5.6 8.8 10.6 1.5-3.5 8 .4 6.1-9 3.9 3.7-7.5 .5-6.6M849 407.7l3.5 5.3 5.6-.1-4.7 4.6-1.8 8.3-3.4 6 8.2-3.7-5.2 7.1 4.9 2.3 1.1-2.5 4.9-1.4 5.9-5.6 4.4 6.8 6.3 4 1.7-5.5 4.7 4.6 .5-3.4-.4-2.6-5.7-5.7 .3-5.3-4.3 3-3.4-1.3M884.5 409.8l1.6 6.9-3.7 5.4 7.5 4.6-4.7 5.2-4.8 1.4-2.8 .1 3-3.2 4.6 1.7-2.8-9.8-2.9 4.1 1.1 4-.2 3.1 5.2 1.2 5.2 1.1-5.7 2.3 1.3 4.5-6.2 .5-5.5-.3-8.6-4.1 6.3-3.7 3.2 6.1 3.1-2.1 1.5 4.1 4.9-5-6.4 .9-1.1-5.4-5.7-5.6 7.6-1.6-1.9 7.2-5.2 1.4M884.5 409.8l-3.7 5.4 5.3 1.5 5.2 .1 1.1-7.1M926.1 411.1l7 2.1 1.2 5.7-3.8 1.9M926.1 411.1l-3 3.5M848.9 412l2.4 5.7M901.2 416.4l5.3-2.8M832.8 418.6l-5.2-.1M832.8 418.6l-.6 5.6-2.2 5.7 6.4 2.7 6.5-4.4 4.9-2.5M832.8 418.6l-4.3 5.7 3.7-.1 2.7 .7 7-2.4-5.5 5.3M863.4 419l-6.9 4.9-.1 4.2M889.5 418.2l1.4 6.9 4.8-6.6 2.8 7.2-3.2 4.5-4.1-2.6-6 4.3 5.6 3.7 6.9-3 8.9 3.6-2.1-7.3-6.8 3.7M904.4 417l5.7 4.9M904.4 417l-1.7 8.6 3.1 2.6 2.6 7.5 5.3 1.7M921.7 418.1l-5.8 6 8-4.1 4.5 4.4 6.6 .3M923.9 420l.3 6.9-6.7 1.9 3.3 6.4M832.2 424.2l1.8 3.9M875.5 423.9l4 2.3M842.9 428.2l5.3 3.6M926.4 427.6l6.4 1.7-4.8 5.1-3 5.1-1.5 3.6-4 7.6 5.3 2.1 5.5-6.8 .2 5.9 2.1-4.3 1.7-5.5 1-5.7M839.2 435.7l8.3 1.1 3.7-1.6 6-.2M847.5 436.8l2.3 3.9-3.4-2.4-7.9 .1-1.8 7.6-2.2-5.4-2.4-5.2-2.1-5.5 7.7 21.3 1.9-3.9M862.1 433.6l-.5 6.4 6.1 4.2 1.6 3.8-7-3.2-2.8 .7-6.1 4.2-1.7 1.5M906.6 436.2l-4 2.5 2.5 7.6 4.4 2.8 3.2 2.7-5.4 1.9M908.4 435.7l-3.2 3.8M915.4 436.2l3.7 5.8-7.2 2.2 .8 7.6 6.8-1.1M856.1 437.5l3.4 8-8.7-.2 5.3-7.8M861.6 440l.7 4.8-2.7 6.2 7 2.9M875.6 440.9l4.6 2M885.1 437.9l7.1 1.6M895.8 439.4l1.3 3.6 2.8 7.6-4.2 3.3 5.8-.1-1.6-3.2M895.8 439.4l-1.3 4.3-8.1-1.3-.6 6.5-7.4 .9-4.8-.4M919.1 442l5.9-2.5 7.2 1.9M842.9 443.2l-6.2 2.8M867.7 444.2l7-1.6M894.5 443.7l-5.5 5.1-3.2 .1-1.8 5.1 5.8 0M894.5 443.7l2.6-.7-2 6.8-6.1-1M930.3 446l2.3 1.6M853.4 449.7l1.5 3.9M912.7 451.8l.4 1.7M881 353l5 3.1M930.5 451.9l-5.7 .9" fill="none" stroke="#555" stroke-width=".45" stroke-opacity=".5"/><polygon points="849,339.5 851.6,339.9 854.7,340.7 858,341.8 861.6,343.2 865.3,344.8 869,346.5 872.8,348.4 876.7,350.5 880.8,352.9 884.8,355.4 888.8,358 892.7,360.7 896.4,363.5 900.2,366.4 903.8,369.4 907.3,372.6 910.7,376 914,379.6 917.2,383.5 920.3,387.8 923.3,392.3 926.1,396.8 928.6,401.3 930.6,405.6 932.2,409.8 933.3,413.9 934.1,418 934.7,422 935.1,425.8 935.3,429.3 935.4,432.6 935.3,435.7 935,438.6 934.6,441.3 933.9,443.7 933,445.8 932.6,447.6 932.9,449.2 933,450.4 932,451.5 929.1,452.3 923.5,453 913.7,453.5 900,453.9 884.5,454 869,454 855.3,453.6 845.5,453 839.9,452.1 837.2,451.1 836.4,449.7 836.5,448.1 836.7,446 836,443.5 834.5,440.5 832.8,437.2 831.3,433.4 829.8,429.3 828.6,424.7 827.7,419.8 827.2,414.2 826.9,407.7 826.9,400.9 827,394.1 827.3,387.6 827.7,382 828.2,377.1 828.8,372.7 829.6,368.7 830.5,365 831.4,361.6 832.5,358.4 833.7,355.4 835,352.6 836.4,350.1 837.8,347.9 839.3,345.9 840.7,344.2 841.9,342.7 843,341.5 844.1,340.5 845.4,339.8 846.9,339.5" fill="none" stroke="#111" stroke-width="1.8"/><polygon points="690.4,457.7 940.4,457.7 940.4,526.9 690.4,526.9" fill="#f6f6f6" stroke="none" stroke-width="0"/><path d="M690.4 457.7l0 12.2 2.9-.1 9.4-12.1 14.9 0 .3 11.7-15 8.4 14.1-.3 13.2-8.3 10-11.5 .5 11.3 13.6-.2 1.1-11.1-15.2 0 14.1 11.1 8.4-11.1 17.2 0-1.6 10.9-7.7 8.1-21.4 .3-11.1 .2 .7 14.7 13.2 17.1 13.5-.2-2.5-17.2-13.8-14.6-8.5-8-10.5 .2-12.3 .2-15.2-11.7-12.3 0 2.9 12.1 9.6 8 10.1 14.6 10.6 17-16 .3-6.3-17.1-10.9 .2 0-14.8 0-8.1 1.4 8.1-1.4 14.8 0 17.2 17.2-.3 8.2 17.2 15.6 0-7.8-17.5 17-.3 .7 17.8-9.9 0 9.2-17.8-6.7-17.1 4.2-14.8-7.9-8-12.6-11.5 22.6 0M702.7 457.7l.2 20.1-1.6 14.8-10.9 17.4 12 16.9 5.2-17.2 5.4-17.3-11.7 .2-9.5-14.6 1.5-8.2M755.4 457.7l7.3 0 15.6 10.9 10.2-.1-6.2 8.1-11.7 .1 .4 14.8 6.8 17.2-.1 18.2-16.3 0-9.4-17.9 11-17.4 8-.1 11.3-14.9 12.8 14.7-.1 17.2 14.1 0 19.2 0-10.8-17.2-8.1-14.8-6.7 0-1.3 14.8 7.7 17.2 7 18.4-10.3 0-10.8-18.4-17.2 .2-12.3 .1 12.2 18.1 16.4 0-16.3-18.2 17.3-17.4 7.6-14.8-14.2-8 13.5-.1-2.8-10.7-10.7 10.8-8.6-10.8 19.3 0 15.8 0 12.4 0 15.8 0 3.3 10.8-6.8 8.1 11.6 14.8 10.2 17.3-11.5 18.2-11.7-18.3-10-.1 9 18.4-21.2 0 12.2-18.4 7.1-17.2-11.3-14.8 8-8.1-4.7-10.7-8 10.7-10 8.1 14.7 0 15.6 .1-4.3 14.7 2.9 17.3 23.2 .1 17.8 .3 6.2 0-5.5 17.9-9.6 0-8.9-18.2 1.3-17.1 21.3 .2-8.2-14.9 .5-8.1-3.1-11.1 20.9 0 8.4 0 13.1 0 16.9 0 7.8 0 0 12.2-7.8-12.2-7.7 11.9 5.2 8.2-6.1 14.7 .1 17.2-11.4 17.2 10.9 0 8.6-17.1 8.2 .2 0 16.9-16.8 0 .5-17.2-16.4-17.5-4.8-14.9-12.6-.2-14.4-.2-12.1-.1-2.6-8.2 15.2 .2-12.6 8-1 14.8 16.5 17.4 .7 17.9 18.1 0 8.1-17.5-4.9-17.3-11-15 7.9-8 4.4-11.4 7.8 11.6-7.5 8 13.3 .3 13.9 .2 10.3-7.9 0 8.1 0 14.8-16.4-.3-7.8-14.9 8.7-8-9.2-11.9-5.3 11.6-12.2-.2-4-11.4-3.9 19.4-13.9-8.3 17.8-11.1M762.7 457.7l7.9 19-16.3-7.9-5.1 8.2-10.4 14.9-4.9 .1-20.9 .4 4-14.9 .9-8.1M815 457.7l4.4 10.7-17.4 0 7.4 8.1-8 14.8-6.3 0-24.1 .2-5.5 17.3-4.1 18.1-20.1 0 10.7-17.9-11.4 .1-1.8-17.2 24.2-.3 7.6-14.9M815 457.7l-13 10.7 .7 8.1-20.4 .1-4-8M843.2 457.7l-11.1 10.7-12.7 0 4.7 8.1-6.6 14.8 17.9 0 15.9 .1-4.8-22.9 14.8-10.8-18.1 0M861.3 457.7l12 0-12.1 10.9-14.7-.1-14.4-.1 7.6 8.2M861.3 457.7l-.1 10.9M740.7 469l-2.6 8.2-21.1 .3 16.9 14.5-10.3 17.4-7.8 17.5-13.4 0-12 0 0-16.9M846.5 468.5l17.3 8.3-12.5 14.6-13 17.2-1 18.3 12.7 0 20.4 0 8.9-17.9 4.8-17.2 1.4 17.2 20.7 .4 17.9 .3 8.1 .1 8.2 17.1M898.2 469.1l4.7 8.2-1.6 14.8-15.8 16.9 12.6 17.9 14.6 0-6.5-17.5 1.5-17.2 8.5-14.6-5.8-8.3 14.5 .3 15.5 .3M690.4 478l1.4 0 11.1-.2M875.9 476.9l-13.1 14.7-11.5-.2M890.3 477.1l-6.2 14.7 17.2 .3 6.4 .1 16.3 .3 8.2 17.3 8.2-17-10.3-15 10.3 .2M801.4 491.3l-6.4 17.2-.9 18.4 11.7 0 3.3-18.4 8.4-17.2-16.1 0M940.4 492.8l0 17.2" fill="none" stroke="#999" stroke-width=".6" stroke-opacity=".7"/><path d="M690.4 457.7l0 12.2 0 8.1 0 14.8 0 17.2 0 16.9 10.6 0 16.4 0 5.3-16.3-10.9-.2-16.1-17.5-5.3-.1M690.4 457.7l9.1 12.4 4.7-12.4 15.8 12.7 6.5 8.3-7.7 14.6 3.9 17.3 12.4-17 10.8-14.6 3.8 14.8-5.5 17.1-9.1-17.3-16.3-.3-23.1-.4 13.2-14.6-9.4-8.2-9.1-.2M690.4 457.7l13.8 0 15.1 0 11.7 12.9-11-.2-20.5-.3-9.1 7.9 5.3 14.9-5.3 17.1 10.6 16.9 10.8-16.5 7-17.1-9.9-15 11.1-7.9-.7-12.7 24.6 0-12.9 12.9 14.9 8.4-19.4-.3 4.5-8.1M743.9 457.7l18.2 0-7.4 13.3 6.2 8.2 2.9-8.1 12.2-13.4 18 0-5.1 13.6 4.9 8.1-22.1-.1 17.3 14.9-1.6 17.2 18.9 .1 8.9 15.4-17.7 0 8.8-15.4 20 0 6.6 15.4-17.7 0 11.1-15.4 21.1-.1 4.6-17.3-13.3-14.7-15.7-8-19.4 0 1.9-13.7-11.5 0 9.6 13.7-14.7-.1-12.9-13.6-4.3 21.6-7.9-8.2-9.1-.1-10.8-13.3 2 21.3 15 .2-11.2 14.6 11.1 17.4-11.4 15.7-21.7 0 16.5-16 5.2 16 14.5 0 8-15.6 16.6 15.6-1.1-15.5-15.5-.1-4.3-17.3 4.1-14.7 17.2-8M762.1 457.7l1.7 13.4M762.1 457.7l13.9 0M805.5 457.7l17.5 13.7 17.3-.1-13.3-13.6 12.5 0 8.4 13.6 12.6-13.6-5.3 21.6 16.1-8.3-10.8-13.3-21 0 .8 13.6-1.6 8.1-14.9 .1 12.5 14.7-10 17.3-2.5-17.2-21.8 0 7-14.8 14.8 0-.8-8.1 4-13.7-21.5 0M860.5 457.7l15 0-4.2 13.3 9.6 8 11.2-.1 12.2-8.3-4.4-12.9 11.7 0 5.4 12.6-8.3 8.3 5.3 14.7-8.2 17.3 11.6 16.3 23 0-10.3-16.7 3.4-17.3-1.8-14.7 4.7-8.2-11.5-12.3 15.5 0 0 12.2 0 8.1 0 14.8 0 17.2-10.3 .2-24.3 .4-8.1 .2 9.2-17.4-14.8-14.5 16.6-.3 23-.4 8.7-.2-4-8-19.4 .3 7.9-12.6-13.3 0-7.3 12.9-21.5 .3 17.1-13.2-24.4 0 7.3 13.2-11.5 .1-5.3 23-10.8-14.7-16.5 .1-2.4 14.8-12.5 .1 0-14.8M940.4 457.7l-4 12.3 4-.1M754.7 471l-8.8 8M803.6 471.4l5.4 8.1 14-8.1M803.6 471.4l-9.8 8-4.8 14.8 13 .1 4.3 17.2 17.5-17.2-14.8-14.8-15.2-.1 8.2 14.9-14.6 17.1 10.1 15.5-9 0-24.6 0-3.1-15.7 6.8-17.2-17.9-.2-14.6-.2-8.6-14.9-17.6-.4-18.5-.3M840.3 471.3l7.6 0 7.3 8-3.2 14.8-15.7 .1 11.1 17.2 7.8 15.5 1.7-15.6 9.1-17.3 9.3 17.1 12.1 15.8 10.3-16.1-22.4 .3-7.6 15.8 19.7 0 13.3 0-3-16.1-11.6-17.1 6-14.8-9.3-8-1.9 8.1-14.9 15 20.1-.3 20.8-.3 7.1-.1 17.7-15.1-14.7-7.9-12.7 .3 4.4 8-1.8 14.8-1.1 17.2-5.1 16.3 16.7 0 12.7-16.7-16.1-16.9 19.5-.4 6.9-.1M847.9 471.3l-9.2 8.1M760.9 479.2l6.7 14.8 21.4 .2-17.1 17.1-11.1-.1-16.6-.3-21.5-.3 5 16.3-10.3 0-5.6-16.5-21.4-.4M760.9 479.2l10.8 .1M880.9 479l5.2 14.7-10.8 17.4-18.4 .2-9.5 .1-14.5 15.5 22.3 0 12.5 0-10.8-15.6-4.9-17.2 14-.1M940.4 478l-6.9 14.9 6.9 17.1 0 16.9" fill="none" stroke="#111" stroke-width="0.9" stroke-opacity=".9"/><polygon points="690.4,457.7 940.4,457.7 940.4,526.9 690.4,526.9" fill="none" stroke="#111" stroke-width="1.1"/><polygon points="729.6,526.9 936,526.9 936,535.7 729.6,535.7" fill="#f6f6f6" stroke="none" stroke-width="0"/><path d="M729.6 526.9l0 8.8 1.7-8.8 6.7 8.8 9.2 0 13.6 0 14.1 0-10.8-8.8-13.7 0-3.2 8.8-7.2-8.8-8.7 0-1.7 0M740 526.9l10.4 0 10.4 8.8 3.3-8.8 17.1 0-1.6 8.8-4.7 0 6.3-8.8 10.8 0 2.3 8.8 3.2-8.8-5.5 0-12.4 8.8 14.7 0 15.6 0 10.6 0 3.4-8.8-12.8 0-1.2 8.8-12.4-8.8 13.6 0 9.4 8.8 7.8 0-4.4-8.8 17.4 0 5.6 8.8 1.9-8.8-7.5 0-13 8.8 18.6 0 12.6 0 4 0 15.6 0-2.5-8.8-17.7 0 .6 8.8-10.7-8.8 10.1 0 4.6 8.8 13.1-8.8 12.4 0 1.3 8.8-11.2 0 9.9-8.8 6.9 0 11.1 8.8 1.4-8.8 15.3 0 8 0 4.3 8.8-5.4 0-18.9 0-4.7 0-16.7 0 5.6-8.8 12.5 0 3.3 8.8 12-8.8 6.9 8.8 1.1-8.8 4.3 0 0 8.8M740 526.9l-2 8.8-8.4 0" fill="none" stroke="#111" stroke-width="0.9" stroke-opacity=".9"/><path d="M811 492.8l2.9 7.3 3.7 11.1 6.8 8.2-5.8 7.5-4.5 0-.1-7.8-3-8.1 0-11 2.9 .1 10.4 .3-2.6-7.6-7.8 7.3-2.9 10.9 0 8 0 7.9 3.1 0M811 492.8l0 7.2M811 492.8l10.7 0 8.4 0-5.8 7.6 5.9 11.2 4.1 8.1-2.6 7.2-7.3-7.5 9.9 .3 10.4 .2-4.1 7 4.7 0 9.2-6.8-9.8-.2-3.9-8.1 3.8-10.9-13.8-.3-.6 11-12.6-.4-6.6-.2M830.1 492.8l9.2 0 5.3 8.1 .8 11 9.1 8.2 6.7 .1-7.1-8.1-5.6-11.1-1.9-8.2-2 8.1 3.9 .1 9 .1 1.6-8.3 9 0 4.1 8.4 2.2 11 5 8 2.3 6.7 3.4-6.8-4.1-7.9-1.6 8-2.5 6.7-10.1 0 4.4-6.7-7.6-8-6.1-11.1 14.7 .1 9.3 0-.5 11 8.4-.1 9.1 7.8-3.5 7-9.9-6.8-5.7 .1-8.2 0-10 0-5.4 6.7-1.3-6.8-.4-8 3.4-11 10.6-8.3 8.7 0 4.7 8.4 8.3-.1 7.9-.2 3.5 11 9.6-.3 8.2-.2-3.8 8.1-5.9 7.4 6.7 0 10.4 0 5.6 0 0-7.9-1.5-8 1.5-11 0 11 0 8-5.6 7.9-3.7-7.6-7.5 .2-12 .3-.8 7.1 6.9 0-6.1-7.1-2-7.9 2.1-11.1 7.5 10.8 4.4 7.9 .8 7.4 6.7-7.6-3.7-7.9 11.5-.4-7-10.7 5.5-7.5-9.5 0-2.4 7.7 1.9 10.9 4.5-11.1-4-7.5-8.8 0 6.4 7.7-13.8 .3-1.2-8-8.9 0-12.1 0 8.7 8.3-.4 11-4.3 8 13.4-.2 4.7-.1 7.6-8.2 6.3-11.1 6.4-.2 8.5-.3-3-7.2 3 0 0 7.2M830.1 492.8l.7 7.8-6.5-.2-6.7 10.8-3.6 7.9-3-.1M839.3 492.8l-8.5 7.8 10 11.2-6.5 7.9 6.3 7.2-8.9 0-13.1 0-4.6-7.8 10.4 .3 5.8-7.8 10.6 .2 4.6 .1-.7 8 .6 7 10.5 0 11 0-5.6-6.7 2.4-8 8.6-11 4.6-8.4 4.3 0 .4 8.4-7.1 11-3.2 8 5.7 6.7 4.8 0 13.3 0 7.4 0-3.9-7 2.7-8-11.8 .2-7.9-10.9M839.3 492.8l7.3 0 12.5 0-10.6 8.2-3.1 10.9 8.7 .2 9.5 .1 10.8 0 6.6 0M893.2 492.8l4.5 8.1 5.6-.1 7.4-8-8.6 0-4.4 8.1-8.3 11.2M893.2 492.8l-3.4 8.3M930.5 511l-7.8 8.3 9.3-.3M930.5 511l1.5 0M814 519.1l-3 7.8" fill="none" stroke="#222" stroke-width=".7" stroke-opacity=".8"/><path d="M729.6 526.9l0 4.4 0 4.4 .8 0 4.3-4.4-4.6-4.4-.5 4.4 .8 4.4 7.8 0 3.4-4.4 3.6 4.4 5.2 0 3.2-4.4-4-4.4-1 4.4-3.6-4.4-7.2 0 3.8 4.4 3.4-4.4 4.6 0 8.9 0 .9 4.4 6.7 4.4 .6-8.8 3.4 4.4 .9 4.4 6.6 0 9.7 0 4.5 0 8.9 0-6.2-4.4-7.4 0-4.5 0-2.2-4.4 6.8 0 4.1 0 3.2 4.4-2.7 4.4-4.7-4.4 .2 4.4-4.7-4.4-5 4.4-1.5-4.4 4.3-4.4-8.7 0 4.4 4.4-6 0-4 4.4-8.5 0 1.8-4.4 7.3-4.4-8.2 0-4.9 4.4-5 0-3.4 4.4-7 0-3.5-4.4 3.1-4.4-7.7 0-.5 0M766.7 526.9l5 0-1.6 4.4M787.2 526.9l-.1 4.4 4.2-4.4 9.9 0-.5 8.8 4 0 .6-4.4-1-4.4 7.9 0-3.2 4.4 5.8 4.4 4.8 0-1.3-4.4 6 0 1.4-4.4-6 0-7.5 0 6.1 4.4-3.5 4.4-2.6-8.8M787.2 526.9l-4.6 4.4-6.5 0-5.1 4.4-4.9 0M801.2 526.9l4.1 4.4-4.6 4.4M801.2 526.9l-6.7 4.4M801.2 526.9l3.1 0 4.7 4.4-4.3 4.4 10.1 0M819.7 526.9l4.6 4.4 8.9 0 1.1-4.4-8.6 0 7.5 4.4 1.6 4.4 6.9 0 7.1 0-4-4.4-8.8 0-2.8 0-4.1 4.4-9.5 0 4.7-4.4 4.8 4.4 5.7 0 1.2-4.4 6.3-4.4-8 0 1.7 4.4 5.7 4.4 3.1-4.4 6.4 0 6-4.4-8.9 0 2.9 4.4 5.5 4.4-7.9 0 2.4-4.4M819.7 526.9l-1.4 4.4M842.3 526.9l6 0-3.5 4.4-2.5-4.4M857.2 526.9l6.1 0-2.2 4.4 .9 4.4-5.3 0 .5-8.8 3.9 4.4 4.4 0 5.8-4.4-8 0 2.2 4.4 1.9 4.4 8.3 0 4.2-4.4 4.2-4.4-8.4 0-1.2 4.4-9 0-3.5 4.4 5.4 0 7.1-4.4 5.4 0 2.5 4.4-6.7 0-1.2-4.4-3.2-4.4 4.4 0 4.2 4.4 6.4 0 8.4 0 3.8 4.4 7.1 0 2.7-4.4 3.9-4.4 1.1 4.4-.5 4.4-7.2 0-6.2-4.4 5.5-4.4-9.2 0-7.4 0-4.2 0 2.2 4.4 2-4.4 6.4 4.4 4.7 0 8.9 0 4.5 4.4 5.4 0 5.9-4.4-5.8-4.4-5 4.4 4.9 4.4 6.1 0 3.9-4.4-4.1-4.4-5.8 0-6.1 0-7.3 0 3.4 4.4 5 0M895.7 526.9l-1 4.4-5.7 4.4-2.7-4.4-3.9 4.4 6.6 0 9.5 0 .9-4.4-3.7-4.4M918.3 526.9l-.1 8.8M924.1 526.9l9.5 0-5.4 4.4 2.5 4.4 3.5-4.4 1.8-4.4-2.4 0 .6 4.4-6 0-4.1 0 .2 4.4 6.4 0 5.3 0 0-4.4-1.8 0 1.8 4.4M924.1 526.9l0 4.4M936 526.9l0 4.4M729.6 531.3l5.1 0 6.9 0 7 0 1.8 4.4 7.2 0-4-4.4 5.8 0M805.3 531.3l3.7 0M861.1 531.3l-4.4 4.4" fill="none" stroke="#222" stroke-width=".6" stroke-opacity=".7"/><path d="M729.6 526.9V535.7H936V526.9M811 511V492.8H932V511" fill="none" stroke="#111" stroke-width="1.1"/><polygon points="690.4,451.5 940.4,451.5 940.4,458.3 690.4,458.3" fill="#151515" stroke="none" stroke-width="0"/><polygon points="643.5,474.6 690.4,474.6 690.4,503 643.5,503" fill="#f6f6f6" stroke="none" stroke-width="0"/><path d="M643.5 474.6l0 11.4 4.3 0 3.9 8 7.7 0 3.7 9 7.9 0 7.4 0 7.2-9 4.8 0-4.1-8-5 0-9.1 0-4.4-11.4-10.4 0-1.1 11.4 3.1 8 8.4 0 4.4-8 3.1-11.4 6 11.4-4.8 8 1.9 9 10.9 0 1.1-9 0-8-4.1 0-4-11.4-7 0-7.5 0-5.3 11.4-6.2 0-8.5 0-3.5-11.4-.8 0M644.3 474.6l10.1 0 1.9 11.4-4.6 8-3.6 9-4.6 0 0-9 4.3-8 6.6-11.4 3 0 5.1 11.4 5.3 8 3.2 9 5.5-9-8.7 0-4.7 9-5.7 0 2-9 3.1-8 9.7 0 4.3 8 9.1 0 .7-8 4.1-11.4-8.1 0-1 11.4 4.3 8 3.7 9 1.1 0 0-9M644.3 474.6l-.8 11.4 0 8 4.6 9 9.3 0-5.7-9-8.2 0M690.4 474.6l0 11.4" fill="none" stroke="#999" stroke-width=".6" stroke-opacity=".7"/><path d="M643.5 474.6l0 11.4 6.9 0-.6 8-1 9-5.3 0 0-9 0-8 2.2-11.4 4.7 11.4 9.4 0 3.4-11.4 4.4 0 9.2 11.4 6.1 0-6.2-11.4-9.1 0-1.4 11.4-6.4 0 4.6 8-.6 9 10.2 0 8.2 0 6.4-9 1.8 0 0-8-7.5 0-5.4 8 4.7 9 8.2 0 0-9M643.5 474.6l2.2 0 9.2 0 4.9 11.4-10 8 14.6 0 5.1 0 7.3-8-.1-11.4 10.7 0 3 11.4-1.8 8-11.1 0-8 0 4.5 9 3.5-9-.7-8-10.6 0 3.3 8-5.7 9-9.8 0 10.4-9 1.8-8-3-11.4-8.3 0-4.5 11.4-4.9 8-2 0M687.4 474.6l3 0 0 11.4M687.4 474.6l-4.5 11.4 5.7 8 1.8 9M643.5 486l2 8 3.3 9 5.2 0-4.2-9-4.3 0-2 9" fill="none" stroke="#111" stroke-width="0.9" stroke-opacity=".9"/><polygon points="643.5,474.6 690.4,474.6 690.4,503 643.5,503" fill="none" stroke="#111" stroke-width="1.1"/><path d="M645 470Q642.5 471 642.5 476V500Q643 503 646 503" fill="none" stroke="#111" stroke-width="1.2"/><polygon points="645,470 690.4,470 690.4,474.8 643,474.8" fill="#151515" stroke="none" stroke-width="0"/><polygon points="947,469.9 1066.5,469.9 1066.5,527.3 947,527.3" fill="#f6f6f6" stroke="none" stroke-width="0"/><path d="M947 469.9l2.9 10.1 7.5-10.1-5.2 0-2.3 10.1 14.4 11.9 8.4-.4 7.9-12.8-7-8.8-2.2 9.1 9.2-.3 11.9-8.8-2.2 21.1-8.9 16.3 .5 20-22.3 0-8.5 0 2.8-18.8-6.9 .4 0 18.4 4.1 0-4.1-18.4 0-16.1 0-12.6 .2 12.6-.2 0M947 469.9l5.2 0M947 469.9l0 10.3 2.9-.2 21.5-1-7.1 12.9 9.8 15.7-14.5 19.7-5.7-18.8 20.2-.9 7.3-.3-8.7-15.8 17.6-.5 15.3-12.8 6.5 0 16.9 .3 12.6 .5-4.7-9.1-7.9 8.6-9.9 12.4-11.8-.1-7.9 16.1-9 20.4-8.5 0-7.8-19.7-1.4-16.1-1.3-12.5-14-9.1 16.2 0 18.9 0 20.7 0-7.6 8.3 1.7 12.6 4.8-12.6 7.5-8.3-6.4 0-1.1 8.3 7 12.7 15.2 .4-6.4 15.9 13.7 20.1-16.1 0-16.9 0 12.4-20.3-13.7-16.2-17 .2 9.1 15.9-18 .4 9 20 18.2 0-9.2-20.4 21.6 .1 6.9 .2-2.4 20.1-4.5-20.3-1.9-16.1 8.8 16.3 16.7 .6-3 19.5 8.8 0 16.1 0 0-18.4 0-16.1 0-12.6-2.5-.1-13.2-10.2 15.7 0 0 10.3M992.5 469.9l13.1 8.3M1019.6 469.9l17.3 0 13.9 0-9.2 9.1 22.4 1.1-15.2 11.8-14.5-.6 7.3-12.3 7.2 12.9 17.7 .9-2.5-12.7 2.5-10.2M1019.6 469.9l9.4 8.6 5.3 12.8 10.3 16.5 21.9 1.1-16.1 18.4-5.8-19.5 4.2-15.9 17.7 17M949.9 480l-2.7 12.8 17.1-.9-10.4 16.6-6.7-15.7-.2 16.1M980.6 478.7l9.7 12.3" fill="none" stroke="#999" stroke-width=".6" stroke-opacity=".7"/><path d="M947 469.9l0 10.3 2.8 .1 13.3 13.3-4.5 15.9-8.8 17.8 8.8 0 19.5-16.9-15-16.8-12-.6-4.1-.2 0 16.1 11.6 .6-7.5-16.5-1.3-12.7 14.3-10.4 17.1 0-11.8 11.4-6.3 12.3 12.3 .6 28 .6 16.9-.1-12.4-12.5-12.7-12.3-2.3 12.2 15 .1 21.3-.3 15.6-.6 14.3-.7 7.4-.4-1.9-10.3-5.5 10.7 4.2 12.4-14.4 .7-11.2 16.6-6.7 17-19.3 0-8.2 0-21.8 0 9.1-16.6-12.7-.3 3.6 16.9-23.1 0 0-17.8 19.5 .9-2.7-16.2 15.4 16.5 17.1 .2-4.5-16.1-10.5-12.7-17.5 12.1-6-12.9-5.3-11.4-17.1 0 2.8 10.4-2.8 12.5 0-12.6M981.2 469.9l14 0 15.4 0-2.7 12.3 18.4-12.3 2.9 12 .7 12.5-9.6 16.4-8.6 16.5-3.8-16.4-4.4 16.4-12.7-16.6 12.6-15.9 4.5-12.6M981.2 469.9l11.7 12.2-23.5-.8-19.6-1M1010.6 469.9l15.7 0 21.4 0-2.9 11.4 4.1 12.4-19 .7-9.6 .3 0 16.1-12.4 .1 12.4-16.2 8.9-12.8M1026.3 469.9l18.5 11.4-14.9 13.1 7.8 15.9-17.4 .5 10.7 16.5 12.6 0 22.9 0 0-18.4 0-16.1-3.2 .2 3.2 15.9-10.4 .5-12.5 17.9-5.9-17 18.4-.9-7.2-15.7 10.2-13.1-11.4-10.7 16.9 0 1.9 0 0 10.3 0 12.6M1066.5 480.2l-3.2 12.8-7.2 16.4 10.4 17.9M951.1 493l-4.1 15.9 2.8 18.4-2.8 0 0-18.4" fill="none" stroke="#111" stroke-width="0.9" stroke-opacity=".9"/><polygon points="947,469.9 1066.5,469.9 1066.5,527.3 947,527.3" fill="none" stroke="#111" stroke-width="1.1"/><polygon points="937.9,463 1066.5,463 1066.5,469.9 937.9,469.9" fill="#151515" stroke="none" stroke-width="0"/><polygon points="938,469.9 947,469.9 947,492.8 938,492.8" fill="#f6f6f6" stroke="none" stroke-width="0"/><path d="M938 469.9l2.8 11.1-2.8 0 0 11.8 3.6 0-.8-11.8 5.7 0-3.7-11.1-4.8 0 0 11.1M942.8 469.9l3.8 0 .4 11.1 0-11.1-.4 0-.1 11.1 .5 0 0 11.8-5.4 0 4.9-11.8 .5 11.8M942.8 469.9l-2 11.1-2.8 11.8" fill="none" stroke="#111" stroke-width="0.9" stroke-opacity=".9"/><polygon points="938,469.9 947,469.9 947,492.8 938,492.8" fill="none" stroke="#111" stroke-width="0.8"/><path d="M933.3 470V535.5" stroke="#111" stroke-width="1.6"/><path d="M209.3 293.9V277" stroke="#2a2" stroke-width="1.6"/><path d="M209.3 272.5L207 279H211.6Z" fill="#2a2"/><path d="M209.3 293.9H225" stroke="#e22" stroke-width="1.6"/><path d="M230 293.9L223.5 291.6V296.2Z" fill="#e22"/><circle cx="209.3" cy="293.9" r="2.2" fill="#11c"/><text x="209.5" y="271" font-size="6.5" font-family="Liberation Sans" fill="#222">Y</text><text x="231" y="293" font-size="6.5" font-family="Liberation Sans" fill="#222">X</text><text x="211" y="291" font-size="5.5" font-family="Liberation Sans" fill="#222">Z</text><path d="M657 293.5V281" stroke="#22c" stroke-width="1.6"/><path d="M657 277L654.8 283H659.2Z" fill="#22c"/><path d="M657 293.5L668 285.5" stroke="#2a2" stroke-width="1.6"/><path d="M672 282.5L665 284 667.6 287.6Z" fill="#2a2"/><path d="M657 293.5L668.5 301.5" stroke="#e22" stroke-width="1.6"/><path d="M673 304.5L665.6 303.4 668.3 299.8Z" fill="#e22"/><circle cx="657" cy="293.5" r="2" fill="#c00"/><text x="659" y="276" font-size="6" font-family="Liberation Sans" fill="#222">Z</text><text x="674" y="282" font-size="6" font-family="Liberation Sans" fill="#222">Y</text><text x="675" y="304" font-size="6" font-family="Liberation Sans" fill="#222">X</text><path d="M209 526.7V511" stroke="#22c" stroke-width="1.6"/><path d="M209 506.5L206.7 513H211.3Z" fill="#22c"/><path d="M209 526.7H224.5" stroke="#e22" stroke-width="1.6"/><path d="M229.5 526.7L223 524.4V529Z" fill="#e22"/><circle cx="209" cy="526.7" r="2" fill="#c00"/><text x="211" y="505" font-size="6.5" font-family="Liberation Sans" fill="#222">Z</text><text x="231" y="525" font-size="6.5" font-family="Liberation Sans" fill="#222">X</text><text x="212" y="524" font-size="5" font-family="Liberation Sans" fill="#222">Y</text><path d="M657 526V510" stroke="#22c" stroke-width="1.6"/><path d="M657 505.5L654.7 512H659.3Z" fill="#22c"/><path d="M657 526H672.5" stroke="#2a2" stroke-width="1.6"/><path d="M677.5 526L671 523.7V528.3Z" fill="#2a2"/><circle cx="657" cy="526" r="2" fill="#c00"/><text x="659" y="522" font-size="5.5" font-family="Liberation Sans" fill="#222">X</text><text x="681" y="524" font-size="6" font-family="Liberation Sans" fill="#222">Y</text><g fill="none" stroke="#111" stroke-width="1.2"><path d="M641.5 333.5H637V327.5H643V330" stroke-width=".9"/><circle cx="644.8" cy="334.5" r="3.2"/><path d="M647.2 337L650.2 340" stroke-width="1.6"/><path d="M644.8 334.5L646 333" stroke-width=".8"/><circle cx="642.5" cy="352.5" r="4.6" stroke-width="1.3"/><path d="M645.8 355.8L649.8 359.8" stroke-width="1.8"/><path d="M643.5 368.5V381M637 374.8H650"/><path d="M643.5 367.3L641.5 370H645.5ZM643.5 382.3L641.5 379.6H645.5ZM635.8 374.8L638.5 372.8V376.8ZM651.2 374.8L648.5 372.8V376.8Z" fill="#111" stroke="none"/><path d="M639.5 391.5A5.4 5.4 0 1 0 643.8 390.5" stroke-width="1.4"/><path d="M637.5 389.5L641.8 389.2 640.5 393.5Z" fill="#111" stroke="none"/><path d="M638 414L640 411.5 642 414M646 414L648 411.5 650 414M638 421L640 423.5 642 421M646 421L648 423.5 650 421" stroke-width="1.1"/></g><path d="M1024 363Q1018 364 1019 365.5Q1030 369 1043 369Q1058 369 1068 365.5Q1069 364 1063 363" fill="none" stroke="#ccc" stroke-width=".8"/><rect x="1032.5" y="342.8" width="24" height="24" fill="#9a9a9a" stroke="#8a8a8a" stroke-width="1"/><rect x="1035.5" y="345.5" width="18" height="18.5" fill="#b8b8b8" stroke="#a8a8a8" stroke-width=".5"/><text x="1036.5" y="357.2" font-size="5.2" font-family="Liberation Sans" fill="#f4f4f4" textLength="16">RIGHT</text><path d="M1040 367.5H1042M1044.5 367.5H1046.5M1048.5 367.5H1050.5" stroke="#777" stroke-width="1.2"/></svg>
<svg style="left:850px;top:520px;filter:drop-shadow(0 0 1.2px rgba(0,0,0,.55))" width="60" height="45" viewBox="0 0 60 45"><g fill="#fff"><ellipse cx="22" cy="21.5" rx="12.5" ry="10.5"/><path d="M14 28L12 35 20 30Z"/></g><g fill="#fff" stroke="#ccc" stroke-width=".6"><ellipse cx="35.5" cy="28" rx="12" ry="10.5"/><path d="M41 36L45 41 37 38Z"/></g><g fill="#999"><circle cx="18" cy="17.5" r="1.5"/><circle cx="26" cy="17.5" r="1.5"/><circle cx="31" cy="25" r="1.4"/><circle cx="39" cy="25" r="1.4"/></g></svg>
<svg style="left:895px;top:525px" width="160" height="40" viewBox="0 0 160 40"><defs><filter id="wmb" x="-5%" y="-20%" width="110%" height="140%"><feGaussianBlur stdDeviation="0.9"/></filter></defs><text x="10.5" y="31" font-size="25.6" font-family="Liberation Sans" letter-spacing="0.6" fill="none" stroke="#6a6a6a" stroke-width="2.2" filter="url(#wmb)">Rocscience</text><text x="10.5" y="31" font-size="25.6" font-family="Liberation Sans" letter-spacing="0.6" fill="#fff" stroke="#fff" stroke-width=".5">Rocscience</text></svg>
</body></html>
